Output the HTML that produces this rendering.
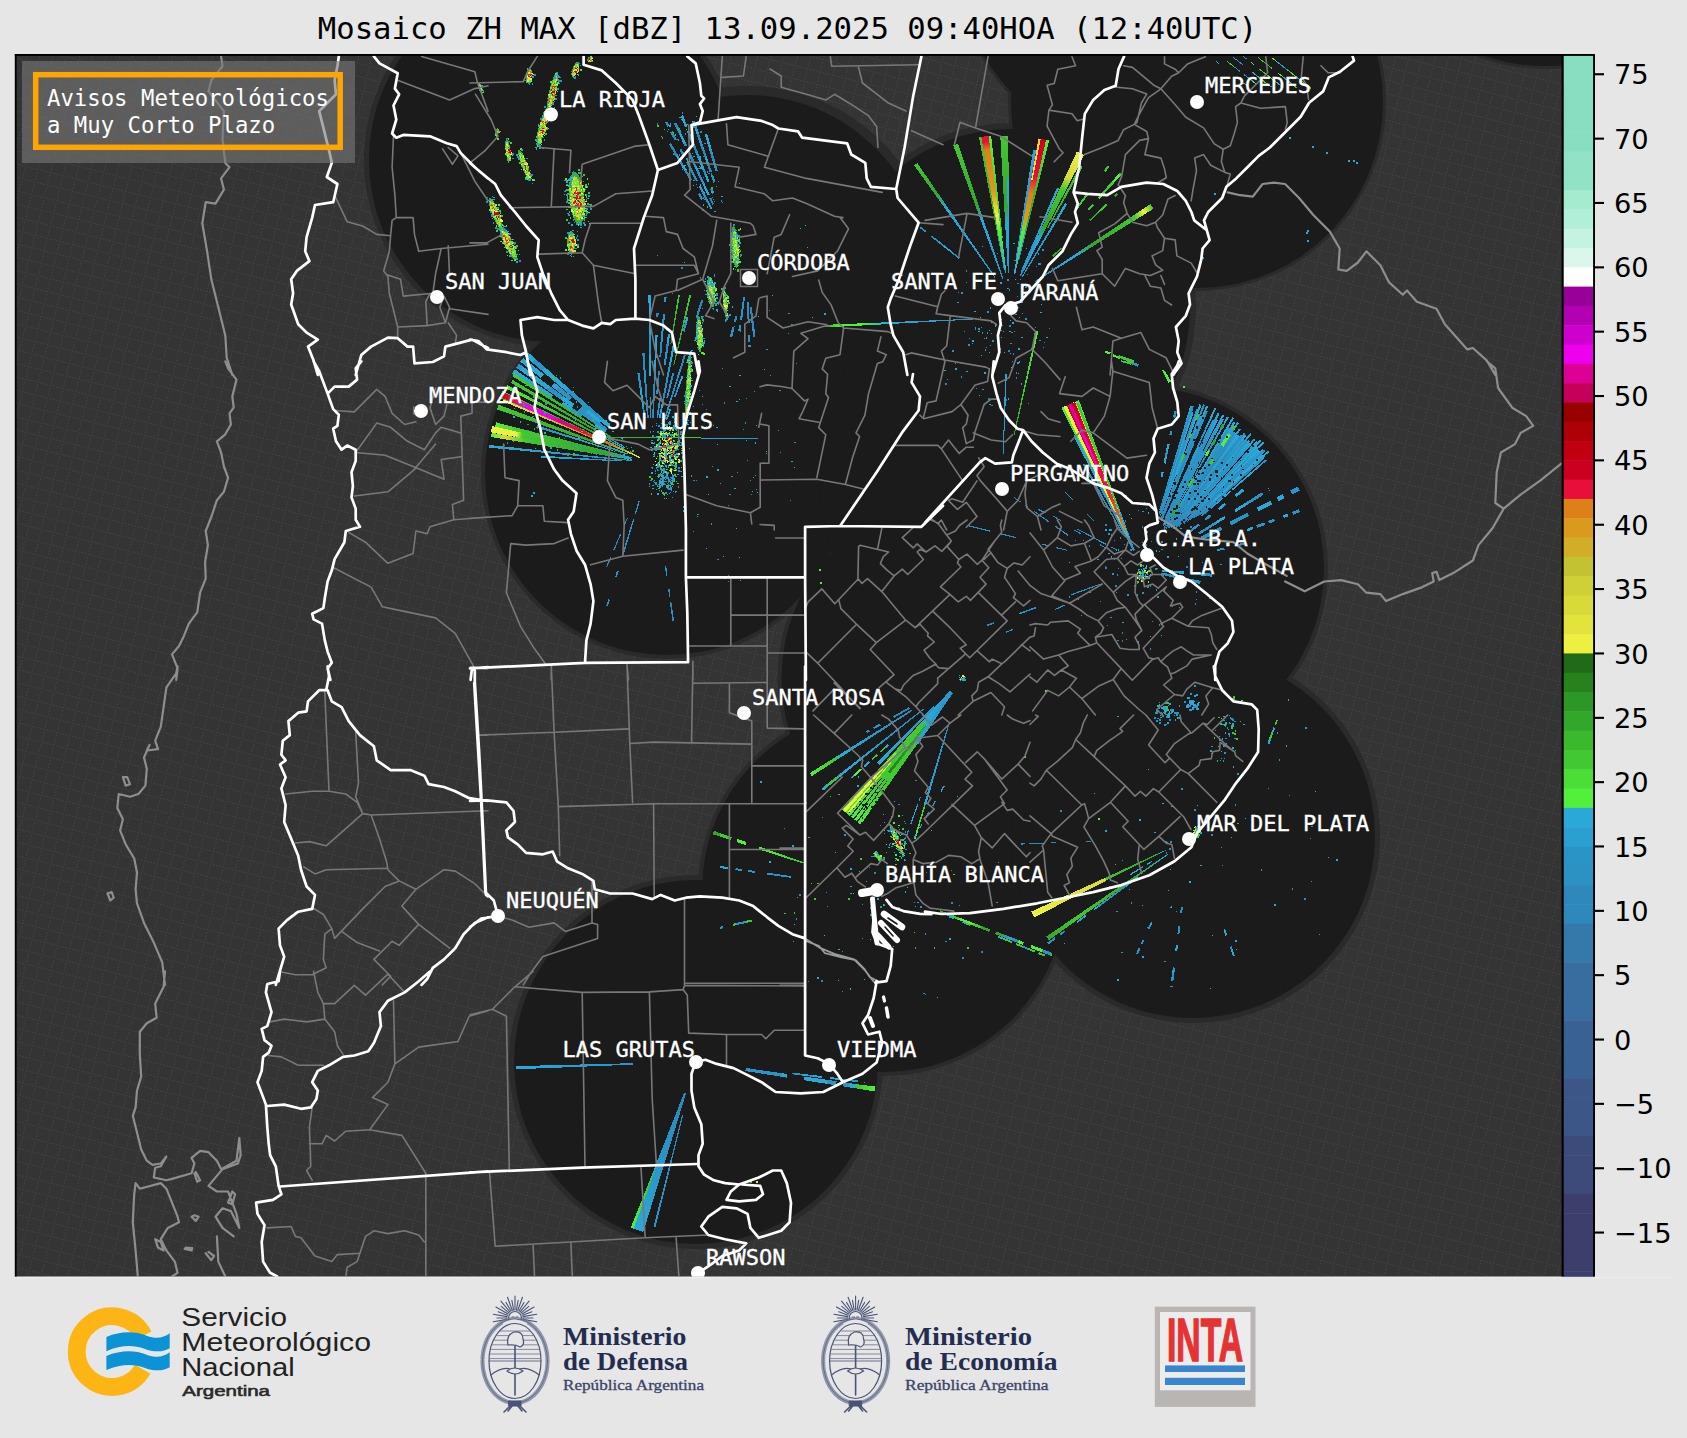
<!DOCTYPE html>
<html lang="es"><head><meta charset="utf-8"><title>Mosaico ZH MAX</title>
<style>html,body{margin:0;padding:0;background:#e6e6e6;}svg{display:block}</style></head>
<body>
<svg width="1687" height="1438" viewBox="0 0 1687 1438">
<defs>
<pattern id="tex" width="12.9" height="12.9" patternUnits="userSpaceOnUse" patternTransform="rotate(14)"><path d="M0 .5H12.9M.5 0V12.9" stroke="#666666" stroke-width="1" stroke-dasharray="1 2.225" fill="none"/></pattern>
<clipPath id="mapclip"><rect x="16" y="55" width="1546.5" height="1221.8"/></clipPath>
<linearGradient id="g1" gradientUnits="userSpaceOnUse" x1="1002.9" y1="279.1" x2="955.8" y2="144.7"><stop offset="0.00" stop-color="#2b94c6"/><stop offset="0.45" stop-color="#2aa8d8"/><stop offset="0.55" stop-color="#33a62c"/><stop offset="1.00" stop-color="#42c832"/></linearGradient>
<linearGradient id="g2" gradientUnits="userSpaceOnUse" x1="1004.4" y1="268.4" x2="981.9" y2="136.8"><stop offset="0.00" stop-color="#2b94c6"/><stop offset="0.40" stop-color="#33a62c"/><stop offset="1.00" stop-color="#42c832"/></linearGradient>
<linearGradient id="g3" gradientUnits="userSpaceOnUse" x1="1005.8" y1="273.3" x2="985.3" y2="136.3"><stop offset="0.00" stop-color="#2aa8d8"/><stop offset="0.30" stop-color="#52f03c"/><stop offset="0.42" stop-color="#eef040"/><stop offset="0.60" stop-color="#da9a1e"/><stop offset="0.90" stop-color="#de8018"/><stop offset="0.96" stop-color="#e8103a"/><stop offset="1.00" stop-color="#e8103a"/></linearGradient>
<linearGradient id="g4" gradientUnits="userSpaceOnUse" x1="1002.3" y1="238.4" x2="989.8" y2="135.7"><stop offset="0.00" stop-color="#42c832"/><stop offset="1.00" stop-color="#52f03c"/></linearGradient>
<linearGradient id="g5" gradientUnits="userSpaceOnUse" x1="1008.7" y1="273.0" x2="1004.3" y2="136.3"><stop offset="0.00" stop-color="#2b94c6"/><stop offset="0.35" stop-color="#2aa8d8"/><stop offset="0.50" stop-color="#33a62c"/><stop offset="1.00" stop-color="#42c832"/></linearGradient>
<linearGradient id="g6" gradientUnits="userSpaceOnUse" x1="1018.7" y1="259.1" x2="1046.6" y2="140.1"><stop offset="0.00" stop-color="#2b94c6"/><stop offset="0.40" stop-color="#33a62c"/><stop offset="1.00" stop-color="#52f03c"/></linearGradient>
<linearGradient id="g7" gradientUnits="userSpaceOnUse" x1="1016.2" y1="258.6" x2="1034.6" y2="150.1"><stop offset="0.00" stop-color="#2b94c6"/><stop offset="1.00" stop-color="#2aa8d8"/></linearGradient>
<linearGradient id="g8" gradientUnits="userSpaceOnUse" x1="1014.5" y1="273.5" x2="1042.2" y2="139.1"><stop offset="0.00" stop-color="#2aa8d8"/><stop offset="0.30" stop-color="#52f03c"/><stop offset="0.42" stop-color="#da9a1e"/><stop offset="0.60" stop-color="#de8018"/><stop offset="0.72" stop-color="#e8103a"/><stop offset="1.00" stop-color="#cb0020"/></linearGradient>
<linearGradient id="g9" gradientUnits="userSpaceOnUse" x1="1031.8" y1="180.1" x2="1039.7" y2="138.6"><stop offset="0.00" stop-color="#eef040"/><stop offset="1.00" stop-color="#d7da38"/></linearGradient>
<linearGradient id="g10" gradientUnits="userSpaceOnUse" x1="1020.5" y1="275.6" x2="1080.6" y2="153.1"><stop offset="0.00" stop-color="#2b94c6"/><stop offset="0.30" stop-color="#2aa8d8"/><stop offset="0.40" stop-color="#33a62c"/><stop offset="0.70" stop-color="#42c832"/><stop offset="0.80" stop-color="#d7da38"/><stop offset="1.00" stop-color="#eef040"/></linearGradient>
<linearGradient id="g11" gradientUnits="userSpaceOnUse" x1="1047.8" y1="227.8" x2="1081.4" y2="166.3"><stop offset="0.00" stop-color="#33a62c"/><stop offset="1.00" stop-color="#42c832"/></linearGradient>
<linearGradient id="g12" gradientUnits="userSpaceOnUse" x1="1021.6" y1="270.6" x2="1058.0" y2="188.2"><stop offset="0.00" stop-color="#2b94c6"/><stop offset="1.00" stop-color="#2aa8d8"/></linearGradient>
<linearGradient id="g13" gradientUnits="userSpaceOnUse" x1="995.2" y1="277.5" x2="915.8" y2="164.3"><stop offset="0.00" stop-color="#2b94c6"/><stop offset="0.60" stop-color="#2aa8d8"/><stop offset="0.75" stop-color="#33a62c"/><stop offset="1.00" stop-color="#42c832"/></linearGradient>
<linearGradient id="g14" gradientUnits="userSpaceOnUse" x1="1034.7" y1="281.8" x2="1152.1" y2="206.4"><stop offset="0.00" stop-color="#2b94c6"/><stop offset="0.35" stop-color="#2aa8d8"/><stop offset="0.50" stop-color="#33a62c"/><stop offset="0.85" stop-color="#42c832"/><stop offset="0.93" stop-color="#eef040"/><stop offset="1.00" stop-color="#42c832"/></linearGradient>
<linearGradient id="g15" gradientUnits="userSpaceOnUse" x1="1022.4" y1="276.6" x2="1066.2" y2="203.7"><stop offset="0.00" stop-color="#2b94c6"/><stop offset="1.00" stop-color="#2aa8d8"/></linearGradient>
<linearGradient id="g16" gradientUnits="userSpaceOnUse" x1="975.0" y1="319.0" x2="829.0" y2="326.0"><stop offset="0.00" stop-color="#2b94c6"/><stop offset="0.60" stop-color="#2aa8d8"/><stop offset="0.78" stop-color="#52f03c"/><stop offset="0.90" stop-color="#52f03c"/><stop offset="1.00" stop-color="#42c832"/></linearGradient>
<linearGradient id="g17" gradientUnits="userSpaceOnUse" x1="1014.0" y1="435.3" x2="1037.3" y2="330.9"><stop offset="0.00" stop-color="#33a62c"/><stop offset="1.00" stop-color="#52f03c"/></linearGradient>
<linearGradient id="g18" gradientUnits="userSpaceOnUse" x1="1003.2" y1="454.0" x2="1006.0" y2="374.1"><stop offset="0.00" stop-color="#2b94c6"/><stop offset="1.00" stop-color="#2aa8d8"/></linearGradient>
<linearGradient id="g19" gradientUnits="userSpaceOnUse" x1="1159.7" y1="510.5" x2="1191.1" y2="406.2"><stop offset="0.00" stop-color="#2e88ba"/><stop offset="0.30" stop-color="#2b94c6"/><stop offset="0.75" stop-color="#2b94c6"/><stop offset="1.00" stop-color="#2aa8d8"/></linearGradient>
<linearGradient id="g20" gradientUnits="userSpaceOnUse" x1="1159.5" y1="513.0" x2="1192.9" y2="406.2"><stop offset="0.00" stop-color="#2e88ba"/><stop offset="0.30" stop-color="#2e88ba"/><stop offset="0.75" stop-color="#2e88ba"/><stop offset="1.00" stop-color="#2b94c6"/></linearGradient>
<linearGradient id="g21" gradientUnits="userSpaceOnUse" x1="1159.7" y1="514.2" x2="1192.6" y2="412.4"><stop offset="0.00" stop-color="#2e88ba"/><stop offset="0.30" stop-color="#2aa8d8"/><stop offset="0.75" stop-color="#2aa8d8"/><stop offset="1.00" stop-color="#2aa8d8"/></linearGradient>
<linearGradient id="g22" gradientUnits="userSpaceOnUse" x1="1161.1" y1="511.8" x2="1185.2" y2="439.5"><stop offset="0.00" stop-color="#2e88ba"/><stop offset="0.30" stop-color="#2b94c6"/><stop offset="0.75" stop-color="#2b94c6"/><stop offset="1.00" stop-color="#2b94c6"/></linearGradient>
<linearGradient id="g23" gradientUnits="userSpaceOnUse" x1="1160.1" y1="516.4" x2="1197.0" y2="409.2"><stop offset="0.00" stop-color="#2e88ba"/><stop offset="0.30" stop-color="#2b94c6"/><stop offset="0.75" stop-color="#2b94c6"/><stop offset="1.00" stop-color="#2b94c6"/></linearGradient>
<linearGradient id="g24" gradientUnits="userSpaceOnUse" x1="1161.7" y1="513.5" x2="1200.3" y2="404.7"><stop offset="0.00" stop-color="#2e88ba"/><stop offset="0.30" stop-color="#2aa8d8"/><stop offset="0.75" stop-color="#2aa8d8"/><stop offset="1.00" stop-color="#2aa8d8"/></linearGradient>
<linearGradient id="g25" gradientUnits="userSpaceOnUse" x1="1161.0" y1="518.6" x2="1203.9" y2="404.6"><stop offset="0.00" stop-color="#2e88ba"/><stop offset="0.30" stop-color="#2b94c6"/><stop offset="0.75" stop-color="#2b94c6"/><stop offset="1.00" stop-color="#2b94c6"/></linearGradient>
<linearGradient id="g26" gradientUnits="userSpaceOnUse" x1="1162.6" y1="515.8" x2="1201.3" y2="416.1"><stop offset="0.00" stop-color="#2e88ba"/><stop offset="0.30" stop-color="#2b94c6"/><stop offset="0.75" stop-color="#2b94c6"/><stop offset="1.00" stop-color="#2aa8d8"/></linearGradient>
<linearGradient id="g27" gradientUnits="userSpaceOnUse" x1="1162.2" y1="518.4" x2="1207.1" y2="405.9"><stop offset="0.00" stop-color="#2e88ba"/><stop offset="0.30" stop-color="#2e88ba"/><stop offset="0.75" stop-color="#2e88ba"/><stop offset="1.00" stop-color="#2aa8d8"/></linearGradient>
<linearGradient id="g28" gradientUnits="userSpaceOnUse" x1="1161.8" y1="520.8" x2="1206.9" y2="410.8"><stop offset="0.00" stop-color="#2e88ba"/><stop offset="0.30" stop-color="#2b94c6"/><stop offset="0.75" stop-color="#2b94c6"/><stop offset="1.00" stop-color="#2b94c6"/></linearGradient>
<linearGradient id="g29" gradientUnits="userSpaceOnUse" x1="1164.7" y1="519.3" x2="1215.4" y2="408.0"><stop offset="0.00" stop-color="#2e88ba"/><stop offset="0.30" stop-color="#2b94c6"/><stop offset="0.75" stop-color="#2b94c6"/><stop offset="1.00" stop-color="#2aa8d8"/></linearGradient>
<linearGradient id="g30" gradientUnits="userSpaceOnUse" x1="1164.0" y1="521.9" x2="1198.8" y2="447.5"><stop offset="0.00" stop-color="#2e88ba"/><stop offset="0.30" stop-color="#2b94c6"/><stop offset="0.75" stop-color="#2b94c6"/><stop offset="1.00" stop-color="#2aa8d8"/></linearGradient>
<linearGradient id="g31" gradientUnits="userSpaceOnUse" x1="1163.3" y1="524.6" x2="1213.5" y2="419.8"><stop offset="0.00" stop-color="#2e88ba"/><stop offset="0.30" stop-color="#2b94c6"/><stop offset="0.75" stop-color="#2b94c6"/><stop offset="1.00" stop-color="#2b94c6"/></linearGradient>
<linearGradient id="g32" gradientUnits="userSpaceOnUse" x1="1162.9" y1="526.4" x2="1218.6" y2="413.1"><stop offset="0.00" stop-color="#2e88ba"/><stop offset="0.30" stop-color="#2b94c6"/><stop offset="0.75" stop-color="#2b94c6"/><stop offset="1.00" stop-color="#2aa8d8"/></linearGradient>
<linearGradient id="g33" gradientUnits="userSpaceOnUse" x1="1163.9" y1="525.4" x2="1217.0" y2="419.9"><stop offset="0.00" stop-color="#2e88ba"/><stop offset="0.30" stop-color="#2b94c6"/><stop offset="0.75" stop-color="#2b94c6"/><stop offset="1.00" stop-color="#2aa8d8"/></linearGradient>
<linearGradient id="g34" gradientUnits="userSpaceOnUse" x1="1164.5" y1="525.4" x2="1202.6" y2="451.3"><stop offset="0.00" stop-color="#2e88ba"/><stop offset="0.30" stop-color="#2b94c6"/><stop offset="0.75" stop-color="#2b94c6"/><stop offset="1.00" stop-color="#2b94c6"/></linearGradient>
<linearGradient id="g35" gradientUnits="userSpaceOnUse" x1="1165.3" y1="524.9" x2="1223.2" y2="415.0"><stop offset="0.00" stop-color="#2e88ba"/><stop offset="0.30" stop-color="#2b94c6"/><stop offset="0.75" stop-color="#2b94c6"/><stop offset="1.00" stop-color="#2aa8d8"/></linearGradient>
<linearGradient id="g36" gradientUnits="userSpaceOnUse" x1="1164.0" y1="528.2" x2="1223.0" y2="418.8"><stop offset="0.00" stop-color="#2e88ba"/><stop offset="0.30" stop-color="#2b94c6"/><stop offset="0.75" stop-color="#2b94c6"/><stop offset="1.00" stop-color="#2aa8d8"/></linearGradient>
<linearGradient id="g37" gradientUnits="userSpaceOnUse" x1="1164.2" y1="529.6" x2="1227.8" y2="417.0"><stop offset="0.00" stop-color="#2e88ba"/><stop offset="0.30" stop-color="#2b94c6"/><stop offset="0.75" stop-color="#2b94c6"/><stop offset="1.00" stop-color="#2aa8d8"/></linearGradient>
<linearGradient id="g38" gradientUnits="userSpaceOnUse" x1="1166.1" y1="528.2" x2="1200.4" y2="470.1"><stop offset="0.00" stop-color="#2e88ba"/><stop offset="0.30" stop-color="#2b94c6"/><stop offset="0.75" stop-color="#2b94c6"/><stop offset="1.00" stop-color="#2aa8d8"/></linearGradient>
<linearGradient id="g39" gradientUnits="userSpaceOnUse" x1="1165.6" y1="529.9" x2="1233.2" y2="417.9"><stop offset="0.00" stop-color="#2e88ba"/><stop offset="0.30" stop-color="#2aa8d8"/><stop offset="0.75" stop-color="#2aa8d8"/><stop offset="1.00" stop-color="#2aa8d8"/></linearGradient>
<linearGradient id="g40" gradientUnits="userSpaceOnUse" x1="1167.7" y1="527.3" x2="1229.0" y2="427.8"><stop offset="0.00" stop-color="#2e88ba"/><stop offset="0.30" stop-color="#2b94c6"/><stop offset="0.75" stop-color="#2b94c6"/><stop offset="1.00" stop-color="#2b94c6"/></linearGradient>
<linearGradient id="g41" gradientUnits="userSpaceOnUse" x1="1168.1" y1="527.6" x2="1234.3" y2="422.4"><stop offset="0.00" stop-color="#2e88ba"/><stop offset="0.30" stop-color="#2b94c6"/><stop offset="0.75" stop-color="#2b94c6"/><stop offset="1.00" stop-color="#2aa8d8"/></linearGradient>
<linearGradient id="g42" gradientUnits="userSpaceOnUse" x1="1169.8" y1="525.8" x2="1232.7" y2="428.0"><stop offset="0.00" stop-color="#2e88ba"/><stop offset="0.30" stop-color="#2b94c6"/><stop offset="0.75" stop-color="#2b94c6"/><stop offset="1.00" stop-color="#2aa8d8"/></linearGradient>
<linearGradient id="g43" gradientUnits="userSpaceOnUse" x1="1169.7" y1="526.8" x2="1238.2" y2="422.6"><stop offset="0.00" stop-color="#2e88ba"/><stop offset="0.30" stop-color="#2e88ba"/><stop offset="0.75" stop-color="#2e88ba"/><stop offset="1.00" stop-color="#2aa8d8"/></linearGradient>
<linearGradient id="g44" gradientUnits="userSpaceOnUse" x1="1169.3" y1="528.3" x2="1234.0" y2="431.9"><stop offset="0.00" stop-color="#2e88ba"/><stop offset="0.30" stop-color="#2b94c6"/><stop offset="0.75" stop-color="#2b94c6"/><stop offset="1.00" stop-color="#2b94c6"/></linearGradient>
<linearGradient id="g45" gradientUnits="userSpaceOnUse" x1="1170.9" y1="526.7" x2="1234.9" y2="433.4"><stop offset="0.00" stop-color="#2e88ba"/><stop offset="0.30" stop-color="#2e88ba"/><stop offset="0.75" stop-color="#2e88ba"/><stop offset="1.00" stop-color="#2b94c6"/></linearGradient>
<linearGradient id="g46" gradientUnits="userSpaceOnUse" x1="1172.0" y1="526.1" x2="1239.9" y2="428.9"><stop offset="0.00" stop-color="#2e88ba"/><stop offset="0.30" stop-color="#2e88ba"/><stop offset="0.75" stop-color="#2e88ba"/><stop offset="1.00" stop-color="#2aa8d8"/></linearGradient>
<linearGradient id="g47" gradientUnits="userSpaceOnUse" x1="1170.8" y1="528.7" x2="1237.7" y2="434.8"><stop offset="0.00" stop-color="#2e88ba"/><stop offset="0.30" stop-color="#2aa8d8"/><stop offset="0.75" stop-color="#2aa8d8"/><stop offset="1.00" stop-color="#2aa8d8"/></linearGradient>
<linearGradient id="g48" gradientUnits="userSpaceOnUse" x1="1173.5" y1="525.7" x2="1239.0" y2="435.8"><stop offset="0.00" stop-color="#2e88ba"/><stop offset="0.30" stop-color="#2b94c6"/><stop offset="0.75" stop-color="#2b94c6"/><stop offset="1.00" stop-color="#2aa8d8"/></linearGradient>
<linearGradient id="g49" gradientUnits="userSpaceOnUse" x1="1175.2" y1="524.3" x2="1241.7" y2="434.8"><stop offset="0.00" stop-color="#2e88ba"/><stop offset="0.30" stop-color="#2e88ba"/><stop offset="0.75" stop-color="#2e88ba"/><stop offset="1.00" stop-color="#2b94c6"/></linearGradient>
<linearGradient id="g50" gradientUnits="userSpaceOnUse" x1="1172.8" y1="528.4" x2="1244.9" y2="433.1"><stop offset="0.00" stop-color="#2e88ba"/><stop offset="0.30" stop-color="#2b94c6"/><stop offset="0.75" stop-color="#2b94c6"/><stop offset="1.00" stop-color="#2b94c6"/></linearGradient>
<linearGradient id="g51" gradientUnits="userSpaceOnUse" x1="1173.3" y1="528.5" x2="1245.5" y2="435.0"><stop offset="0.00" stop-color="#2e88ba"/><stop offset="0.30" stop-color="#2b94c6"/><stop offset="0.75" stop-color="#2b94c6"/><stop offset="1.00" stop-color="#2aa8d8"/></linearGradient>
<linearGradient id="g52" gradientUnits="userSpaceOnUse" x1="1175.8" y1="526.1" x2="1244.1" y2="439.5"><stop offset="0.00" stop-color="#2e88ba"/><stop offset="0.30" stop-color="#2b94c6"/><stop offset="0.75" stop-color="#2b94c6"/><stop offset="1.00" stop-color="#2b94c6"/></linearGradient>
<linearGradient id="g53" gradientUnits="userSpaceOnUse" x1="1174.6" y1="528.5" x2="1251.1" y2="433.3"><stop offset="0.00" stop-color="#2e88ba"/><stop offset="0.30" stop-color="#2aa8d8"/><stop offset="0.75" stop-color="#2aa8d8"/><stop offset="1.00" stop-color="#2b94c6"/></linearGradient>
<linearGradient id="g54" gradientUnits="userSpaceOnUse" x1="1175.8" y1="527.8" x2="1247.2" y2="440.7"><stop offset="0.00" stop-color="#2e88ba"/><stop offset="0.30" stop-color="#2b94c6"/><stop offset="0.75" stop-color="#2b94c6"/><stop offset="1.00" stop-color="#2b94c6"/></linearGradient>
<linearGradient id="g55" gradientUnits="userSpaceOnUse" x1="1176.8" y1="527.4" x2="1249.1" y2="440.9"><stop offset="0.00" stop-color="#2e88ba"/><stop offset="0.30" stop-color="#2b94c6"/><stop offset="0.75" stop-color="#2b94c6"/><stop offset="1.00" stop-color="#2aa8d8"/></linearGradient>
<linearGradient id="g56" gradientUnits="userSpaceOnUse" x1="1178.7" y1="525.9" x2="1249.4" y2="443.0"><stop offset="0.00" stop-color="#2e88ba"/><stop offset="0.30" stop-color="#2b94c6"/><stop offset="0.75" stop-color="#2b94c6"/><stop offset="1.00" stop-color="#2aa8d8"/></linearGradient>
<linearGradient id="g57" gradientUnits="userSpaceOnUse" x1="1179.1" y1="526.3" x2="1254.9" y2="439.1"><stop offset="0.00" stop-color="#2e88ba"/><stop offset="0.30" stop-color="#2b94c6"/><stop offset="0.75" stop-color="#2b94c6"/><stop offset="1.00" stop-color="#2aa8d8"/></linearGradient>
<linearGradient id="g58" gradientUnits="userSpaceOnUse" x1="1183.6" y1="523.0" x2="1257.3" y2="441.4"><stop offset="0.00" stop-color="#2e88ba"/><stop offset="0.30" stop-color="#2b94c6"/><stop offset="0.75" stop-color="#2b94c6"/><stop offset="1.00" stop-color="#2aa8d8"/></linearGradient>
<linearGradient id="g59" gradientUnits="userSpaceOnUse" x1="1183.7" y1="523.7" x2="1260.6" y2="440.2"><stop offset="0.00" stop-color="#2e88ba"/><stop offset="0.30" stop-color="#2b94c6"/><stop offset="0.75" stop-color="#2b94c6"/><stop offset="1.00" stop-color="#2aa8d8"/></linearGradient>
<linearGradient id="g60" gradientUnits="userSpaceOnUse" x1="1188.3" y1="519.7" x2="1256.9" y2="446.6"><stop offset="0.00" stop-color="#2e88ba"/><stop offset="0.30" stop-color="#2aa8d8"/><stop offset="0.75" stop-color="#2aa8d8"/><stop offset="1.00" stop-color="#2aa8d8"/></linearGradient>
<linearGradient id="g61" gradientUnits="userSpaceOnUse" x1="1187.1" y1="521.9" x2="1263.3" y2="442.3"><stop offset="0.00" stop-color="#2e88ba"/><stop offset="0.30" stop-color="#2b94c6"/><stop offset="0.75" stop-color="#2b94c6"/><stop offset="1.00" stop-color="#2aa8d8"/></linearGradient>
<linearGradient id="g62" gradientUnits="userSpaceOnUse" x1="1189.8" y1="520.0" x2="1258.8" y2="449.3"><stop offset="0.00" stop-color="#2e88ba"/><stop offset="0.30" stop-color="#2aa8d8"/><stop offset="0.75" stop-color="#2aa8d8"/><stop offset="1.00" stop-color="#2aa8d8"/></linearGradient>
<linearGradient id="g63" gradientUnits="userSpaceOnUse" x1="1192.6" y1="518.2" x2="1259.6" y2="450.8"><stop offset="0.00" stop-color="#2e88ba"/><stop offset="0.30" stop-color="#2e88ba"/><stop offset="0.75" stop-color="#2e88ba"/><stop offset="1.00" stop-color="#2aa8d8"/></linearGradient>
<linearGradient id="g64" gradientUnits="userSpaceOnUse" x1="1193.0" y1="518.7" x2="1262.8" y2="449.8"><stop offset="0.00" stop-color="#2e88ba"/><stop offset="0.30" stop-color="#2b94c6"/><stop offset="0.75" stop-color="#2b94c6"/><stop offset="1.00" stop-color="#2aa8d8"/></linearGradient>
<linearGradient id="g65" gradientUnits="userSpaceOnUse" x1="1196.2" y1="516.6" x2="1265.0" y2="450.1"><stop offset="0.00" stop-color="#2e88ba"/><stop offset="0.30" stop-color="#2b94c6"/><stop offset="0.75" stop-color="#2b94c6"/><stop offset="1.00" stop-color="#2b94c6"/></linearGradient>
<linearGradient id="g66" gradientUnits="userSpaceOnUse" x1="1197.7" y1="516.2" x2="1261.8" y2="455.3"><stop offset="0.00" stop-color="#2e88ba"/><stop offset="0.30" stop-color="#2aa8d8"/><stop offset="0.75" stop-color="#2aa8d8"/><stop offset="1.00" stop-color="#2aa8d8"/></linearGradient>
<linearGradient id="g67" gradientUnits="userSpaceOnUse" x1="1199.7" y1="515.3" x2="1268.7" y2="451.1"><stop offset="0.00" stop-color="#2e88ba"/><stop offset="0.30" stop-color="#2aa8d8"/><stop offset="0.75" stop-color="#2aa8d8"/><stop offset="1.00" stop-color="#2aa8d8"/></linearGradient>
<linearGradient id="g68" gradientUnits="userSpaceOnUse" x1="1202.1" y1="514.1" x2="1265.3" y2="456.4"><stop offset="0.00" stop-color="#2e88ba"/><stop offset="0.30" stop-color="#2e88ba"/><stop offset="0.75" stop-color="#2e88ba"/><stop offset="1.00" stop-color="#2aa8d8"/></linearGradient>
<linearGradient id="g69" gradientUnits="userSpaceOnUse" x1="1201.3" y1="515.9" x2="1226.1" y2="493.7"><stop offset="0.00" stop-color="#2e88ba"/><stop offset="0.30" stop-color="#2b94c6"/><stop offset="0.75" stop-color="#2b94c6"/><stop offset="1.00" stop-color="#2aa8d8"/></linearGradient>
<linearGradient id="g70" gradientUnits="userSpaceOnUse" x1="1204.4" y1="514.2" x2="1266.1" y2="460.0"><stop offset="0.00" stop-color="#2e88ba"/><stop offset="0.30" stop-color="#2aa8d8"/><stop offset="0.75" stop-color="#2aa8d8"/><stop offset="1.00" stop-color="#2b94c6"/></linearGradient>
<linearGradient id="g71" gradientUnits="userSpaceOnUse" x1="1134.0" y1="550.7" x2="1070.2" y2="403.9"><stop offset="0.00" stop-color="#2b94c6"/><stop offset="0.25" stop-color="#2aa8d8"/><stop offset="0.40" stop-color="#42c832"/><stop offset="1.00" stop-color="#52f03c"/></linearGradient>
<linearGradient id="g72" gradientUnits="userSpaceOnUse" x1="1129.9" y1="541.6" x2="1069.4" y2="404.3"><stop offset="0.00" stop-color="#2aa8d8"/><stop offset="0.30" stop-color="#eef040"/><stop offset="1.00" stop-color="#eef040"/></linearGradient>
<linearGradient id="g73" gradientUnits="userSpaceOnUse" x1="1126.2" y1="532.3" x2="1070.8" y2="403.7"><stop offset="0.00" stop-color="#de8018"/><stop offset="0.40" stop-color="#e8103a"/><stop offset="1.00" stop-color="#cb0020"/></linearGradient>
<linearGradient id="g74" gradientUnits="userSpaceOnUse" x1="1101.8" y1="477.4" x2="1069.6" y2="404.2"><stop offset="0.00" stop-color="#e8103a"/><stop offset="0.30" stop-color="#ee00ee"/><stop offset="1.00" stop-color="#dc0094"/></linearGradient>
<linearGradient id="g75" gradientUnits="userSpaceOnUse" x1="1124.0" y1="533.3" x2="1074.6" y2="435.0"><stop offset="0.00" stop-color="#2b94c6"/><stop offset="1.00" stop-color="#2aa8d8"/></linearGradient>
<linearGradient id="g76" gradientUnits="userSpaceOnUse" x1="1122.6" y1="534.0" x2="1083.8" y2="464.0"><stop offset="0.00" stop-color="#2e88ba"/><stop offset="1.00" stop-color="#2b94c6"/></linearGradient>
<linearGradient id="g77" gradientUnits="userSpaceOnUse" x1="617.3" y1="441.0" x2="513.5" y2="374.9"><stop offset="0.00" stop-color="#33a62c"/><stop offset="1.00" stop-color="#42c832"/></linearGradient>
<linearGradient id="g78" gradientUnits="userSpaceOnUse" x1="625.1" y1="447.4" x2="511.9" y2="381.5"><stop offset="0.00" stop-color="#2aa8d8"/><stop offset="0.30" stop-color="#33a62c"/><stop offset="1.00" stop-color="#42c832"/></linearGradient>
<linearGradient id="g79" gradientUnits="userSpaceOnUse" x1="624.4" y1="448.6" x2="506.7" y2="386.7"><stop offset="0.00" stop-color="#2aa8d8"/><stop offset="0.30" stop-color="#33a62c"/><stop offset="1.00" stop-color="#52f03c"/></linearGradient>
<linearGradient id="g80" gradientUnits="userSpaceOnUse" x1="632.8" y1="454.2" x2="500.7" y2="394.3"><stop offset="0.00" stop-color="#42c832"/><stop offset="0.30" stop-color="#33a62c"/><stop offset="1.00" stop-color="#42c832"/></linearGradient>
<linearGradient id="g81" gradientUnits="userSpaceOnUse" x1="640.1" y1="457.5" x2="501.6" y2="394.8"><stop offset="0.00" stop-color="#eef040"/><stop offset="0.20" stop-color="#de8018"/><stop offset="0.40" stop-color="#e8103a"/><stop offset="0.58" stop-color="#dc0094"/><stop offset="0.65" stop-color="#ee00ee"/><stop offset="0.85" stop-color="#ee00ee"/><stop offset="0.92" stop-color="#e8103a"/><stop offset="1.00" stop-color="#cb0020"/></linearGradient>
<linearGradient id="g82" gradientUnits="userSpaceOnUse" x1="595.7" y1="439.2" x2="503.5" y2="400.5"><stop offset="0.00" stop-color="#de8018"/><stop offset="1.00" stop-color="#eef040"/></linearGradient>
<linearGradient id="g83" gradientUnits="userSpaceOnUse" x1="627.5" y1="454.0" x2="497.7" y2="407.0"><stop offset="0.00" stop-color="#2aa8d8"/><stop offset="0.25" stop-color="#33a62c"/><stop offset="1.00" stop-color="#42c832"/></linearGradient>
<linearGradient id="g84" gradientUnits="userSpaceOnUse" x1="612.9" y1="450.5" x2="536.6" y2="426.4"><stop offset="0.00" stop-color="#2aa8d8"/><stop offset="1.00" stop-color="#2b94c6"/></linearGradient>
<linearGradient id="g85" gradientUnits="userSpaceOnUse" x1="631.6" y1="457.8" x2="495.6" y2="424.6"><stop offset="0.00" stop-color="#2aa8d8"/><stop offset="0.20" stop-color="#33a62c"/><stop offset="0.80" stop-color="#42c832"/><stop offset="1.00" stop-color="#52f03c"/></linearGradient>
<linearGradient id="g86" gradientUnits="userSpaceOnUse" x1="631.4" y1="458.4" x2="491.4" y2="429.2"><stop offset="0.00" stop-color="#2aa8d8"/><stop offset="0.20" stop-color="#33a62c"/><stop offset="0.78" stop-color="#42c832"/><stop offset="0.82" stop-color="#eef040"/><stop offset="1.00" stop-color="#eef040"/></linearGradient>
<linearGradient id="g87" gradientUnits="userSpaceOnUse" x1="631.3" y1="459.1" x2="491.4" y2="434.9"><stop offset="0.00" stop-color="#2aa8d8"/><stop offset="0.20" stop-color="#33a62c"/><stop offset="0.75" stop-color="#42c832"/><stop offset="0.90" stop-color="#d7da38"/><stop offset="1.00" stop-color="#52f03c"/></linearGradient>
<linearGradient id="g88" gradientUnits="userSpaceOnUse" x1="631.1" y1="460.5" x2="488.8" y2="446.3"><stop offset="0.00" stop-color="#2b94c6"/><stop offset="1.00" stop-color="#2aa8d8"/></linearGradient>
<linearGradient id="g89" gradientUnits="userSpaceOnUse" x1="621.0" y1="460.9" x2="541.2" y2="456.7"><stop offset="0.00" stop-color="#2b94c6"/><stop offset="1.00" stop-color="#2aa8d8"/></linearGradient>
<linearGradient id="g90" gradientUnits="userSpaceOnUse" x1="673.8" y1="365.1" x2="690.3" y2="295.0"><stop offset="0.00" stop-color="#33a62c"/><stop offset="1.00" stop-color="#42c832"/></linearGradient>
<linearGradient id="g91" gradientUnits="userSpaceOnUse" x1="670.8" y1="344.1" x2="679.1" y2="294.8"><stop offset="0.00" stop-color="#33a62c"/><stop offset="1.00" stop-color="#42c832"/></linearGradient>
<linearGradient id="g92" gradientUnits="userSpaceOnUse" x1="604.5" y1="437.4" x2="700.5" y2="437.4"><stop offset="0.00" stop-color="#33a62c"/><stop offset="1.00" stop-color="#42c832"/></linearGradient>
<linearGradient id="g93" gradientUnits="userSpaceOnUse" x1="700.5" y1="438.2" x2="757.5" y2="438.7"><stop offset="0.00" stop-color="#2aa8d8"/><stop offset="1.00" stop-color="#2b94c6"/></linearGradient>
<linearGradient id="g94" gradientUnits="userSpaceOnUse" x1="951.3" y1="692.1" x2="851.4" y2="817.1"><stop offset="0.00" stop-color="#2b94c6"/><stop offset="0.22" stop-color="#2aa8d8"/><stop offset="0.30" stop-color="#42c832"/><stop offset="0.70" stop-color="#42c832"/><stop offset="1.00" stop-color="#52f03c"/></linearGradient>
<linearGradient id="g95" gradientUnits="userSpaceOnUse" x1="945.1" y1="702.4" x2="916.0" y2="743.1"><stop offset="0.00" stop-color="#2b94c6"/><stop offset="1.00" stop-color="#2aa8d8"/></linearGradient>
<linearGradient id="g96" gradientUnits="userSpaceOnUse" x1="896.1" y1="752.8" x2="844.3" y2="811.1"><stop offset="0.00" stop-color="#52f03c"/><stop offset="0.15" stop-color="#eef040"/><stop offset="1.00" stop-color="#eef040"/></linearGradient>
<linearGradient id="g97" gradientUnits="userSpaceOnUse" x1="891.4" y1="761.9" x2="848.7" y2="812.2"><stop offset="0.00" stop-color="#d7da38"/><stop offset="1.00" stop-color="#eef040"/></linearGradient>
<linearGradient id="g98" gradientUnits="userSpaceOnUse" x1="925.7" y1="725.4" x2="889.0" y2="772.8"><stop offset="0.00" stop-color="#33a62c"/><stop offset="1.00" stop-color="#27821e"/></linearGradient>
<linearGradient id="g99" gradientUnits="userSpaceOnUse" x1="934.5" y1="706.5" x2="878.4" y2="763.6"><stop offset="0.00" stop-color="#2b94c6"/><stop offset="1.00" stop-color="#2aa8d8"/></linearGradient>
<linearGradient id="g100" gradientUnits="userSpaceOnUse" x1="911.9" y1="710.2" x2="810.7" y2="774.7"><stop offset="0.00" stop-color="#2e88ba"/><stop offset="0.30" stop-color="#2b94c6"/><stop offset="0.70" stop-color="#2aa8d8"/><stop offset="0.78" stop-color="#42c832"/><stop offset="1.00" stop-color="#52f03c"/></linearGradient>
<linearGradient id="g101" gradientUnits="userSpaceOnUse" x1="923.4" y1="709.1" x2="822.4" y2="789.4"><stop offset="0.00" stop-color="#2e88ba"/><stop offset="0.40" stop-color="#2b94c6"/><stop offset="0.80" stop-color="#2aa8d8"/><stop offset="0.90" stop-color="#42c832"/><stop offset="1.00" stop-color="#2aa8d8"/></linearGradient>
<linearGradient id="g102" gradientUnits="userSpaceOnUse" x1="948.3" y1="725.9" x2="925.0" y2="804.6"><stop offset="0.00" stop-color="#2e88ba"/><stop offset="1.00" stop-color="#2aa8d8"/></linearGradient>
<linearGradient id="g103" gradientUnits="userSpaceOnUse" x1="925.0" y1="804.6" x2="914.8" y2="839.1"><stop offset="0.00" stop-color="#42c832"/><stop offset="1.00" stop-color="#52f03c"/></linearGradient>
<linearGradient id="g104" gradientUnits="userSpaceOnUse" x1="803.4" y1="862.9" x2="758.9" y2="847.9"><stop offset="0.00" stop-color="#42c832"/><stop offset="1.00" stop-color="#52f03c"/></linearGradient>
<linearGradient id="g105" gradientUnits="userSpaceOnUse" x1="1164.0" y1="851.1" x2="1101.0" y2="881.5"><stop offset="0.00" stop-color="#2aa8d8"/><stop offset="0.20" stop-color="#33a62c"/><stop offset="1.00" stop-color="#42c832"/></linearGradient>
<linearGradient id="g106" gradientUnits="userSpaceOnUse" x1="1105.5" y1="879.3" x2="1032.5" y2="914.6"><stop offset="0.00" stop-color="#d7da38"/><stop offset="1.00" stop-color="#eef040"/></linearGradient>
<linearGradient id="g107" gradientUnits="userSpaceOnUse" x1="1168.1" y1="854.1" x2="1047.6" y2="938.4"><stop offset="0.00" stop-color="#2aa8d8"/><stop offset="0.30" stop-color="#33a62c"/><stop offset="0.75" stop-color="#42c832"/><stop offset="1.00" stop-color="#33a62c"/></linearGradient>
<linearGradient id="g108" gradientUnits="userSpaceOnUse" x1="633.0" y1="1064.0" x2="516.1" y2="1067.7"><stop offset="0.00" stop-color="#2b94c6"/><stop offset="1.00" stop-color="#2aa8d8"/></linearGradient>
<linearGradient id="g109" gradientUnits="userSpaceOnUse" x1="685.1" y1="1093.1" x2="637.2" y2="1230.0"><stop offset="0.00" stop-color="#2e88ba"/><stop offset="0.50" stop-color="#2b94c6"/><stop offset="1.00" stop-color="#2aa8d8"/></linearGradient>
<linearGradient id="g110" gradientUnits="userSpaceOnUse" x1="656.6" y1="1164.7" x2="632.2" y2="1228.2"><stop offset="0.00" stop-color="#2aa8d8"/><stop offset="0.30" stop-color="#42c832"/><stop offset="1.00" stop-color="#52f03c"/></linearGradient>
<linearGradient id="g111" gradientUnits="userSpaceOnUse" x1="682.6" y1="1115.3" x2="654.6" y2="1226.9"><stop offset="0.00" stop-color="#2e88ba"/><stop offset="1.00" stop-color="#2b94c6"/></linearGradient>
<linearGradient id="g112" gradientUnits="userSpaceOnUse" x1="852.2" y1="1085.6" x2="875.0" y2="1089.1"><stop offset="0.00" stop-color="#2aa8d8"/><stop offset="0.30" stop-color="#42c832"/><stop offset="1.00" stop-color="#52f03c"/></linearGradient>
</defs>
<rect width="1687" height="1438" fill="#e6e6e6"/>
<g clip-path="url(#mapclip)">
<rect x="16" y="55" width="1546.5" height="1221.8" fill="#343434"/>
<rect x="16" y="55" width="1546.5" height="1221.8" fill="url(#tex)" opacity="0.5"/>
<g fill="#2a2a2a">
<circle cx="551" cy="160" r="187"/>
<circle cx="747" cy="277" r="191"/>
<circle cx="1011" cy="308" r="185"/>
<circle cx="1197" cy="102" r="189"/>
<circle cx="1143" cy="-35" r="186"/>
<circle cx="667" cy="473" r="186"/>
<circle cx="1002" cy="489" r="186"/>
<circle cx="1142" cy="569" r="186"/>
<circle cx="962.5" cy="678" r="185"/>
<circle cx="884" cy="890" r="186"/>
<circle cx="1193" cy="836" r="187"/>
<circle cx="696" cy="1062" r="187"/>
<circle cx="1545" cy="-122" r="191"/>
</g>
<g fill="#1b1b1b">
<circle cx="551" cy="160" r="182"/>
<circle cx="747" cy="277" r="182"/>
<circle cx="1011" cy="308" r="179"/>
<circle cx="1197" cy="102" r="186"/>
<circle cx="1143" cy="-35" r="183"/>
<circle cx="667" cy="473" r="182"/>
<circle cx="1002" cy="489" r="182"/>
<circle cx="1142" cy="569" r="182"/>
<circle cx="962.5" cy="678" r="181"/>
<circle cx="884" cy="890" r="182"/>
<circle cx="1193" cy="836" r="182"/>
<circle cx="696" cy="1062" r="182"/>
<circle cx="1545" cy="-122" r="188"/>
</g>
<g shape-rendering="crispEdges">
<ellipse cx="529.0" cy="76.0" rx="7.2" ry="2.8" transform="rotate(102.1 529.0 76.0)" fill="#42c832" opacity="0.85"/>
<ellipse cx="529.0" cy="76.0" rx="6.1" ry="1.8" transform="rotate(102.1 529.0 76.0)" fill="#d7da38" opacity="0.8"/>
<ellipse cx="529.0" cy="76.5" rx="4.3" ry="0.8" transform="rotate(102.1 529.0 76.0)" fill="#e8103a" opacity="0.85"/>
<ellipse cx="552.5" cy="91.0" rx="19.5" ry="3.2" transform="rotate(103.3 552.5 91.0)" fill="#42c832" opacity="0.85"/>
<ellipse cx="552.5" cy="91.0" rx="16.6" ry="2.0" transform="rotate(103.3 552.5 91.0)" fill="#d7da38" opacity="0.8"/>
<ellipse cx="552.5" cy="91.5" rx="11.7" ry="1.0" transform="rotate(103.3 552.5 91.0)" fill="#e8103a" opacity="0.85"/>
<ellipse cx="542.2" cy="127.5" rx="20.1" ry="3.2" transform="rotate(103.7 542.2 127.5)" fill="#42c832" opacity="0.85"/>
<ellipse cx="542.2" cy="127.5" rx="17.1" ry="2.0" transform="rotate(103.7 542.2 127.5)" fill="#d7da38" opacity="0.8"/>
<ellipse cx="542.2" cy="128.0" rx="12.0" ry="1.0" transform="rotate(103.7 542.2 127.5)" fill="#e8103a" opacity="0.85"/>
<ellipse cx="575.2" cy="69.5" rx="8.0" ry="2.8" transform="rotate(110.1 575.2 69.5)" fill="#42c832" opacity="0.85"/>
<ellipse cx="575.2" cy="69.5" rx="6.8" ry="1.8" transform="rotate(110.1 575.2 69.5)" fill="#d7da38" opacity="0.8"/>
<ellipse cx="575.2" cy="70.0" rx="4.8" ry="0.8" transform="rotate(110.1 575.2 69.5)" fill="#e8103a" opacity="0.85"/>
<ellipse cx="590.0" cy="59.0" rx="3.6" ry="2.0" transform="rotate(123.7 590.0 59.0)" fill="#42c832" opacity="0.85"/>
<ellipse cx="590.0" cy="59.0" rx="3.1" ry="1.2" transform="rotate(123.7 590.0 59.0)" fill="#d7da38" opacity="0.8"/>
<ellipse cx="590.0" cy="59.5" rx="2.2" ry="0.6" transform="rotate(123.7 590.0 59.0)" fill="#e8103a" opacity="0.85"/>
<ellipse cx="507.9" cy="150.2" rx="11.3" ry="2.4" transform="rotate(82.9 507.9 150.2)" fill="#42c832" opacity="0.85"/>
<ellipse cx="507.9" cy="150.2" rx="9.6" ry="1.5" transform="rotate(82.9 507.9 150.2)" fill="#d7da38" opacity="0.8"/>
<ellipse cx="507.9" cy="150.8" rx="6.8" ry="0.7" transform="rotate(82.9 507.9 150.2)" fill="#e8103a" opacity="0.85"/>
<ellipse cx="524.6" cy="165.5" rx="16.5" ry="3.0" transform="rotate(70.0 524.6 165.5)" fill="#42c832" opacity="0.85"/>
<ellipse cx="524.6" cy="165.5" rx="14.0" ry="1.9" transform="rotate(70.0 524.6 165.5)" fill="#d7da38" opacity="0.8"/>
<ellipse cx="524.6" cy="166.0" rx="9.9" ry="0.9" transform="rotate(70.0 524.6 165.5)" fill="#e8103a" opacity="0.85"/>
<ellipse cx="497.0" cy="132.5" rx="4.5" ry="1.6" transform="rotate(96.3 497.0 132.5)" fill="#42c832" opacity="0.85"/>
<ellipse cx="497.0" cy="132.5" rx="3.8" ry="1.0" transform="rotate(96.3 497.0 132.5)" fill="#d7da38" opacity="0.8"/>
<ellipse cx="497.0" cy="133.0" rx="2.7" ry="0.5" transform="rotate(96.3 497.0 132.5)" fill="#e8103a" opacity="0.85"/>
<ellipse cx="576.8" cy="198.0" rx="26.1" ry="7.6" transform="rotate(85.1 576.8 198.0)" fill="#42c832" opacity="0.85"/>
<ellipse cx="576.8" cy="198.0" rx="22.2" ry="4.8" transform="rotate(85.1 576.8 198.0)" fill="#d7da38" opacity="0.8"/>
<ellipse cx="576.8" cy="198.5" rx="15.7" ry="2.3" transform="rotate(85.1 576.8 198.0)" fill="#e8103a" opacity="0.85"/>
<ellipse cx="571.2" cy="242.5" rx="11.5" ry="4.0" transform="rotate(88.8 571.2 242.5)" fill="#42c832" opacity="0.85"/>
<ellipse cx="571.2" cy="242.5" rx="9.8" ry="2.5" transform="rotate(88.8 571.2 242.5)" fill="#d7da38" opacity="0.8"/>
<ellipse cx="571.2" cy="243.0" rx="6.9" ry="1.2" transform="rotate(88.8 571.2 242.5)" fill="#e8103a" opacity="0.85"/>
<ellipse cx="495.3" cy="213.0" rx="16.0" ry="3.6" transform="rotate(69.2 495.3 213.0)" fill="#42c832" opacity="0.85"/>
<ellipse cx="495.3" cy="213.0" rx="13.6" ry="2.2" transform="rotate(69.2 495.3 213.0)" fill="#d7da38" opacity="0.8"/>
<ellipse cx="495.3" cy="213.5" rx="9.6" ry="1.1" transform="rotate(69.2 495.3 213.0)" fill="#e8103a" opacity="0.85"/>
<ellipse cx="508.1" cy="243.0" rx="18.9" ry="4.0" transform="rotate(64.4 508.1 243.0)" fill="#42c832" opacity="0.85"/>
<ellipse cx="508.1" cy="243.0" rx="16.0" ry="2.5" transform="rotate(64.4 508.1 243.0)" fill="#d7da38" opacity="0.8"/>
<ellipse cx="508.1" cy="243.5" rx="11.3" ry="1.2" transform="rotate(64.4 508.1 243.0)" fill="#e8103a" opacity="0.85"/>
<ellipse cx="480.5" cy="87.5" rx="4.7" ry="1.6" transform="rotate(71.6 480.5 87.5)" fill="#42c832" opacity="0.85"/>
<ellipse cx="480.5" cy="87.5" rx="4.0" ry="1.0" transform="rotate(71.6 480.5 87.5)" fill="#d7da38" opacity="0.8"/>
<ellipse cx="735.0" cy="247.0" rx="21.0" ry="3.6" transform="rotate(86.2 735.0 247.0)" fill="#42c832" opacity="0.85"/>
<ellipse cx="735.0" cy="247.0" rx="17.9" ry="2.2" transform="rotate(86.2 735.0 247.0)" fill="#d7da38" opacity="0.8"/>
<ellipse cx="711.1" cy="291.9" rx="15.5" ry="4.0" transform="rotate(84.8 711.1 291.9)" fill="#42c832" opacity="0.85"/>
<ellipse cx="711.1" cy="291.9" rx="13.1" ry="2.5" transform="rotate(84.8 711.1 291.9)" fill="#d7da38" opacity="0.8"/>
<ellipse cx="725.1" cy="303.1" rx="15.5" ry="2.0" transform="rotate(84.8 725.1 303.1)" fill="#42c832" opacity="0.85"/>
<ellipse cx="725.1" cy="303.1" rx="13.2" ry="1.2" transform="rotate(84.8 725.1 303.1)" fill="#d7da38" opacity="0.8"/>
<ellipse cx="699.2" cy="333.9" rx="18.2" ry="2.8" transform="rotate(87.6 699.2 333.9)" fill="#42c832" opacity="0.85"/>
<ellipse cx="699.2" cy="333.9" rx="15.4" ry="1.8" transform="rotate(87.6 699.2 333.9)" fill="#d7da38" opacity="0.8"/>
<ellipse cx="688.0" cy="387.5" rx="32.6" ry="2.0" transform="rotate(93.5 688.0 387.5)" fill="#42c832" opacity="0.85"/>
<ellipse cx="688.0" cy="387.5" rx="27.7" ry="1.2" transform="rotate(93.5 688.0 387.5)" fill="#d7da38" opacity="0.8"/>
<polygon points="701.3,199.9 697.8,194.0 699.7,192.9 703.1,198.8" fill="#2b94c6"/>
<polygon points="690.2,180.9 686.1,173.7 688.0,172.6 692.1,179.8" fill="#2e88ba"/>
<polygon points="686.1,173.7 684.4,170.9 686.4,169.7 688.0,172.6" fill="#2e88ba"/>
<polygon points="684.4,170.9 681.6,166.0 683.6,164.8 686.4,169.7" fill="#2aa8d8"/>
<polygon points="681.6,166.0 679.7,162.8 681.7,161.6 683.6,164.8" fill="#2b94c6"/>
<polygon points="679.7,162.8 677.6,159.2 679.7,158.0 681.7,161.6" fill="#2e88ba"/>
<polygon points="677.6,159.2 675.7,155.9 677.8,154.8 679.7,158.0" fill="#2aa8d8"/>
<polygon points="675.7,155.9 671.9,149.4 674.0,148.2 677.8,154.8" fill="#2e88ba"/>
<polygon points="671.9,149.4 668.9,144.2 671.1,143.0 674.0,148.2" fill="#2e88ba"/>
<polygon points="657.1,123.8 656.9,123.5 659.1,122.2 659.3,122.5" fill="#2e88ba"/>
<polygon points="710.6,209.2 707.5,203.4 709.3,202.4 712.3,208.3" fill="#2aa8d8"/>
<polygon points="707.5,203.4 705.7,200.0 707.6,199.0 709.3,202.4" fill="#2b94c6"/>
<polygon points="705.7,200.0 704.1,196.9 706.0,195.9 707.6,199.0" fill="#2e88ba"/>
<polygon points="704.1,196.9 700.1,189.2 702.0,188.2 706.0,195.9" fill="#2b94c6"/>
<polygon points="700.1,189.2 698.6,186.3 700.5,185.3 702.0,188.2" fill="#2aa8d8"/>
<polygon points="696.0,181.3 694.5,178.5 696.4,177.5 697.9,180.3" fill="#2b94c6"/>
<polygon points="694.5,178.5 690.8,171.5 692.8,170.5 696.4,177.5" fill="#2e88ba"/>
<polygon points="690.8,171.5 687.3,164.8 689.3,163.7 692.8,170.5" fill="#2b94c6"/>
<polygon points="687.3,164.8 685.9,162.1 687.9,161.0 689.3,163.7" fill="#2b94c6"/>
<polygon points="682.2,155.2 679.5,149.9 681.6,148.8 684.4,154.1" fill="#2e88ba"/>
<polygon points="674.6,140.6 672.0,135.6 674.2,134.5 676.8,139.4" fill="#2e88ba"/>
<polygon points="672.0,135.6 670.2,132.3 672.5,131.1 674.2,134.5" fill="#2b94c6"/>
<polygon points="667.5,127.0 665.0,122.4 667.3,121.2 669.7,125.8" fill="#2b94c6"/>
<polygon points="712.3,204.9 709.2,198.4 711.1,197.5 714.1,204.1" fill="#2e88ba"/>
<polygon points="707.9,195.6 704.9,189.4 706.9,188.5 709.8,194.7" fill="#2aa8d8"/>
<polygon points="704.9,189.4 702.7,184.7 704.7,183.8 706.9,188.5" fill="#2aa8d8"/>
<polygon points="702.7,184.7 699.6,178.1 701.7,177.1 704.7,183.8" fill="#2b94c6"/>
<polygon points="699.6,178.1 696.2,170.8 698.3,169.8 701.7,177.1" fill="#2e88ba"/>
<polygon points="696.2,170.8 694.1,166.2 696.2,165.3 698.3,169.8" fill="#2aa8d8"/>
<polygon points="694.1,166.2 690.3,158.3 692.5,157.3 696.2,165.3" fill="#2e88ba"/>
<polygon points="690.3,158.3 688.0,153.2 690.1,152.2 692.5,157.3" fill="#2b94c6"/>
<polygon points="684.8,146.5 683.5,143.8 685.7,142.7 687.0,145.5" fill="#2e88ba"/>
<polygon points="683.5,143.8 682.0,140.5 684.2,139.5 685.7,142.7" fill="#2aa8d8"/>
<polygon points="682.0,140.5 679.0,134.2 681.3,133.1 684.2,139.5" fill="#2aa8d8"/>
<polygon points="679.0,134.2 676.3,128.4 678.6,127.3 681.3,133.1" fill="#2b94c6"/>
<polygon points="676.3,128.4 674.0,123.5 676.3,122.4 678.6,127.3" fill="#2e88ba"/>
<polygon points="712.3,193.9 710.3,189.1 712.3,188.3 714.3,193.2" fill="#2e88ba"/>
<polygon points="707.5,182.2 704.9,175.7 706.9,174.9 709.5,181.4" fill="#2aa8d8"/>
<polygon points="704.9,175.7 702.7,170.2 704.7,169.4 706.9,174.9" fill="#2e88ba"/>
<polygon points="702.7,170.2 700.8,165.7 702.9,164.8 704.7,169.4" fill="#2aa8d8"/>
<polygon points="700.8,165.7 698.0,158.9 700.2,158.0 702.9,164.8" fill="#2aa8d8"/>
<polygon points="698.0,158.9 695.5,152.8 697.7,151.9 700.2,158.0" fill="#2b94c6"/>
<polygon points="695.5,152.8 692.8,146.1 695.0,145.2 697.7,151.9" fill="#2e88ba"/>
<polygon points="692.8,146.1 690.0,139.3 692.3,138.4 695.0,145.2" fill="#2e88ba"/>
<polygon points="690.0,139.3 686.7,131.1 689.0,130.1 692.3,138.4" fill="#2aa8d8"/>
<polygon points="685.1,127.1 683.2,122.4 685.5,121.5 687.4,126.2" fill="#2aa8d8"/>
<polygon points="683.2,122.4 681.8,119.1 684.2,118.1 685.5,121.5" fill="#2aa8d8"/>
<polygon points="681.8,119.1 680.6,116.1 683.0,115.1 684.2,118.1" fill="#2aa8d8"/>
<polygon points="713.4,182.8 710.9,175.5 713.0,174.7 715.5,182.1" fill="#2b94c6"/>
<polygon points="709.8,172.6 708.5,168.6 710.6,167.8 712.0,171.8" fill="#2e88ba"/>
<polygon points="708.5,168.6 707.3,165.1 709.4,164.4 710.6,167.8" fill="#2e88ba"/>
<polygon points="707.3,165.1 704.7,157.7 706.9,156.9 709.4,164.4" fill="#2aa8d8"/>
<polygon points="704.7,157.7 703.0,152.8 705.2,152.0 706.9,156.9" fill="#2e88ba"/>
<polygon points="703.0,152.8 700.4,145.3 702.7,144.5 705.2,152.0" fill="#2e88ba"/>
<polygon points="700.4,145.3 698.4,139.7 700.8,138.9 702.7,144.5" fill="#2b94c6"/>
<polygon points="698.4,139.7 696.4,133.9 698.8,133.1 700.8,138.9" fill="#2e88ba"/>
<polygon points="696.4,133.9 694.8,129.3 697.2,128.4 698.8,133.1" fill="#2aa8d8"/>
<polygon points="694.8,129.3 692.2,121.8 694.6,120.9 697.2,128.4" fill="#2b94c6"/>
<polygon points="692.2,121.8 692.0,121.4 694.5,120.6 694.6,120.9" fill="#2aa8d8"/>
<polygon points="715.6,171.6 714.1,166.6 716.4,165.9 717.8,170.9" fill="#2b94c6"/>
<polygon points="714.1,166.6 712.3,160.4 714.6,159.8 716.4,165.9" fill="#2b94c6"/>
<polygon points="712.3,160.4 710.8,155.3 713.2,154.6 714.6,159.8" fill="#2e88ba"/>
<polygon points="710.8,155.3 709.3,150.2 711.7,149.5 713.2,154.6" fill="#2b94c6"/>
<polygon points="709.3,150.2 708.2,146.2 710.6,145.5 711.7,149.5" fill="#2aa8d8"/>
<polygon points="708.2,146.2 706.5,140.4 708.9,139.7 710.6,145.5" fill="#2aa8d8"/>
<polygon points="706.5,140.4 704.8,134.6 707.3,133.9 708.9,139.7" fill="#2aa8d8"/>
<polygon points="748.8,302.0 749.1,309.8 747.2,309.8 747.0,302.0" fill="#2b94c6"/>
<polygon points="749.1,309.8 749.3,314.3 747.3,314.3 747.2,309.8" fill="#2e88ba"/>
<polygon points="749.3,314.3 749.5,319.0 747.5,319.1 747.3,314.3" fill="#2e88ba"/>
<polygon points="749.5,319.0 749.7,323.4 747.6,323.4 747.5,319.1" fill="#2b94c6"/>
<polygon points="750.1,335.1 750.4,342.0 748.1,342.1 747.9,335.2" fill="#2b94c6"/>
<polygon points="750.6,345.2 750.7,346.9 748.2,347.0 748.2,345.3" fill="#2b94c6"/>
<polygon points="751.6,306.7 752.1,310.2 750.1,310.5 749.7,306.9" fill="#2e88ba"/>
<polygon points="752.1,310.2 753.0,316.9 750.9,317.2 750.1,310.5" fill="#2e88ba"/>
<polygon points="753.0,316.9 753.5,321.4 751.4,321.7 750.9,317.2" fill="#2e88ba"/>
<polygon points="753.5,321.4 754.3,327.1 752.1,327.4 751.4,321.7" fill="#2e88ba"/>
<polygon points="754.3,327.1 755.0,332.7 752.7,333.0 752.1,327.4" fill="#2b94c6"/>
<polygon points="755.0,332.7 755.5,336.4 753.1,336.7 752.7,333.0" fill="#2e88ba"/>
<polygon points="745.1,296.9 744.1,304.3 742.2,304.0 743.3,296.7" fill="#2b94c6"/>
<polygon points="744.1,304.3 743.4,310.0 741.4,309.7 742.2,304.0" fill="#2b94c6"/>
<polygon points="743.4,310.0 742.5,316.8 740.4,316.5 741.4,309.7" fill="#2b94c6"/>
<polygon points="742.5,316.8 742.1,320.1 739.9,319.7 740.4,316.5" fill="#2b94c6"/>
<polygon points="741.3,325.6 740.5,331.6 738.1,331.3 739.1,325.3" fill="#2b94c6"/>
<polygon points="737.6,315.9 736.0,322.1 733.9,321.5 735.7,315.4" fill="#2e88ba"/>
<polygon points="734.6,327.8 732.6,335.2 730.4,334.5 732.4,327.2" fill="#2b94c6"/>
<polygon points="732.6,335.2 732.1,337.2 729.8,336.6 730.4,334.5" fill="#2b94c6"/>
<polygon points="1002.4,279.3 953.4,145.5 958.2,143.9 1003.4,279.0" fill="url(#g1)"/>
<polygon points="1003.7,268.6 979.0,137.3 984.9,136.3 1005.2,268.3" fill="url(#g2)"/>
<polygon points="1005.1,273.4 981.3,136.9 989.3,135.7 1006.5,273.2" fill="url(#g3)"/>
<polygon points="1001.8,238.5 988.6,135.8 991.1,135.5 1002.8,238.4" fill="url(#g4)"/>
<polygon points="1007.9,273.0 1000.3,136.4 1008.3,136.2 1009.4,273.0" fill="url(#g5)"/>
<polygon points="1008.2,238.0 1007.0,178.0 1008.5,178.0 1009.0,238.0" fill="#2aa8d8"/>
<polygon points="1017.9,258.9 1044.2,139.5 1049.1,140.6 1019.4,259.2" fill="url(#g6)"/>
<polygon points="1015.7,258.5 1033.1,149.9 1036.1,150.4 1016.7,258.6" fill="url(#g7)"/>
<polygon points="1013.8,273.4 1038.3,138.3 1046.1,139.9 1015.3,273.7" fill="url(#g8)"/>
<polygon points="1031.2,180.0 1038.6,138.4 1040.8,138.8 1032.4,180.2" fill="url(#g9)"/>
<polygon points="1019.8,275.2 1077.0,151.3 1084.2,154.9 1021.2,275.9" fill="url(#g10)"/>
<polygon points="1047.4,227.5 1080.1,165.6 1082.7,167.1 1048.3,228.0" fill="url(#g11)"/>
<polygon points="1021.2,270.4 1056.9,187.7 1059.1,188.7 1022.1,270.8" fill="url(#g12)"/>
<polygon points="994.7,277.9 914.2,165.4 917.4,163.2 995.6,277.2" fill="url(#g13)"/>
<polygon points="958.9,258.9 952.8,254.1 953.7,252.9 959.8,257.7" fill="#2b94c6"/>
<polygon points="952.8,254.1 949.0,251.1 950.0,249.9 953.7,252.9" fill="#2aa8d8"/>
<polygon points="949.0,251.1 943.7,246.9 944.7,245.6 950.0,249.9" fill="#2aa8d8"/>
<polygon points="943.7,246.9 936.8,241.5 937.9,240.2 944.7,245.6" fill="#2b94c6"/>
<polygon points="936.8,241.5 931.0,236.9 932.1,235.6 937.9,240.2" fill="#2b94c6"/>
<polygon points="925.0,232.2 919.6,228.0 920.8,226.6 926.1,230.8" fill="#2b94c6"/>
<polygon points="1034.5,281.4 1150.6,204.1 1153.6,208.7 1035.0,282.2" fill="url(#g14)"/>
<polygon points="1087.5,209.0 1092.3,203.7 1094.0,205.2 1089.2,210.5" fill="#42c832"/>
<polygon points="1097.7,197.5 1102.0,192.7 1103.8,194.3 1099.5,199.1" fill="#52f03c"/>
<polygon points="1102.0,192.7 1106.0,188.2 1107.8,189.9 1103.8,194.3" fill="#42c832"/>
<polygon points="1106.0,188.2 1112.1,181.3 1114.0,183.0 1107.8,189.9" fill="#42c832"/>
<polygon points="1112.1,181.3 1118.4,174.2 1120.4,175.9 1114.0,183.0" fill="#52f03c"/>
<polygon points="1118.4,174.2 1119.8,172.6 1121.8,174.4 1120.4,175.9" fill="#42c832"/>
<polygon points="1074.8,209.5 1078.1,205.1 1079.6,206.2 1076.3,210.6" fill="#52f03c"/>
<polygon points="1078.1,205.1 1083.9,197.2 1085.5,198.4 1079.6,206.2" fill="#42c832"/>
<polygon points="1083.9,197.2 1086.5,193.8 1088.1,195.0 1085.5,198.4" fill="#42c832"/>
<polygon points="1103.7,170.7 1106.9,166.5 1108.6,167.8 1105.4,172.0" fill="#42c832"/>
<polygon points="1106.9,166.5 1107.7,165.4 1109.5,166.7 1108.6,167.8" fill="#42c832"/>
<polygon points="1052.1,255.8 1060.7,247.5 1061.8,248.6 1053.2,256.9" fill="#33a62c"/>
<polygon points="1089.5,219.5 1097.3,212.0 1098.6,213.3 1090.7,220.8" fill="#33a62c"/>
<polygon points="1097.3,212.0 1102.2,207.1 1103.6,208.5 1098.6,213.3" fill="#42c832"/>
<polygon points="1102.2,207.1 1106.1,203.4 1107.4,204.8 1103.6,208.5" fill="#42c832"/>
<polygon points="1114.2,195.5 1116.7,193.1 1118.1,194.5 1115.6,196.9" fill="#33a62c"/>
<polygon points="1021.9,276.3 1065.1,203.1 1067.2,204.4 1022.8,276.8" fill="url(#g15)"/>
<polygon points="975.1,319.4 829.1,327.3 828.9,324.7 975.0,318.6" fill="url(#g16)"/>
<polygon points="1113.2,354.2 1120.3,357.0 1119.4,359.1 1112.4,356.1" fill="#52f03c"/>
<polygon points="1127.2,359.7 1131.1,361.2 1130.1,363.5 1126.4,361.9" fill="#42c832"/>
<polygon points="1131.1,361.2 1138.9,364.3 1138.0,366.8 1130.1,363.5" fill="#2b94c6"/>
<polygon points="1013.5,435.2 1036.3,330.7 1038.4,331.1 1014.5,435.4" fill="url(#g17)"/>
<polygon points="1002.8,454.0 1005.2,374.0 1006.8,374.1 1003.6,454.0" fill="url(#g18)"/>
<polygon points="1014.6,497.2 1021.3,501.9 1020.8,502.7 1014.0,498.0" fill="#2e88ba"/>
<polygon points="1025.4,504.7 1028.7,507.1 1028.2,507.9 1024.8,505.6" fill="#2e88ba"/>
<polygon points="1034.1,510.8 1041.1,515.7 1040.5,516.6 1033.5,511.7" fill="#2e88ba"/>
<polygon points="1041.1,515.7 1049.4,521.4 1048.7,522.4 1040.5,516.6" fill="#2b94c6"/>
<polygon points="1055.7,525.8 1064.1,531.7 1063.4,532.8 1055.0,526.9" fill="#2e88ba"/>
<polygon points="1064.1,531.7 1068.7,534.9 1068.0,536.0 1063.4,532.8" fill="#2b94c6"/>
<polygon points="1075.3,539.5 1076.1,540.0 1075.3,541.2 1074.5,540.6" fill="#2b94c6"/>
<polygon points="1053.6,515.9 1061.6,520.2 1061.2,521.0 1053.1,516.7" fill="#2e88ba"/>
<polygon points="1077.6,528.6 1085.1,532.6 1084.6,533.5 1077.1,529.5" fill="#2e88ba"/>
<polygon points="1085.1,532.6 1092.6,536.6 1092.1,537.5 1084.6,533.5" fill="#2b94c6"/>
<polygon points="1092.6,536.6 1096.3,538.5 1095.8,539.5 1092.1,537.5" fill="#2e88ba"/>
<polygon points="1096.3,538.5 1106.4,543.8 1105.8,544.9 1095.8,539.5" fill="#2b94c6"/>
<polygon points="1111.2,546.4 1117.1,549.5 1116.5,550.6 1110.7,547.4" fill="#2b94c6"/>
<polygon points="1159.2,510.4 1190.2,406.0 1192.1,406.5 1160.1,510.7" fill="url(#g19)"/>
<polygon points="1159.1,512.8 1191.9,405.9 1193.8,406.5 1159.9,513.1" fill="url(#g20)"/>
<polygon points="1159.3,514.0 1191.7,412.1 1193.5,412.7 1160.1,514.3" fill="url(#g21)"/>
<polygon points="1160.7,511.6 1184.4,439.2 1186.0,439.7 1161.5,511.9" fill="url(#g22)"/>
<polygon points="1159.7,516.2 1196.1,408.9 1197.9,409.5 1160.5,516.5" fill="url(#g23)"/>
<polygon points="1161.3,513.4 1199.4,404.4 1201.3,405.1 1162.1,513.7" fill="url(#g24)"/>
<polygon points="1160.6,518.5 1203.0,404.3 1204.9,405.0 1161.4,518.8" fill="url(#g25)"/>
<polygon points="1162.2,515.7 1200.4,415.7 1202.2,416.4 1163.0,516.0" fill="url(#g26)"/>
<polygon points="1161.8,518.3 1206.1,405.5 1208.0,406.3 1162.6,518.6" fill="url(#g27)"/>
<polygon points="1161.4,520.7 1206.0,410.4 1207.8,411.2 1162.2,521.0" fill="url(#g28)"/>
<polygon points="1164.3,519.1 1214.5,407.5 1216.3,408.4 1165.1,519.4" fill="url(#g29)"/>
<polygon points="1163.6,521.7 1198.1,447.1 1199.5,447.8 1164.4,522.1" fill="url(#g30)"/>
<polygon points="1162.9,524.4 1212.6,419.4 1214.4,420.2 1163.6,524.8" fill="url(#g31)"/>
<polygon points="1162.6,526.2 1217.6,412.6 1219.5,413.5 1163.3,526.6" fill="url(#g32)"/>
<polygon points="1163.6,525.2 1216.1,419.5 1217.9,420.4 1164.3,525.6" fill="url(#g33)"/>
<polygon points="1164.1,525.2 1201.9,450.9 1203.3,451.7 1164.8,525.6" fill="url(#g34)"/>
<polygon points="1164.9,524.7 1222.3,414.5 1224.1,415.5 1165.6,525.1" fill="url(#g35)"/>
<polygon points="1163.6,528.0 1222.1,418.4 1223.9,419.3 1164.3,528.4" fill="url(#g36)"/>
<polygon points="1163.9,529.4 1226.9,416.5 1228.7,417.5 1164.6,529.8" fill="url(#g37)"/>
<polygon points="1165.7,528.0 1199.8,469.7 1201.0,470.4 1166.4,528.4" fill="url(#g38)"/>
<polygon points="1165.3,529.7 1232.3,417.3 1234.0,418.4 1165.9,530.1" fill="url(#g39)"/>
<polygon points="1167.4,527.1 1228.2,427.3 1229.9,428.3 1168.1,527.5" fill="url(#g40)"/>
<polygon points="1167.7,527.4 1233.5,421.8 1235.2,422.9 1168.4,527.8" fill="url(#g41)"/>
<polygon points="1169.4,525.5 1231.8,427.5 1233.5,428.6 1170.2,526.0" fill="url(#g42)"/>
<polygon points="1169.4,526.5 1237.3,422.0 1239.0,423.2 1170.1,527.0" fill="url(#g43)"/>
<polygon points="1169.0,528.0 1233.2,431.4 1234.8,432.4 1169.7,528.5" fill="url(#g44)"/>
<polygon points="1170.6,526.5 1234.1,432.8 1235.7,433.9 1171.3,527.0" fill="url(#g45)"/>
<polygon points="1171.6,525.9 1239.1,428.3 1240.8,429.4 1172.3,526.4" fill="url(#g46)"/>
<polygon points="1170.4,528.4 1236.9,434.2 1238.5,435.4 1171.1,528.9" fill="url(#g47)"/>
<polygon points="1173.1,525.5 1238.2,435.2 1239.8,436.3 1173.8,526.0" fill="url(#g48)"/>
<polygon points="1174.9,524.0 1240.9,434.2 1242.5,435.4 1175.6,524.5" fill="url(#g49)"/>
<polygon points="1172.4,528.1 1244.1,432.5 1245.7,433.7 1173.1,528.6" fill="url(#g50)"/>
<polygon points="1172.9,528.3 1244.8,434.4 1246.3,435.6 1173.6,528.8" fill="url(#g51)"/>
<polygon points="1175.5,525.8 1243.3,438.9 1244.8,440.1 1176.2,526.4" fill="url(#g52)"/>
<polygon points="1174.2,528.2 1250.3,432.7 1251.9,434.0 1174.9,528.8" fill="url(#g53)"/>
<polygon points="1175.4,527.6 1246.5,440.1 1248.0,441.3 1176.1,528.1" fill="url(#g54)"/>
<polygon points="1176.5,527.1 1248.4,440.3 1249.9,441.5 1177.1,527.7" fill="url(#g55)"/>
<polygon points="1178.4,525.6 1248.7,442.4 1250.2,443.6 1179.1,526.2" fill="url(#g56)"/>
<polygon points="1178.8,526.0 1254.2,438.4 1255.7,439.7 1179.5,526.6" fill="url(#g57)"/>
<polygon points="1183.2,522.7 1256.5,440.8 1258.0,442.1 1183.9,523.3" fill="url(#g58)"/>
<polygon points="1183.4,523.4 1259.9,439.5 1261.4,440.9 1184.1,524.0" fill="url(#g59)"/>
<polygon points="1187.9,519.4 1256.2,445.9 1257.7,447.3 1188.7,520.0" fill="url(#g60)"/>
<polygon points="1186.7,521.6 1262.6,441.6 1264.0,443.0 1187.4,522.2" fill="url(#g61)"/>
<polygon points="1189.4,519.7 1258.1,448.6 1259.5,450.0 1190.1,520.4" fill="url(#g62)"/>
<polygon points="1192.2,517.8 1258.9,450.1 1260.3,451.5 1192.9,518.5" fill="url(#g63)"/>
<polygon points="1192.7,518.3 1262.1,449.1 1263.5,450.5 1193.4,519.0" fill="url(#g64)"/>
<polygon points="1195.8,516.2 1264.3,449.3 1265.6,450.8 1196.6,517.0" fill="url(#g65)"/>
<polygon points="1197.3,515.8 1261.1,454.6 1262.4,456.0 1198.0,516.6" fill="url(#g66)"/>
<polygon points="1199.4,514.9 1268.0,450.3 1269.4,451.8 1200.1,515.7" fill="url(#g67)"/>
<polygon points="1201.7,513.7 1264.6,455.7 1265.9,457.1 1202.5,514.6" fill="url(#g68)"/>
<polygon points="1200.9,515.5 1225.6,493.1 1226.6,494.2 1201.7,516.3" fill="url(#g69)"/>
<polygon points="1204.0,513.8 1265.5,459.2 1266.7,460.7 1204.8,514.6" fill="url(#g70)"/>
<polygon points="1170.6,516.2 1175.0,508.4 1177.0,509.5 1172.5,517.3" fill="#33a62c"/>
<polygon points="1175.0,508.4 1178.4,502.2 1180.5,503.4 1177.0,509.5" fill="#33a62c"/>
<polygon points="1187.6,485.9 1191.9,478.3 1194.1,479.5 1189.8,487.1" fill="#42c832"/>
<polygon points="1205.0,454.9 1207.8,450.0 1210.1,451.3 1207.4,456.2" fill="#52f03c"/>
<polygon points="1211.1,444.0 1213.6,439.6 1216.1,441.0 1213.5,445.4" fill="#33a62c"/>
<polygon points="1220.1,427.9 1222.2,424.3 1224.7,425.8 1222.7,429.4" fill="#33a62c"/>
<polygon points="1209.1,462.7 1211.7,458.8 1214.3,460.5 1211.8,464.4" fill="#42c832"/>
<polygon points="1220.6,444.9 1223.7,440.1 1226.5,441.9 1223.4,446.7" fill="#52f03c"/>
<polygon points="1223.7,440.1 1228.1,433.3 1230.9,435.2 1226.5,441.9" fill="#52f03c"/>
<polygon points="1231.4,428.1 1233.1,425.5 1236.1,427.4 1234.3,430.0" fill="#42c832"/>
<polygon points="1175.4,474.7 1178.4,466.5 1180.0,467.0 1177.0,475.3" fill="#2aa8d8"/>
<polygon points="1178.4,466.5 1180.2,461.5 1181.8,462.1 1180.0,467.0" fill="#2aa8d8"/>
<polygon points="1180.2,461.5 1183.2,453.1 1184.9,453.8 1181.8,462.1" fill="#42c832"/>
<polygon points="1188.7,438.1 1190.3,433.5 1192.1,434.1 1190.4,438.7" fill="#42c832"/>
<polygon points="1195.4,419.6 1197.4,413.9 1199.2,414.6 1197.2,420.2" fill="#42c832"/>
<polygon points="1199.5,408.0 1199.9,407.0 1201.8,407.7 1201.4,408.7" fill="#42c832"/>
<polygon points="1200.9,536.8 1206.9,533.7 1208.5,536.8 1202.4,539.8" fill="#2b94c6"/>
<polygon points="1206.9,533.7 1220.6,526.6 1222.2,529.8 1208.5,536.8" fill="#2b94c6"/>
<polygon points="1229.4,522.0 1239.9,516.5 1241.6,519.9 1231.1,525.3" fill="#2b94c6"/>
<polygon points="1239.9,516.5 1247.3,512.7 1249.1,516.1 1241.6,519.9" fill="#2b94c6"/>
<polygon points="1256.7,507.8 1262.2,504.9 1264.1,508.6 1258.5,511.4" fill="#2aa8d8"/>
<polygon points="1262.2,504.9 1270.4,500.6 1272.3,504.4 1264.1,508.6" fill="#2aa8d8"/>
<polygon points="1276.6,497.5 1282.7,494.3 1284.7,498.1 1278.5,501.2" fill="#2aa8d8"/>
<polygon points="1290.2,490.4 1297.5,486.5 1299.6,490.6 1292.2,494.3" fill="#2b94c6"/>
<polygon points="1198.4,532.4 1207.1,526.9 1208.4,529.0 1199.6,534.4" fill="#2b94c6"/>
<polygon points="1207.1,526.9 1215.0,521.9 1216.3,524.0 1208.4,529.0" fill="#2b94c6"/>
<polygon points="1215.0,521.9 1224.3,516.0 1225.7,518.2 1216.3,524.0" fill="#2aa8d8"/>
<polygon points="1234.2,509.8 1239.7,506.3 1241.1,508.7 1235.6,512.1" fill="#2aa8d8"/>
<polygon points="1239.7,506.3 1245.9,502.4 1247.4,504.8 1241.1,508.7" fill="#2aa8d8"/>
<polygon points="1245.9,502.4 1255.8,496.2 1257.3,498.7 1247.4,504.8" fill="#2b94c6"/>
<polygon points="1255.8,496.2 1262.0,492.3 1263.5,494.8 1257.3,498.7" fill="#2b94c6"/>
<polygon points="1268.0,488.5 1268.4,488.2 1270.0,490.8 1269.6,491.1" fill="#2aa8d8"/>
<polygon points="1184.4,534.5 1189.7,530.2 1191.2,532.0 1185.8,536.2" fill="#2b94c6"/>
<polygon points="1189.7,530.2 1198.3,523.5 1199.8,525.4 1191.2,532.0" fill="#2b94c6"/>
<polygon points="1204.6,518.6 1209.8,514.4 1211.4,516.4 1206.1,520.5" fill="#2b94c6"/>
<polygon points="1217.9,508.1 1224.3,503.0 1226.0,505.1 1219.5,510.1" fill="#2aa8d8"/>
<polygon points="1234.8,494.8 1242.6,488.6 1244.3,490.9 1236.4,497.0" fill="#2aa8d8"/>
<polygon points="1246.4,529.0 1252.4,526.8 1253.3,529.2 1247.3,531.4" fill="#2aa8d8"/>
<polygon points="1256.3,525.3 1264.3,522.3 1265.2,524.9 1257.2,527.8" fill="#2b94c6"/>
<polygon points="1268.1,520.9 1274.0,518.7 1275.0,521.3 1269.1,523.5" fill="#2b94c6"/>
<polygon points="1282.8,515.4 1287.4,513.7 1288.4,516.4 1283.8,518.1" fill="#2aa8d8"/>
<polygon points="1292.2,511.9 1299.0,509.3 1300.1,512.1 1293.3,514.6" fill="#2b94c6"/>
<polygon points="1216.8,549.3 1224.0,547.5 1224.5,549.5 1217.3,551.3" fill="#2b94c6"/>
<polygon points="1237.6,544.0 1245.7,542.0 1246.3,544.2 1238.2,546.2" fill="#2b94c6"/>
<polygon points="1160.5,476.9 1161.7,471.4 1163.7,471.8 1162.5,477.3" fill="#2aa8d8"/>
<polygon points="1163.4,463.2 1165.0,455.6 1167.1,456.1 1165.5,463.6" fill="#2aa8d8"/>
<polygon points="1165.0,455.6 1166.1,450.4 1168.2,450.8 1167.1,456.1" fill="#2b94c6"/>
<polygon points="1166.1,450.4 1167.5,443.6 1169.7,444.1 1168.2,450.8" fill="#2aa8d8"/>
<polygon points="1169.3,435.0 1170.1,431.0 1172.4,431.5 1171.6,435.5" fill="#2b94c6"/>
<polygon points="1173.0,417.4 1174.3,411.2 1176.7,411.7 1175.4,417.9" fill="#2b94c6"/>
<polygon points="1162.0,569.7 1168.9,570.2 1168.7,572.5 1161.8,571.8" fill="#2aa8d8"/>
<polygon points="1168.9,570.2 1176.3,570.8 1176.0,573.2 1168.7,572.5" fill="#2aa8d8"/>
<polygon points="1176.3,570.8 1184.5,571.4 1184.3,574.0 1176.0,573.2" fill="#2aa8d8"/>
<polygon points="1191.5,572.0 1199.8,572.7 1199.6,575.4 1191.2,574.6" fill="#2b94c6"/>
<polygon points="1199.8,572.7 1206.6,573.2 1206.4,576.1 1199.6,575.4" fill="#2aa8d8"/>
<polygon points="1206.6,573.2 1211.5,573.6 1211.3,576.6 1206.4,576.1" fill="#2b94c6"/>
<polygon points="1211.5,573.6 1211.9,573.5 1211.6,576.7 1211.3,576.6" fill="#2aa8d8"/>
<polygon points="1161.7,572.4 1165.8,573.3 1165.3,575.5 1161.2,574.6" fill="#2b94c6"/>
<polygon points="1165.8,573.3 1171.6,574.6 1171.0,576.9 1165.3,575.5" fill="#2b94c6"/>
<polygon points="1171.6,574.6 1177.1,575.8 1176.6,578.3 1171.0,576.9" fill="#2b94c6"/>
<polygon points="1177.1,575.8 1185.2,577.6 1184.6,580.2 1176.6,578.3" fill="#2aa8d8"/>
<polygon points="1185.2,577.6 1191.1,578.9 1190.4,581.6 1184.6,580.2" fill="#2b94c6"/>
<polygon points="1191.1,578.9 1196.7,580.1 1196.0,583.0 1190.4,581.6" fill="#2b94c6"/>
<polygon points="1196.7,580.1 1200.8,581.0 1200.1,584.0 1196.0,583.0" fill="#2b94c6"/>
<polygon points="1133.1,551.1 1061.5,407.7 1078.9,400.1 1134.9,550.3" fill="url(#g71)"/>
<polygon points="1129.2,541.9 1063.4,406.9 1075.3,401.7 1130.6,541.2" fill="url(#g72)"/>
<polygon points="1125.6,532.5 1066.7,405.5 1074.9,401.9 1126.7,532.0" fill="url(#g73)"/>
<polygon points="1101.1,477.7 1068.0,404.9 1071.3,403.5 1102.5,477.1" fill="url(#g74)"/>
<polygon points="1119.8,513.2 1076.6,403.4 1078.7,402.6 1120.8,512.9" fill="#42c832"/>
<polygon points="1123.5,533.5 1073.3,435.7 1075.9,434.3 1124.6,533.0" fill="url(#g75)"/>
<polygon points="1122.2,534.3 1082.7,464.7 1084.9,463.4 1123.0,533.8" fill="url(#g76)"/>
<polygon points="1101.8,584.2 1093.6,587.2 1093.2,586.1 1101.4,583.2" fill="#2e88ba"/>
<polygon points="1093.6,587.2 1085.6,590.2 1085.2,589.0 1093.2,586.1" fill="#2b94c6"/>
<polygon points="1085.6,590.2 1071.3,595.4 1070.9,594.2 1085.2,589.0" fill="#2b94c6"/>
<polygon points="1036.2,608.3 1025.4,612.2 1024.9,610.9 1035.7,606.9" fill="#2b94c6"/>
<polygon points="1025.4,612.2 1018.9,614.6 1018.4,613.2 1024.9,610.9" fill="#2b94c6"/>
<polygon points="994.8,623.4 987.2,626.2 986.7,624.7 994.3,621.9" fill="#2e88ba"/>
<polygon points="1065.2,605.4 1055.2,610.1 1054.7,609.1 1064.8,604.4" fill="#2b94c6"/>
<polygon points="1012.8,629.9 1006.3,633.0 1005.8,631.8 1012.3,628.8" fill="#2b94c6"/>
<polygon points="1066.5,550.7 1055.8,548.1 1056.1,547.0 1066.8,549.7" fill="#2e88ba"/>
<polygon points="1048.4,546.3 1041.6,544.6 1041.9,543.4 1048.7,545.1" fill="#2b94c6"/>
<polygon points="1016.3,538.3 1006.8,536.0 1007.1,534.7 1016.6,537.1" fill="#2e88ba"/>
<polygon points="1006.8,536.0 1000.7,534.4 1001.0,533.2 1007.1,534.7" fill="#2b94c6"/>
<polygon points="990.3,531.9 983.3,530.1 983.6,528.8 990.6,530.6" fill="#2b94c6"/>
<polygon points="983.3,530.1 969.1,526.6 969.5,525.3 983.6,528.8" fill="#2e88ba"/>
<polygon points="1105.2,548.3 1099.9,545.3 1100.4,544.4 1105.6,547.5" fill="#2e88ba"/>
<polygon points="1080.6,534.2 1074.2,530.5 1074.7,529.5 1081.2,533.3" fill="#2b94c6"/>
<polygon points="1044.8,513.6 1037.9,509.6 1038.5,508.5 1045.5,512.5" fill="#2b94c6"/>
<polygon points="1093.8,521.6 1086.7,514.5 1087.5,513.7 1094.6,520.8" fill="#2e88ba"/>
<polygon points="1072.4,500.3 1064.5,492.4 1065.4,491.5 1073.3,499.4" fill="#2b94c6"/>
<polygon points="608.3,427.8 601.0,421.5 603.5,418.7 610.7,425.0" fill="#2aa8d8"/>
<polygon points="601.0,421.5 589.3,411.5 591.9,408.5 603.5,418.7" fill="#2b94c6"/>
<polygon points="589.3,411.5 575.8,399.9 578.6,396.8 591.9,408.5" fill="#2b94c6"/>
<polygon points="575.8,399.9 565.7,391.2 568.5,387.9 578.6,396.8" fill="#2b94c6"/>
<polygon points="565.7,391.2 552.5,379.9 555.5,376.5 568.5,387.9" fill="#2aa8d8"/>
<polygon points="552.5,379.9 542.1,370.9 545.2,367.4 555.5,376.5" fill="#2aa8d8"/>
<polygon points="542.1,370.9 532.1,362.3 535.3,358.7 545.2,367.4" fill="#2b94c6"/>
<polygon points="532.1,362.3 524.8,356.2 528.1,352.3 535.3,358.7" fill="#2aa8d8"/>
<polygon points="599.1,423.7 592.1,418.1 594.5,415.1 601.5,420.7" fill="#2aa8d8"/>
<polygon points="592.1,418.1 585.7,413.1 588.2,410.0 594.5,415.1" fill="#2aa8d8"/>
<polygon points="585.7,413.1 580.0,408.6 582.6,405.4 588.2,410.0" fill="#2b94c6"/>
<polygon points="569.6,400.4 556.5,390.2 559.3,386.7 572.2,397.1" fill="#2b94c6"/>
<polygon points="556.5,390.2 551.6,386.3 554.4,382.8 559.3,386.7" fill="#2aa8d8"/>
<polygon points="541.0,378.0 528.9,368.5 531.9,364.7 543.9,374.3" fill="#2aa8d8"/>
<polygon points="528.9,368.5 520.3,361.7 523.4,357.8 531.9,364.7" fill="#2aa8d8"/>
<polygon points="605.4,431.7 596.1,425.0 598.4,421.9 607.6,428.7" fill="#2b94c6"/>
<polygon points="596.1,425.0 587.5,418.8 589.8,415.6 598.4,421.9" fill="#2b94c6"/>
<polygon points="587.5,418.8 577.4,411.5 579.8,408.2 589.8,415.6" fill="#2b94c6"/>
<polygon points="571.8,407.6 561.2,399.9 563.7,396.4 574.3,404.2" fill="#2aa8d8"/>
<polygon points="561.2,399.9 547.1,389.8 549.8,386.2 563.7,396.4" fill="#2b94c6"/>
<polygon points="547.1,389.8 541.0,385.4 543.7,381.7 549.8,386.2" fill="#2aa8d8"/>
<polygon points="541.0,385.4 530.5,377.9 533.3,374.0 543.7,381.7" fill="#2aa8d8"/>
<polygon points="530.5,377.9 520.0,370.4 522.9,366.4 533.3,374.0" fill="#2aa8d8"/>
<polygon points="520.0,370.4 516.0,367.6 519.0,363.5 522.9,366.4" fill="#2b94c6"/>
<polygon points="604.1,433.7 594.1,427.1 596.2,424.0 606.1,430.6" fill="#2aa8d8"/>
<polygon points="580.0,417.9 570.2,411.5 572.5,408.1 582.2,414.6" fill="#2b94c6"/>
<polygon points="570.2,411.5 561.1,405.6 563.4,402.0 572.5,408.1" fill="#2aa8d8"/>
<polygon points="550.9,398.9 537.6,390.2 540.1,386.3 553.3,395.2" fill="#2aa8d8"/>
<polygon points="537.6,390.2 525.1,382.0 527.7,378.0 540.1,386.3" fill="#2aa8d8"/>
<polygon points="525.1,382.0 517.2,376.9 519.9,372.8 527.7,378.0" fill="#2aa8d8"/>
<polygon points="517.2,376.9 512.0,373.6 514.8,369.3 519.9,372.8" fill="#2aa8d8"/>
<polygon points="617.0,441.4 512.6,376.4 514.5,373.4 617.5,440.6" fill="url(#g77)"/>
<polygon points="624.8,447.8 511.0,383.0 512.7,380.0 625.3,447.0" fill="url(#g78)"/>
<polygon points="624.2,449.0 505.9,388.3 507.5,385.2 624.7,448.1" fill="url(#g79)"/>
<polygon points="632.5,454.9 499.1,398.0 502.4,390.7 633.1,453.6" fill="url(#g80)"/>
<polygon points="639.8,458.1 500.5,397.3 502.8,392.2 640.3,457.0" fill="url(#g81)"/>
<polygon points="595.5,439.7 503.1,401.4 503.9,399.6 595.9,438.8" fill="url(#g82)"/>
<polygon points="627.3,454.6 496.9,409.4 498.6,404.7 627.7,453.4" fill="url(#g83)"/>
<polygon points="612.7,450.9 536.2,427.6 536.9,425.2 613.0,450.0" fill="url(#g84)"/>
<polygon points="631.4,458.3 495.0,426.8 496.1,422.4 631.7,457.2" fill="url(#g85)"/>
<polygon points="631.3,459.1 490.8,432.3 492.1,426.0 631.6,457.7" fill="url(#g86)"/>
<polygon points="631.2,459.7 491.0,437.1 491.7,432.7 631.4,458.5" fill="url(#g87)"/>
<polygon points="631.0,461.0 488.7,447.6 488.9,445.0 631.1,460.0" fill="url(#g88)"/>
<polygon points="621.0,461.4 541.1,457.7 541.2,455.7 621.1,460.4" fill="url(#g89)"/>
<polygon points="649.8,417.5 649.6,396.5 651.3,396.5 651.4,417.5" fill="#2b94c6"/>
<polygon points="649.4,376.0 649.2,362.8 651.1,362.7 651.1,376.0" fill="#2aa8d8"/>
<polygon points="649.2,362.8 649.1,354.6 651.0,354.6 651.1,362.7" fill="#2aa8d8"/>
<polygon points="649.1,354.6 648.9,333.9 650.9,333.9 651.0,354.6" fill="#2b94c6"/>
<polygon points="648.9,333.9 648.7,314.5 650.8,314.5 650.9,333.9" fill="#2aa8d8"/>
<polygon points="648.7,314.5 648.4,294.5 650.6,294.5 650.8,314.5" fill="#2aa8d8"/>
<polygon points="652.2,417.5 652.9,399.0 654.6,399.1 653.8,417.6" fill="#2e88ba"/>
<polygon points="652.9,399.0 653.3,389.2 655.1,389.3 654.6,399.1" fill="#2e88ba"/>
<polygon points="653.3,389.2 653.7,380.2 655.5,380.3 655.1,389.3" fill="#2e88ba"/>
<polygon points="653.7,380.2 654.2,366.8 656.1,366.8 655.5,380.3" fill="#2b94c6"/>
<polygon points="654.2,366.8 654.7,356.5 656.6,356.6 656.1,366.8" fill="#2aa8d8"/>
<polygon points="654.7,356.5 655.5,335.2 657.6,335.3 656.6,356.6" fill="#2aa8d8"/>
<polygon points="656.3,316.9 656.4,312.6 658.7,312.7 658.4,317.0" fill="#2e88ba"/>
<polygon points="656.2,393.7 656.9,384.6 658.7,384.8 657.9,393.8" fill="#2b94c6"/>
<polygon points="656.9,384.6 658.1,370.9 659.9,371.1 658.7,384.8" fill="#2e88ba"/>
<polygon points="659.3,357.4 660.4,343.3 662.4,343.5 661.1,357.5" fill="#2e88ba"/>
<polygon points="660.4,343.3 661.4,332.4 663.4,332.5 662.4,343.5" fill="#2b94c6"/>
<polygon points="661.4,332.4 662.9,314.3 665.0,314.5 663.4,332.5" fill="#2b94c6"/>
<polygon points="663.9,302.1 664.4,297.0 666.6,297.2 666.1,302.3" fill="#2b94c6"/>
<polygon points="656.5,417.8 659.2,398.1 660.9,398.4 658.1,418.1" fill="#2b94c6"/>
<polygon points="663.8,364.6 665.5,351.8 667.6,352.1 665.7,364.9" fill="#2b94c6"/>
<polygon points="665.5,351.8 666.7,343.1 668.8,343.4 667.6,352.1" fill="#2e88ba"/>
<polygon points="666.7,343.1 667.9,334.1 670.1,334.4 668.8,343.4" fill="#2aa8d8"/>
<polygon points="667.9,334.1 667.9,333.6 670.2,333.9 670.1,334.4" fill="#2e88ba"/>
<polygon points="658.8,418.2 662.0,401.5 663.7,401.8 660.4,418.5" fill="#2aa8d8"/>
<polygon points="662.0,401.5 665.5,382.7 667.4,383.1 663.7,401.8" fill="#2e88ba"/>
<polygon points="665.5,382.7 668.9,365.1 670.9,365.5 667.4,383.1" fill="#2b94c6"/>
<polygon points="668.9,365.1 670.5,356.9 672.5,357.3 670.9,365.5" fill="#2aa8d8"/>
<polygon points="670.5,356.9 672.8,344.5 675.0,344.9 672.5,357.3" fill="#2aa8d8"/>
<polygon points="666.3,397.7 670.2,381.7 672.0,382.1 667.9,398.1" fill="#2b94c6"/>
<polygon points="670.2,381.7 672.4,372.7 674.2,373.2 672.0,382.1" fill="#2e88ba"/>
<polygon points="682.7,331.1 684.8,322.7 686.9,323.2 684.7,331.6" fill="#2b94c6"/>
<polygon points="684.8,322.7 686.2,316.7 688.4,317.2 686.9,323.2" fill="#2aa8d8"/>
<polygon points="663.8,419.3 666.3,411.4 667.8,411.9 665.3,419.8" fill="#2e88ba"/>
<polygon points="666.3,411.4 671.2,395.7 672.8,396.2 667.8,411.9" fill="#2b94c6"/>
<polygon points="671.2,395.7 675.8,381.0 677.4,381.5 672.8,396.2" fill="#2e88ba"/>
<polygon points="675.8,381.0 679.5,369.0 681.3,369.6 677.4,381.5" fill="#2b94c6"/>
<polygon points="679.5,369.0 683.9,354.9 685.8,355.4 681.3,369.6" fill="#2e88ba"/>
<polygon points="695.6,317.6 701.1,300.0 703.2,300.7 697.6,318.2" fill="#2e88ba"/>
<polygon points="665.7,419.9 669.7,408.8 671.2,409.4 667.1,420.5" fill="#2aa8d8"/>
<polygon points="674.1,396.6 678.1,385.5 679.7,386.1 675.7,397.2" fill="#2b94c6"/>
<polygon points="678.1,385.5 681.6,375.6 683.4,376.2 679.7,386.1" fill="#2aa8d8"/>
<polygon points="686.3,362.6 691.1,349.4 693.0,350.1 688.1,363.3" fill="#2aa8d8"/>
<polygon points="694.3,340.6 697.9,330.5 699.9,331.2 696.2,341.3" fill="#2aa8d8"/>
<polygon points="647.0,417.7 646.3,407.5 648.0,407.4 648.7,417.6" fill="#2e88ba"/>
<polygon points="646.3,407.5 644.7,385.7 646.6,385.6 648.0,407.4" fill="#2e88ba"/>
<polygon points="644.7,385.7 643.4,368.4 645.4,368.2 646.6,385.6" fill="#2b94c6"/>
<polygon points="643.4,368.4 642.3,353.4 644.5,353.2 645.4,368.2" fill="#2e88ba"/>
<polygon points="642.3,353.4 642.2,352.8 644.5,352.7 644.5,353.2" fill="#2e88ba"/>
<polygon points="643.9,418.1 642.3,407.5 644.2,407.2 645.6,417.8" fill="#2e88ba"/>
<polygon points="642.3,407.5 639.6,389.1 641.7,388.8 644.2,407.2" fill="#2aa8d8"/>
<polygon points="639.6,389.1 637.4,373.5 639.6,373.2 641.7,388.8" fill="#2b94c6"/>
<polygon points="673.3,365.0 689.3,294.8 691.2,295.3 674.3,365.3" fill="url(#g90)"/>
<polygon points="670.3,344.1 678.2,294.7 679.9,295.0 671.3,344.2" fill="url(#g91)"/>
<polygon points="604.5,436.8 700.5,436.8 700.5,438.0 604.5,438.0" fill="url(#g92)"/>
<polygon points="700.5,437.5 757.5,438.0 757.5,439.4 700.5,438.9" fill="url(#g93)"/>
<polygon points="639.9,500.9 638.0,507.2 636.8,506.8 638.7,500.6" fill="#2e88ba"/>
<polygon points="638.0,507.2 635.9,514.0 634.7,513.6 636.8,506.8" fill="#2b94c6"/>
<polygon points="634.3,519.5 632.6,525.0 631.3,524.6 633.0,519.1" fill="#2b94c6"/>
<polygon points="632.6,525.0 630.9,530.7 629.5,530.2 631.3,524.6" fill="#2b94c6"/>
<polygon points="630.9,530.7 629.1,536.5 627.8,536.1 629.5,530.2" fill="#2b94c6"/>
<polygon points="629.1,536.5 626.8,544.3 625.4,543.8 627.8,536.1" fill="#2b94c6"/>
<polygon points="626.8,544.3 623.9,553.8 622.4,553.4 625.4,543.8" fill="#2e88ba"/>
<polygon points="618.7,571.0 616.7,577.5 615.1,577.0 617.1,570.5" fill="#2b94c6"/>
<polygon points="609.9,599.8 608.2,605.4 606.5,604.9 608.3,599.3" fill="#2b94c6"/>
<polygon points="608.2,605.4 608.0,606.2 606.3,605.7 606.5,604.9" fill="#2e88ba"/>
<polygon points="628.0,517.9 624.6,526.1 623.6,525.6 627.1,517.5" fill="#2e88ba"/>
<polygon points="621.3,534.0 617.2,543.5 616.2,543.1 620.2,533.6" fill="#2e88ba"/>
<polygon points="617.2,543.5 614.5,550.1 613.4,549.6 616.2,543.1" fill="#2e88ba"/>
<polygon points="611.4,557.3 607.1,567.4 606.0,566.9 610.3,556.8" fill="#2e88ba"/>
<polygon points="666.2,566.1 667.5,575.5 666.2,575.7 664.9,566.3" fill="#2b94c6"/>
<polygon points="669.4,588.6 670.5,596.4 669.1,596.6 668.0,588.8" fill="#2e88ba"/>
<polygon points="671.4,602.3 672.4,609.4 670.9,609.7 670.0,602.5" fill="#2e88ba"/>
<polygon points="672.4,609.4 673.4,616.7 672.0,616.9 670.9,609.7" fill="#2b94c6"/>
<polygon points="673.4,616.7 674.0,620.8 672.5,621.0 672.0,616.9" fill="#2e88ba"/>
<polygon points="952.8,693.3 860.8,824.6 842.1,809.6 949.7,690.8" fill="url(#g94)"/>
<polygon points="945.9,703.0 918.1,744.6 914.0,741.7 944.3,701.8" fill="url(#g95)"/>
<polygon points="896.7,753.3 845.5,812.2 843.1,810.0 895.5,752.3" fill="url(#g96)"/>
<polygon points="891.7,762.2 849.4,812.9 847.9,811.6 891.0,761.6" fill="url(#g97)"/>
<polygon points="926.3,725.9 890.1,773.7 887.8,771.9 925.1,724.9" fill="url(#g98)"/>
<polygon points="887.1,781.5 856.7,823.6 855.7,822.9 886.7,781.1" fill="#1b1b1b"/>
<polygon points="884.6,779.6 853.2,821.0 852.2,820.2 884.2,779.2" fill="#1b1b1b"/>
<polygon points="882.2,777.7 849.7,818.3 848.7,817.5 881.7,777.3" fill="#1b1b1b"/>
<polygon points="935.0,707.1 879.6,764.8 877.1,762.4 933.9,706.0" fill="url(#g99)"/>
<polygon points="912.3,710.9 811.7,776.2 809.7,773.2 911.5,709.6" fill="url(#g100)"/>
<polygon points="923.7,709.6 823.3,790.5 821.5,788.3 923.0,708.7" fill="url(#g101)"/>
<polygon points="909.9,708.8 902.5,713.0 901.6,711.4 909.0,707.2" fill="#2e88ba"/>
<polygon points="902.5,713.0 898.0,715.6 897.1,713.9 901.6,711.4" fill="#2e88ba"/>
<polygon points="898.0,715.6 894.0,717.9 893.0,716.2 897.1,713.9" fill="#2e88ba"/>
<polygon points="880.8,725.4 874.0,729.3 873.0,727.4 879.7,723.6" fill="#2b94c6"/>
<polygon points="869.7,731.8 867.3,733.1 866.2,731.2 868.6,729.9" fill="#2b94c6"/>
<polygon points="889.1,745.2 885.7,748.3 884.5,747.1 888.0,744.0" fill="#2aa8d8"/>
<polygon points="885.7,748.3 881.0,752.5 879.9,751.2 884.5,747.1" fill="#42c832"/>
<polygon points="878.1,755.2 872.5,760.2 871.3,758.9 876.9,753.9" fill="#42c832"/>
<polygon points="869.8,762.7 864.9,767.2 863.6,765.8 868.5,761.4" fill="#2aa8d8"/>
<polygon points="862.3,769.5 857.1,774.2 855.8,772.7 861.0,768.1" fill="#52f03c"/>
<polygon points="857.1,774.2 854.6,776.4 853.3,775.0 855.8,772.7" fill="#52f03c"/>
<polygon points="854.6,776.4 852.1,778.7 850.8,777.2 853.3,775.0" fill="#2aa8d8"/>
<polygon points="948.9,726.1 926.2,804.9 923.9,804.2 947.7,725.8" fill="url(#g102)"/>
<polygon points="925.7,804.8 915.6,839.3 914.0,838.9 924.3,804.4" fill="url(#g103)"/>
<polygon points="920.8,797.4 919.5,801.3 918.4,800.9 919.7,797.0" fill="#2b94c6"/>
<polygon points="918.3,804.5 917.3,807.6 916.1,807.2 917.2,804.1" fill="#2b94c6"/>
<polygon points="917.3,807.6 914.6,815.0 913.5,814.6 916.1,807.2" fill="#2aa8d8"/>
<polygon points="914.6,815.0 912.4,821.3 911.3,820.9 913.5,814.6" fill="#2aa8d8"/>
<polygon points="912.4,821.3 911.3,824.5 910.1,824.1 911.3,820.9" fill="#2b94c6"/>
<polygon points="909.1,830.7 907.4,835.5 906.2,835.1 907.9,830.2" fill="#2b94c6"/>
<ellipse cx="896.4" cy="839.4" rx="16.6" ry="2.4" transform="rotate(67.5 896.4 839.4)" fill="#42c832" opacity="0.85"/>
<ellipse cx="896.4" cy="839.4" rx="14.1" ry="1.5" transform="rotate(67.5 896.4 839.4)" fill="#d7da38" opacity="0.8"/>
<ellipse cx="896.4" cy="839.9" rx="10.0" ry="0.7" transform="rotate(67.5 896.4 839.4)" fill="#e8103a" opacity="0.85"/>
<ellipse cx="877.5" cy="856.0" rx="5.3" ry="2.4" transform="rotate(48.8 877.5 856.0)" fill="#42c832" opacity="0.85"/>
<ellipse cx="877.5" cy="856.0" rx="4.5" ry="1.5" transform="rotate(48.8 877.5 856.0)" fill="#d7da38" opacity="0.8"/>
<polygon points="940.4,910.4 946.4,912.7 945.5,914.9 939.6,912.6" fill="#33a62c"/>
<polygon points="946.4,912.7 951.1,914.5 950.3,916.7 945.5,914.9" fill="#2aa8d8"/>
<polygon points="951.1,914.5 959.1,917.5 958.2,919.8 950.3,916.7" fill="#42c832"/>
<polygon points="959.1,917.5 968.0,920.9 967.1,923.3 958.2,919.8" fill="#52f03c"/>
<polygon points="968.0,920.9 973.7,923.0 972.8,925.5 967.1,923.3" fill="#52f03c"/>
<polygon points="973.7,923.0 981.6,926.0 980.6,928.5 972.8,925.5" fill="#42c832"/>
<polygon points="981.6,926.0 990.1,929.3 989.2,931.8 980.6,928.5" fill="#33a62c"/>
<polygon points="996.1,931.6 1004.1,934.6 1003.0,937.2 995.1,934.1" fill="#33a62c"/>
<polygon points="1004.1,934.6 1008.1,936.1 1007.1,938.8 1003.0,937.2" fill="#2b94c6"/>
<polygon points="1008.1,936.1 1012.7,937.8 1011.6,940.5 1007.1,938.8" fill="#2aa8d8"/>
<polygon points="1012.7,937.8 1018.7,940.1 1017.7,942.9 1011.6,940.5" fill="#2b94c6"/>
<polygon points="1018.7,940.1 1023.8,942.1 1022.7,944.9 1017.7,942.9" fill="#52f03c"/>
<polygon points="1031.6,945.0 1042.8,949.3 1041.7,952.2 1030.5,947.9" fill="#52f03c"/>
<polygon points="1042.8,949.3 1046.7,950.8 1045.6,953.7 1041.7,952.2" fill="#2b94c6"/>
<polygon points="1046.7,950.8 1051.3,952.5 1050.2,955.5 1045.6,953.7" fill="#2b94c6"/>
<polygon points="1051.3,952.5 1052.6,953.0 1051.5,956.0 1050.2,955.5" fill="#42c832"/>
<polygon points="949.1,915.7 953.8,917.7 953.3,919.1 948.5,917.2" fill="#2aa8d8"/>
<polygon points="962.8,921.3 966.5,922.8 965.9,924.3 962.2,922.8" fill="#2aa8d8"/>
<polygon points="966.5,922.8 970.6,924.5 970.0,926.0 965.9,924.3" fill="#42c832"/>
<polygon points="998.5,935.8 1003.5,937.8 1002.8,939.5 997.8,937.4" fill="#2aa8d8"/>
<polygon points="1003.5,937.8 1012.1,941.3 1011.4,943.0 1002.8,939.5" fill="#42c832"/>
<polygon points="1016.4,943.1 1023.2,945.8 1022.5,947.5 1015.7,944.8" fill="#42c832"/>
<polygon points="1023.2,945.8 1028.8,948.1 1028.1,949.8 1022.5,947.5" fill="#2b94c6"/>
<polygon points="1028.8,948.1 1035.2,950.6 1034.4,952.4 1028.1,949.8" fill="#42c832"/>
<polygon points="1039.0,952.2 1045.0,954.6 1044.2,956.5 1038.3,954.0" fill="#42c832"/>
<polygon points="803.2,863.6 758.4,849.2 759.3,846.6 803.7,862.2" fill="url(#g104)"/>
<polygon points="745.5,845.1 742.1,844.0 743.1,840.9 746.5,842.0" fill="#52f03c"/>
<polygon points="742.1,844.0 736.4,842.1 737.5,838.9 743.1,840.9" fill="#52f03c"/>
<polygon points="730.9,840.2 727.2,839.0 728.3,835.8 731.9,837.1" fill="#42c832"/>
<polygon points="727.2,839.0 723.9,837.9 725.0,834.7 728.3,835.8" fill="#42c832"/>
<polygon points="723.9,837.9 719.4,836.4 720.5,833.2 725.0,834.7" fill="#42c832"/>
<polygon points="719.4,836.4 715.3,835.1 716.4,831.8 720.5,833.2" fill="#33a62c"/>
<polygon points="715.3,835.1 712.8,834.3 714.0,830.9 716.4,831.8" fill="#33a62c"/>
<polygon points="791.0,877.8 786.9,877.3 787.1,875.5 791.3,876.1" fill="#2aa8d8"/>
<polygon points="786.9,877.3 781.5,876.5 781.7,874.7 787.1,875.5" fill="#2b94c6"/>
<polygon points="781.5,876.5 773.5,875.4 773.7,873.6 781.7,874.7" fill="#2b94c6"/>
<polygon points="773.5,875.4 767.1,874.5 767.3,872.6 773.7,873.6" fill="#2b94c6"/>
<polygon points="754.9,872.9 747.8,871.9 748.1,869.9 755.2,870.9" fill="#2b94c6"/>
<polygon points="742.1,871.1 735.4,870.2 735.7,868.1 742.4,869.1" fill="#2b94c6"/>
<polygon points="727.8,869.1 719.8,868.0 720.1,865.9 728.1,867.0" fill="#2aa8d8"/>
<polygon points="752.7,921.4 746.1,922.9 745.6,920.9 752.2,919.4" fill="#42c832"/>
<polygon points="746.1,922.9 742.8,923.7 742.3,921.6 745.6,920.9" fill="#2b94c6"/>
<polygon points="742.8,923.7 736.3,925.2 735.8,923.1 742.3,921.6" fill="#2b94c6"/>
<polygon points="736.3,925.2 733.2,925.9 732.7,923.8 735.8,923.1" fill="#42c832"/>
<polygon points="723.1,928.3 720.6,928.9 720.1,926.7 722.6,926.1" fill="#2b94c6"/>
<polygon points="913.5,837.8 915.7,833.9 916.7,834.5 914.5,838.3" fill="#2aa8d8"/>
<polygon points="919.3,827.7 921.3,824.1 922.4,824.7 920.3,828.3" fill="#2aa8d8"/>
<polygon points="924.9,818.0 928.7,811.3 929.8,811.9 925.9,818.6" fill="#2b94c6"/>
<polygon points="932.1,805.3 935.0,800.3 936.2,801.0 933.3,806.0" fill="#2b94c6"/>
<polygon points="940.4,790.9 941.9,788.3 943.1,789.0 941.6,791.6" fill="#2aa8d8"/>
<polygon points="941.9,788.3 943.4,785.7 944.6,786.4 943.1,789.0" fill="#2aa8d8"/>
<polygon points="1164.2,851.5 1101.6,882.9 1100.3,880.2 1163.8,850.6" fill="url(#g105)"/>
<polygon points="1106.1,880.7 1034.0,917.5 1031.1,911.7 1104.8,878.0" fill="url(#g106)"/>
<polygon points="1168.4,854.5 1048.9,940.2 1046.4,936.5 1167.8,853.7" fill="url(#g107)"/>
<polygon points="1138.1,877.9 1131.5,882.8 1130.6,881.6 1137.2,876.7" fill="#2aa8d8"/>
<polygon points="1131.5,882.8 1126.4,886.6 1125.5,885.3 1130.6,881.6" fill="#2aa8d8"/>
<polygon points="1126.4,886.6 1122.7,889.3 1121.8,888.0 1125.5,885.3" fill="#2b94c6"/>
<polygon points="1122.7,889.3 1116.6,893.8 1115.7,892.5 1121.8,888.0" fill="#2b94c6"/>
<polygon points="1116.6,893.8 1109.7,898.9 1108.8,897.6 1115.7,892.5" fill="#2b94c6"/>
<polygon points="1109.7,898.9 1104.1,903.1 1103.1,901.7 1108.8,897.6" fill="#2b94c6"/>
<polygon points="1104.1,903.1 1098.6,907.2 1097.6,905.8 1103.1,901.7" fill="#2b94c6"/>
<polygon points="1098.6,907.2 1094.6,910.1 1093.6,908.7 1097.6,905.8" fill="#2aa8d8"/>
<polygon points="1086.6,916.1 1082.0,919.5 1081.0,918.0 1085.6,914.6" fill="#2aa8d8"/>
<polygon points="1082.0,919.5 1077.6,922.7 1076.6,921.2 1081.0,918.0" fill="#2aa8d8"/>
<polygon points="1065.4,931.8 1060.7,935.3 1059.6,933.7 1064.2,930.3" fill="#2b94c6"/>
<polygon points="1055.7,938.9 1050.5,942.8 1049.3,941.2 1054.6,937.4" fill="#2b94c6"/>
<polygon points="1050.5,942.8 1048.3,944.4 1047.1,942.8 1049.3,941.2" fill="#2b94c6"/>
<polygon points="1152.0,862.1 1147.2,865.0 1146.6,864.0 1151.4,861.1" fill="#2aa8d8"/>
<polygon points="1143.7,867.2 1138.2,870.5 1137.5,869.4 1143.0,866.1" fill="#2b94c6"/>
<polygon points="1138.2,870.5 1130.3,875.3 1129.6,874.1 1137.5,869.4" fill="#2aa8d8"/>
<polygon points="1110.9,887.0 1107.2,889.2 1106.4,887.9 1110.2,885.7" fill="#2b94c6"/>
<polygon points="1182.8,907.5 1182.1,913.0 1180.2,912.7 1180.9,907.3" fill="#2b94c6"/>
<polygon points="1180.4,926.4 1179.4,933.7 1177.4,933.5 1178.4,926.2" fill="#2b94c6"/>
<polygon points="1178.0,945.0 1177.2,951.0 1175.1,950.7 1175.9,944.7" fill="#2aa8d8"/>
<polygon points="1175.1,967.6 1174.7,970.9 1172.4,970.6 1172.8,967.3" fill="#2b94c6"/>
<polygon points="1174.7,970.9 1174.3,974.1 1172.0,973.8 1172.4,970.6" fill="#2aa8d8"/>
<polygon points="1174.3,974.1 1173.4,981.0 1171.0,980.7 1172.0,973.8" fill="#2b94c6"/>
<polygon points="1172.7,985.8 1172.6,986.9 1170.2,986.6 1170.4,985.5" fill="#2b94c6"/>
<polygon points="1152.5,922.7 1151.0,925.8 1149.5,925.0 1150.9,921.9" fill="#2aa8d8"/>
<polygon points="1151.0,925.8 1149.3,929.5 1147.7,928.8 1149.5,925.0" fill="#2b94c6"/>
<polygon points="1144.3,940.3 1142.5,944.2 1140.8,943.4 1142.7,939.5" fill="#2b94c6"/>
<polygon points="1140.4,948.8 1137.8,954.2 1136.1,953.4 1138.7,948.0" fill="#2b94c6"/>
<polygon points="1128.6,974.2 1128.5,974.4 1126.7,973.5 1126.8,973.4" fill="#2b94c6"/>
<polygon points="1225.1,929.0 1227.3,934.9 1225.5,935.5 1223.4,929.7" fill="#2aa8d8"/>
<polygon points="1231.5,946.4 1232.5,949.3 1230.7,950.0 1229.7,947.1" fill="#2b94c6"/>
<polygon points="1232.5,949.3 1234.8,955.6 1233.0,956.3 1230.7,950.0" fill="#2aa8d8"/>
<polygon points="1091.1,842.0 1085.8,842.2 1085.8,841.1 1091.0,840.9" fill="#2e88ba"/>
<polygon points="1055.9,843.3 1051.2,843.5 1051.1,842.3 1055.8,842.1" fill="#2e88ba"/>
<polygon points="1045.2,843.7 1038.9,843.9 1038.9,842.7 1045.2,842.5" fill="#2b94c6"/>
<polygon points="1038.9,843.9 1035.5,844.1 1035.5,842.8 1038.9,842.7" fill="#2e88ba"/>
<polygon points="1035.5,844.1 1029.2,844.3 1029.2,843.0 1035.5,842.8" fill="#2e88ba"/>
<polygon points="1025.1,844.4 1021.1,844.6 1021.1,843.3 1025.0,843.2" fill="#2b94c6"/>
<polygon points="1232.0,700.0 1233.3,695.6 1235.5,696.3 1234.2,700.7" fill="#42c832"/>
<polygon points="1242.7,700.3 1241.4,703.9 1239.9,703.3 1241.3,699.7" fill="#52f03c"/>
<polygon points="1234.6,723.7 1233.5,726.9 1231.2,726.1 1232.4,722.9" fill="#2aa8d8"/>
<polygon points="1233.5,726.9 1233.0,728.6 1230.5,727.7 1231.2,726.1" fill="#42c832"/>
<polygon points="1277.7,720.3 1276.1,724.9 1274.5,724.3 1276.3,719.7" fill="#42c832"/>
<polygon points="1275.1,727.9 1273.3,733.1 1271.4,732.4 1273.4,727.3" fill="#2aa8d8"/>
<polygon points="1273.3,733.1 1271.2,739.2 1269.1,738.4 1271.4,732.4" fill="#42c832"/>
<polygon points="1271.2,739.2 1269.6,743.9 1267.3,743.1 1269.1,738.4" fill="#2aa8d8"/>
<polygon points="633.1,1064.7 516.1,1069.3 516.0,1066.1 633.0,1063.2" fill="url(#g108)"/>
<polygon points="686.0,1093.5 643.3,1232.1 631.0,1227.8 684.1,1092.8" fill="url(#g109)"/>
<polygon points="657.1,1164.9 633.6,1228.7 630.8,1227.6 656.0,1164.5" fill="url(#g110)"/>
<polygon points="683.1,1115.5 655.6,1227.1 653.6,1226.6 682.1,1115.2" fill="url(#g111)"/>
<polygon points="745.8,1067.9 757.0,1069.6 756.5,1072.8 745.3,1071.1" fill="#2b94c6"/>
<polygon points="757.0,1069.6 768.0,1071.2 767.5,1074.5 756.5,1072.8" fill="#2b94c6"/>
<polygon points="768.0,1071.2 772.2,1071.8 771.7,1075.2 767.5,1074.5" fill="#2b94c6"/>
<polygon points="772.2,1071.8 777.3,1072.5 776.8,1076.0 771.7,1075.2" fill="#2b94c6"/>
<polygon points="777.3,1072.5 782.3,1073.3 781.8,1076.8 776.8,1076.0" fill="#2b94c6"/>
<polygon points="782.3,1073.3 787.5,1074.0 787.0,1077.6 781.8,1076.8" fill="#2aa8d8"/>
<polygon points="804.4,1076.5 815.9,1078.2 815.3,1082.0 803.8,1080.2" fill="#2aa8d8"/>
<polygon points="815.9,1078.2 827.1,1079.8 826.5,1083.8 815.3,1082.0" fill="#2aa8d8"/>
<polygon points="827.1,1079.8 836.6,1081.2 835.9,1085.2 826.5,1083.8" fill="#2b94c6"/>
<polygon points="843.8,1082.2 849.6,1083.1 848.9,1087.3 843.2,1086.4" fill="#2b94c6"/>
<polygon points="849.6,1083.1 861.1,1084.8 860.5,1089.1 848.9,1087.3" fill="#2aa8d8"/>
<polygon points="852.5,1083.6 875.3,1086.6 874.6,1091.5 851.9,1087.6" fill="url(#g112)"/>
<polygon points="792.6,1072.7 801.3,1073.7 801.1,1075.4 792.4,1074.3" fill="#2b94c6"/>
<polygon points="801.3,1073.7 807.8,1074.5 807.6,1076.2 801.1,1075.4" fill="#2aa8d8"/>
<polygon points="807.8,1074.5 813.3,1075.1 813.0,1076.8 807.6,1076.2" fill="#2b94c6"/>
<polygon points="813.3,1075.1 821.7,1076.1 821.5,1077.9 813.0,1076.8" fill="#2aa8d8"/>
<polygon points="829.7,1077.0 839.4,1078.2 839.2,1080.0 829.5,1078.8" fill="#2aa8d8"/>
<polygon points="839.4,1078.2 846.7,1079.0 846.5,1080.9 839.2,1080.0" fill="#2b94c6"/>
<polygon points="846.7,1079.0 851.1,1079.5 850.9,1081.4 846.5,1080.9" fill="#2b94c6"/>
<polygon points="851.1,1079.5 857.9,1080.3 857.7,1082.3 850.9,1081.4" fill="#2b94c6"/>
<polygon points="864.6,1081.1 864.9,1081.1 864.7,1083.1 864.4,1083.1" fill="#2b94c6"/>
<polygon points="1204.2,51.7 1209.3,55.6 1208.8,56.2 1203.8,52.3" fill="#52f03c"/>
<polygon points="1215.5,60.5 1219.7,63.7 1219.1,64.4 1215.0,61.1" fill="#2aa8d8"/>
<polygon points="1236.5,76.7 1239.1,78.7 1238.4,79.6 1235.8,77.5" fill="#42c832"/>
<polygon points="1243.9,82.4 1247.7,85.4 1247.0,86.3 1243.2,83.3" fill="#42c832"/>
<polygon points="1212.2,49.2 1214.9,51.3 1214.4,51.9 1211.8,49.8" fill="#52f03c"/>
<polygon points="1227.1,60.8 1231.2,63.9 1230.6,64.6 1226.6,61.5" fill="#42c832"/>
<polygon points="1231.2,63.9 1234.2,66.3 1233.6,67.0 1230.6,64.6" fill="#52f03c"/>
<polygon points="1234.2,66.3 1240.1,70.8 1239.5,71.6 1233.6,67.0" fill="#2b94c6"/>
<polygon points="1244.1,73.9 1247.3,76.4 1246.6,77.2 1243.4,74.7" fill="#2b94c6"/>
<polygon points="1247.3,76.4 1253.5,81.2 1252.8,82.1 1246.6,77.2" fill="#2aa8d8"/>
<polygon points="1253.5,81.2 1256.6,83.6 1255.9,84.6 1252.8,82.1" fill="#52f03c"/>
<polygon points="1220.2,46.7 1222.8,48.7 1222.3,49.3 1219.8,47.3" fill="#2b94c6"/>
<polygon points="1232.9,56.6 1237.8,60.3 1237.2,61.0 1232.4,57.2" fill="#2aa8d8"/>
<polygon points="1237.8,60.3 1243.1,64.5 1242.5,65.2 1237.2,61.0" fill="#2b94c6"/>
<polygon points="1252.0,71.3 1255.7,74.2 1255.0,75.0 1251.4,72.1" fill="#2aa8d8"/>
<polygon points="1255.7,74.2 1258.8,76.6 1258.1,77.4 1255.0,75.0" fill="#2aa8d8"/>
<polygon points="1258.8,76.6 1263.4,80.2 1262.7,81.1 1258.1,77.4" fill="#42c832"/>
<polygon points="1263.4,80.2 1268.4,84.1 1267.7,85.0 1262.7,81.1" fill="#42c832"/>
<polygon points="1268.4,84.1 1271.6,86.5 1270.8,87.5 1267.7,85.0" fill="#2b94c6"/>
<polygon points="1231.8,47.0 1236.1,50.3 1235.6,51.0 1231.3,47.6" fill="#2b94c6"/>
<polygon points="1242.3,55.2 1247.3,59.0 1246.8,59.7 1241.8,55.8" fill="#2b94c6"/>
<polygon points="1251.2,62.1 1254.7,64.8 1254.2,65.5 1250.7,62.8" fill="#52f03c"/>
<polygon points="1259.8,68.7 1264.6,72.4 1263.9,73.2 1259.2,69.5" fill="#42c832"/>
<polygon points="1264.6,72.4 1270.6,77.1 1270.0,78.0 1263.9,73.2" fill="#42c832"/>
<polygon points="1270.6,77.1 1274.7,80.3 1274.0,81.1 1270.0,78.0" fill="#52f03c"/>
<polygon points="1274.7,80.3 1280.0,84.4 1279.3,85.3 1274.0,81.1" fill="#2aa8d8"/>
<polygon points="1280.0,84.4 1283.5,87.1 1282.8,88.1 1279.3,85.3" fill="#2b94c6"/>
<polygon points="1237.8,41.2 1241.0,43.7 1240.6,44.3 1237.4,41.8" fill="#2aa8d8"/>
<polygon points="1241.0,43.7 1245.0,46.8 1244.5,47.4 1240.6,44.3" fill="#2b94c6"/>
<polygon points="1250.0,50.7 1255.5,54.9 1254.9,55.6 1249.5,51.3" fill="#2b94c6"/>
<polygon points="1258.5,57.3 1263.0,60.8 1262.5,61.5 1258.0,58.0" fill="#42c832"/>
<polygon points="1263.0,60.8 1268.6,65.1 1268.0,65.9 1262.5,61.5" fill="#42c832"/>
<polygon points="1268.6,65.1 1272.2,67.9 1271.6,68.7 1268.0,65.9" fill="#42c832"/>
<polygon points="1278.7,72.9 1283.4,76.6 1282.7,77.4 1278.1,73.8" fill="#52f03c"/>
<polygon points="1283.4,76.6 1286.5,79.0 1285.8,79.9 1282.7,77.4" fill="#2b94c6"/>
<polygon points="1286.5,79.0 1291.4,82.8 1290.7,83.7 1285.8,79.9" fill="#2aa8d8"/>
<polygon points="1291.4,82.8 1297.4,87.4 1296.6,88.4 1290.7,83.7" fill="#42c832"/>
<polygon points="1247.4,38.2 1251.1,41.1 1250.6,41.7 1247.0,38.8" fill="#42c832"/>
<polygon points="1256.0,44.9 1259.3,47.4 1258.8,48.1 1255.5,45.5" fill="#2b94c6"/>
<polygon points="1263.8,51.0 1269.4,55.3 1268.9,56.0 1263.3,51.6" fill="#52f03c"/>
<polygon points="1272.5,57.7 1277.0,61.2 1276.4,61.9 1271.9,58.4" fill="#52f03c"/>
<polygon points="1277.0,61.2 1282.8,65.7 1282.2,66.5 1276.4,61.9" fill="#2aa8d8"/>
<polygon points="1282.8,65.7 1288.1,69.8 1287.4,70.6 1282.2,66.5" fill="#2b94c6"/>
<polygon points="1288.1,69.8 1292.1,72.9 1291.5,73.8 1287.4,70.6" fill="#42c832"/>
<polygon points="1292.1,72.9 1296.4,76.2 1295.7,77.1 1291.5,73.8" fill="#52f03c"/>
<polygon points="1296.4,76.2 1299.8,78.9 1299.1,79.8 1295.7,77.1" fill="#2aa8d8"/>
<polygon points="1299.8,78.9 1304.1,82.2 1303.4,83.1 1299.1,79.8" fill="#52f03c"/>
<polygon points="1304.1,82.2 1307.4,84.8 1306.7,85.7 1303.4,83.1" fill="#42c832"/>
<polygon points="1307.4,84.8 1311.7,88.1 1310.9,89.0 1306.7,85.7" fill="#42c832"/>
<polygon points="1105.7,350.7 1110.7,352.4 1109.9,354.5 1105.0,352.7" fill="#52f03c"/>
<polygon points="1119.1,355.3 1127.0,358.0 1126.1,360.5 1118.3,357.6" fill="#42c832"/>
<polygon points="1127.0,358.0 1134.3,360.4 1133.3,363.2 1126.1,360.5" fill="#42c832"/>
<polygon points="1121.2,360.2 1126.5,361.5 1126.0,363.3 1120.8,361.8" fill="#42c832"/>
<polygon points="1126.5,361.5 1131.4,362.6 1130.8,364.8 1126.0,363.3" fill="#42c832"/>
<polygon points="1163.8,369.6 1166.1,373.3 1164.3,374.3 1162.2,370.4" fill="#52f03c"/>
<polygon points="1166.1,373.3 1169.3,378.3 1167.0,379.6 1164.3,374.3" fill="#52f03c"/>
<polygon points="1169.3,378.3 1171.3,381.4 1168.7,382.9 1167.0,379.6" fill="#52f03c"/>
<path d="M529.2 71.4h1.5v1.5h-1.5zM530.1 70.7h1.7v1.7h-1.7zM527.9 74.7h1.0v1.0h-1.0zM526.3 77.5h1.5v1.5h-1.5zM529.4 75.6h1.4v1.4h-1.4zM529.7 71.2h1.2v1.2h-1.2zM555.8 87.8h1.8v1.8h-1.8zM555.1 94.5h1.3v1.3h-1.3zM554.5 91.7h1.5v1.5h-1.5zM553.3 96.2h1.7v1.7h-1.7zM556.8 78.4h1.5v1.5h-1.5zM552.1 98.9h1.5v1.5h-1.5zM549.4 99.0h1.8v1.8h-1.8zM549.0 103.0h1.1v1.1h-1.1zM554.7 79.3h1.2v1.2h-1.2zM553.0 90.2h1.3v1.3h-1.3zM551.7 101.7h2.0v2.0h-2.0zM556.3 78.4h1.9v1.9h-1.9zM555.8 84.6h1.1v1.1h-1.1zM551.8 100.0h1.3v1.3h-1.3zM547.9 100.8h1.1v1.1h-1.1zM554.5 77.1h1.6v1.6h-1.6zM550.1 98.1h1.0v1.0h-1.0zM550.5 97.7h1.1v1.1h-1.1zM552.5 87.8h1.1v1.1h-1.1zM548.4 101.6h1.8v1.8h-1.8zM549.9 105.1h1.1v1.1h-1.1zM551.6 90.1h1.1v1.1h-1.1zM544.7 115.5h1.2v1.2h-1.2zM541.2 126.0h1.6v1.6h-1.6zM540.4 130.5h1.1v1.1h-1.1zM540.6 136.2h1.1v1.1h-1.1zM539.7 137.2h1.2v1.2h-1.2zM540.9 126.7h1.7v1.7h-1.7zM541.9 125.1h1.3v1.3h-1.3zM543.9 130.4h1.6v1.6h-1.6zM544.3 117.2h1.8v1.8h-1.8zM544.3 120.2h1.7v1.7h-1.7zM538.8 132.1h1.8v1.8h-1.8zM542.9 132.9h1.0v1.0h-1.0zM537.1 137.2h1.4v1.4h-1.4zM543.9 128.2h1.7v1.7h-1.7zM539.0 138.4h1.0v1.0h-1.0zM545.4 122.1h1.8v1.8h-1.8zM546.2 120.9h1.3v1.3h-1.3zM537.3 135.1h1.1v1.1h-1.1zM539.9 133.5h1.3v1.3h-1.3zM538.7 142.7h1.2v1.2h-1.2zM542.2 123.5h1.1v1.1h-1.1zM540.4 122.3h1.0v1.0h-1.0zM544.9 119.3h1.7v1.7h-1.7zM540.0 131.3h1.5v1.5h-1.5zM542.1 124.2h1.2v1.2h-1.2zM541.5 134.6h1.5v1.5h-1.5zM574.7 70.4h1.9v1.9h-1.9zM577.7 67.1h1.1v1.1h-1.1zM572.9 73.1h1.4v1.4h-1.4zM573.3 68.0h2.0v2.0h-2.0zM572.6 69.5h1.0v1.0h-1.0zM571.9 71.6h1.8v1.8h-1.8zM577.7 67.1h1.1v1.1h-1.1zM573.0 68.5h1.3v1.3h-1.3zM575.0 69.7h1.7v1.7h-1.7zM576.9 70.2h1.0v1.0h-1.0zM590.7 60.3h1.4v1.4h-1.4zM589.1 59.4h1.2v1.2h-1.2zM589.5 57.3h1.5v1.5h-1.5zM590.9 56.5h1.8v1.8h-1.8zM508.4 158.3h1.3v1.3h-1.3zM508.0 152.1h1.2v1.2h-1.2zM509.4 149.7h2.0v2.0h-2.0zM506.6 151.3h1.2v1.2h-1.2zM507.8 156.3h1.8v1.8h-1.8zM505.6 150.7h1.1v1.1h-1.1zM509.2 157.2h1.6v1.6h-1.6zM509.2 154.7h1.2v1.2h-1.2zM523.0 163.8h1.8v1.8h-1.8zM524.0 166.5h1.0v1.0h-1.0zM525.6 170.9h1.8v1.8h-1.8zM528.8 173.5h1.5v1.5h-1.5zM527.5 172.5h1.2v1.2h-1.2zM521.6 164.7h1.2v1.2h-1.2zM526.8 170.5h1.3v1.3h-1.3zM524.9 163.3h1.2v1.2h-1.2zM525.5 173.2h1.8v1.8h-1.8zM525.0 162.8h1.6v1.6h-1.6zM525.9 173.3h1.4v1.4h-1.4zM524.5 166.2h2.0v2.0h-2.0zM524.9 172.8h1.4v1.4h-1.4zM520.8 162.4h1.2v1.2h-1.2zM528.9 173.6h1.7v1.7h-1.7zM498.1 131.4h1.6v1.6h-1.6zM496.2 135.4h1.8v1.8h-1.8zM498.7 130.5h1.8v1.8h-1.8zM498.6 130.5h1.9v1.9h-1.9zM496.1 132.3h1.3v1.3h-1.3zM573.4 185.5h1.8v1.8h-1.8zM582.9 209.8h1.6v1.6h-1.6zM578.2 187.8h1.8v1.8h-1.8zM572.4 192.9h1.1v1.1h-1.1zM571.5 188.9h1.1v1.1h-1.1zM576.1 210.1h1.2v1.2h-1.2zM578.0 213.1h1.9v1.9h-1.9zM582.5 185.4h1.0v1.0h-1.0zM572.7 187.4h1.7v1.7h-1.7zM582.6 208.2h1.7v1.7h-1.7zM582.0 190.5h1.9v1.9h-1.9zM580.9 216.5h1.4v1.4h-1.4zM578.4 210.2h1.0v1.0h-1.0zM578.2 182.7h1.3v1.3h-1.3zM579.0 198.1h1.5v1.5h-1.5zM579.5 194.1h1.6v1.6h-1.6zM576.4 210.2h1.6v1.6h-1.6zM575.8 197.4h1.3v1.3h-1.3zM571.5 186.1h1.4v1.4h-1.4zM576.8 186.0h1.5v1.5h-1.5zM573.3 202.2h1.9v1.9h-1.9zM575.7 212.8h1.1v1.1h-1.1zM574.0 198.1h2.0v2.0h-2.0zM571.1 200.7h1.7v1.7h-1.7zM574.0 183.3h1.3v1.3h-1.3zM575.5 216.4h1.2v1.2h-1.2zM579.1 204.5h1.1v1.1h-1.1zM581.4 200.6h1.6v1.6h-1.6zM573.8 188.6h1.9v1.9h-1.9zM579.7 211.8h1.1v1.1h-1.1zM576.5 217.2h1.4v1.4h-1.4zM580.4 189.9h1.8v1.8h-1.8zM580.7 186.2h1.2v1.2h-1.2zM581.1 206.7h1.9v1.9h-1.9zM578.2 182.5h1.0v1.0h-1.0zM573.8 178.6h1.2v1.2h-1.2zM575.8 192.3h1.0v1.0h-1.0zM573.2 190.2h1.8v1.8h-1.8zM570.7 199.1h1.6v1.6h-1.6zM574.3 187.9h1.1v1.1h-1.1zM579.8 195.5h1.6v1.6h-1.6zM578.4 212.9h1.7v1.7h-1.7zM571.6 208.1h1.6v1.6h-1.6zM579.5 206.9h1.1v1.1h-1.1zM571.8 203.8h1.0v1.0h-1.0zM576.8 193.7h1.9v1.9h-1.9zM577.2 200.2h1.1v1.1h-1.1zM571.4 202.9h1.5v1.5h-1.5zM578.1 209.1h1.8v1.8h-1.8zM569.7 206.0h1.3v1.3h-1.3zM578.7 189.0h1.9v1.9h-1.9zM569.4 193.9h1.5v1.5h-1.5zM568.6 193.6h1.0v1.0h-1.0zM573.3 211.0h1.8v1.8h-1.8zM578.1 215.4h1.3v1.3h-1.3zM580.3 182.9h1.9v1.9h-1.9zM577.0 202.4h2.0v2.0h-2.0zM573.0 201.9h1.3v1.3h-1.3zM573.1 182.5h1.8v1.8h-1.8zM571.9 200.9h1.3v1.3h-1.3zM577.2 209.8h1.7v1.7h-1.7zM583.4 201.2h1.6v1.6h-1.6zM578.3 179.9h1.5v1.5h-1.5zM577.4 193.5h1.2v1.2h-1.2zM572.0 193.5h1.1v1.1h-1.1zM580.2 181.8h1.5v1.5h-1.5zM573.6 238.3h1.8v1.8h-1.8zM568.9 245.8h1.2v1.2h-1.2zM572.0 241.7h1.6v1.6h-1.6zM572.2 240.6h1.4v1.4h-1.4zM571.4 235.4h1.4v1.4h-1.4zM574.5 242.6h1.2v1.2h-1.2zM572.2 246.9h1.9v1.9h-1.9zM567.5 244.9h1.8v1.8h-1.8zM574.9 242.9h1.3v1.3h-1.3zM567.7 239.1h2.0v2.0h-2.0zM569.2 239.3h1.5v1.5h-1.5zM570.6 239.0h2.0v2.0h-2.0zM570.5 250.8h1.2v1.2h-1.2zM494.7 207.2h1.9v1.9h-1.9zM493.7 202.8h1.5v1.5h-1.5zM494.3 207.8h1.6v1.6h-1.6zM499.4 218.0h1.8v1.8h-1.8zM497.1 220.5h1.8v1.8h-1.8zM492.0 212.3h1.7v1.7h-1.7zM494.0 216.8h1.6v1.6h-1.6zM494.0 214.6h1.8v1.8h-1.8zM493.5 210.2h1.9v1.9h-1.9zM497.6 215.4h1.7v1.7h-1.7zM490.4 206.7h1.4v1.4h-1.4zM495.1 210.1h1.2v1.2h-1.2zM493.7 211.5h1.1v1.1h-1.1zM500.1 218.5h2.0v2.0h-2.0zM502.5 239.4h1.9v1.9h-1.9zM511.9 251.7h1.6v1.6h-1.6zM509.1 238.6h1.8v1.8h-1.8zM512.9 254.4h1.3v1.3h-1.3zM506.0 238.4h1.5v1.5h-1.5zM506.2 241.5h1.2v1.2h-1.2zM508.9 237.1h1.8v1.8h-1.8zM509.4 238.0h1.9v1.9h-1.9zM513.8 249.9h1.1v1.1h-1.1zM512.1 249.8h2.0v2.0h-2.0zM505.3 237.0h1.3v1.3h-1.3zM506.8 241.6h1.2v1.2h-1.2zM511.1 250.0h1.5v1.5h-1.5zM507.8 244.0h1.8v1.8h-1.8zM505.4 232.3h1.5v1.5h-1.5zM511.6 247.7h1.5v1.5h-1.5zM501.7 234.4h1.6v1.6h-1.6zM503.7 243.8h1.1v1.1h-1.1zM507.7 235.3h1.5v1.5h-1.5zM508.1 238.4h1.7v1.7h-1.7zM505.8 237.3h1.5v1.5h-1.5zM507.2 246.6h1.2v1.2h-1.2zM507.9 249.5h1.2v1.2h-1.2zM502.5 240.6h1.9v1.9h-1.9zM505.0 235.8h1.7v1.7h-1.7zM511.3 246.0h1.9v1.9h-1.9zM501.5 234.0h1.1v1.1h-1.1zM509.8 236.7h1.2v1.2h-1.2zM504.7 243.8h1.1v1.1h-1.1zM508.0 246.8h1.6v1.6h-1.6zM506.3 238.3h1.7v1.7h-1.7zM509.9 252.5h1.4v1.4h-1.4zM504.5 240.3h1.1v1.1h-1.1zM503.5 237.9h1.3v1.3h-1.3zM666.8 437.6h1.1v1.1h-1.1zM672.8 452.8h1.1v1.1h-1.1zM667.2 437.0h1.2v1.2h-1.2zM660.1 448.5h1.5v1.5h-1.5zM671.9 450.7h1.7v1.7h-1.7zM663.4 448.1h1.6v1.6h-1.6zM673.4 449.5h1.9v1.9h-1.9zM673.1 443.1h1.2v1.2h-1.2zM671.8 450.8h2.0v2.0h-2.0zM670.3 441.6h1.0v1.0h-1.0zM673.6 444.7h1.1v1.1h-1.1zM663.5 455.6h1.9v1.9h-1.9zM667.1 458.1h1.1v1.1h-1.1zM672.8 455.3h1.5v1.5h-1.5zM672.7 451.4h1.8v1.8h-1.8zM669.2 441.5h1.1v1.1h-1.1zM662.5 442.9h1.1v1.1h-1.1zM670.1 461.0h1.2v1.2h-1.2zM666.4 450.1h1.6v1.6h-1.6zM900.4 849.4h1.2v1.2h-1.2zM899.3 844.0h1.8v1.8h-1.8zM896.4 839.2h1.4v1.4h-1.4zM892.8 828.8h1.5v1.5h-1.5zM899.2 848.1h1.9v1.9h-1.9zM896.2 833.6h1.2v1.2h-1.2zM901.6 850.0h1.7v1.7h-1.7zM891.2 830.6h1.9v1.9h-1.9zM897.5 837.6h1.6v1.6h-1.6zM897.2 844.6h1.9v1.9h-1.9zM895.4 837.7h1.0v1.0h-1.0z" fill="#de8018"/>
<path d="M529.7 77.7h1.5v1.5h-1.5zM530.2 74.4h1.3v1.3h-1.3zM528.5 75.9h1.3v1.3h-1.3zM528.4 71.9h1.7v1.7h-1.7zM529.1 77.1h2.0v2.0h-2.0zM529.3 75.9h1.8v1.8h-1.8zM529.5 78.1h2.0v2.0h-2.0zM531.4 72.5h2.0v2.0h-2.0zM527.4 76.3h1.3v1.3h-1.3zM528.4 77.6h2.0v2.0h-2.0zM528.7 77.9h1.6v1.6h-1.6zM528.0 77.5h2.0v2.0h-2.0zM527.0 79.8h1.9v1.9h-1.9zM527.7 80.1h1.6v1.6h-1.6zM528.0 72.1h1.1v1.1h-1.1zM549.5 96.7h1.7v1.7h-1.7zM551.7 93.2h1.0v1.0h-1.0zM550.9 94.4h1.7v1.7h-1.7zM554.5 88.7h1.3v1.3h-1.3zM553.0 90.7h1.1v1.1h-1.1zM550.3 96.8h1.6v1.6h-1.6zM554.9 80.9h1.5v1.5h-1.5zM550.6 95.8h1.5v1.5h-1.5zM553.5 85.9h1.9v1.9h-1.9zM555.2 79.4h1.9v1.9h-1.9zM552.5 80.7h1.8v1.8h-1.8zM550.7 92.7h1.8v1.8h-1.8zM551.8 84.5h1.9v1.9h-1.9zM549.2 105.1h1.8v1.8h-1.8zM552.1 93.1h1.1v1.1h-1.1zM549.8 91.3h1.8v1.8h-1.8zM548.4 93.5h1.7v1.7h-1.7zM552.7 86.4h1.6v1.6h-1.6zM556.4 83.9h1.8v1.8h-1.8zM539.6 135.4h1.3v1.3h-1.3zM539.2 138.9h1.3v1.3h-1.3zM541.9 127.5h1.9v1.9h-1.9zM543.5 120.1h1.6v1.6h-1.6zM540.4 135.5h1.2v1.2h-1.2zM539.7 134.2h1.9v1.9h-1.9zM541.8 131.4h1.2v1.2h-1.2zM540.8 123.0h1.4v1.4h-1.4zM543.7 125.9h1.7v1.7h-1.7zM545.7 117.5h1.9v1.9h-1.9zM545.0 128.6h1.3v1.3h-1.3zM542.4 123.9h1.1v1.1h-1.1zM539.0 138.3h1.1v1.1h-1.1zM539.8 133.8h1.4v1.4h-1.4zM546.3 116.3h1.6v1.6h-1.6zM538.4 131.9h1.5v1.5h-1.5zM543.3 121.9h1.1v1.1h-1.1zM545.1 119.5h1.7v1.7h-1.7zM540.6 131.0h1.3v1.3h-1.3zM545.1 117.1h1.3v1.3h-1.3zM542.1 133.2h1.2v1.2h-1.2zM543.0 129.1h1.6v1.6h-1.6zM541.1 124.8h1.6v1.6h-1.6zM539.6 124.3h1.5v1.5h-1.5zM543.2 128.4h1.2v1.2h-1.2zM538.3 140.6h1.6v1.6h-1.6zM541.3 132.7h2.0v2.0h-2.0zM538.6 133.9h1.0v1.0h-1.0zM543.3 116.7h1.4v1.4h-1.4zM540.7 123.8h2.0v2.0h-2.0zM539.3 141.4h1.2v1.2h-1.2zM541.3 122.7h1.9v1.9h-1.9zM542.5 121.5h1.7v1.7h-1.7zM537.8 134.8h1.2v1.2h-1.2zM543.1 122.2h1.9v1.9h-1.9zM543.7 124.7h1.1v1.1h-1.1zM544.3 125.8h1.2v1.2h-1.2zM575.7 71.5h1.8v1.8h-1.8zM573.1 70.1h1.4v1.4h-1.4zM575.0 69.0h1.6v1.6h-1.6zM574.4 65.8h1.2v1.2h-1.2zM577.3 69.8h1.9v1.9h-1.9zM575.2 70.3h1.1v1.1h-1.1zM588.8 60.4h1.4v1.4h-1.4zM589.4 59.0h1.1v1.1h-1.1zM591.0 57.5h1.5v1.5h-1.5zM510.0 152.3h1.9v1.9h-1.9zM507.8 156.5h1.8v1.8h-1.8zM509.0 148.9h1.1v1.1h-1.1zM507.0 149.9h1.1v1.1h-1.1zM510.2 153.4h1.7v1.7h-1.7zM507.2 155.2h1.4v1.4h-1.4zM505.9 144.0h1.8v1.8h-1.8zM506.2 151.8h1.5v1.5h-1.5zM508.8 151.8h1.2v1.2h-1.2zM508.8 149.3h1.6v1.6h-1.6zM506.1 144.8h1.4v1.4h-1.4zM506.6 149.2h1.1v1.1h-1.1zM524.2 164.4h1.6v1.6h-1.6zM520.6 163.9h1.4v1.4h-1.4zM525.4 165.5h1.1v1.1h-1.1zM524.9 170.7h1.6v1.6h-1.6zM525.1 162.8h1.0v1.0h-1.0zM526.5 164.0h1.2v1.2h-1.2zM521.0 157.6h1.4v1.4h-1.4zM519.2 156.4h1.9v1.9h-1.9zM526.1 162.9h1.6v1.6h-1.6zM525.1 169.6h1.1v1.1h-1.1zM522.6 163.0h1.3v1.3h-1.3zM526.8 175.0h1.3v1.3h-1.3zM519.4 154.8h1.5v1.5h-1.5zM520.7 155.4h1.1v1.1h-1.1zM526.4 174.3h1.1v1.1h-1.1zM522.3 164.1h1.4v1.4h-1.4zM524.7 168.9h1.5v1.5h-1.5zM523.0 156.3h1.2v1.2h-1.2zM528.1 174.8h1.2v1.2h-1.2zM523.9 165.2h1.7v1.7h-1.7zM529.2 176.0h1.5v1.5h-1.5zM523.6 159.9h1.2v1.2h-1.2zM527.5 171.5h1.6v1.6h-1.6zM527.9 174.7h1.5v1.5h-1.5zM498.1 130.9h1.3v1.3h-1.3zM495.8 131.9h1.3v1.3h-1.3zM574.0 184.3h2.0v2.0h-2.0zM579.9 189.8h1.2v1.2h-1.2zM573.4 188.5h1.5v1.5h-1.5zM581.8 199.9h1.3v1.3h-1.3zM576.0 201.5h1.5v1.5h-1.5zM571.4 196.6h1.5v1.5h-1.5zM570.2 197.1h1.7v1.7h-1.7zM577.9 196.9h1.3v1.3h-1.3zM570.9 210.2h1.5v1.5h-1.5zM578.4 188.9h1.2v1.2h-1.2zM573.1 196.4h1.7v1.7h-1.7zM575.9 188.4h2.0v2.0h-2.0zM580.0 213.8h1.0v1.0h-1.0zM573.0 206.4h1.4v1.4h-1.4zM580.8 197.3h1.2v1.2h-1.2zM581.8 214.1h1.2v1.2h-1.2zM573.3 195.1h1.5v1.5h-1.5zM580.6 189.3h1.2v1.2h-1.2zM573.5 183.5h1.1v1.1h-1.1zM575.8 208.0h1.9v1.9h-1.9zM576.6 192.9h1.8v1.8h-1.8zM572.9 187.2h1.4v1.4h-1.4zM576.2 194.2h1.0v1.0h-1.0zM579.0 205.5h1.9v1.9h-1.9zM572.7 192.7h2.0v2.0h-2.0zM573.2 190.1h1.3v1.3h-1.3zM574.1 182.4h1.1v1.1h-1.1zM580.5 195.6h1.2v1.2h-1.2zM575.6 200.0h1.8v1.8h-1.8zM572.3 210.9h2.0v2.0h-2.0zM576.3 211.2h2.0v2.0h-2.0zM569.5 203.6h1.4v1.4h-1.4zM580.5 204.5h1.5v1.5h-1.5zM573.7 192.5h1.6v1.6h-1.6zM574.4 205.6h1.4v1.4h-1.4zM575.5 188.9h1.8v1.8h-1.8zM575.8 203.0h1.6v1.6h-1.6zM574.6 203.4h1.3v1.3h-1.3zM578.2 215.0h1.9v1.9h-1.9zM576.5 189.0h1.0v1.0h-1.0zM576.4 180.8h1.6v1.6h-1.6zM578.4 202.3h1.7v1.7h-1.7zM575.9 194.1h1.5v1.5h-1.5zM573.0 190.6h1.0v1.0h-1.0zM573.1 182.8h1.4v1.4h-1.4zM573.7 182.0h1.8v1.8h-1.8zM583.5 205.2h1.6v1.6h-1.6zM576.3 199.1h1.2v1.2h-1.2zM577.3 191.0h1.1v1.1h-1.1zM572.3 185.7h1.6v1.6h-1.6zM578.7 196.2h1.5v1.5h-1.5zM574.3 194.9h1.9v1.9h-1.9zM576.0 189.5h1.4v1.4h-1.4zM581.1 216.3h1.2v1.2h-1.2zM581.3 193.1h1.8v1.8h-1.8zM571.3 202.6h1.2v1.2h-1.2zM579.7 201.5h1.8v1.8h-1.8zM572.1 190.9h1.3v1.3h-1.3zM582.5 188.4h2.0v2.0h-2.0zM576.3 195.8h1.6v1.6h-1.6zM573.3 189.7h1.6v1.6h-1.6zM575.7 211.7h1.7v1.7h-1.7zM574.5 188.0h1.9v1.9h-1.9zM574.4 196.7h1.4v1.4h-1.4zM579.1 215.8h1.5v1.5h-1.5zM581.1 206.9h1.9v1.9h-1.9zM576.8 193.5h1.1v1.1h-1.1zM582.6 196.5h1.2v1.2h-1.2zM573.2 191.2h1.9v1.9h-1.9zM574.8 198.6h1.9v1.9h-1.9zM573.9 185.2h1.6v1.6h-1.6zM579.6 207.3h2.0v2.0h-2.0zM576.8 185.4h1.8v1.8h-1.8zM574.0 184.1h1.9v1.9h-1.9zM579.6 196.4h1.1v1.1h-1.1zM582.0 213.8h1.0v1.0h-1.0zM582.2 204.0h1.4v1.4h-1.4zM575.2 203.6h1.3v1.3h-1.3zM578.0 187.5h1.9v1.9h-1.9zM579.9 195.8h1.2v1.2h-1.2zM575.6 189.1h1.8v1.8h-1.8zM573.2 198.8h1.4v1.4h-1.4zM576.4 199.6h1.3v1.3h-1.3zM575.5 206.5h1.6v1.6h-1.6zM572.1 181.9h1.7v1.7h-1.7zM571.2 209.1h1.4v1.4h-1.4zM579.0 210.5h1.8v1.8h-1.8zM575.9 189.8h1.8v1.8h-1.8zM575.9 207.1h1.8v1.8h-1.8zM572.1 199.2h1.9v1.9h-1.9zM572.7 197.2h1.4v1.4h-1.4zM575.0 194.4h1.9v1.9h-1.9zM573.0 203.1h1.6v1.6h-1.6zM580.7 217.3h2.0v2.0h-2.0zM572.9 192.9h1.6v1.6h-1.6zM570.4 242.6h1.6v1.6h-1.6zM569.9 237.0h1.7v1.7h-1.7zM569.1 235.7h1.0v1.0h-1.0zM572.4 242.5h1.0v1.0h-1.0zM573.1 240.3h1.2v1.2h-1.2zM569.4 240.0h1.7v1.7h-1.7zM570.6 237.0h1.4v1.4h-1.4zM573.7 243.5h1.5v1.5h-1.5zM572.5 241.3h1.8v1.8h-1.8zM571.2 233.4h1.9v1.9h-1.9zM574.7 244.4h1.8v1.8h-1.8zM569.6 236.7h1.6v1.6h-1.6zM575.0 241.4h1.4v1.4h-1.4zM573.6 242.8h1.5v1.5h-1.5zM574.7 242.8h1.5v1.5h-1.5zM570.7 241.7h1.5v1.5h-1.5zM571.5 243.8h1.8v1.8h-1.8zM570.8 242.8h1.4v1.4h-1.4zM567.2 244.5h1.5v1.5h-1.5zM572.8 246.6h1.6v1.6h-1.6zM573.9 236.2h1.5v1.5h-1.5zM569.3 237.8h1.4v1.4h-1.4zM570.5 244.2h1.9v1.9h-1.9zM571.1 249.3h1.1v1.1h-1.1zM571.9 241.0h1.6v1.6h-1.6zM568.2 244.7h1.7v1.7h-1.7zM571.6 238.5h1.8v1.8h-1.8zM570.6 240.6h1.2v1.2h-1.2zM569.7 245.1h1.2v1.2h-1.2zM493.0 210.6h1.4v1.4h-1.4zM494.5 212.7h1.5v1.5h-1.5zM499.8 215.6h1.7v1.7h-1.7zM497.3 218.3h1.8v1.8h-1.8zM499.8 220.2h1.8v1.8h-1.8zM492.2 202.5h1.6v1.6h-1.6zM496.2 210.9h1.9v1.9h-1.9zM493.8 210.1h2.0v2.0h-2.0zM493.8 210.7h1.1v1.1h-1.1zM501.1 220.1h1.8v1.8h-1.8zM491.4 209.7h1.1v1.1h-1.1zM497.8 216.4h1.1v1.1h-1.1zM494.3 213.5h1.2v1.2h-1.2zM494.9 215.8h1.7v1.7h-1.7zM499.4 225.1h2.0v2.0h-2.0zM492.2 209.1h1.5v1.5h-1.5zM493.4 216.6h1.8v1.8h-1.8zM493.7 206.2h2.0v2.0h-2.0zM499.9 214.9h1.8v1.8h-1.8zM500.0 218.8h1.9v1.9h-1.9zM497.1 208.9h1.4v1.4h-1.4zM507.1 240.9h1.4v1.4h-1.4zM509.5 241.5h1.4v1.4h-1.4zM508.3 243.2h1.5v1.5h-1.5zM509.1 244.8h1.5v1.5h-1.5zM506.4 238.4h1.5v1.5h-1.5zM508.7 242.8h1.7v1.7h-1.7zM509.6 243.0h1.5v1.5h-1.5zM510.3 243.8h1.6v1.6h-1.6zM504.1 236.6h1.6v1.6h-1.6zM501.5 231.0h1.5v1.5h-1.5zM510.8 254.9h1.1v1.1h-1.1zM506.3 244.1h1.6v1.6h-1.6zM512.2 247.0h1.6v1.6h-1.6zM505.7 233.7h1.9v1.9h-1.9zM509.9 244.9h1.9v1.9h-1.9zM503.0 238.0h1.9v1.9h-1.9zM513.4 250.3h1.4v1.4h-1.4zM508.8 249.2h1.1v1.1h-1.1zM508.3 239.5h1.7v1.7h-1.7zM510.6 242.5h1.3v1.3h-1.3zM506.1 238.5h1.5v1.5h-1.5zM512.1 251.9h1.7v1.7h-1.7zM512.0 249.0h1.8v1.8h-1.8zM504.6 233.5h1.2v1.2h-1.2zM510.0 252.5h1.3v1.3h-1.3zM511.5 249.7h1.3v1.3h-1.3zM504.6 238.1h1.2v1.2h-1.2zM504.1 241.0h1.8v1.8h-1.8zM511.8 242.8h1.0v1.0h-1.0zM502.0 232.0h1.0v1.0h-1.0zM480.6 88.1h1.1v1.1h-1.1zM479.7 85.8h1.8v1.8h-1.8zM480.7 87.3h1.1v1.1h-1.1zM734.1 249.3h1.4v1.4h-1.4zM734.6 251.0h1.6v1.6h-1.6zM734.9 245.0h1.8v1.8h-1.8zM734.6 245.9h1.1v1.1h-1.1zM734.2 250.3h1.5v1.5h-1.5zM735.6 247.8h1.9v1.9h-1.9zM734.2 241.5h1.4v1.4h-1.4zM734.4 251.5h1.5v1.5h-1.5zM736.9 250.0h1.8v1.8h-1.8zM735.8 248.5h1.3v1.3h-1.3zM734.6 249.3h1.2v1.2h-1.2zM735.6 252.2h1.7v1.7h-1.7zM736.8 244.8h1.0v1.0h-1.0zM734.7 240.7h1.2v1.2h-1.2zM736.6 244.3h1.3v1.3h-1.3zM734.8 244.3h1.1v1.1h-1.1zM735.1 242.9h1.1v1.1h-1.1zM732.9 245.5h1.7v1.7h-1.7zM709.9 294.1h1.7v1.7h-1.7zM711.6 295.7h2.0v2.0h-2.0zM713.0 293.9h1.2v1.2h-1.2zM710.0 289.5h1.2v1.2h-1.2zM711.6 289.8h1.7v1.7h-1.7zM710.6 291.7h1.4v1.4h-1.4zM710.7 288.5h1.5v1.5h-1.5zM710.0 293.0h1.5v1.5h-1.5zM710.5 289.3h1.1v1.1h-1.1zM711.1 286.7h1.8v1.8h-1.8zM709.8 293.5h2.0v2.0h-2.0zM725.5 300.2h1.3v1.3h-1.3zM724.4 305.7h1.8v1.8h-1.8zM724.4 304.8h1.5v1.5h-1.5zM725.4 300.0h1.7v1.7h-1.7zM726.2 304.5h2.0v2.0h-2.0zM724.2 298.3h1.4v1.4h-1.4zM700.4 337.0h1.7v1.7h-1.7zM698.7 337.7h1.4v1.4h-1.4zM699.1 329.1h1.1v1.1h-1.1zM699.2 330.2h1.6v1.6h-1.6zM697.7 334.6h1.6v1.6h-1.6zM687.3 397.2h1.2v1.2h-1.2zM688.3 392.5h1.8v1.8h-1.8zM688.2 381.6h1.0v1.0h-1.0zM687.6 397.9h1.4v1.4h-1.4zM688.2 395.1h2.0v2.0h-2.0zM687.5 390.9h2.0v2.0h-2.0zM688.5 393.7h1.3v1.3h-1.3zM688.7 389.2h1.1v1.1h-1.1zM688.8 376.4h1.8v1.8h-1.8zM688.1 378.9h1.0v1.0h-1.0zM1146.0 572.0h1.6v1.6h-1.6zM1137.9 577.2h1.6v1.6h-1.6zM1136.5 577.1h1.5v1.5h-1.5zM1146.4 575.5h1.2v1.2h-1.2zM1142.3 576.2h1.6v1.6h-1.6zM1140.7 579.7h1.9v1.9h-1.9zM1143.6 571.4h1.8v1.8h-1.8zM1146.6 571.3h1.5v1.5h-1.5zM1143.0 578.2h1.7v1.7h-1.7zM1136.8 571.9h1.6v1.6h-1.6zM1138.7 578.2h1.7v1.7h-1.7zM1138.8 575.4h1.3v1.3h-1.3zM1144.4 570.0h1.5v1.5h-1.5zM673.8 443.1h1.5v1.5h-1.5zM660.4 433.3h1.7v1.7h-1.7zM664.0 435.1h1.8v1.8h-1.8zM676.6 445.0h1.7v1.7h-1.7zM662.3 447.7h1.2v1.2h-1.2zM678.4 453.2h1.8v1.8h-1.8zM668.9 450.7h1.1v1.1h-1.1zM673.6 433.1h2.0v2.0h-2.0zM661.8 465.7h1.3v1.3h-1.3zM661.5 438.3h1.4v1.4h-1.4zM666.4 425.0h1.6v1.6h-1.6zM657.3 465.1h1.8v1.8h-1.8zM658.8 456.2h1.6v1.6h-1.6zM662.2 447.7h1.5v1.5h-1.5zM669.9 445.8h1.7v1.7h-1.7zM664.9 457.3h1.4v1.4h-1.4zM655.7 446.2h1.3v1.3h-1.3zM666.6 461.2h1.5v1.5h-1.5zM677.8 458.8h1.8v1.8h-1.8zM669.7 434.0h1.2v1.2h-1.2zM659.4 446.3h1.2v1.2h-1.2zM670.5 472.3h1.7v1.7h-1.7zM670.9 446.8h1.6v1.6h-1.6zM663.0 460.9h1.1v1.1h-1.1zM664.5 455.2h1.1v1.1h-1.1zM660.9 465.0h1.5v1.5h-1.5zM670.1 449.6h1.7v1.7h-1.7zM669.9 470.0h1.8v1.8h-1.8zM672.2 461.4h1.4v1.4h-1.4zM663.5 460.5h1.3v1.3h-1.3zM661.4 433.1h1.7v1.7h-1.7zM672.8 439.8h1.0v1.0h-1.0zM661.6 433.0h2.0v2.0h-2.0zM668.2 438.4h1.5v1.5h-1.5zM671.1 445.4h1.9v1.9h-1.9zM670.1 441.1h1.1v1.1h-1.1zM665.4 432.3h1.3v1.3h-1.3zM666.4 459.8h1.6v1.6h-1.6zM667.3 448.7h1.0v1.0h-1.0zM678.1 461.0h1.7v1.7h-1.7zM674.2 456.2h1.1v1.1h-1.1zM670.0 451.9h1.5v1.5h-1.5zM655.1 460.7h1.0v1.0h-1.0zM667.0 446.2h1.2v1.2h-1.2zM659.8 466.0h1.2v1.2h-1.2zM664.9 442.8h1.7v1.7h-1.7zM669.8 464.0h1.5v1.5h-1.5zM677.1 452.5h1.9v1.9h-1.9zM674.3 443.3h1.7v1.7h-1.7zM667.0 440.8h1.0v1.0h-1.0zM670.0 464.7h1.0v1.0h-1.0zM663.6 457.0h1.9v1.9h-1.9zM666.1 442.3h1.5v1.5h-1.5zM674.4 467.6h1.7v1.7h-1.7zM669.2 438.3h1.6v1.6h-1.6zM668.5 425.9h1.8v1.8h-1.8zM675.1 457.7h1.9v1.9h-1.9zM666.7 440.9h1.7v1.7h-1.7zM655.6 457.5h1.6v1.6h-1.6zM670.7 441.8h1.5v1.5h-1.5zM674.8 447.3h2.0v2.0h-2.0zM665.0 439.7h1.9v1.9h-1.9zM672.0 443.2h1.4v1.4h-1.4zM667.6 460.6h1.8v1.8h-1.8zM669.2 438.7h1.3v1.3h-1.3zM661.8 461.9h1.8v1.8h-1.8zM658.1 445.2h1.3v1.3h-1.3zM666.3 442.8h2.0v2.0h-2.0zM675.2 445.5h1.9v1.9h-1.9zM667.8 449.5h1.4v1.4h-1.4zM671.5 445.3h1.4v1.4h-1.4zM670.3 462.2h1.8v1.8h-1.8zM658.5 455.1h1.8v1.8h-1.8zM660.9 452.4h1.2v1.2h-1.2zM670.4 468.6h1.8v1.8h-1.8zM665.4 456.8h1.4v1.4h-1.4zM670.4 442.4h1.2v1.2h-1.2zM664.0 449.2h1.8v1.8h-1.8zM659.4 453.3h1.6v1.6h-1.6zM658.5 463.6h1.2v1.2h-1.2zM661.0 455.2h1.6v1.6h-1.6zM666.3 433.6h1.6v1.6h-1.6zM666.8 446.7h1.7v1.7h-1.7zM673.4 455.0h1.3v1.3h-1.3zM667.1 434.3h1.4v1.4h-1.4zM669.3 464.7h1.3v1.3h-1.3zM665.0 442.8h1.6v1.6h-1.6zM671.3 459.2h1.6v1.6h-1.6zM667.3 434.4h1.6v1.6h-1.6zM671.7 431.7h1.3v1.3h-1.3zM663.9 454.3h1.3v1.3h-1.3zM664.1 459.8h1.4v1.4h-1.4zM656.1 464.0h1.7v1.7h-1.7zM665.9 442.9h1.7v1.7h-1.7zM663.3 432.7h1.2v1.2h-1.2zM674.2 469.6h1.6v1.6h-1.6zM963.8 675.9h1.4v1.4h-1.4zM962.3 675.1h1.5v1.5h-1.5zM959.8 679.4h1.5v1.5h-1.5zM963.7 680.4h1.0v1.0h-1.0zM961.0 677.0h1.1v1.1h-1.1zM959.6 678.8h1.2v1.2h-1.2zM963.1 677.4h0.9v0.9h-0.9zM963.1 677.2h0.9v0.9h-0.9zM898.2 840.8h2.0v2.0h-2.0zM894.0 835.6h2.0v2.0h-2.0zM900.3 847.4h1.5v1.5h-1.5zM898.4 843.9h1.3v1.3h-1.3zM893.0 838.3h1.6v1.6h-1.6zM898.4 840.9h1.7v1.7h-1.7zM891.0 830.9h1.1v1.1h-1.1zM897.7 845.2h1.9v1.9h-1.9zM896.0 844.9h1.5v1.5h-1.5zM893.6 831.7h2.0v2.0h-2.0zM897.2 840.6h1.7v1.7h-1.7zM896.4 845.5h1.9v1.9h-1.9zM897.3 838.4h1.0v1.0h-1.0zM897.5 837.9h1.0v1.0h-1.0zM895.9 833.2h1.4v1.4h-1.4zM894.9 840.2h1.5v1.5h-1.5zM894.8 837.0h1.9v1.9h-1.9zM896.7 835.2h1.4v1.4h-1.4zM900.5 846.8h2.0v2.0h-2.0zM899.6 845.7h1.4v1.4h-1.4zM891.3 832.1h1.0v1.0h-1.0zM900.5 845.6h1.1v1.1h-1.1zM898.5 849.0h2.0v2.0h-2.0zM877.9 857.2h1.1v1.1h-1.1zM1196.6 833.8h1.4v1.4h-1.4zM1198.1 831.2h1.4v1.4h-1.4zM1193.8 831.0h1.6v1.6h-1.6zM1194.8 836.2h1.6v1.6h-1.6zM1192.7 833.4h1.4v1.4h-1.4zM1191.9 832.6h1.7v1.7h-1.7zM1194.1 833.7h1.5v1.5h-1.5zM1196.3 835.4h1.0v1.0h-1.0zM1196.2 833.0h1.1v1.1h-1.1zM1195.1 836.1h1.2v1.2h-1.2zM1195.3 827.9h1.6v1.6h-1.6zM1196.1 830.7h1.5v1.5h-1.5zM1194.0 826.5h1.5v1.5h-1.5zM1192.5 832.1h1.5v1.5h-1.5zM1195.0 825.7h1.0v1.0h-1.0zM1194.8 833.4h1.5v1.5h-1.5zM1194.4 836.2h1.7v1.7h-1.7zM1194.1 831.8h1.5v1.5h-1.5zM756.0 1181.0h2.0v2.0h-2.0z" fill="#eef040"/>
<path d="M525.8 81.1h1.6v1.6h-1.6zM527.2 68.4h1.2v1.2h-1.2zM528.5 82.1h1.1v1.1h-1.1zM529.6 81.5h1.3v1.3h-1.3zM547.2 104.7h1.3v1.3h-1.3zM556.0 97.7h1.4v1.4h-1.4zM555.9 98.8h1.2v1.2h-1.2zM547.6 108.4h1.4v1.4h-1.4zM558.3 79.5h1.2v1.2h-1.2zM547.8 112.3h1.2v1.2h-1.2zM558.4 80.2h1.5v1.5h-1.5zM555.8 72.9h1.1v1.1h-1.1zM557.6 74.7h1.3v1.3h-1.3zM534.9 139.1h1.8v1.8h-1.8zM544.8 133.2h1.7v1.7h-1.7zM546.3 128.1h1.7v1.7h-1.7zM536.5 132.3h1.2v1.2h-1.2zM535.9 136.3h1.7v1.7h-1.7zM535.0 146.9h1.5v1.5h-1.5zM538.6 125.0h1.1v1.1h-1.1zM537.6 127.5h1.0v1.0h-1.0zM572.2 75.0h1.9v1.9h-1.9zM510.2 141.7h1.8v1.8h-1.8zM506.5 159.1h1.7v1.7h-1.7zM504.5 143.2h1.1v1.1h-1.1zM509.6 159.1h1.4v1.4h-1.4zM522.5 170.1h1.3v1.3h-1.3zM530.4 175.1h2.0v2.0h-2.0zM518.2 157.3h1.7v1.7h-1.7zM518.9 161.5h2.0v2.0h-2.0zM531.7 179.0h1.6v1.6h-1.6zM522.0 153.1h1.0v1.0h-1.0zM497.1 128.8h1.9v1.9h-1.9zM567.1 196.4h1.3v1.3h-1.3zM573.3 215.7h1.5v1.5h-1.5zM583.3 218.4h1.1v1.1h-1.1zM567.3 189.1h1.7v1.7h-1.7zM566.0 208.8h1.5v1.5h-1.5zM585.1 184.4h1.8v1.8h-1.8zM587.5 183.4h1.1v1.1h-1.1zM583.9 219.7h1.1v1.1h-1.1zM585.6 193.5h1.3v1.3h-1.3zM583.3 173.7h1.9v1.9h-1.9zM564.1 193.6h1.1v1.1h-1.1zM585.7 198.7h1.4v1.4h-1.4zM567.3 192.8h1.7v1.7h-1.7zM585.7 186.2h2.0v2.0h-2.0zM569.6 217.3h1.6v1.6h-1.6zM583.0 217.7h1.9v1.9h-1.9zM588.2 192.2h1.8v1.8h-1.8zM581.2 219.6h1.5v1.5h-1.5zM587.3 203.2h1.8v1.8h-1.8zM567.9 206.3h1.5v1.5h-1.5zM587.5 220.5h1.0v1.0h-1.0zM578.4 169.3h2.0v2.0h-2.0zM585.8 196.4h1.6v1.6h-1.6zM578.7 221.9h1.8v1.8h-1.8zM582.1 176.2h1.2v1.2h-1.2zM566.4 218.6h1.9v1.9h-1.9zM569.0 179.8h1.5v1.5h-1.5zM584.9 216.7h1.7v1.7h-1.7zM589.7 204.4h1.8v1.8h-1.8zM567.1 199.1h1.9v1.9h-1.9zM579.9 171.8h1.8v1.8h-1.8zM576.6 244.5h1.6v1.6h-1.6zM565.4 237.4h1.7v1.7h-1.7zM566.6 245.3h1.8v1.8h-1.8zM575.8 247.8h1.6v1.6h-1.6zM504.0 225.5h1.1v1.1h-1.1zM491.0 198.8h1.7v1.7h-1.7zM500.5 228.1h1.4v1.4h-1.4zM498.6 226.1h2.0v2.0h-2.0zM491.3 215.5h1.2v1.2h-1.2zM497.9 228.5h1.4v1.4h-1.4zM499.0 209.8h1.7v1.7h-1.7zM500.7 225.2h1.7v1.7h-1.7zM501.1 215.2h1.4v1.4h-1.4zM489.9 210.8h1.3v1.3h-1.3zM488.9 204.6h1.4v1.4h-1.4zM500.0 212.4h1.4v1.4h-1.4zM488.1 200.0h1.1v1.1h-1.1zM492.0 217.9h1.1v1.1h-1.1zM500.1 235.3h1.1v1.1h-1.1zM500.3 231.7h1.9v1.9h-1.9zM504.3 246.6h1.3v1.3h-1.3zM496.2 230.4h1.4v1.4h-1.4zM516.7 253.7h1.7v1.7h-1.7zM509.1 255.3h1.8v1.8h-1.8zM516.3 253.5h1.8v1.8h-1.8zM516.0 244.9h1.7v1.7h-1.7zM514.6 259.5h1.4v1.4h-1.4zM480.4 89.3h1.2v1.2h-1.2zM481.7 88.7h1.3v1.3h-1.3zM481.7 89.5h1.9v1.9h-1.9zM737.2 255.3h1.9v1.9h-1.9zM734.6 232.9h1.6v1.6h-1.6zM736.7 269.9h1.8v1.8h-1.8zM738.3 264.8h1.1v1.1h-1.1zM734.1 240.6h1.1v1.1h-1.1zM736.6 235.3h1.9v1.9h-1.9zM734.1 241.7h1.2v1.2h-1.2zM733.6 234.1h1.1v1.1h-1.1zM736.7 268.6h2.0v2.0h-2.0zM736.9 263.1h1.3v1.3h-1.3zM735.7 253.4h1.2v1.2h-1.2zM730.9 249.4h1.4v1.4h-1.4zM739.5 256.2h1.2v1.2h-1.2zM734.7 237.5h1.2v1.2h-1.2zM736.5 264.0h1.3v1.3h-1.3zM735.0 261.1h1.4v1.4h-1.4zM732.8 233.6h1.2v1.2h-1.2zM732.9 249.3h1.2v1.2h-1.2zM732.8 238.9h1.1v1.1h-1.1zM732.7 252.3h1.0v1.0h-1.0zM736.1 236.7h1.1v1.1h-1.1zM732.0 256.7h1.4v1.4h-1.4zM739.1 258.6h1.1v1.1h-1.1zM738.2 251.8h1.4v1.4h-1.4zM734.4 265.5h1.9v1.9h-1.9zM734.5 246.4h1.1v1.1h-1.1zM737.0 243.0h1.4v1.4h-1.4zM731.4 241.4h1.5v1.5h-1.5zM738.1 251.1h1.7v1.7h-1.7zM730.4 249.4h1.5v1.5h-1.5zM735.5 258.9h1.7v1.7h-1.7zM737.1 251.4h1.0v1.0h-1.0zM738.2 245.1h1.0v1.0h-1.0zM735.8 251.0h1.6v1.6h-1.6zM735.3 254.1h1.5v1.5h-1.5zM736.2 242.2h1.4v1.4h-1.4zM737.0 254.4h1.1v1.1h-1.1zM735.6 232.2h1.8v1.8h-1.8zM733.3 251.7h1.5v1.5h-1.5zM734.2 225.0h1.2v1.2h-1.2zM738.2 229.3h1.5v1.5h-1.5zM732.8 245.9h1.1v1.1h-1.1zM729.5 241.1h1.1v1.1h-1.1zM731.1 244.0h1.2v1.2h-1.2zM737.0 246.1h1.7v1.7h-1.7zM735.3 266.0h1.2v1.2h-1.2zM730.6 261.1h1.9v1.9h-1.9zM734.6 243.0h1.4v1.4h-1.4zM740.0 250.3h1.3v1.3h-1.3zM711.1 280.4h1.3v1.3h-1.3zM715.1 300.9h1.5v1.5h-1.5zM714.6 304.5h1.9v1.9h-1.9zM711.4 305.5h1.4v1.4h-1.4zM709.6 295.6h1.5v1.5h-1.5zM713.1 285.7h1.1v1.1h-1.1zM714.4 293.7h1.7v1.7h-1.7zM709.2 291.9h1.3v1.3h-1.3zM708.7 296.0h1.0v1.0h-1.0zM713.3 288.8h1.1v1.1h-1.1zM711.8 292.8h1.5v1.5h-1.5zM715.8 292.7h1.9v1.9h-1.9zM708.7 287.5h1.1v1.1h-1.1zM709.5 295.0h1.9v1.9h-1.9zM712.4 291.1h1.6v1.6h-1.6zM713.3 287.2h1.8v1.8h-1.8zM713.3 295.6h1.9v1.9h-1.9zM711.2 284.0h1.8v1.8h-1.8zM709.9 296.5h1.9v1.9h-1.9zM710.0 294.2h2.0v2.0h-2.0zM714.0 293.8h1.9v1.9h-1.9zM708.8 292.3h1.9v1.9h-1.9zM711.6 292.5h1.3v1.3h-1.3zM709.8 296.4h1.8v1.8h-1.8zM708.0 300.5h1.5v1.5h-1.5zM708.2 284.1h1.8v1.8h-1.8zM709.5 295.6h1.0v1.0h-1.0zM708.1 283.9h1.3v1.3h-1.3zM726.0 308.0h1.2v1.2h-1.2zM724.3 292.7h2.0v2.0h-2.0zM725.3 309.7h1.3v1.3h-1.3zM724.7 310.8h1.4v1.4h-1.4zM726.5 317.9h1.6v1.6h-1.6zM721.3 288.3h1.3v1.3h-1.3zM723.8 293.0h1.7v1.7h-1.7zM725.1 301.8h1.6v1.6h-1.6zM725.2 294.1h2.0v2.0h-2.0zM726.1 297.6h1.3v1.3h-1.3zM725.0 301.3h1.7v1.7h-1.7zM724.0 307.7h1.6v1.6h-1.6zM724.8 294.8h1.3v1.3h-1.3zM723.8 306.8h1.5v1.5h-1.5zM727.1 301.3h1.1v1.1h-1.1zM725.8 303.1h1.8v1.8h-1.8zM724.0 293.3h1.3v1.3h-1.3zM726.6 302.5h1.8v1.8h-1.8zM724.1 295.8h1.7v1.7h-1.7zM725.7 294.6h1.8v1.8h-1.8zM701.9 352.4h1.8v1.8h-1.8zM698.7 316.8h1.1v1.1h-1.1zM702.7 344.7h1.2v1.2h-1.2zM699.6 328.0h1.8v1.8h-1.8zM698.6 328.2h1.7v1.7h-1.7zM701.3 316.3h1.7v1.7h-1.7zM699.0 329.0h1.0v1.0h-1.0zM701.6 336.9h1.1v1.1h-1.1zM698.3 337.5h1.3v1.3h-1.3zM699.2 333.8h1.6v1.6h-1.6zM696.5 324.4h1.2v1.2h-1.2zM702.2 319.0h1.6v1.6h-1.6zM701.2 326.3h1.1v1.1h-1.1zM699.6 329.9h1.5v1.5h-1.5zM700.2 333.2h1.2v1.2h-1.2zM699.7 326.3h1.0v1.0h-1.0zM698.4 338.9h1.3v1.3h-1.3zM696.3 331.5h1.3v1.3h-1.3zM700.5 339.1h1.8v1.8h-1.8zM699.1 338.9h1.2v1.2h-1.2zM698.0 325.3h1.5v1.5h-1.5zM700.4 341.9h1.4v1.4h-1.4zM701.6 338.0h1.1v1.1h-1.1zM698.6 321.8h2.0v2.0h-2.0zM699.7 332.7h1.9v1.9h-1.9zM700.6 337.9h1.3v1.3h-1.3zM698.1 329.7h1.2v1.2h-1.2zM699.5 335.8h1.3v1.3h-1.3zM699.0 320.7h1.9v1.9h-1.9zM697.0 329.2h1.2v1.2h-1.2zM698.8 345.6h1.6v1.6h-1.6zM702.5 345.1h1.5v1.5h-1.5zM687.0 389.7h1.2v1.2h-1.2zM689.9 385.1h1.0v1.0h-1.0zM687.6 391.4h1.7v1.7h-1.7zM689.5 396.5h1.3v1.3h-1.3zM689.3 413.2h1.1v1.1h-1.1zM686.2 389.0h1.8v1.8h-1.8zM686.4 390.0h1.3v1.3h-1.3zM690.1 367.2h1.1v1.1h-1.1zM687.7 395.5h1.5v1.5h-1.5zM690.0 389.7h1.3v1.3h-1.3zM687.1 390.2h1.5v1.5h-1.5zM688.9 402.7h1.1v1.1h-1.1zM690.2 382.3h1.1v1.1h-1.1zM685.9 410.9h1.0v1.0h-1.0zM688.2 399.7h1.3v1.3h-1.3zM686.2 405.6h1.7v1.7h-1.7zM689.6 383.4h1.1v1.1h-1.1zM688.1 366.5h1.2v1.2h-1.2zM687.1 401.4h1.3v1.3h-1.3zM688.8 386.5h1.8v1.8h-1.8zM687.7 369.8h1.9v1.9h-1.9zM687.3 361.4h1.6v1.6h-1.6zM690.5 377.5h1.6v1.6h-1.6zM688.2 398.6h1.3v1.3h-1.3zM688.1 387.9h1.9v1.9h-1.9zM687.9 390.4h1.6v1.6h-1.6zM689.9 368.1h1.7v1.7h-1.7zM688.6 368.9h1.9v1.9h-1.9zM689.5 396.3h1.1v1.1h-1.1zM687.3 406.9h1.2v1.2h-1.2zM689.9 399.3h1.1v1.1h-1.1zM689.0 411.6h1.8v1.8h-1.8zM688.8 374.9h2.0v2.0h-2.0zM691.1 370.5h1.8v1.8h-1.8zM688.2 381.6h1.4v1.4h-1.4zM688.6 408.1h1.3v1.3h-1.3zM688.5 374.9h1.8v1.8h-1.8zM688.8 386.0h1.7v1.7h-1.7zM688.0 394.7h1.5v1.5h-1.5zM686.5 414.8h1.4v1.4h-1.4zM686.7 406.9h1.2v1.2h-1.2zM688.0 384.2h1.6v1.6h-1.6zM686.4 402.4h1.5v1.5h-1.5zM691.0 357.1h1.3v1.3h-1.3zM678.7 127.6h1.2v1.2h-1.2zM711.0 187.0h1.8v1.8h-1.8zM692.9 184.8h1.2v1.2h-1.2zM677.5 129.2h1.2v1.2h-1.2zM657.3 125.3h1.8v1.8h-1.8zM672.9 132.0h1.5v1.5h-1.5zM703.8 191.5h1.3v1.3h-1.3zM685.3 168.7h1.3v1.3h-1.3zM710.6 175.5h1.4v1.4h-1.4zM687.2 124.0h0.9v0.9h-0.9zM686.7 159.5h1.3v1.3h-1.3zM674.6 134.0h1.7v1.7h-1.7zM702.9 147.9h1.0v1.0h-1.0zM686.2 129.1h1.0v1.0h-1.0zM704.7 196.1h1.2v1.2h-1.2zM706.9 206.0h1.5v1.5h-1.5zM663.8 129.0h1.3v1.3h-1.3zM688.5 166.0h1.7v1.7h-1.7zM699.3 166.0h1.0v1.0h-1.0zM660.6 135.5h1.4v1.4h-1.4zM1148.3 570.4h1.7v1.7h-1.7zM1139.6 570.9h1.1v1.1h-1.1zM1143.8 571.2h2.0v2.0h-2.0zM1148.9 574.6h1.6v1.6h-1.6zM1141.9 577.1h1.1v1.1h-1.1zM1140.4 564.7h1.9v1.9h-1.9zM1137.4 581.2h1.8v1.8h-1.8zM1141.4 572.1h1.9v1.9h-1.9zM1137.3 571.8h1.2v1.2h-1.2zM1149.6 574.3h1.7v1.7h-1.7zM1141.5 574.4h1.9v1.9h-1.9zM631.8 450.0h1.7v1.7h-1.7zM571.5 447.9h1.5v1.5h-1.5zM512.8 440.2h1.6v1.6h-1.6zM522.6 402.8h1.5v1.5h-1.5zM558.5 437.0h1.8v1.8h-1.8zM535.2 447.5h1.1v1.1h-1.1zM552.3 376.4h1.3v1.3h-1.3zM572.6 390.6h1.2v1.2h-1.2zM525.1 384.8h1.4v1.4h-1.4zM613.5 450.8h1.4v1.4h-1.4zM513.9 407.6h1.1v1.1h-1.1zM512.7 446.6h1.0v1.0h-1.0zM553.6 442.7h1.3v1.3h-1.3zM581.3 430.9h1.4v1.4h-1.4zM579.5 416.0h1.4v1.4h-1.4zM629.6 451.0h0.9v0.9h-0.9zM605.7 420.3h1.4v1.4h-1.4zM630.7 456.5h1.5v1.5h-1.5zM534.5 389.6h1.7v1.7h-1.7zM560.7 397.2h0.9v0.9h-0.9zM611.6 455.4h1.7v1.7h-1.7zM573.4 453.3h1.4v1.4h-1.4zM623.4 436.8h1.6v1.6h-1.6zM518.0 412.9h1.1v1.1h-1.1zM548.2 446.2h1.2v1.2h-1.2zM623.2 449.0h1.7v1.7h-1.7zM593.1 419.4h1.2v1.2h-1.2zM556.5 449.4h1.7v1.7h-1.7zM588.1 424.7h1.1v1.1h-1.1zM554.1 441.3h1.3v1.3h-1.3zM587.8 432.8h1.4v1.4h-1.4zM612.4 430.9h1.5v1.5h-1.5zM675.0 442.9h1.2v1.2h-1.2zM679.5 460.3h1.4v1.4h-1.4zM678.1 444.3h1.8v1.8h-1.8zM661.2 469.1h1.8v1.8h-1.8zM669.6 463.1h1.9v1.9h-1.9zM660.3 434.5h1.6v1.6h-1.6zM658.7 444.0h1.1v1.1h-1.1zM664.1 428.2h1.1v1.1h-1.1zM658.2 476.3h1.2v1.2h-1.2zM679.5 459.8h1.1v1.1h-1.1zM662.2 482.6h1.7v1.7h-1.7zM656.7 455.8h1.3v1.3h-1.3zM658.6 444.5h1.8v1.8h-1.8zM658.5 461.7h1.8v1.8h-1.8zM660.1 466.5h1.3v1.3h-1.3zM671.0 436.1h1.1v1.1h-1.1zM677.6 445.9h1.1v1.1h-1.1zM674.1 468.0h1.3v1.3h-1.3zM680.2 433.7h1.6v1.6h-1.6zM652.6 463.8h1.2v1.2h-1.2zM669.4 463.9h1.2v1.2h-1.2zM673.8 420.6h1.9v1.9h-1.9zM660.7 478.2h1.7v1.7h-1.7zM660.0 440.2h1.4v1.4h-1.4zM673.0 461.6h1.5v1.5h-1.5zM667.6 467.1h1.2v1.2h-1.2zM683.0 453.7h1.7v1.7h-1.7zM668.2 433.7h1.0v1.0h-1.0zM658.3 438.3h1.7v1.7h-1.7zM658.3 440.1h1.1v1.1h-1.1zM674.9 465.9h1.7v1.7h-1.7zM673.8 457.6h1.5v1.5h-1.5zM662.5 432.1h1.2v1.2h-1.2zM656.5 446.2h2.0v2.0h-2.0zM650.7 477.7h2.0v2.0h-2.0zM677.1 482.7h1.4v1.4h-1.4zM679.9 460.0h1.8v1.8h-1.8zM657.8 448.4h1.9v1.9h-1.9zM650.1 446.5h1.7v1.7h-1.7zM654.8 464.7h1.3v1.3h-1.3zM660.4 467.7h1.4v1.4h-1.4zM654.9 446.7h1.9v1.9h-1.9zM676.3 433.9h1.8v1.8h-1.8zM658.7 482.8h1.6v1.6h-1.6zM653.0 442.8h1.3v1.3h-1.3zM683.7 429.2h1.3v1.3h-1.3zM674.6 442.9h1.9v1.9h-1.9zM672.0 434.1h1.6v1.6h-1.6zM656.8 466.7h1.5v1.5h-1.5zM663.9 436.7h1.8v1.8h-1.8zM679.6 428.3h1.4v1.4h-1.4zM659.8 482.2h1.6v1.6h-1.6zM661.2 471.3h1.2v1.2h-1.2zM659.2 454.1h1.5v1.5h-1.5zM671.2 437.5h1.0v1.0h-1.0zM677.3 441.1h1.4v1.4h-1.4zM657.3 438.9h1.6v1.6h-1.6zM681.1 447.6h1.1v1.1h-1.1zM680.6 466.5h1.4v1.4h-1.4zM658.7 432.8h1.2v1.2h-1.2zM674.6 468.0h1.8v1.8h-1.8zM658.8 464.5h1.9v1.9h-1.9zM675.7 468.8h1.1v1.1h-1.1zM659.1 456.4h1.5v1.5h-1.5zM661.8 465.8h1.5v1.5h-1.5zM661.4 475.7h1.3v1.3h-1.3zM658.8 458.0h1.6v1.6h-1.6zM664.6 432.2h1.2v1.2h-1.2zM669.1 430.1h1.2v1.2h-1.2zM673.6 457.1h1.4v1.4h-1.4zM673.4 480.4h1.7v1.7h-1.7zM666.3 486.3h1.5v1.5h-1.5zM662.1 479.2h1.7v1.7h-1.7zM648.5 485.8h1.4v1.4h-1.4zM670.1 478.6h1.1v1.1h-1.1zM671.6 469.3h1.1v1.1h-1.1zM669.7 482.5h1.8v1.8h-1.8zM661.5 474.4h1.7v1.7h-1.7zM674.4 474.3h1.3v1.3h-1.3zM649.2 477.1h1.0v1.0h-1.0zM658.7 483.8h1.0v1.0h-1.0zM662.4 476.3h1.3v1.3h-1.3zM672.9 484.0h1.1v1.1h-1.1zM658.8 482.5h1.3v1.3h-1.3zM671.4 482.9h1.6v1.6h-1.6zM654.3 481.7h1.3v1.3h-1.3zM649.0 476.1h1.5v1.5h-1.5zM676.2 490.6h1.1v1.1h-1.1zM661.9 492.1h1.6v1.6h-1.6zM663.9 493.2h1.4v1.4h-1.4zM658.4 487.7h1.4v1.4h-1.4zM672.7 477.0h1.6v1.6h-1.6zM650.7 493.4h1.3v1.3h-1.3zM658.8 480.4h1.5v1.5h-1.5zM668.5 480.4h1.8v1.8h-1.8zM659.3 486.4h1.5v1.5h-1.5zM673.4 483.8h1.0v1.0h-1.0zM660.2 477.9h1.3v1.3h-1.3zM663.7 493.8h1.7v1.7h-1.7zM661.9 478.2h1.3v1.3h-1.3zM675.8 480.6h1.4v1.4h-1.4zM672.1 475.9h1.2v1.2h-1.2zM650.7 479.6h1.3v1.3h-1.3zM662.4 473.0h1.3v1.3h-1.3zM666.1 497.7h1.1v1.1h-1.1zM662.4 478.9h1.6v1.6h-1.6zM963.2 679.6h1.3v1.3h-1.3zM964.7 679.8h1.2v1.2h-1.2zM962.4 678.3h1.0v1.0h-1.0zM964.2 677.1h0.9v0.9h-0.9zM960.6 676.8h0.8v0.8h-0.8zM961.6 677.9h0.9v0.9h-0.9zM963.1 677.1h1.0v1.0h-1.0zM963.5 678.8h1.0v1.0h-1.0zM963.2 677.2h0.9v0.9h-0.9zM961.5 677.8h1.4v1.4h-1.4zM875.2 851.1h1.7v1.7h-1.7zM875.8 855.7h1.7v1.7h-1.7zM877.9 854.3h1.5v1.5h-1.5zM878.9 859.5h2.0v2.0h-2.0zM883.2 857.3h1.5v1.5h-1.5zM880.3 857.9h1.8v1.8h-1.8zM876.3 856.8h1.2v1.2h-1.2zM876.1 856.9h1.2v1.2h-1.2zM879.5 857.1h1.7v1.7h-1.7zM880.5 856.8h1.1v1.1h-1.1zM881.4 858.6h1.3v1.3h-1.3zM876.5 857.0h1.3v1.3h-1.3zM897.7 832.2h1.4v1.4h-1.4zM891.4 836.9h1.4v1.4h-1.4zM895.3 833.2h1.5v1.5h-1.5zM883.5 829.6h1.3v1.3h-1.3zM894.7 842.7h1.1v1.1h-1.1zM889.9 835.7h1.6v1.6h-1.6zM889.9 842.6h1.3v1.3h-1.3zM890.1 828.1h1.8v1.8h-1.8zM902.8 847.6h1.5v1.5h-1.5zM900.6 857.3h1.7v1.7h-1.7zM895.2 863.9h1.3v1.3h-1.3zM896.6 831.3h1.7v1.7h-1.7zM905.6 842.6h1.2v1.2h-1.2zM894.2 845.0h1.4v1.4h-1.4zM896.4 838.5h1.2v1.2h-1.2zM902.0 839.4h1.6v1.6h-1.6zM899.3 829.1h1.1v1.1h-1.1zM909.2 853.1h1.3v1.3h-1.3zM902.3 828.1h1.6v1.6h-1.6zM904.1 858.9h1.1v1.1h-1.1zM980.1 877.5h1.7v1.7h-1.7zM850.0 988.2h1.3v1.3h-1.3zM895.8 858.8h0.9v0.9h-0.9zM852.9 892.7h1.0v1.0h-1.0zM914.1 931.5h1.3v1.3h-1.3zM860.3 857.8h1.8v1.8h-1.8zM848.4 898.2h1.8v1.8h-1.8zM967.2 947.2h1.6v1.6h-1.6zM838.3 793.8h1.5v1.5h-1.5zM937.0 996.5h1.2v1.2h-1.2zM811.0 883.2h1.2v1.2h-1.2zM821.0 979.6h1.4v1.4h-1.4zM793.8 912.4h1.5v1.5h-1.5zM838.3 949.0h1.2v1.2h-1.2zM873.9 885.0h0.9v0.9h-0.9zM890.8 880.1h1.3v1.3h-1.3zM885.7 852.2h1.2v1.2h-1.2zM906.9 886.8h1.5v1.5h-1.5zM824.4 935.0h0.9v0.9h-0.9zM930.8 829.8h1.0v1.0h-1.0zM814.2 898.2h1.8v1.8h-1.8zM817.2 882.7h1.7v1.7h-1.7zM784.0 912.5h1.8v1.8h-1.8zM910.1 911.6h1.2v1.2h-1.2zM883.0 904.3h1.5v1.5h-1.5zM873.6 897.4h1.3v1.3h-1.3zM794.0 923.6h1.2v1.2h-1.2zM792.8 941.1h1.3v1.3h-1.3zM933.7 947.3h1.2v1.2h-1.2zM829.9 796.0h1.2v1.2h-1.2zM953.2 873.7h1.5v1.5h-1.5zM1194.8 833.2h1.4v1.4h-1.4zM1197.5 832.3h1.2v1.2h-1.2zM1196.1 829.9h1.3v1.3h-1.3zM1197.3 828.6h1.9v1.9h-1.9zM1195.3 827.4h1.7v1.7h-1.7zM1193.7 830.0h1.0v1.0h-1.0zM1194.9 832.7h1.2v1.2h-1.2zM1197.9 834.3h1.7v1.7h-1.7zM1194.4 832.6h1.2v1.2h-1.2zM1199.6 826.4h1.2v1.2h-1.2zM1195.3 827.7h1.3v1.3h-1.3zM1197.9 828.5h1.4v1.4h-1.4zM1197.1 825.9h1.2v1.2h-1.2zM1198.1 827.4h1.5v1.5h-1.5zM1187.3 834.3h1.1v1.1h-1.1zM1197.2 835.6h2.0v2.0h-2.0zM1163.7 712.2h2.2v2.2h-2.2zM1158.7 703.7h1.7v1.7h-1.7zM1177.3 717.2h1.5v1.5h-1.5zM1166.7 714.2h1.4v1.4h-1.4zM1160.8 717.0h1.3v1.3h-1.3zM1158.8 707.8h1.3v1.3h-1.3zM1166.7 708.5h2.3v2.3h-2.3zM1167.3 702.4h1.9v1.9h-1.9zM1170.9 711.2h1.7v1.7h-1.7zM1167.2 702.0h1.9v1.9h-1.9zM1168.5 711.2h1.8v1.8h-1.8zM1166.1 706.2h1.4v1.4h-1.4zM1232.1 732.0h1.7v1.7h-1.7zM1216.6 760.1h1.6v1.6h-1.6zM1218.7 735.7h1.0v1.0h-1.0zM1222.4 724.0h1.2v1.2h-1.2zM1220.9 717.7h1.0v1.0h-1.0zM1234.2 733.3h1.3v1.3h-1.3zM1231.2 726.9h1.6v1.6h-1.6zM1223.8 723.8h1.8v1.8h-1.8zM1213.5 737.1h1.6v1.6h-1.6zM1218.3 716.6h1.5v1.5h-1.5zM1234.8 730.4h1.6v1.6h-1.6zM1218.0 746.3h1.0v1.0h-1.0zM1235.5 738.1h2.0v2.0h-2.0zM1234.5 749.8h1.6v1.6h-1.6zM724.0 1182.0h2.0v2.0h-2.0zM750.0 1181.0h2.0v2.0h-2.0z" fill="#42c832"/>
<path d="M528.3 72.6h1.6v1.6h-1.6zM527.0 78.5h1.0v1.0h-1.0zM529.6 79.8h1.9v1.9h-1.9zM532.2 73.5h1.6v1.6h-1.6zM527.7 78.7h2.0v2.0h-2.0zM550.4 99.3h1.5v1.5h-1.5zM551.3 98.7h1.1v1.1h-1.1zM550.8 102.2h1.4v1.4h-1.4zM549.1 102.7h1.5v1.5h-1.5zM553.6 97.8h1.5v1.5h-1.5zM548.8 104.7h1.5v1.5h-1.5zM552.7 99.5h1.5v1.5h-1.5zM553.1 99.6h1.2v1.2h-1.2zM554.6 92.5h1.1v1.1h-1.1zM548.9 96.4h1.9v1.9h-1.9zM555.5 89.7h1.6v1.6h-1.6zM552.7 97.3h1.1v1.1h-1.1zM547.7 103.2h1.6v1.6h-1.6zM552.5 82.7h1.3v1.3h-1.3zM554.8 91.4h1.4v1.4h-1.4zM551.3 84.7h1.4v1.4h-1.4zM553.7 94.6h1.5v1.5h-1.5zM553.5 81.7h1.2v1.2h-1.2zM548.0 97.7h1.3v1.3h-1.3zM539.5 130.1h1.6v1.6h-1.6zM542.5 133.2h1.4v1.4h-1.4zM545.9 115.8h1.9v1.9h-1.9zM543.7 116.4h1.8v1.8h-1.8zM543.5 134.5h1.3v1.3h-1.3zM544.7 119.4h1.4v1.4h-1.4zM541.9 136.1h1.2v1.2h-1.2zM542.9 119.6h1.3v1.3h-1.3zM542.8 119.6h1.0v1.0h-1.0zM547.4 117.8h1.5v1.5h-1.5zM540.1 128.2h1.7v1.7h-1.7zM543.7 115.6h1.3v1.3h-1.3zM545.4 115.7h1.6v1.6h-1.6zM537.8 133.1h1.6v1.6h-1.6zM543.1 119.1h1.7v1.7h-1.7zM539.4 126.5h1.4v1.4h-1.4zM545.4 127.2h1.5v1.5h-1.5zM539.1 137.3h1.2v1.2h-1.2zM540.0 141.1h1.7v1.7h-1.7zM545.6 114.5h1.3v1.3h-1.3zM543.2 117.4h1.5v1.5h-1.5zM540.1 122.2h1.6v1.6h-1.6zM544.1 129.1h1.5v1.5h-1.5zM576.9 66.9h1.6v1.6h-1.6zM577.4 66.1h1.6v1.6h-1.6zM577.2 67.6h2.0v2.0h-2.0zM576.9 63.4h1.3v1.3h-1.3zM577.4 69.5h2.0v2.0h-2.0zM573.9 73.0h2.0v2.0h-2.0zM573.3 74.2h1.8v1.8h-1.8zM591.6 59.9h1.2v1.2h-1.2zM589.2 57.3h1.0v1.0h-1.0zM589.0 60.7h1.5v1.5h-1.5zM589.9 56.6h1.6v1.6h-1.6zM506.8 152.0h1.1v1.1h-1.1zM505.0 148.2h1.0v1.0h-1.0zM509.1 146.5h1.1v1.1h-1.1zM508.7 156.1h1.6v1.6h-1.6zM509.6 156.5h1.5v1.5h-1.5zM508.9 157.7h1.6v1.6h-1.6zM505.5 149.7h1.4v1.4h-1.4zM526.9 176.6h1.4v1.4h-1.4zM523.3 168.3h1.8v1.8h-1.8zM520.7 155.5h1.8v1.8h-1.8zM523.1 157.5h1.5v1.5h-1.5zM525.5 171.8h1.5v1.5h-1.5zM528.0 172.2h1.5v1.5h-1.5zM525.3 162.0h1.9v1.9h-1.9zM524.9 171.4h2.0v2.0h-2.0zM520.6 160.5h1.9v1.9h-1.9zM523.2 168.4h1.8v1.8h-1.8zM527.5 175.6h1.4v1.4h-1.4zM519.3 155.6h1.3v1.3h-1.3zM582.1 209.4h1.2v1.2h-1.2zM572.3 194.0h1.0v1.0h-1.0zM578.3 213.8h1.4v1.4h-1.4zM571.4 202.5h1.6v1.6h-1.6zM572.7 204.7h1.4v1.4h-1.4zM584.1 206.8h1.2v1.2h-1.2zM575.8 185.3h1.6v1.6h-1.6zM571.7 200.3h1.5v1.5h-1.5zM573.5 215.1h1.3v1.3h-1.3zM579.5 182.8h1.1v1.1h-1.1zM572.4 190.0h1.9v1.9h-1.9zM581.7 186.1h1.5v1.5h-1.5zM568.9 199.7h1.1v1.1h-1.1zM584.3 203.3h1.3v1.3h-1.3zM584.5 207.9h1.3v1.3h-1.3zM569.2 184.8h1.5v1.5h-1.5zM573.1 178.3h1.9v1.9h-1.9zM571.7 188.6h1.9v1.9h-1.9zM573.2 205.2h1.6v1.6h-1.6zM572.3 206.6h1.3v1.3h-1.3zM571.2 191.1h1.5v1.5h-1.5zM569.3 188.2h1.6v1.6h-1.6zM585.2 200.8h1.5v1.5h-1.5zM572.0 201.4h1.4v1.4h-1.4zM575.7 212.2h1.6v1.6h-1.6zM583.2 213.4h1.8v1.8h-1.8zM580.5 180.9h1.1v1.1h-1.1zM579.5 180.0h1.7v1.7h-1.7zM572.5 191.9h1.9v1.9h-1.9zM579.0 188.5h1.9v1.9h-1.9zM579.0 208.7h1.1v1.1h-1.1zM574.0 206.7h1.2v1.2h-1.2zM579.8 181.6h1.6v1.6h-1.6zM571.3 204.5h1.3v1.3h-1.3zM578.7 208.9h1.9v1.9h-1.9zM582.6 210.9h1.6v1.6h-1.6zM572.6 212.0h1.7v1.7h-1.7zM583.0 209.0h1.8v1.8h-1.8zM576.4 216.1h1.1v1.1h-1.1zM577.9 181.8h1.3v1.3h-1.3zM580.3 215.6h1.7v1.7h-1.7zM570.5 194.3h1.3v1.3h-1.3zM583.3 198.7h1.4v1.4h-1.4zM575.9 180.1h1.5v1.5h-1.5zM581.7 185.1h1.2v1.2h-1.2zM573.5 185.6h1.5v1.5h-1.5zM577.4 181.3h1.7v1.7h-1.7zM571.8 186.5h1.6v1.6h-1.6zM582.6 214.6h1.5v1.5h-1.5zM573.6 182.7h1.3v1.3h-1.3zM570.3 200.2h1.5v1.5h-1.5zM581.9 203.8h2.0v2.0h-2.0zM581.3 202.2h1.5v1.5h-1.5zM573.0 246.9h1.2v1.2h-1.2zM573.2 238.4h1.2v1.2h-1.2zM572.4 250.9h1.7v1.7h-1.7zM574.1 249.9h1.9v1.9h-1.9zM574.0 241.0h1.5v1.5h-1.5zM569.3 244.9h1.9v1.9h-1.9zM568.3 249.1h1.3v1.3h-1.3zM573.3 250.4h1.2v1.2h-1.2zM573.9 239.2h1.9v1.9h-1.9zM569.4 239.6h1.1v1.1h-1.1zM574.7 243.6h1.6v1.6h-1.6zM567.4 244.1h1.4v1.4h-1.4zM573.2 236.4h1.9v1.9h-1.9zM491.9 212.1h2.0v2.0h-2.0zM491.3 206.2h1.3v1.3h-1.3zM498.4 218.8h1.1v1.1h-1.1zM496.9 222.7h1.5v1.5h-1.5zM490.2 206.4h1.6v1.6h-1.6zM492.6 212.0h1.8v1.8h-1.8zM497.5 223.6h1.5v1.5h-1.5zM491.7 209.5h1.2v1.2h-1.2zM493.7 205.7h1.8v1.8h-1.8zM499.8 222.7h1.5v1.5h-1.5zM490.3 207.6h1.1v1.1h-1.1zM495.4 204.4h1.9v1.9h-1.9zM495.9 220.6h1.7v1.7h-1.7zM491.1 208.9h1.5v1.5h-1.5zM507.0 232.8h1.9v1.9h-1.9zM506.4 247.4h1.8v1.8h-1.8zM511.5 240.6h1.1v1.1h-1.1zM505.7 236.1h1.3v1.3h-1.3zM505.7 235.2h1.8v1.8h-1.8zM503.3 242.5h1.6v1.6h-1.6zM515.0 249.9h1.4v1.4h-1.4zM501.0 232.3h1.0v1.0h-1.0zM503.8 232.0h1.6v1.6h-1.6zM503.0 233.5h1.3v1.3h-1.3zM509.2 250.4h2.0v2.0h-2.0zM508.0 236.1h1.5v1.5h-1.5zM507.7 233.9h1.5v1.5h-1.5zM512.2 245.1h1.6v1.6h-1.6zM509.2 250.3h1.5v1.5h-1.5zM504.0 240.0h1.1v1.1h-1.1zM503.4 237.4h1.2v1.2h-1.2zM479.3 86.7h1.7v1.7h-1.7zM738.7 245.8h1.6v1.6h-1.6zM737.6 246.7h1.7v1.7h-1.7zM736.0 241.7h1.0v1.0h-1.0zM737.4 260.5h1.2v1.2h-1.2zM735.0 256.2h1.7v1.7h-1.7zM736.3 262.6h1.5v1.5h-1.5zM734.6 231.7h1.8v1.8h-1.8zM732.5 240.6h1.7v1.7h-1.7zM733.5 249.0h1.1v1.1h-1.1zM734.1 246.9h1.1v1.1h-1.1zM734.6 244.8h1.9v1.9h-1.9zM732.6 244.2h1.4v1.4h-1.4zM733.9 246.6h1.1v1.1h-1.1zM733.2 259.3h1.0v1.0h-1.0zM736.8 254.6h1.6v1.6h-1.6zM734.5 247.6h1.1v1.1h-1.1zM733.9 246.9h1.7v1.7h-1.7zM735.9 247.7h1.6v1.6h-1.6zM734.2 236.6h1.0v1.0h-1.0zM736.7 239.6h1.2v1.2h-1.2zM736.3 237.1h1.5v1.5h-1.5zM733.6 249.4h1.3v1.3h-1.3zM733.6 248.2h1.4v1.4h-1.4zM738.4 249.2h1.2v1.2h-1.2zM737.3 252.0h1.5v1.5h-1.5zM737.6 255.0h1.4v1.4h-1.4zM731.4 250.0h1.1v1.1h-1.1zM735.3 239.3h1.4v1.4h-1.4zM734.0 254.0h1.2v1.2h-1.2zM736.4 242.5h1.9v1.9h-1.9zM737.5 254.1h1.7v1.7h-1.7zM735.6 248.5h1.6v1.6h-1.6zM733.9 239.3h1.2v1.2h-1.2zM737.1 251.4h1.3v1.3h-1.3zM734.5 252.6h1.7v1.7h-1.7zM733.3 247.5h1.7v1.7h-1.7zM713.5 293.0h1.1v1.1h-1.1zM708.1 293.6h1.8v1.8h-1.8zM711.5 293.3h2.0v2.0h-2.0zM711.8 291.7h1.2v1.2h-1.2zM710.1 290.0h1.1v1.1h-1.1zM710.3 285.4h1.1v1.1h-1.1zM713.5 295.3h1.8v1.8h-1.8zM708.1 296.0h1.7v1.7h-1.7zM712.0 284.0h1.8v1.8h-1.8zM709.1 297.9h1.2v1.2h-1.2zM712.5 287.4h1.7v1.7h-1.7zM709.3 288.9h1.9v1.9h-1.9zM711.8 302.6h1.3v1.3h-1.3zM709.1 292.1h1.7v1.7h-1.7zM711.2 282.3h1.3v1.3h-1.3zM714.7 288.6h1.9v1.9h-1.9zM708.0 286.6h1.9v1.9h-1.9zM710.5 284.4h1.5v1.5h-1.5zM707.0 289.4h1.9v1.9h-1.9zM713.7 286.1h1.0v1.0h-1.0zM713.1 286.4h1.8v1.8h-1.8zM710.3 291.4h1.3v1.3h-1.3zM712.7 287.0h1.7v1.7h-1.7zM714.6 294.5h1.2v1.2h-1.2zM725.5 297.4h1.1v1.1h-1.1zM726.3 314.2h2.0v2.0h-2.0zM722.7 299.6h1.9v1.9h-1.9zM724.3 298.1h1.5v1.5h-1.5zM726.9 299.9h1.7v1.7h-1.7zM725.6 307.3h1.2v1.2h-1.2zM723.2 303.6h1.6v1.6h-1.6zM724.4 307.7h1.2v1.2h-1.2zM725.7 305.7h1.7v1.7h-1.7zM725.3 298.8h2.0v2.0h-2.0zM724.9 296.8h1.3v1.3h-1.3zM726.5 300.2h1.2v1.2h-1.2zM697.3 330.0h1.6v1.6h-1.6zM700.8 330.1h1.7v1.7h-1.7zM698.8 333.4h1.9v1.9h-1.9zM701.6 328.3h1.4v1.4h-1.4zM698.5 331.0h1.2v1.2h-1.2zM700.5 330.4h1.3v1.3h-1.3zM700.5 325.0h1.2v1.2h-1.2zM700.7 337.5h1.1v1.1h-1.1zM697.7 338.0h1.3v1.3h-1.3zM699.9 332.9h1.9v1.9h-1.9zM699.9 328.9h1.4v1.4h-1.4zM697.3 343.2h1.8v1.8h-1.8zM701.3 333.8h1.2v1.2h-1.2zM698.7 340.2h2.0v2.0h-2.0zM697.9 327.6h1.2v1.2h-1.2zM698.2 340.4h1.8v1.8h-1.8zM701.4 334.6h2.0v2.0h-2.0zM700.7 341.4h1.8v1.8h-1.8zM701.6 344.1h1.6v1.6h-1.6zM697.1 341.6h1.7v1.7h-1.7zM700.6 339.6h1.1v1.1h-1.1zM700.6 336.3h1.6v1.6h-1.6zM697.9 342.8h2.0v2.0h-2.0zM698.3 335.8h1.2v1.2h-1.2zM698.5 327.1h1.9v1.9h-1.9zM700.6 339.3h1.6v1.6h-1.6zM699.1 322.1h1.7v1.7h-1.7zM697.6 326.6h1.9v1.9h-1.9zM686.7 387.4h2.0v2.0h-2.0zM688.4 376.8h1.9v1.9h-1.9zM687.8 394.7h1.6v1.6h-1.6zM686.6 388.0h1.3v1.3h-1.3zM689.3 374.6h1.7v1.7h-1.7zM689.7 392.8h1.5v1.5h-1.5zM688.5 372.3h1.7v1.7h-1.7zM689.6 365.3h1.9v1.9h-1.9zM686.6 378.5h1.5v1.5h-1.5zM688.6 386.5h1.8v1.8h-1.8zM688.5 379.1h1.9v1.9h-1.9zM688.1 384.2h1.3v1.3h-1.3zM688.9 369.9h2.0v2.0h-2.0zM686.7 381.3h1.7v1.7h-1.7zM689.8 380.1h1.4v1.4h-1.4zM685.5 409.2h2.0v2.0h-2.0zM687.8 385.4h1.5v1.5h-1.5zM688.8 364.9h1.0v1.0h-1.0zM689.1 383.4h1.6v1.6h-1.6zM687.1 411.8h1.9v1.9h-1.9zM669.8 448.0h1.9v1.9h-1.9zM662.9 456.5h1.5v1.5h-1.5zM666.6 453.3h1.4v1.4h-1.4zM664.0 461.0h1.2v1.2h-1.2zM667.1 444.2h1.1v1.1h-1.1zM667.0 447.0h1.9v1.9h-1.9zM666.3 449.3h1.4v1.4h-1.4zM664.0 438.5h1.4v1.4h-1.4zM664.4 447.7h1.5v1.5h-1.5zM662.9 447.1h1.2v1.2h-1.2zM663.5 444.0h1.0v1.0h-1.0zM672.2 445.1h1.7v1.7h-1.7zM663.3 453.4h1.2v1.2h-1.2zM660.8 455.9h1.5v1.5h-1.5zM661.1 449.4h1.1v1.1h-1.1zM664.3 459.0h1.2v1.2h-1.2zM671.5 446.2h1.1v1.1h-1.1zM667.9 451.8h2.0v2.0h-2.0zM669.6 456.8h1.1v1.1h-1.1zM670.9 455.3h1.4v1.4h-1.4zM666.2 442.2h1.3v1.3h-1.3zM670.3 437.8h1.7v1.7h-1.7zM661.9 443.2h1.3v1.3h-1.3zM668.6 455.8h2.0v2.0h-2.0zM662.7 439.5h1.9v1.9h-1.9zM660.7 452.3h1.5v1.5h-1.5zM662.2 456.2h1.6v1.6h-1.6zM669.9 441.1h1.6v1.6h-1.6zM663.4 449.4h1.3v1.3h-1.3zM662.9 446.6h1.1v1.1h-1.1zM660.4 446.0h1.4v1.4h-1.4zM664.4 448.0h1.9v1.9h-1.9zM664.4 460.5h1.9v1.9h-1.9zM664.8 455.4h1.4v1.4h-1.4zM893.2 835.4h1.5v1.5h-1.5zM899.4 847.3h1.7v1.7h-1.7zM893.1 837.6h1.8v1.8h-1.8zM894.7 831.8h1.6v1.6h-1.6zM897.2 844.0h1.0v1.0h-1.0zM892.4 828.0h1.5v1.5h-1.5zM897.5 836.7h1.6v1.6h-1.6zM899.8 846.0h1.7v1.7h-1.7zM899.8 842.6h1.2v1.2h-1.2zM899.6 841.4h1.5v1.5h-1.5zM895.8 841.5h1.9v1.9h-1.9zM897.6 838.3h1.3v1.3h-1.3zM879.8 855.4h1.7v1.7h-1.7zM875.4 855.7h1.6v1.6h-1.6zM1192.2 834.8h1.7v1.7h-1.7zM1194.1 836.8h2.0v2.0h-2.0zM1198.0 826.5h1.8v1.8h-1.8zM1193.3 829.7h1.6v1.6h-1.6zM1194.9 829.8h1.2v1.2h-1.2zM1199.3 831.2h1.4v1.4h-1.4zM1196.2 834.2h1.3v1.3h-1.3z" fill="#d7da38"/>
<path d="M529.5 76.8h1.2v1.2h-1.2zM529.7 74.5h1.8v1.8h-1.8zM528.3 75.4h1.2v1.2h-1.2zM553.3 89.2h1.5v1.5h-1.5zM552.0 95.1h1.1v1.1h-1.1zM553.7 89.5h1.3v1.3h-1.3zM553.5 94.0h1.7v1.7h-1.7zM552.9 85.6h1.4v1.4h-1.4zM553.2 91.3h1.9v1.9h-1.9zM553.7 85.7h1.8v1.8h-1.8zM542.8 122.8h1.1v1.1h-1.1zM542.1 130.4h1.6v1.6h-1.6zM576.8 69.3h1.6v1.6h-1.6zM573.8 70.6h1.6v1.6h-1.6zM575.1 70.7h1.9v1.9h-1.9zM507.3 147.3h1.3v1.3h-1.3zM509.1 150.6h1.6v1.6h-1.6zM507.5 152.3h1.3v1.3h-1.3zM508.3 153.6h1.7v1.7h-1.7zM523.4 167.0h1.3v1.3h-1.3zM523.7 165.5h1.3v1.3h-1.3zM527.3 170.0h1.6v1.6h-1.6zM525.9 168.2h1.1v1.1h-1.1zM522.6 161.5h1.2v1.2h-1.2zM525.7 170.7h1.9v1.9h-1.9zM496.7 132.0h1.5v1.5h-1.5zM576.2 196.2h1.2v1.2h-1.2zM573.1 201.9h1.6v1.6h-1.6zM579.4 196.0h1.6v1.6h-1.6zM579.9 203.8h1.8v1.8h-1.8zM579.5 192.2h1.5v1.5h-1.5zM574.4 191.6h1.1v1.1h-1.1zM575.5 202.3h1.7v1.7h-1.7zM578.5 201.0h1.4v1.4h-1.4zM575.3 197.0h1.6v1.6h-1.6zM579.5 192.6h1.2v1.2h-1.2zM577.5 202.5h1.9v1.9h-1.9zM576.8 205.9h1.2v1.2h-1.2zM573.8 194.4h1.1v1.1h-1.1zM573.2 194.2h1.4v1.4h-1.4zM573.9 192.0h1.3v1.3h-1.3zM576.1 192.2h1.8v1.8h-1.8zM576.4 195.4h1.4v1.4h-1.4zM575.6 197.1h1.9v1.9h-1.9zM577.8 191.8h1.7v1.7h-1.7zM575.6 189.1h1.8v1.8h-1.8zM577.4 193.3h1.5v1.5h-1.5zM576.5 198.3h1.8v1.8h-1.8zM580.4 203.4h1.5v1.5h-1.5zM575.5 188.9h1.9v1.9h-1.9zM574.8 191.6h1.6v1.6h-1.6zM578.3 189.0h1.2v1.2h-1.2zM575.9 198.8h1.1v1.1h-1.1zM580.5 195.9h1.2v1.2h-1.2zM574.8 193.8h1.3v1.3h-1.3zM577.0 206.1h1.7v1.7h-1.7zM575.6 188.3h1.1v1.1h-1.1zM579.2 201.8h1.5v1.5h-1.5zM579.0 199.0h1.8v1.8h-1.8zM569.5 245.2h1.4v1.4h-1.4zM572.2 242.2h1.1v1.1h-1.1zM569.8 241.9h1.7v1.7h-1.7zM572.9 240.9h2.0v2.0h-2.0zM570.3 246.6h1.6v1.6h-1.6zM570.4 241.7h1.4v1.4h-1.4zM493.7 214.3h1.3v1.3h-1.3zM496.6 218.6h1.0v1.0h-1.0zM496.3 217.0h1.8v1.8h-1.8zM496.2 212.1h1.1v1.1h-1.1zM496.0 213.8h1.9v1.9h-1.9zM497.4 214.8h1.9v1.9h-1.9zM504.5 238.0h1.3v1.3h-1.3zM509.5 244.8h1.0v1.0h-1.0zM509.0 245.7h1.2v1.2h-1.2zM504.8 237.4h1.4v1.4h-1.4zM509.9 245.0h1.7v1.7h-1.7zM509.6 245.1h1.8v1.8h-1.8zM509.8 248.9h1.5v1.5h-1.5zM507.2 239.9h1.0v1.0h-1.0zM510.5 249.1h1.8v1.8h-1.8zM510.1 246.9h1.4v1.4h-1.4zM671.9 450.4h1.1v1.1h-1.1zM665.7 459.0h1.3v1.3h-1.3zM663.5 442.5h1.9v1.9h-1.9zM666.0 456.9h2.0v2.0h-2.0zM669.1 448.0h1.8v1.8h-1.8zM666.7 436.7h1.9v1.9h-1.9zM670.8 442.9h1.1v1.1h-1.1zM669.9 439.0h1.6v1.6h-1.6zM671.6 454.5h1.3v1.3h-1.3zM662.9 444.5h1.6v1.6h-1.6zM671.0 455.0h1.5v1.5h-1.5zM673.1 451.6h1.1v1.1h-1.1zM672.2 454.9h1.6v1.6h-1.6zM662.8 446.5h1.0v1.0h-1.0zM664.0 451.9h1.2v1.2h-1.2zM667.2 440.4h1.4v1.4h-1.4zM667.5 443.0h1.4v1.4h-1.4zM665.7 442.4h1.2v1.2h-1.2zM662.7 458.5h1.1v1.1h-1.1zM661.9 454.5h1.1v1.1h-1.1zM895.7 836.7h1.8v1.8h-1.8zM897.6 839.3h1.4v1.4h-1.4zM894.9 837.7h1.6v1.6h-1.6zM897.3 841.1h1.6v1.6h-1.6zM898.4 844.2h1.9v1.9h-1.9z" fill="#e8103a"/>
<path d="M530.1 74.1h1.6v1.6h-1.6zM529.0 74.7h1.3v1.3h-1.3zM552.9 91.5h1.2v1.2h-1.2zM551.2 92.3h1.1v1.1h-1.1zM550.5 93.3h2.0v2.0h-2.0zM553.0 91.1h1.6v1.6h-1.6zM551.2 89.3h1.5v1.5h-1.5zM551.6 91.4h1.6v1.6h-1.6zM542.4 127.6h1.8v1.8h-1.8zM540.4 129.3h1.5v1.5h-1.5zM542.2 132.2h1.6v1.6h-1.6zM544.1 121.9h1.4v1.4h-1.4zM575.2 70.5h1.7v1.7h-1.7zM573.7 70.6h1.3v1.3h-1.3zM575.2 67.5h1.8v1.8h-1.8zM576.6 66.8h1.4v1.4h-1.4zM589.2 58.3h1.2v1.2h-1.2zM508.7 152.4h1.8v1.8h-1.8zM508.3 149.0h2.0v2.0h-2.0zM507.9 148.2h1.1v1.1h-1.1zM524.1 165.0h1.7v1.7h-1.7zM525.3 169.3h1.1v1.1h-1.1zM524.3 166.3h1.5v1.5h-1.5zM524.4 166.0h1.4v1.4h-1.4zM497.4 132.0h2.0v2.0h-2.0zM578.2 192.9h1.5v1.5h-1.5zM580.9 197.3h1.9v1.9h-1.9zM578.7 198.3h1.2v1.2h-1.2zM578.7 191.0h1.9v1.9h-1.9zM575.7 206.8h1.7v1.7h-1.7zM579.5 204.1h1.9v1.9h-1.9zM578.0 206.4h1.8v1.8h-1.8zM578.0 200.2h1.4v1.4h-1.4zM574.4 200.6h1.1v1.1h-1.1zM577.4 206.2h1.1v1.1h-1.1zM575.5 202.6h1.2v1.2h-1.2zM575.0 204.1h1.9v1.9h-1.9zM576.5 199.2h1.9v1.9h-1.9zM579.1 199.2h1.4v1.4h-1.4zM580.0 198.1h1.0v1.0h-1.0zM578.2 207.1h1.7v1.7h-1.7zM578.6 197.6h1.2v1.2h-1.2zM576.9 204.0h1.3v1.3h-1.3zM580.2 194.4h1.1v1.1h-1.1zM576.3 198.4h1.5v1.5h-1.5zM573.4 193.5h1.9v1.9h-1.9zM573.7 193.1h1.2v1.2h-1.2zM573.4 196.4h1.2v1.2h-1.2zM577.9 200.4h2.0v2.0h-2.0zM575.0 200.2h1.3v1.3h-1.3zM575.6 197.6h1.1v1.1h-1.1zM569.2 241.1h1.4v1.4h-1.4zM571.4 240.5h1.7v1.7h-1.7zM570.7 240.2h1.2v1.2h-1.2zM571.9 239.2h1.6v1.6h-1.6zM493.5 211.3h1.7v1.7h-1.7zM496.4 216.0h1.0v1.0h-1.0zM497.6 216.4h1.6v1.6h-1.6zM494.6 209.4h1.5v1.5h-1.5zM493.6 213.2h1.7v1.7h-1.7zM497.4 215.8h1.0v1.0h-1.0zM492.7 208.2h1.1v1.1h-1.1zM496.5 216.4h1.7v1.7h-1.7zM493.8 211.4h1.4v1.4h-1.4zM497.3 214.0h1.4v1.4h-1.4zM496.6 215.0h1.5v1.5h-1.5zM495.4 213.2h1.5v1.5h-1.5zM495.6 213.9h2.0v2.0h-2.0zM497.4 216.3h1.0v1.0h-1.0zM497.1 212.2h1.9v1.9h-1.9zM496.8 212.6h2.0v2.0h-2.0zM508.1 247.1h1.0v1.0h-1.0zM508.6 239.8h1.0v1.0h-1.0zM511.7 247.9h1.7v1.7h-1.7zM511.1 246.4h1.9v1.9h-1.9zM506.7 238.7h1.7v1.7h-1.7zM896.9 839.5h1.8v1.8h-1.8zM897.2 841.5h2.0v2.0h-2.0zM898.7 844.6h1.1v1.1h-1.1zM894.3 836.6h1.6v1.6h-1.6zM896.4 838.3h1.7v1.7h-1.7zM896.5 838.5h1.5v1.5h-1.5zM896.0 840.8h1.6v1.6h-1.6zM894.8 838.4h1.2v1.2h-1.2zM895.4 839.0h1.8v1.8h-1.8zM896.0 840.0h1.3v1.3h-1.3z" fill="#cb0020"/>
<path d="M528.8 74.8h1.2v1.2h-1.2zM530.9 74.9h1.3v1.3h-1.3zM530.6 79.5h1.2v1.2h-1.2zM529.3 79.9h1.7v1.7h-1.7zM528.9 76.8h1.1v1.1h-1.1zM551.8 92.7h1.1v1.1h-1.1zM550.1 91.0h1.2v1.2h-1.2zM554.6 74.4h1.9v1.9h-1.9zM552.8 80.8h1.2v1.2h-1.2zM556.1 88.4h1.6v1.6h-1.6zM547.5 109.1h1.8v1.8h-1.8zM550.1 94.0h1.5v1.5h-1.5zM556.3 84.9h1.5v1.5h-1.5zM554.7 87.4h1.9v1.9h-1.9zM550.0 103.2h1.3v1.3h-1.3zM554.2 79.2h1.5v1.5h-1.5zM553.3 98.6h1.7v1.7h-1.7zM548.4 95.2h1.1v1.1h-1.1zM550.5 99.0h1.2v1.2h-1.2zM556.9 90.9h1.3v1.3h-1.3zM549.9 81.0h1.8v1.8h-1.8zM554.2 75.2h1.2v1.2h-1.2zM549.2 95.0h1.4v1.4h-1.4zM552.1 88.9h1.9v1.9h-1.9zM551.4 84.5h1.8v1.8h-1.8zM550.4 105.0h1.2v1.2h-1.2zM553.7 80.1h1.4v1.4h-1.4zM550.0 87.0h1.7v1.7h-1.7zM551.3 86.6h1.1v1.1h-1.1zM557.4 82.1h1.8v1.8h-1.8zM550.0 106.6h1.5v1.5h-1.5zM554.5 82.6h1.3v1.3h-1.3zM554.6 87.6h1.0v1.0h-1.0zM555.2 73.4h1.4v1.4h-1.4zM549.5 96.4h1.4v1.4h-1.4zM551.6 103.7h1.4v1.4h-1.4zM553.7 94.2h1.2v1.2h-1.2zM552.3 84.6h1.7v1.7h-1.7zM554.3 87.6h1.8v1.8h-1.8zM552.9 81.3h2.0v2.0h-2.0zM540.4 139.7h1.5v1.5h-1.5zM540.8 143.5h1.6v1.6h-1.6zM543.5 126.3h1.6v1.6h-1.6zM540.1 125.2h1.4v1.4h-1.4zM547.2 121.3h1.2v1.2h-1.2zM543.2 132.3h1.9v1.9h-1.9zM539.0 134.9h1.8v1.8h-1.8zM543.6 121.9h1.2v1.2h-1.2zM543.0 125.4h1.2v1.2h-1.2zM543.5 112.5h1.3v1.3h-1.3zM547.9 117.3h1.2v1.2h-1.2zM544.2 111.0h1.6v1.6h-1.6zM543.7 119.3h1.0v1.0h-1.0zM539.2 142.1h1.7v1.7h-1.7zM538.2 140.4h1.5v1.5h-1.5zM537.3 144.9h2.0v2.0h-2.0zM544.8 111.0h1.3v1.3h-1.3zM539.0 137.3h1.8v1.8h-1.8zM542.4 124.4h1.3v1.3h-1.3zM540.1 128.3h1.6v1.6h-1.6zM545.0 115.8h1.3v1.3h-1.3zM547.4 127.7h1.5v1.5h-1.5zM539.5 137.4h1.9v1.9h-1.9zM545.9 118.1h1.9v1.9h-1.9zM575.1 66.4h1.0v1.0h-1.0zM574.8 70.0h1.2v1.2h-1.2zM573.7 67.7h1.7v1.7h-1.7zM580.2 68.7h1.9v1.9h-1.9zM577.5 67.5h1.2v1.2h-1.2zM577.0 74.0h1.2v1.2h-1.2zM573.9 68.6h1.4v1.4h-1.4zM573.0 73.0h1.2v1.2h-1.2zM575.0 64.2h1.8v1.8h-1.8zM573.5 68.2h1.2v1.2h-1.2zM576.4 65.7h1.6v1.6h-1.6zM578.0 64.1h1.4v1.4h-1.4zM590.1 55.1h1.8v1.8h-1.8zM590.2 58.8h1.6v1.6h-1.6zM590.7 58.5h1.7v1.7h-1.7zM504.7 140.9h1.8v1.8h-1.8zM507.6 138.1h1.8v1.8h-1.8zM506.8 152.7h2.0v2.0h-2.0zM507.5 147.8h1.2v1.2h-1.2zM509.5 141.7h1.6v1.6h-1.6zM508.7 155.9h1.7v1.7h-1.7zM505.3 153.1h1.7v1.7h-1.7zM505.3 146.0h1.2v1.2h-1.2zM509.1 159.2h1.9v1.9h-1.9zM508.7 146.5h1.3v1.3h-1.3zM505.6 144.9h1.4v1.4h-1.4zM506.2 146.7h2.0v2.0h-2.0zM511.7 154.6h1.5v1.5h-1.5zM505.9 146.2h1.5v1.5h-1.5zM507.8 153.4h1.7v1.7h-1.7zM507.5 156.3h1.4v1.4h-1.4zM520.6 157.6h1.6v1.6h-1.6zM527.0 174.9h1.4v1.4h-1.4zM526.2 175.9h2.0v2.0h-2.0zM519.9 159.1h1.8v1.8h-1.8zM521.1 155.8h1.1v1.1h-1.1zM529.6 176.0h1.4v1.4h-1.4zM532.9 179.2h1.7v1.7h-1.7zM526.8 177.7h2.0v2.0h-2.0zM527.7 165.5h1.7v1.7h-1.7zM522.9 166.0h1.6v1.6h-1.6zM526.4 166.6h1.7v1.7h-1.7zM522.7 155.2h1.1v1.1h-1.1zM521.0 155.1h1.9v1.9h-1.9zM525.9 167.3h1.7v1.7h-1.7zM522.1 163.9h1.9v1.9h-1.9zM521.4 159.8h1.4v1.4h-1.4zM522.3 158.2h1.5v1.5h-1.5zM521.0 168.7h1.2v1.2h-1.2zM522.3 163.0h1.6v1.6h-1.6zM523.2 166.9h1.7v1.7h-1.7zM527.4 178.1h1.4v1.4h-1.4zM527.3 166.8h1.6v1.6h-1.6zM526.6 169.3h1.3v1.3h-1.3zM526.3 171.3h1.7v1.7h-1.7zM524.9 176.5h1.7v1.7h-1.7zM520.1 154.6h1.2v1.2h-1.2zM531.5 179.4h1.5v1.5h-1.5zM520.3 148.2h1.9v1.9h-1.9zM497.1 130.6h1.9v1.9h-1.9zM496.8 137.7h1.8v1.8h-1.8zM499.2 131.7h1.1v1.1h-1.1zM496.5 135.2h1.5v1.5h-1.5zM497.4 132.0h1.2v1.2h-1.2zM495.2 133.7h2.0v2.0h-2.0zM497.5 131.7h1.7v1.7h-1.7zM575.3 184.8h1.0v1.0h-1.0zM571.7 179.6h1.6v1.6h-1.6zM574.6 180.2h1.9v1.9h-1.9zM582.3 193.7h1.7v1.7h-1.7zM576.3 207.0h1.4v1.4h-1.4zM578.0 188.8h1.7v1.7h-1.7zM578.7 215.4h1.4v1.4h-1.4zM572.4 187.3h1.6v1.6h-1.6zM571.7 195.3h1.7v1.7h-1.7zM565.8 184.5h1.8v1.8h-1.8zM568.8 190.4h1.8v1.8h-1.8zM582.2 213.3h1.0v1.0h-1.0zM569.5 194.4h1.2v1.2h-1.2zM572.0 178.2h1.4v1.4h-1.4zM573.1 182.3h2.0v2.0h-2.0zM585.2 194.1h1.6v1.6h-1.6zM578.9 194.3h1.7v1.7h-1.7zM579.9 188.5h1.5v1.5h-1.5zM578.7 186.3h1.9v1.9h-1.9zM573.5 207.3h1.9v1.9h-1.9zM573.0 213.7h1.3v1.3h-1.3zM582.6 189.6h2.0v2.0h-2.0zM576.2 192.2h1.1v1.1h-1.1zM579.3 190.2h2.0v2.0h-2.0zM571.3 197.4h1.7v1.7h-1.7zM572.5 213.9h1.6v1.6h-1.6zM577.5 188.6h1.7v1.7h-1.7zM586.7 178.0h1.6v1.6h-1.6zM577.0 189.4h1.7v1.7h-1.7zM571.5 211.5h1.7v1.7h-1.7zM574.5 194.7h1.8v1.8h-1.8zM574.1 194.4h1.6v1.6h-1.6zM577.6 213.3h1.5v1.5h-1.5zM573.7 199.2h1.3v1.3h-1.3zM566.5 179.7h1.7v1.7h-1.7zM571.5 205.3h1.9v1.9h-1.9zM583.1 210.3h1.8v1.8h-1.8zM586.1 211.1h1.8v1.8h-1.8zM570.3 183.9h1.4v1.4h-1.4zM575.2 203.7h1.5v1.5h-1.5zM573.1 180.8h1.3v1.3h-1.3zM576.1 183.6h2.0v2.0h-2.0zM571.8 194.8h1.9v1.9h-1.9zM581.8 199.7h1.8v1.8h-1.8zM575.1 207.5h1.4v1.4h-1.4zM573.8 183.6h1.8v1.8h-1.8zM589.4 222.7h1.2v1.2h-1.2zM576.8 209.6h1.1v1.1h-1.1zM578.7 198.9h1.8v1.8h-1.8zM571.6 176.7h1.7v1.7h-1.7zM577.2 184.8h1.4v1.4h-1.4zM588.1 211.7h1.7v1.7h-1.7zM573.4 208.8h1.6v1.6h-1.6zM574.5 183.9h1.9v1.9h-1.9zM576.0 200.9h1.8v1.8h-1.8zM582.8 190.3h1.2v1.2h-1.2zM577.3 209.4h1.3v1.3h-1.3zM583.8 208.8h1.1v1.1h-1.1zM580.1 194.1h1.5v1.5h-1.5zM579.0 194.9h1.2v1.2h-1.2zM577.8 224.0h1.5v1.5h-1.5zM573.2 186.9h1.3v1.3h-1.3zM573.6 200.0h1.0v1.0h-1.0zM566.1 200.8h1.1v1.1h-1.1zM574.4 194.7h1.9v1.9h-1.9zM581.2 197.4h1.3v1.3h-1.3zM568.7 206.0h1.9v1.9h-1.9zM578.3 198.9h1.1v1.1h-1.1zM565.3 178.4h1.6v1.6h-1.6zM581.3 215.0h1.1v1.1h-1.1zM577.4 198.7h1.1v1.1h-1.1zM576.5 189.8h1.7v1.7h-1.7zM572.4 208.1h1.6v1.6h-1.6zM587.6 197.5h1.8v1.8h-1.8zM580.9 191.6h1.1v1.1h-1.1zM581.6 205.6h1.9v1.9h-1.9zM580.4 215.3h1.3v1.3h-1.3zM571.8 199.9h1.5v1.5h-1.5zM579.2 214.7h1.4v1.4h-1.4zM571.0 197.3h1.7v1.7h-1.7zM570.0 191.8h1.8v1.8h-1.8zM582.8 204.6h1.9v1.9h-1.9zM577.1 182.1h1.6v1.6h-1.6zM573.9 210.7h1.8v1.8h-1.8zM585.4 210.0h1.9v1.9h-1.9zM580.2 184.7h1.4v1.4h-1.4zM572.5 179.8h1.2v1.2h-1.2zM584.9 185.6h1.9v1.9h-1.9zM583.7 216.1h1.5v1.5h-1.5zM583.2 207.9h1.6v1.6h-1.6zM569.1 246.2h1.3v1.3h-1.3zM565.4 248.6h1.9v1.9h-1.9zM572.3 237.0h1.0v1.0h-1.0zM573.3 233.7h1.3v1.3h-1.3zM568.7 247.0h1.4v1.4h-1.4zM571.5 233.4h1.4v1.4h-1.4zM574.1 244.1h1.3v1.3h-1.3zM574.8 243.8h1.3v1.3h-1.3zM567.8 251.8h1.5v1.5h-1.5zM570.0 242.0h1.6v1.6h-1.6zM568.2 249.9h1.0v1.0h-1.0zM569.7 234.5h1.6v1.6h-1.6zM570.3 241.7h1.8v1.8h-1.8zM568.5 246.4h1.5v1.5h-1.5zM568.4 244.8h1.7v1.7h-1.7zM570.1 243.7h2.0v2.0h-2.0zM567.7 246.6h1.1v1.1h-1.1zM569.9 240.6h1.9v1.9h-1.9zM573.3 237.2h1.6v1.6h-1.6zM576.7 246.4h1.8v1.8h-1.8zM496.6 207.7h1.6v1.6h-1.6zM496.8 216.3h1.3v1.3h-1.3zM491.8 212.6h1.3v1.3h-1.3zM498.2 218.9h1.4v1.4h-1.4zM495.8 220.4h1.4v1.4h-1.4zM492.1 202.4h1.1v1.1h-1.1zM497.4 215.0h1.1v1.1h-1.1zM498.7 218.9h1.5v1.5h-1.5zM492.6 207.6h1.5v1.5h-1.5zM493.2 213.7h1.0v1.0h-1.0zM494.4 216.6h1.4v1.4h-1.4zM495.9 225.3h1.4v1.4h-1.4zM497.8 223.4h1.1v1.1h-1.1zM495.6 218.4h1.1v1.1h-1.1zM500.8 227.3h1.0v1.0h-1.0zM500.2 224.5h1.7v1.7h-1.7zM488.6 201.2h1.1v1.1h-1.1zM489.0 209.1h1.9v1.9h-1.9zM497.5 222.7h1.2v1.2h-1.2zM491.7 206.4h1.6v1.6h-1.6zM498.3 225.6h1.4v1.4h-1.4zM495.2 214.6h1.3v1.3h-1.3zM499.7 229.9h1.4v1.4h-1.4zM502.4 229.5h1.6v1.6h-1.6zM496.6 220.1h1.6v1.6h-1.6zM497.7 204.0h1.8v1.8h-1.8zM494.9 206.8h1.8v1.8h-1.8zM492.5 216.2h1.5v1.5h-1.5zM501.5 224.3h1.8v1.8h-1.8zM495.3 209.1h1.7v1.7h-1.7zM504.7 233.1h1.0v1.0h-1.0zM509.1 248.2h1.7v1.7h-1.7zM506.5 232.4h1.6v1.6h-1.6zM515.4 255.9h1.2v1.2h-1.2zM500.4 240.5h1.9v1.9h-1.9zM514.0 251.7h1.6v1.6h-1.6zM511.9 253.3h1.8v1.8h-1.8zM513.8 246.3h1.9v1.9h-1.9zM510.4 250.5h1.6v1.6h-1.6zM513.7 248.6h1.4v1.4h-1.4zM507.7 240.8h1.1v1.1h-1.1zM507.4 236.6h1.5v1.5h-1.5zM514.5 247.0h1.6v1.6h-1.6zM512.4 238.9h1.3v1.3h-1.3zM511.1 259.6h1.7v1.7h-1.7zM517.6 249.6h1.2v1.2h-1.2zM512.4 241.9h1.3v1.3h-1.3zM509.8 252.1h1.3v1.3h-1.3zM510.0 241.2h1.6v1.6h-1.6zM511.0 241.3h1.8v1.8h-1.8zM504.7 235.5h1.8v1.8h-1.8zM501.5 233.1h1.1v1.1h-1.1zM499.3 235.7h1.3v1.3h-1.3zM514.3 250.4h1.4v1.4h-1.4zM514.4 253.0h1.5v1.5h-1.5zM512.5 248.7h1.6v1.6h-1.6zM507.6 246.4h1.8v1.8h-1.8zM510.8 248.6h1.7v1.7h-1.7zM508.5 251.8h1.5v1.5h-1.5zM509.7 255.1h1.3v1.3h-1.3zM512.5 245.5h1.1v1.1h-1.1zM509.7 245.9h1.0v1.0h-1.0zM504.7 245.1h1.7v1.7h-1.7zM510.2 241.2h1.8v1.8h-1.8zM504.8 231.9h1.7v1.7h-1.7zM506.0 238.5h1.6v1.6h-1.6zM506.9 254.7h1.4v1.4h-1.4zM511.1 247.7h1.8v1.8h-1.8zM509.8 243.2h1.7v1.7h-1.7zM506.4 243.7h1.6v1.6h-1.6zM504.0 242.3h1.5v1.5h-1.5zM512.4 250.0h1.8v1.8h-1.8zM511.1 245.6h1.2v1.2h-1.2zM508.3 244.8h1.6v1.6h-1.6zM505.8 245.4h1.3v1.3h-1.3zM513.8 258.7h1.9v1.9h-1.9zM505.6 225.3h1.5v1.5h-1.5zM502.3 229.4h1.6v1.6h-1.6zM479.7 89.1h1.7v1.7h-1.7zM482.4 91.5h1.2v1.2h-1.2zM481.3 88.7h1.6v1.6h-1.6zM481.1 86.9h1.2v1.2h-1.2zM478.6 88.3h1.7v1.7h-1.7zM480.9 89.3h1.5v1.5h-1.5zM733.6 241.0h1.4v1.4h-1.4zM735.1 250.9h1.3v1.3h-1.3zM732.2 250.4h1.4v1.4h-1.4zM733.9 242.4h1.2v1.2h-1.2zM733.2 249.6h1.3v1.3h-1.3zM737.3 258.1h1.4v1.4h-1.4zM734.3 247.4h1.5v1.5h-1.5zM732.6 232.7h2.0v2.0h-2.0zM737.9 238.6h2.0v2.0h-2.0zM739.5 228.4h1.7v1.7h-1.7zM730.3 239.7h1.5v1.5h-1.5zM732.7 261.4h1.4v1.4h-1.4zM734.2 248.2h1.3v1.3h-1.3zM736.6 247.3h1.4v1.4h-1.4zM735.0 238.9h1.5v1.5h-1.5zM731.4 256.3h1.4v1.4h-1.4zM734.8 248.1h1.5v1.5h-1.5zM732.5 267.6h1.9v1.9h-1.9zM738.3 241.0h1.4v1.4h-1.4zM734.6 258.9h2.0v2.0h-2.0zM732.2 243.8h1.9v1.9h-1.9zM735.7 254.1h1.7v1.7h-1.7zM736.3 240.9h1.0v1.0h-1.0zM732.8 238.9h1.7v1.7h-1.7zM736.0 258.1h1.9v1.9h-1.9zM734.7 238.1h1.6v1.6h-1.6zM732.9 235.1h1.8v1.8h-1.8zM736.5 251.0h1.1v1.1h-1.1zM733.1 256.9h1.9v1.9h-1.9zM736.6 261.0h2.0v2.0h-2.0zM733.4 259.9h1.3v1.3h-1.3zM735.3 237.5h1.2v1.2h-1.2zM739.4 261.1h1.8v1.8h-1.8zM713.2 283.7h1.1v1.1h-1.1zM706.9 295.8h1.6v1.6h-1.6zM714.0 296.5h1.1v1.1h-1.1zM716.0 290.0h1.2v1.2h-1.2zM711.1 285.0h1.7v1.7h-1.7zM714.5 298.0h1.2v1.2h-1.2zM706.3 290.1h1.2v1.2h-1.2zM705.6 291.1h1.3v1.3h-1.3zM709.4 281.7h1.8v1.8h-1.8zM712.2 287.0h1.6v1.6h-1.6zM706.8 296.3h1.8v1.8h-1.8zM711.5 290.3h1.7v1.7h-1.7zM709.1 290.8h1.8v1.8h-1.8zM712.3 294.4h1.9v1.9h-1.9zM716.1 294.5h1.0v1.0h-1.0zM713.6 284.4h1.1v1.1h-1.1zM709.5 305.0h1.1v1.1h-1.1zM709.3 286.5h1.5v1.5h-1.5zM714.0 299.1h2.0v2.0h-2.0zM710.6 293.0h1.6v1.6h-1.6zM708.7 282.3h1.0v1.0h-1.0zM705.6 290.2h1.3v1.3h-1.3zM710.2 284.5h1.4v1.4h-1.4zM710.3 291.4h1.0v1.0h-1.0zM711.9 294.3h1.9v1.9h-1.9zM712.8 291.3h1.6v1.6h-1.6zM708.9 292.6h1.2v1.2h-1.2zM704.1 280.5h1.6v1.6h-1.6zM707.1 292.1h1.9v1.9h-1.9zM711.2 287.5h1.1v1.1h-1.1zM709.9 278.2h1.8v1.8h-1.8zM708.3 283.1h1.1v1.1h-1.1zM709.2 290.7h1.8v1.8h-1.8zM711.9 285.5h1.8v1.8h-1.8zM715.3 287.6h1.3v1.3h-1.3zM724.5 304.2h1.2v1.2h-1.2zM726.5 303.4h1.6v1.6h-1.6zM727.8 297.6h1.1v1.1h-1.1zM727.3 300.3h1.1v1.1h-1.1zM725.4 299.4h1.6v1.6h-1.6zM724.6 300.7h1.6v1.6h-1.6zM727.2 296.0h1.4v1.4h-1.4zM726.7 296.7h2.0v2.0h-2.0zM723.8 308.0h1.9v1.9h-1.9zM726.7 309.6h1.1v1.1h-1.1zM726.5 312.7h1.2v1.2h-1.2zM724.2 308.5h1.6v1.6h-1.6zM695.6 321.5h1.2v1.2h-1.2zM701.4 352.0h1.5v1.5h-1.5zM696.5 337.9h1.3v1.3h-1.3zM696.3 331.2h1.7v1.7h-1.7zM700.6 335.9h1.6v1.6h-1.6zM697.1 340.8h1.7v1.7h-1.7zM697.5 328.8h1.0v1.0h-1.0zM699.8 335.6h1.1v1.1h-1.1zM700.0 337.1h1.7v1.7h-1.7zM697.3 323.2h1.1v1.1h-1.1zM700.7 341.4h1.6v1.6h-1.6zM700.7 332.0h1.7v1.7h-1.7zM698.0 322.5h1.8v1.8h-1.8zM697.7 354.0h1.4v1.4h-1.4zM698.6 344.7h1.4v1.4h-1.4zM700.0 344.2h1.8v1.8h-1.8zM699.7 324.7h1.1v1.1h-1.1zM697.8 324.3h1.6v1.6h-1.6zM698.9 346.0h1.7v1.7h-1.7zM696.7 336.1h1.9v1.9h-1.9zM703.1 352.9h1.6v1.6h-1.6zM698.9 342.9h1.3v1.3h-1.3zM695.5 324.2h1.5v1.5h-1.5zM700.3 345.2h1.8v1.8h-1.8zM697.7 342.0h1.5v1.5h-1.5zM700.2 336.3h1.2v1.2h-1.2zM702.2 342.7h1.4v1.4h-1.4zM700.5 338.5h2.0v2.0h-2.0zM687.4 359.5h1.9v1.9h-1.9zM685.6 387.8h1.8v1.8h-1.8zM687.4 378.9h1.0v1.0h-1.0zM690.2 367.1h1.0v1.0h-1.0zM689.5 399.5h1.2v1.2h-1.2zM688.1 381.9h1.4v1.4h-1.4zM687.5 399.0h1.0v1.0h-1.0zM688.4 390.6h1.1v1.1h-1.1zM688.8 393.0h2.0v2.0h-2.0zM687.9 372.6h1.7v1.7h-1.7zM688.4 386.4h1.8v1.8h-1.8zM689.5 377.9h1.6v1.6h-1.6zM688.0 383.5h2.0v2.0h-2.0zM690.3 365.8h1.4v1.4h-1.4zM688.5 400.8h1.6v1.6h-1.6zM686.1 395.0h1.6v1.6h-1.6zM687.6 389.9h1.2v1.2h-1.2zM689.4 386.0h1.3v1.3h-1.3zM687.3 400.1h1.9v1.9h-1.9zM684.9 422.1h1.7v1.7h-1.7zM686.1 398.4h1.6v1.6h-1.6zM689.7 364.3h1.6v1.6h-1.6zM686.3 405.8h1.4v1.4h-1.4zM686.6 423.4h1.3v1.3h-1.3zM689.2 402.7h1.9v1.9h-1.9zM688.2 395.1h1.2v1.2h-1.2zM687.1 406.8h1.1v1.1h-1.1zM688.5 363.2h1.3v1.3h-1.3zM687.8 400.9h1.4v1.4h-1.4zM688.1 396.5h1.8v1.8h-1.8zM687.7 365.7h1.2v1.2h-1.2zM687.5 403.9h1.5v1.5h-1.5zM687.6 386.3h1.6v1.6h-1.6zM687.7 377.0h1.9v1.9h-1.9zM691.5 368.9h1.6v1.6h-1.6zM688.5 383.8h1.9v1.9h-1.9zM687.9 395.8h1.8v1.8h-1.8zM689.1 393.1h1.3v1.3h-1.3zM688.2 377.2h1.8v1.8h-1.8zM687.1 375.3h1.4v1.4h-1.4zM690.7 361.4h1.1v1.1h-1.1zM687.6 384.7h1.3v1.3h-1.3zM687.4 374.5h1.9v1.9h-1.9zM688.7 368.2h1.6v1.6h-1.6zM689.6 396.8h1.4v1.4h-1.4zM1143.4 570.9h1.8v1.8h-1.8zM1135.9 574.1h1.1v1.1h-1.1zM1139.6 565.7h1.6v1.6h-1.6zM1142.2 571.3h1.2v1.2h-1.2zM1140.3 564.1h1.9v1.9h-1.9zM1147.5 580.9h1.8v1.8h-1.8zM1138.3 570.8h1.2v1.2h-1.2zM1142.4 571.5h1.3v1.3h-1.3zM1148.7 570.0h2.0v2.0h-2.0zM1141.6 569.9h1.7v1.7h-1.7zM1138.9 572.2h1.9v1.9h-1.9zM1141.3 576.8h1.7v1.7h-1.7zM1141.1 576.3h1.8v1.8h-1.8zM1145.6 565.4h1.2v1.2h-1.2zM675.0 432.5h2.0v2.0h-2.0zM659.4 442.4h1.1v1.1h-1.1zM676.2 447.1h1.7v1.7h-1.7zM665.5 441.6h1.9v1.9h-1.9zM661.4 464.6h1.7v1.7h-1.7zM658.0 462.4h1.0v1.0h-1.0zM661.8 452.1h1.6v1.6h-1.6zM664.9 453.9h1.5v1.5h-1.5zM659.8 430.9h1.7v1.7h-1.7zM674.0 447.1h1.4v1.4h-1.4zM659.4 455.2h1.1v1.1h-1.1zM658.5 460.2h1.9v1.9h-1.9zM656.3 444.4h1.6v1.6h-1.6zM666.5 443.1h1.8v1.8h-1.8zM659.5 466.6h1.7v1.7h-1.7zM670.2 447.5h1.7v1.7h-1.7zM664.0 451.4h1.2v1.2h-1.2zM665.9 424.9h1.7v1.7h-1.7zM669.3 469.7h1.1v1.1h-1.1zM658.0 436.1h1.5v1.5h-1.5zM666.8 444.4h1.9v1.9h-1.9zM666.0 439.5h1.5v1.5h-1.5zM661.0 452.8h1.4v1.4h-1.4zM667.8 439.6h1.2v1.2h-1.2zM661.8 460.4h1.4v1.4h-1.4zM668.7 460.0h1.0v1.0h-1.0zM673.4 435.1h1.7v1.7h-1.7zM672.0 429.0h1.6v1.6h-1.6zM675.3 443.4h1.3v1.3h-1.3zM669.5 467.6h1.2v1.2h-1.2zM659.3 454.7h1.3v1.3h-1.3zM670.5 434.5h1.8v1.8h-1.8zM672.1 453.8h1.3v1.3h-1.3zM669.1 431.9h1.1v1.1h-1.1zM678.8 440.2h1.5v1.5h-1.5zM673.5 443.5h1.8v1.8h-1.8zM669.9 452.9h1.3v1.3h-1.3zM662.7 429.5h1.0v1.0h-1.0zM670.7 453.8h1.7v1.7h-1.7zM659.5 457.7h1.6v1.6h-1.6zM666.4 444.8h1.9v1.9h-1.9zM665.3 470.8h2.0v2.0h-2.0zM676.6 456.5h1.0v1.0h-1.0zM668.5 446.1h1.4v1.4h-1.4zM670.9 445.6h1.5v1.5h-1.5zM673.2 462.7h1.1v1.1h-1.1zM675.3 463.2h1.9v1.9h-1.9zM670.7 460.8h1.6v1.6h-1.6zM661.8 436.8h1.6v1.6h-1.6zM670.5 460.7h1.5v1.5h-1.5zM664.2 453.5h1.4v1.4h-1.4zM665.8 433.3h1.8v1.8h-1.8zM662.8 432.1h1.4v1.4h-1.4zM663.2 430.8h1.6v1.6h-1.6zM666.3 468.9h1.4v1.4h-1.4zM661.1 465.1h1.1v1.1h-1.1zM670.7 458.6h1.4v1.4h-1.4zM658.8 435.8h1.9v1.9h-1.9zM675.1 443.9h1.8v1.8h-1.8zM670.3 444.5h1.6v1.6h-1.6zM664.9 449.8h1.0v1.0h-1.0zM674.6 457.2h1.1v1.1h-1.1zM668.0 447.4h1.7v1.7h-1.7zM666.4 473.8h1.2v1.2h-1.2zM653.8 452.4h1.3v1.3h-1.3zM656.6 440.2h1.2v1.2h-1.2zM670.5 467.5h1.0v1.0h-1.0zM675.7 456.0h1.8v1.8h-1.8zM669.6 429.2h1.7v1.7h-1.7zM663.4 459.8h1.3v1.3h-1.3zM664.1 434.2h1.6v1.6h-1.6zM675.2 462.4h1.7v1.7h-1.7zM668.2 433.0h1.7v1.7h-1.7zM655.4 448.2h1.9v1.9h-1.9zM667.9 433.2h1.1v1.1h-1.1zM895.6 837.8h1.9v1.9h-1.9zM892.9 830.4h1.1v1.1h-1.1zM900.1 839.4h1.4v1.4h-1.4zM896.8 846.4h1.6v1.6h-1.6zM891.8 833.4h1.7v1.7h-1.7zM899.1 845.9h1.6v1.6h-1.6zM892.4 829.2h1.7v1.7h-1.7zM902.8 854.7h1.7v1.7h-1.7zM890.1 828.9h1.8v1.8h-1.8zM898.7 849.5h1.8v1.8h-1.8zM889.6 826.7h1.9v1.9h-1.9zM894.1 837.8h1.4v1.4h-1.4zM897.3 837.4h1.2v1.2h-1.2zM892.9 836.6h1.4v1.4h-1.4zM902.4 854.4h1.3v1.3h-1.3zM894.9 836.2h1.7v1.7h-1.7zM894.1 830.2h1.3v1.3h-1.3zM901.2 851.9h1.4v1.4h-1.4zM894.5 836.2h1.2v1.2h-1.2zM879.9 857.7h1.2v1.2h-1.2zM877.8 855.8h1.9v1.9h-1.9zM874.9 854.9h1.6v1.6h-1.6zM876.5 854.4h1.3v1.3h-1.3zM876.8 855.3h1.9v1.9h-1.9zM877.7 857.9h1.8v1.8h-1.8zM895.9 848.1h1.1v1.1h-1.1zM892.4 842.9h1.7v1.7h-1.7zM895.5 830.6h1.2v1.2h-1.2zM898.5 848.3h1.6v1.6h-1.6zM891.5 828.1h1.2v1.2h-1.2zM900.3 843.4h1.7v1.7h-1.7zM893.2 821.8h1.8v1.8h-1.8zM885.7 844.0h1.1v1.1h-1.1zM899.5 834.7h1.2v1.2h-1.2zM895.6 837.2h1.6v1.6h-1.6zM898.1 815.3h1.6v1.6h-1.6zM891.1 831.7h1.6v1.6h-1.6zM895.2 858.0h1.3v1.3h-1.3zM897.2 859.4h1.8v1.8h-1.8zM898.9 833.2h1.1v1.1h-1.1zM897.2 832.2h1.0v1.0h-1.0zM898.8 852.2h1.2v1.2h-1.2zM902.9 844.8h1.6v1.6h-1.6zM895.3 854.1h1.6v1.6h-1.6zM897.7 831.5h1.1v1.1h-1.1zM898.1 824.9h1.4v1.4h-1.4zM904.1 846.2h1.3v1.3h-1.3zM1197.4 831.0h1.1v1.1h-1.1zM1193.6 831.2h1.1v1.1h-1.1zM1196.0 830.6h1.8v1.8h-1.8zM1197.6 828.6h1.1v1.1h-1.1zM1198.4 825.1h1.6v1.6h-1.6zM1197.3 828.1h1.6v1.6h-1.6zM1646.0 377.0h2.2v2.2h-2.2zM819.0 569.0h2.2v2.2h-2.2zM820.0 582.0h2.2v2.2h-2.2zM1045.0 690.0h2.2v2.2h-2.2zM1024.0 756.0h2.2v2.2h-2.2zM1098.0 818.0h2.2v2.2h-2.2zM1183.0 386.0h2.2v2.2h-2.2z" fill="#52f03c"/>
<path d="M528.0 82.2h1.6v1.6h-1.6zM531.7 83.3h1.3v1.3h-1.3zM524.4 79.7h1.2v1.2h-1.2zM525.5 77.5h1.2v1.2h-1.2zM528.7 83.4h1.1v1.1h-1.1zM533.6 73.8h1.9v1.9h-1.9zM552.3 103.2h1.9v1.9h-1.9zM557.7 88.0h1.5v1.5h-1.5zM557.1 88.2h1.7v1.7h-1.7zM559.6 76.6h1.6v1.6h-1.6zM547.5 112.1h1.8v1.8h-1.8zM549.3 110.4h1.2v1.2h-1.2zM553.7 107.4h1.3v1.3h-1.3zM553.5 76.1h1.1v1.1h-1.1zM550.8 107.0h1.3v1.3h-1.3zM549.7 111.8h1.3v1.3h-1.3zM557.7 80.4h1.9v1.9h-1.9zM556.6 74.5h2.0v2.0h-2.0zM554.0 100.7h1.1v1.1h-1.1zM550.8 111.3h1.6v1.6h-1.6zM555.9 95.1h1.1v1.1h-1.1zM560.3 80.1h1.9v1.9h-1.9zM557.7 79.4h1.2v1.2h-1.2zM547.4 101.9h1.6v1.6h-1.6zM549.6 106.8h1.2v1.2h-1.2zM558.1 76.4h1.4v1.4h-1.4zM554.1 76.9h1.8v1.8h-1.8zM556.9 74.6h1.4v1.4h-1.4zM557.0 75.9h1.9v1.9h-1.9zM555.0 98.4h2.0v2.0h-2.0zM544.0 106.1h1.8v1.8h-1.8zM535.7 143.7h1.0v1.0h-1.0zM539.4 145.0h2.0v2.0h-2.0zM543.1 137.2h1.2v1.2h-1.2zM547.6 116.5h1.7v1.7h-1.7zM538.4 145.3h1.5v1.5h-1.5zM547.4 120.5h1.6v1.6h-1.6zM543.5 138.9h1.8v1.8h-1.8zM537.3 142.5h1.7v1.7h-1.7zM542.0 147.5h1.7v1.7h-1.7zM536.5 137.6h1.9v1.9h-1.9zM539.8 118.0h1.7v1.7h-1.7zM548.1 108.8h1.5v1.5h-1.5zM548.3 113.9h1.4v1.4h-1.4zM546.5 127.2h1.5v1.5h-1.5zM547.2 121.5h1.2v1.2h-1.2zM543.2 111.6h1.4v1.4h-1.4zM547.8 113.9h1.4v1.4h-1.4zM535.8 139.1h1.6v1.6h-1.6zM579.0 62.7h1.1v1.1h-1.1zM576.6 62.8h1.0v1.0h-1.0zM575.1 76.3h1.2v1.2h-1.2zM575.3 76.8h1.1v1.1h-1.1zM570.7 70.5h1.0v1.0h-1.0zM574.1 77.2h1.6v1.6h-1.6zM577.5 62.0h1.3v1.3h-1.3zM589.0 56.7h1.7v1.7h-1.7zM507.7 140.5h1.9v1.9h-1.9zM504.6 141.9h1.5v1.5h-1.5zM512.4 157.7h1.2v1.2h-1.2zM505.2 140.8h1.3v1.3h-1.3zM505.1 143.2h1.2v1.2h-1.2zM511.9 152.7h1.8v1.8h-1.8zM506.4 137.6h1.6v1.6h-1.6zM516.2 154.4h1.7v1.7h-1.7zM526.0 178.2h1.4v1.4h-1.4zM518.3 156.1h1.5v1.5h-1.5zM521.0 165.8h1.0v1.0h-1.0zM531.7 182.6h1.4v1.4h-1.4zM531.4 174.4h1.1v1.1h-1.1zM526.1 157.9h1.5v1.5h-1.5zM527.9 179.0h1.8v1.8h-1.8zM517.1 155.9h2.0v2.0h-2.0zM530.4 174.2h1.4v1.4h-1.4zM529.0 179.1h1.5v1.5h-1.5zM518.3 158.7h1.4v1.4h-1.4zM494.5 132.1h1.1v1.1h-1.1zM580.6 221.1h1.7v1.7h-1.7zM572.5 170.9h1.7v1.7h-1.7zM583.2 218.7h1.7v1.7h-1.7zM566.5 192.9h1.7v1.7h-1.7zM584.3 214.6h1.8v1.8h-1.8zM584.6 189.3h1.1v1.1h-1.1zM565.6 189.1h1.4v1.4h-1.4zM580.0 226.5h1.8v1.8h-1.8zM574.7 175.1h1.6v1.6h-1.6zM575.8 223.2h2.0v2.0h-2.0zM589.8 207.9h1.9v1.9h-1.9zM567.0 193.5h1.5v1.5h-1.5zM566.3 200.8h2.0v2.0h-2.0zM569.7 175.5h1.4v1.4h-1.4zM571.8 213.0h1.5v1.5h-1.5zM580.3 223.0h1.4v1.4h-1.4zM567.1 212.6h1.4v1.4h-1.4zM573.9 217.8h1.0v1.0h-1.0zM565.4 179.5h1.1v1.1h-1.1zM585.5 214.2h1.6v1.6h-1.6zM579.8 223.4h1.6v1.6h-1.6zM587.0 198.1h1.2v1.2h-1.2zM566.1 207.2h1.0v1.0h-1.0zM564.3 190.6h1.4v1.4h-1.4zM573.7 221.9h1.1v1.1h-1.1zM568.9 177.7h1.1v1.1h-1.1zM582.9 180.7h1.0v1.0h-1.0zM584.1 224.2h1.2v1.2h-1.2zM586.4 211.8h1.7v1.7h-1.7zM575.1 218.5h1.0v1.0h-1.0zM569.4 183.1h1.5v1.5h-1.5zM579.7 224.1h1.9v1.9h-1.9zM578.6 223.4h1.5v1.5h-1.5zM572.6 219.3h1.8v1.8h-1.8zM567.9 222.4h2.0v2.0h-2.0zM585.9 199.9h1.5v1.5h-1.5zM570.6 180.0h1.1v1.1h-1.1zM566.3 183.9h1.1v1.1h-1.1zM583.1 221.7h2.0v2.0h-2.0zM566.6 183.9h1.4v1.4h-1.4zM568.3 214.0h1.9v1.9h-1.9zM566.6 184.2h1.2v1.2h-1.2zM563.8 180.1h1.0v1.0h-1.0zM586.6 203.8h1.6v1.6h-1.6zM571.4 177.9h1.8v1.8h-1.8zM583.6 187.8h1.5v1.5h-1.5zM585.5 194.0h1.5v1.5h-1.5zM581.0 227.0h1.1v1.1h-1.1zM568.8 184.7h1.9v1.9h-1.9zM571.9 172.1h1.6v1.6h-1.6zM570.7 175.8h1.3v1.3h-1.3zM586.1 208.1h1.5v1.5h-1.5zM585.7 205.1h1.4v1.4h-1.4zM566.4 194.1h1.5v1.5h-1.5zM576.6 239.2h1.9v1.9h-1.9zM577.0 236.1h1.1v1.1h-1.1zM570.5 253.4h1.2v1.2h-1.2zM572.4 233.2h1.1v1.1h-1.1zM567.3 253.7h1.4v1.4h-1.4zM576.0 237.4h1.4v1.4h-1.4zM576.6 230.8h1.3v1.3h-1.3zM570.0 252.9h1.3v1.3h-1.3zM577.1 243.8h1.7v1.7h-1.7zM575.4 247.7h1.7v1.7h-1.7zM569.0 251.0h1.8v1.8h-1.8zM567.6 235.1h1.8v1.8h-1.8zM567.0 232.4h1.8v1.8h-1.8zM494.9 227.2h1.6v1.6h-1.6zM497.4 207.1h1.9v1.9h-1.9zM502.5 226.4h1.2v1.2h-1.2zM489.2 200.1h1.3v1.3h-1.3zM493.0 222.3h1.2v1.2h-1.2zM489.8 210.6h1.5v1.5h-1.5zM485.6 197.8h1.1v1.1h-1.1zM486.9 196.6h1.4v1.4h-1.4zM497.3 227.9h1.8v1.8h-1.8zM490.2 211.1h2.0v2.0h-2.0zM501.5 216.3h1.1v1.1h-1.1zM491.4 215.0h1.6v1.6h-1.6zM491.7 196.0h1.0v1.0h-1.0zM502.7 228.0h1.9v1.9h-1.9zM485.8 201.0h1.9v1.9h-1.9zM505.7 250.9h1.9v1.9h-1.9zM500.1 233.2h1.5v1.5h-1.5zM509.9 254.5h2.0v2.0h-2.0zM516.2 258.4h1.3v1.3h-1.3zM513.5 243.4h1.8v1.8h-1.8zM513.9 241.9h2.0v2.0h-2.0zM500.3 232.2h1.7v1.7h-1.7zM500.6 229.7h1.3v1.3h-1.3zM499.9 233.0h1.0v1.0h-1.0zM519.0 254.0h1.1v1.1h-1.1zM511.3 238.5h1.0v1.0h-1.0zM508.7 254.8h1.4v1.4h-1.4zM504.0 229.1h1.5v1.5h-1.5zM509.1 232.8h1.7v1.7h-1.7zM499.3 228.3h1.5v1.5h-1.5zM519.2 259.7h2.0v2.0h-2.0zM498.8 227.7h1.2v1.2h-1.2zM513.1 239.4h1.0v1.0h-1.0zM508.3 233.6h1.7v1.7h-1.7zM500.8 224.5h1.1v1.1h-1.1zM483.1 90.2h1.3v1.3h-1.3zM479.0 89.6h1.5v1.5h-1.5zM739.7 253.7h2.0v2.0h-2.0zM738.2 262.8h1.0v1.0h-1.0zM739.2 237.8h1.1v1.1h-1.1zM730.2 250.4h1.9v1.9h-1.9zM731.2 250.5h2.0v2.0h-2.0zM730.7 256.8h2.0v2.0h-2.0zM732.8 230.8h1.3v1.3h-1.3zM731.8 229.5h1.0v1.0h-1.0zM733.3 229.6h1.2v1.2h-1.2zM730.9 255.4h1.1v1.1h-1.1zM730.9 249.7h1.2v1.2h-1.2zM735.2 229.7h1.5v1.5h-1.5zM734.8 268.9h1.2v1.2h-1.2zM730.9 232.0h1.9v1.9h-1.9zM738.9 235.1h1.5v1.5h-1.5zM733.1 229.1h1.1v1.1h-1.1zM731.0 232.0h1.3v1.3h-1.3zM732.5 224.3h2.0v2.0h-2.0zM731.9 261.7h1.2v1.2h-1.2zM706.6 294.6h2.0v2.0h-2.0zM712.2 308.0h1.3v1.3h-1.3zM706.2 285.1h1.4v1.4h-1.4zM716.8 296.6h1.4v1.4h-1.4zM714.9 286.6h1.5v1.5h-1.5zM717.5 303.2h1.9v1.9h-1.9zM711.6 304.5h1.4v1.4h-1.4zM715.2 302.7h1.8v1.8h-1.8zM716.4 294.2h1.6v1.6h-1.6zM705.9 285.0h1.7v1.7h-1.7zM708.7 301.6h1.1v1.1h-1.1zM706.0 287.7h1.5v1.5h-1.5zM708.1 278.0h1.2v1.2h-1.2zM713.6 274.0h1.4v1.4h-1.4zM713.6 275.0h1.8v1.8h-1.8zM723.5 312.0h1.3v1.3h-1.3zM724.1 287.0h1.7v1.7h-1.7zM722.9 291.4h1.5v1.5h-1.5zM728.9 313.8h2.0v2.0h-2.0zM727.8 302.2h1.9v1.9h-1.9zM725.4 319.3h1.6v1.6h-1.6zM727.5 315.0h1.6v1.6h-1.6zM722.7 289.5h1.9v1.9h-1.9zM726.0 317.5h1.7v1.7h-1.7zM723.5 311.1h1.1v1.1h-1.1zM727.1 315.7h1.9v1.9h-1.9zM696.2 315.2h1.7v1.7h-1.7zM698.2 318.3h1.6v1.6h-1.6zM696.2 338.9h1.3v1.3h-1.3zM697.6 346.1h1.5v1.5h-1.5zM702.1 322.4h1.3v1.3h-1.3zM702.2 315.9h1.5v1.5h-1.5zM696.8 346.8h1.5v1.5h-1.5zM696.3 323.8h2.0v2.0h-2.0zM701.4 317.3h1.7v1.7h-1.7zM703.4 337.5h1.6v1.6h-1.6zM702.6 320.7h1.5v1.5h-1.5zM703.0 342.9h1.5v1.5h-1.5zM688.4 360.7h1.3v1.3h-1.3zM689.5 360.6h1.8v1.8h-1.8zM689.0 404.5h1.7v1.7h-1.7zM689.5 399.3h1.2v1.2h-1.2zM690.7 362.0h1.8v1.8h-1.8zM684.4 394.9h1.9v1.9h-1.9zM687.9 414.6h1.4v1.4h-1.4zM685.2 391.9h1.1v1.1h-1.1zM686.2 376.6h1.8v1.8h-1.8zM686.8 416.9h1.5v1.5h-1.5zM685.1 401.4h1.9v1.9h-1.9zM685.4 392.9h1.7v1.7h-1.7zM690.5 397.9h1.6v1.6h-1.6zM685.8 416.1h1.1v1.1h-1.1zM684.0 402.6h1.3v1.3h-1.3zM687.0 419.7h1.6v1.6h-1.6zM691.7 152.5h1.2v1.2h-1.2zM718.3 181.1h1.0v1.0h-1.0zM679.7 130.3h1.1v1.1h-1.1zM691.9 126.2h1.6v1.6h-1.6zM715.5 185.5h1.4v1.4h-1.4zM704.2 142.6h1.3v1.3h-1.3zM706.6 171.1h1.6v1.6h-1.6zM666.8 130.7h1.1v1.1h-1.1zM722.3 201.5h1.1v1.1h-1.1zM684.6 133.4h1.7v1.7h-1.7zM702.9 204.3h1.2v1.2h-1.2zM703.5 198.6h1.4v1.4h-1.4zM678.7 154.0h1.7v1.7h-1.7zM681.5 112.3h1.4v1.4h-1.4zM685.9 158.1h1.7v1.7h-1.7zM712.5 198.9h1.2v1.2h-1.2zM679.0 133.9h1.0v1.0h-1.0zM708.5 205.7h1.3v1.3h-1.3zM696.7 186.8h1.2v1.2h-1.2zM707.0 202.1h1.1v1.1h-1.1zM656.8 255.0h1.2v1.2h-1.2zM739.4 183.2h0.9v0.9h-0.9zM788.1 332.6h1.1v1.1h-1.1zM706.2 291.0h0.9v0.9h-0.9zM788.1 312.5h1.5v1.5h-1.5zM779.2 269.8h0.9v0.9h-0.9zM764.5 340.3h0.9v0.9h-0.9zM768.9 309.9h1.0v1.0h-1.0zM766.4 349.0h1.1v1.1h-1.1zM773.1 254.1h1.0v1.0h-1.0zM672.0 293.2h1.2v1.2h-1.2zM958.0 291.6h0.9v0.9h-0.9zM1002.0 293.3h1.4v1.4h-1.4zM1037.9 262.9h1.8v1.8h-1.8zM1020.0 278.8h1.2v1.2h-1.2zM1042.2 249.4h1.5v1.5h-1.5zM961.3 292.2h1.6v1.6h-1.6zM985.9 281.5h1.0v1.0h-1.0zM1022.6 285.6h1.6v1.6h-1.6zM999.7 294.3h1.3v1.3h-1.3zM1002.7 331.3h1.0v1.0h-1.0zM971.5 342.9h1.1v1.1h-1.1zM995.1 324.0h1.5v1.5h-1.5zM1043.1 347.4h1.0v1.0h-1.0zM1001.6 300.2h1.3v1.3h-1.3zM989.6 306.9h1.6v1.6h-1.6zM965.7 281.8h1.6v1.6h-1.6zM1014.1 260.0h1.4v1.4h-1.4zM957.0 301.5h1.5v1.5h-1.5zM1025.9 247.6h1.1v1.1h-1.1zM1010.4 342.5h1.7v1.7h-1.7zM996.6 252.7h1.0v1.0h-1.0zM1030.7 347.5h1.1v1.1h-1.1zM1004.2 304.1h1.5v1.5h-1.5zM958.0 301.9h1.0v1.0h-1.0zM983.1 258.9h1.2v1.2h-1.2zM1015.4 313.8h1.2v1.2h-1.2zM1006.9 279.2h1.7v1.7h-1.7zM993.7 301.8h1.6v1.6h-1.6zM1017.0 282.6h1.6v1.6h-1.6zM1025.1 318.4h1.6v1.6h-1.6zM1039.7 263.1h1.4v1.4h-1.4zM987.4 310.8h1.7v1.7h-1.7zM1008.7 289.2h1.4v1.4h-1.4zM1023.9 292.5h1.2v1.2h-1.2zM1021.2 336.6h1.8v1.8h-1.8zM951.9 350.4h1.8v1.8h-1.8zM1000.9 324.7h1.6v1.6h-1.6zM1004.1 407.2h1.2v1.2h-1.2zM989.5 344.7h1.7v1.7h-1.7zM986.8 332.4h1.4v1.4h-1.4zM974.7 328.4h1.1v1.1h-1.1zM946.7 379.0h1.1v1.1h-1.1zM984.5 349.4h1.4v1.4h-1.4zM991.9 340.1h1.8v1.8h-1.8zM999.9 348.1h1.5v1.5h-1.5zM991.3 333.1h0.9v0.9h-0.9zM996.7 357.5h1.6v1.6h-1.6zM984.1 337.6h1.2v1.2h-1.2zM1011.5 360.6h1.5v1.5h-1.5zM978.4 328.4h1.5v1.5h-1.5zM982.0 388.6h1.5v1.5h-1.5zM977.2 396.5h0.9v0.9h-0.9zM975.0 327.4h1.4v1.4h-1.4zM989.3 368.2h1.1v1.1h-1.1zM960.5 376.3h1.6v1.6h-1.6zM968.2 344.2h1.4v1.4h-1.4zM997.6 354.8h1.5v1.5h-1.5zM1142.1 574.6h1.8v1.8h-1.8zM1139.6 575.0h1.9v1.9h-1.9zM1143.0 568.0h1.8v1.8h-1.8zM1142.7 565.4h1.1v1.1h-1.1zM1140.7 575.3h1.1v1.1h-1.1zM1137.5 570.7h1.7v1.7h-1.7zM1138.0 569.6h1.2v1.2h-1.2zM1147.0 574.1h1.3v1.3h-1.3zM1144.6 574.4h1.1v1.1h-1.1zM1140.8 571.7h1.7v1.7h-1.7zM1141.8 564.9h1.4v1.4h-1.4zM1139.1 568.8h1.3v1.3h-1.3zM1143.6 575.5h1.0v1.0h-1.0zM1142.7 573.3h1.4v1.4h-1.4zM1142.4 575.5h1.1v1.1h-1.1zM1209.3 597.6h1.6v1.6h-1.6zM1137.7 510.2h1.2v1.2h-1.2zM1075.3 543.6h1.5v1.5h-1.5zM1162.7 574.9h1.3v1.3h-1.3zM1112.2 572.9h1.7v1.7h-1.7zM1155.8 589.3h1.3v1.3h-1.3zM1201.5 562.1h1.0v1.0h-1.0zM1157.4 596.1h1.5v1.5h-1.5zM1136.5 594.0h1.8v1.8h-1.8zM1108.2 533.0h1.5v1.5h-1.5zM1196.0 598.8h1.0v1.0h-1.0zM1089.3 591.6h1.2v1.2h-1.2zM1161.2 549.0h1.4v1.4h-1.4zM1117.4 639.6h1.2v1.2h-1.2zM1146.0 508.2h1.1v1.1h-1.1zM1142.3 592.4h1.4v1.4h-1.4zM1115.8 591.9h1.2v1.2h-1.2zM1155.4 567.8h1.8v1.8h-1.8zM1177.4 603.1h1.2v1.2h-1.2zM1119.9 537.3h1.3v1.3h-1.3zM1142.3 511.0h1.2v1.2h-1.2zM1077.7 598.7h1.2v1.2h-1.2zM1158.8 521.0h1.0v1.0h-1.0zM1113.5 558.9h1.2v1.2h-1.2zM1110.4 616.7h1.1v1.1h-1.1zM1205.4 560.4h1.7v1.7h-1.7zM1117.6 568.4h1.0v1.0h-1.0zM1081.0 615.3h1.0v1.0h-1.0zM1127.5 506.5h0.9v0.9h-0.9zM1147.1 586.3h1.6v1.6h-1.6zM1121.0 557.7h1.4v1.4h-1.4zM1127.2 594.1h1.8v1.8h-1.8zM1220.3 563.8h1.3v1.3h-1.3zM1178.6 607.1h1.0v1.0h-1.0zM1149.9 585.4h1.1v1.1h-1.1zM1160.7 512.1h1.7v1.7h-1.7zM1190.1 526.4h1.5v1.5h-1.5zM1118.9 530.5h0.9v0.9h-0.9zM1115.3 585.3h1.5v1.5h-1.5zM1068.7 596.3h1.7v1.7h-1.7zM1161.2 541.1h1.5v1.5h-1.5zM1110.2 528.9h1.8v1.8h-1.8zM1082.7 539.6h1.0v1.0h-1.0zM1130.3 549.2h1.3v1.3h-1.3zM1149.9 648.3h1.2v1.2h-1.2zM532.3 420.7h1.5v1.5h-1.5zM527.0 405.5h1.3v1.3h-1.3zM616.6 448.4h1.6v1.6h-1.6zM582.3 447.4h1.6v1.6h-1.6zM585.2 408.0h1.6v1.6h-1.6zM596.7 445.4h1.6v1.6h-1.6zM607.1 435.1h1.6v1.6h-1.6zM545.0 402.9h1.7v1.7h-1.7zM570.1 443.1h1.7v1.7h-1.7zM530.6 438.1h1.1v1.1h-1.1zM518.5 402.9h1.1v1.1h-1.1zM594.0 436.8h1.3v1.3h-1.3zM576.6 406.4h1.7v1.7h-1.7zM517.4 398.7h1.0v1.0h-1.0zM547.9 430.2h1.1v1.1h-1.1zM506.5 442.3h1.3v1.3h-1.3zM522.7 393.5h1.4v1.4h-1.4zM527.4 429.7h1.1v1.1h-1.1zM574.8 419.2h1.5v1.5h-1.5zM528.5 449.9h1.5v1.5h-1.5zM513.9 427.9h1.4v1.4h-1.4zM532.1 415.9h1.5v1.5h-1.5zM611.7 442.6h1.4v1.4h-1.4zM619.3 458.6h1.5v1.5h-1.5zM617.4 455.8h1.7v1.7h-1.7zM568.0 388.3h1.1v1.1h-1.1zM601.4 450.5h1.5v1.5h-1.5zM588.3 414.2h1.8v1.8h-1.8zM614.1 458.6h1.1v1.1h-1.1zM544.1 411.9h1.6v1.6h-1.6zM587.6 401.8h1.3v1.3h-1.3zM558.3 445.1h1.6v1.6h-1.6zM602.3 450.1h1.7v1.7h-1.7zM550.9 429.9h1.6v1.6h-1.6zM677.7 460.1h1.1v1.1h-1.1zM664.7 475.9h1.8v1.8h-1.8zM671.3 463.9h1.7v1.7h-1.7zM660.5 481.9h1.4v1.4h-1.4zM672.6 474.9h1.3v1.3h-1.3zM671.0 478.0h1.3v1.3h-1.3zM682.7 424.3h1.5v1.5h-1.5zM677.9 467.4h1.8v1.8h-1.8zM658.0 453.1h1.1v1.1h-1.1zM651.3 439.7h1.2v1.2h-1.2zM657.9 425.3h2.0v2.0h-2.0zM658.8 448.3h1.7v1.7h-1.7zM653.6 448.3h1.9v1.9h-1.9zM651.7 448.2h1.3v1.3h-1.3zM676.8 448.7h1.2v1.2h-1.2zM656.6 463.3h1.9v1.9h-1.9zM664.8 417.1h1.9v1.9h-1.9zM680.0 460.4h1.0v1.0h-1.0zM682.7 442.6h1.6v1.6h-1.6zM655.3 448.8h1.8v1.8h-1.8zM675.6 429.1h1.4v1.4h-1.4zM682.5 432.0h1.7v1.7h-1.7zM662.2 430.6h1.0v1.0h-1.0zM680.1 470.7h1.5v1.5h-1.5zM673.7 439.5h1.7v1.7h-1.7zM660.1 426.7h1.9v1.9h-1.9zM664.3 463.4h1.1v1.1h-1.1zM662.8 430.4h2.0v2.0h-2.0zM664.7 424.4h1.3v1.3h-1.3zM657.2 464.6h1.5v1.5h-1.5zM659.1 474.0h1.7v1.7h-1.7zM673.1 427.3h1.5v1.5h-1.5zM656.9 465.8h1.8v1.8h-1.8zM681.3 441.6h1.1v1.1h-1.1zM649.6 430.9h1.8v1.8h-1.8zM663.0 469.7h1.9v1.9h-1.9zM670.4 481.5h1.2v1.2h-1.2zM657.2 466.9h1.4v1.4h-1.4zM653.6 445.8h1.1v1.1h-1.1zM654.5 470.4h1.1v1.1h-1.1zM668.2 429.0h1.2v1.2h-1.2zM681.1 438.0h1.3v1.3h-1.3zM670.8 460.9h1.1v1.1h-1.1zM659.0 453.9h1.3v1.3h-1.3zM666.3 423.6h2.0v2.0h-2.0zM682.0 457.4h1.5v1.5h-1.5zM661.5 435.6h1.7v1.7h-1.7zM667.7 435.1h1.1v1.1h-1.1zM651.7 435.3h1.9v1.9h-1.9zM660.8 460.3h1.7v1.7h-1.7zM680.1 432.3h1.3v1.3h-1.3zM655.6 422.6h1.7v1.7h-1.7zM670.5 435.6h1.5v1.5h-1.5zM662.3 478.1h1.8v1.8h-1.8zM651.4 466.6h1.3v1.3h-1.3zM655.5 466.8h1.9v1.9h-1.9zM653.3 453.6h1.4v1.4h-1.4zM657.6 444.3h1.9v1.9h-1.9zM662.2 419.9h1.7v1.7h-1.7zM679.3 441.7h1.2v1.2h-1.2zM682.3 455.5h1.2v1.2h-1.2zM672.0 475.0h1.9v1.9h-1.9zM668.3 433.8h1.3v1.3h-1.3zM682.6 439.4h1.8v1.8h-1.8zM680.1 431.0h1.9v1.9h-1.9zM675.8 422.4h1.5v1.5h-1.5zM670.0 434.0h1.8v1.8h-1.8zM664.4 434.6h2.0v2.0h-2.0zM675.5 457.8h1.5v1.5h-1.5zM672.9 440.6h1.6v1.6h-1.6zM653.5 441.9h1.7v1.7h-1.7zM662.3 434.3h1.2v1.2h-1.2zM655.8 448.7h1.7v1.7h-1.7zM657.5 442.8h1.5v1.5h-1.5zM668.3 422.3h1.7v1.7h-1.7zM674.1 425.0h1.7v1.7h-1.7zM653.5 455.3h1.9v1.9h-1.9zM658.8 425.6h1.2v1.2h-1.2zM675.3 448.8h1.8v1.8h-1.8zM675.9 464.2h1.4v1.4h-1.4zM667.9 433.9h1.4v1.4h-1.4zM672.5 458.8h1.2v1.2h-1.2zM662.5 461.4h1.8v1.8h-1.8zM680.8 442.6h1.9v1.9h-1.9zM670.7 460.7h1.0v1.0h-1.0zM663.0 435.5h1.4v1.4h-1.4zM650.9 442.4h1.9v1.9h-1.9zM671.0 434.9h1.1v1.1h-1.1zM681.3 452.2h1.6v1.6h-1.6zM661.2 422.6h1.8v1.8h-1.8zM669.1 420.7h1.9v1.9h-1.9zM662.1 420.2h1.7v1.7h-1.7zM682.4 449.5h1.2v1.2h-1.2zM681.2 437.8h1.5v1.5h-1.5zM656.4 448.5h1.8v1.8h-1.8zM656.9 430.8h2.0v2.0h-2.0zM657.2 446.0h1.3v1.3h-1.3zM656.4 425.0h1.0v1.0h-1.0zM653.7 446.2h2.0v2.0h-2.0zM677.2 423.2h1.7v1.7h-1.7zM683.4 456.0h1.9v1.9h-1.9zM666.7 487.9h1.3v1.3h-1.3zM669.9 484.6h1.5v1.5h-1.5zM665.3 484.4h1.0v1.0h-1.0zM661.1 481.7h1.8v1.8h-1.8zM657.4 485.7h1.7v1.7h-1.7zM659.1 490.1h1.2v1.2h-1.2zM661.7 473.4h1.3v1.3h-1.3zM648.6 483.4h1.7v1.7h-1.7zM667.1 472.3h1.6v1.6h-1.6zM655.0 482.4h1.8v1.8h-1.8zM656.7 475.8h1.3v1.3h-1.3zM657.7 484.1h1.1v1.1h-1.1zM667.6 481.8h1.2v1.2h-1.2zM662.7 468.1h1.6v1.6h-1.6zM659.9 473.3h1.3v1.3h-1.3zM665.0 492.3h1.7v1.7h-1.7zM666.3 477.6h1.3v1.3h-1.3zM660.8 478.4h1.2v1.2h-1.2zM669.6 486.1h1.7v1.7h-1.7zM673.1 491.1h1.3v1.3h-1.3zM654.6 472.7h1.6v1.6h-1.6zM667.7 487.4h1.6v1.6h-1.6zM662.3 475.3h1.4v1.4h-1.4zM666.0 481.0h1.2v1.2h-1.2zM661.6 485.4h1.5v1.5h-1.5zM651.7 468.2h1.1v1.1h-1.1zM669.2 478.5h1.2v1.2h-1.2zM667.2 475.6h1.0v1.0h-1.0zM674.8 491.1h1.5v1.5h-1.5zM662.0 481.0h1.5v1.5h-1.5zM656.3 489.0h1.1v1.1h-1.1zM659.2 485.4h1.7v1.7h-1.7zM668.1 489.0h1.2v1.2h-1.2zM670.2 487.2h1.8v1.8h-1.8zM664.6 476.3h1.2v1.2h-1.2zM677.5 485.8h1.7v1.7h-1.7zM672.9 469.5h1.1v1.1h-1.1zM669.9 491.5h1.2v1.2h-1.2zM668.0 486.5h1.3v1.3h-1.3zM656.7 468.9h1.7v1.7h-1.7zM666.0 467.0h1.1v1.1h-1.1zM668.1 487.8h1.7v1.7h-1.7zM671.1 477.4h1.7v1.7h-1.7zM666.9 485.8h1.5v1.5h-1.5zM672.1 479.3h1.2v1.2h-1.2zM658.1 469.5h1.2v1.2h-1.2zM662.6 479.0h1.8v1.8h-1.8zM659.3 482.7h1.1v1.1h-1.1zM669.5 488.6h1.4v1.4h-1.4zM650.4 479.6h1.7v1.7h-1.7zM656.8 485.0h1.0v1.0h-1.0zM670.6 489.8h1.4v1.4h-1.4zM672.4 480.0h1.4v1.4h-1.4zM664.3 480.5h1.2v1.2h-1.2zM663.6 476.8h1.4v1.4h-1.4zM660.2 478.6h1.2v1.2h-1.2zM661.0 469.3h1.3v1.3h-1.3zM658.5 485.1h1.3v1.3h-1.3zM668.1 480.1h1.1v1.1h-1.1zM659.7 477.6h1.0v1.0h-1.0zM671.7 485.5h1.6v1.6h-1.6zM667.1 483.1h1.1v1.1h-1.1zM655.3 483.5h1.3v1.3h-1.3zM665.8 474.1h1.6v1.6h-1.6zM652.5 480.7h1.4v1.4h-1.4zM659.9 480.2h1.0v1.0h-1.0zM670.3 479.0h1.1v1.1h-1.1zM667.6 476.6h1.7v1.7h-1.7zM677.2 473.9h1.0v1.0h-1.0zM668.1 481.4h1.1v1.1h-1.1zM780.3 451.7h0.9v0.9h-0.9zM755.8 488.7h1.3v1.3h-1.3zM677.1 449.0h1.4v1.4h-1.4zM688.8 448.3h1.1v1.1h-1.1zM678.2 470.1h1.4v1.4h-1.4zM710.8 523.4h1.4v1.4h-1.4zM752.9 476.5h0.9v0.9h-0.9zM666.7 477.2h1.1v1.1h-1.1zM731.7 486.5h0.8v0.8h-0.8zM690.6 475.2h1.4v1.4h-1.4zM701.8 404.2h1.0v1.0h-1.0zM672.4 436.7h1.4v1.4h-1.4zM747.0 459.9h0.9v0.9h-0.9zM749.9 479.8h0.9v0.9h-0.9zM671.8 497.2h0.9v0.9h-0.9zM770.1 374.7h1.3v1.3h-1.3zM754.6 474.8h1.0v1.0h-1.0zM676.1 431.8h1.2v1.2h-1.2zM790.0 500.0h1.1v1.1h-1.1zM736.8 471.6h0.9v0.9h-0.9zM778.1 429.7h1.3v1.3h-1.3zM684.8 488.3h1.0v1.0h-1.0zM686.5 422.6h1.0v1.0h-1.0zM697.4 514.0h1.1v1.1h-1.1zM721.9 368.2h1.0v1.0h-1.0zM683.8 452.8h1.2v1.2h-1.2zM719.5 483.1h1.1v1.1h-1.1zM779.2 389.6h1.4v1.4h-1.4zM962.7 678.4h0.9v0.9h-0.9zM960.4 678.2h0.8v0.8h-0.8zM964.1 678.9h1.4v1.4h-1.4zM964.7 679.8h1.3v1.3h-1.3zM961.8 678.0h1.3v1.3h-1.3zM961.0 678.4h1.1v1.1h-1.1zM964.4 676.6h0.9v0.9h-0.9zM963.6 678.3h0.9v0.9h-0.9zM965.4 676.6h0.9v0.9h-0.9zM962.8 677.9h1.2v1.2h-1.2zM963.0 678.7h1.0v1.0h-1.0zM963.7 678.5h1.2v1.2h-1.2zM896.6 831.6h1.3v1.3h-1.3zM890.3 829.2h1.6v1.6h-1.6zM899.5 839.0h2.0v2.0h-2.0zM890.7 831.9h1.8v1.8h-1.8zM900.9 843.2h1.6v1.6h-1.6zM901.5 855.0h2.0v2.0h-2.0zM897.6 848.9h2.0v2.0h-2.0zM890.6 827.6h1.2v1.2h-1.2zM901.3 851.9h1.1v1.1h-1.1zM889.4 829.9h1.6v1.6h-1.6zM899.8 852.6h1.7v1.7h-1.7zM874.0 855.6h1.3v1.3h-1.3zM872.6 856.2h1.2v1.2h-1.2zM883.3 858.3h1.6v1.6h-1.6zM896.6 840.7h1.2v1.2h-1.2zM895.6 839.1h1.4v1.4h-1.4zM905.0 837.4h1.1v1.1h-1.1zM898.9 832.5h1.0v1.0h-1.0zM904.6 830.9h1.6v1.6h-1.6zM888.1 846.5h1.5v1.5h-1.5zM888.4 830.1h1.7v1.7h-1.7zM886.9 829.9h1.1v1.1h-1.1zM891.3 846.0h1.1v1.1h-1.1zM903.9 838.0h1.5v1.5h-1.5zM905.4 848.5h1.3v1.3h-1.3zM901.1 833.8h1.6v1.6h-1.6zM898.2 836.4h1.1v1.1h-1.1zM899.5 848.9h1.4v1.4h-1.4zM904.4 840.8h1.7v1.7h-1.7zM904.0 847.9h1.1v1.1h-1.1zM896.6 834.8h1.5v1.5h-1.5zM890.5 815.9h1.7v1.7h-1.7zM894.6 859.8h1.1v1.1h-1.1zM893.7 832.9h1.4v1.4h-1.4zM795.7 918.1h1.5v1.5h-1.5zM880.4 906.1h1.5v1.5h-1.5zM924.7 933.0h1.6v1.6h-1.6zM873.9 889.6h1.4v1.4h-1.4zM945.2 940.6h1.3v1.3h-1.3zM887.9 903.6h1.7v1.7h-1.7zM958.7 904.9h0.9v0.9h-0.9zM865.5 832.0h1.2v1.2h-1.2zM914.0 901.8h1.2v1.2h-1.2zM861.9 938.3h0.9v0.9h-0.9zM920.4 906.2h1.3v1.3h-1.3zM996.3 901.7h1.2v1.2h-1.2zM844.4 834.2h1.6v1.6h-1.6zM914.5 947.4h1.4v1.4h-1.4zM876.3 852.8h1.1v1.1h-1.1zM1158.6 701.8h1.6v1.6h-1.6zM1165.8 716.0h2.1v2.1h-2.1zM1157.2 717.6h1.8v1.8h-1.8zM1164.9 707.0h1.4v1.4h-1.4zM1178.8 705.3h1.3v1.3h-1.3zM1161.9 715.4h1.6v1.6h-1.6zM1166.2 713.5h1.9v1.9h-1.9zM1173.8 711.9h2.0v2.0h-2.0zM1171.2 711.2h1.5v1.5h-1.5zM1164.2 708.3h2.0v2.0h-2.0zM1155.7 719.6h2.0v2.0h-2.0zM1155.1 712.1h2.3v2.3h-2.3zM1172.2 708.5h1.7v1.7h-1.7zM1176.2 711.8h2.4v2.4h-2.4zM1165.1 709.6h1.2v1.2h-1.2zM1165.3 723.8h1.6v1.6h-1.6zM1176.0 713.6h2.1v2.1h-2.1zM1156.1 710.0h2.1v2.1h-2.1zM1169.1 719.1h2.3v2.3h-2.3zM1160.5 712.5h2.4v2.4h-2.4zM1159.7 714.7h1.6v1.6h-1.6zM1153.5 716.5h2.0v2.0h-2.0zM1164.6 713.4h1.4v1.4h-1.4zM1169.9 708.5h2.4v2.4h-2.4zM1158.7 722.3h1.8v1.8h-1.8zM1159.2 718.5h2.0v2.0h-2.0zM1156.2 711.9h1.6v1.6h-1.6zM1170.1 712.5h1.9v1.9h-1.9zM1164.1 724.2h1.4v1.4h-1.4zM1167.9 705.0h1.4v1.4h-1.4zM1163.4 711.5h1.9v1.9h-1.9zM1177.8 716.6h2.0v2.0h-2.0zM1160.5 711.8h1.3v1.3h-1.3zM1185.7 706.0h1.9v1.9h-1.9zM1194.9 705.5h1.5v1.5h-1.5zM1185.9 704.7h2.0v2.0h-2.0zM1191.9 702.7h1.6v1.6h-1.6zM1193.1 705.5h2.0v2.0h-2.0zM1188.2 704.7h2.5v2.5h-2.5zM1192.4 707.2h1.4v1.4h-1.4zM1184.3 701.0h1.7v1.7h-1.7zM1195.9 704.6h1.7v1.7h-1.7zM1188.1 697.2h2.1v2.1h-2.1zM1192.8 704.1h1.8v1.8h-1.8zM1189.2 699.7h2.5v2.5h-2.5zM1191.5 699.7h2.4v2.4h-2.4zM1191.6 703.2h2.1v2.1h-2.1zM1196.5 703.9h2.2v2.2h-2.2zM1193.2 705.1h2.4v2.4h-2.4zM1189.3 708.9h2.5v2.5h-2.5zM1191.9 707.9h2.4v2.4h-2.4zM1189.6 692.5h2.1v2.1h-2.1zM1196.0 705.4h2.1v2.1h-2.1zM1225.5 723.8h1.1v1.1h-1.1zM1224.0 752.2h1.9v1.9h-1.9zM1228.8 715.1h1.3v1.3h-1.3zM1232.1 719.3h1.8v1.8h-1.8zM1225.2 737.8h1.5v1.5h-1.5zM1222.6 760.2h1.3v1.3h-1.3zM1228.0 733.1h1.6v1.6h-1.6zM1231.3 718.3h1.6v1.6h-1.6zM1219.1 738.1h1.0v1.0h-1.0zM1226.5 727.4h1.1v1.1h-1.1zM1211.2 745.5h1.9v1.9h-1.9zM1228.5 735.1h1.5v1.5h-1.5zM1223.8 758.3h1.1v1.1h-1.1zM1234.0 720.5h1.7v1.7h-1.7zM1224.9 725.9h1.3v1.3h-1.3zM1229.0 722.1h1.4v1.4h-1.4zM1214.5 730.0h1.3v1.3h-1.3zM1278.5 759.2h1.7v1.7h-1.7zM1169.1 848.3h1.7v1.7h-1.7zM1234.6 804.2h1.4v1.4h-1.4zM1234.4 737.5h1.7v1.7h-1.7zM1221.7 865.0h1.0v1.0h-1.0zM1175.5 910.9h1.5v1.5h-1.5zM1229.2 791.0h1.7v1.7h-1.7zM1117.3 715.7h1.4v1.4h-1.4zM1121.1 951.5h1.7v1.7h-1.7zM1060.1 809.9h1.6v1.6h-1.6zM1170.0 841.2h1.6v1.6h-1.6zM1181.0 788.1h1.7v1.7h-1.7zM1237.4 773.2h1.6v1.6h-1.6zM1082.7 803.7h1.0v1.0h-1.0zM1220.9 846.7h1.3v1.3h-1.3zM1194.2 809.3h1.4v1.4h-1.4zM1164.9 850.2h0.9v0.9h-0.9zM1116.3 910.5h1.2v1.2h-1.2zM1121.7 859.5h1.7v1.7h-1.7zM1150.8 843.3h1.1v1.1h-1.1zM1210.5 752.8h1.1v1.1h-1.1zM1165.5 852.1h1.7v1.7h-1.7zM1130.5 901.9h1.6v1.6h-1.6zM1310.5 881.1h1.2v1.2h-1.2zM1291.8 888.1h1.4v1.4h-1.4zM1304.3 898.2h1.4v1.4h-1.4zM1318.8 933.9h1.3v1.3h-1.3zM1211.2 834.4h1.6v1.6h-1.6zM1147.1 927.1h1.0v1.0h-1.0zM1268.1 787.9h1.3v1.3h-1.3zM1208.6 818.1h0.9v0.9h-0.9zM1311.4 825.9h1.2v1.2h-1.2zM1163.9 960.6h1.7v1.7h-1.7zM1260.8 869.1h1.4v1.4h-1.4zM1277.2 732.4h1.1v1.1h-1.1zM1309.8 837.8h1.0v1.0h-1.0zM1305.0 727.4h1.7v1.7h-1.7zM1194.3 684.8h1.8v1.8h-1.8zM1288.9 794.8h1.3v1.3h-1.3zM1165.1 841.4h1.7v1.7h-1.7z" fill="#2b94c6"/>
<path d="M525.8 75.7h1.4v1.4h-1.4zM532.2 76.2h1.4v1.4h-1.4zM559.2 83.2h1.1v1.1h-1.1zM556.3 74.3h1.3v1.3h-1.3zM547.3 97.6h1.8v1.8h-1.8zM553.9 74.9h1.9v1.9h-1.9zM550.1 111.9h2.0v2.0h-2.0zM537.5 131.7h1.3v1.3h-1.3zM544.5 111.3h1.9v1.9h-1.9zM537.8 124.3h1.6v1.6h-1.6zM536.0 140.3h1.7v1.7h-1.7zM542.1 115.7h1.8v1.8h-1.8zM547.8 114.2h1.9v1.9h-1.9zM539.3 147.2h1.9v1.9h-1.9zM536.1 148.4h1.3v1.3h-1.3zM538.0 125.5h1.7v1.7h-1.7zM577.5 74.4h1.3v1.3h-1.3zM572.9 76.7h1.1v1.1h-1.1zM579.6 65.0h1.3v1.3h-1.3zM587.8 56.7h1.6v1.6h-1.6zM592.1 61.3h1.1v1.1h-1.1zM507.9 161.2h1.3v1.3h-1.3zM530.1 170.3h1.1v1.1h-1.1zM531.0 177.6h1.4v1.4h-1.4zM524.7 178.4h1.8v1.8h-1.8zM530.3 173.0h1.1v1.1h-1.1zM516.1 154.0h1.6v1.6h-1.6zM520.9 149.3h1.9v1.9h-1.9zM533.6 178.9h1.3v1.3h-1.3zM584.4 224.1h1.5v1.5h-1.5zM570.3 178.6h1.1v1.1h-1.1zM567.5 179.1h2.0v2.0h-2.0zM579.9 179.7h1.7v1.7h-1.7zM567.9 185.3h1.9v1.9h-1.9zM587.6 205.7h1.0v1.0h-1.0zM588.1 195.3h1.8v1.8h-1.8zM583.6 215.6h1.6v1.6h-1.6zM565.2 189.7h1.4v1.4h-1.4zM587.7 195.4h1.6v1.6h-1.6zM577.8 172.4h1.9v1.9h-1.9zM589.8 206.7h1.3v1.3h-1.3zM587.7 196.3h1.1v1.1h-1.1zM566.5 197.1h1.6v1.6h-1.6zM567.8 199.4h1.4v1.4h-1.4zM574.7 174.8h1.4v1.4h-1.4zM568.2 202.2h2.0v2.0h-2.0zM588.8 203.5h1.5v1.5h-1.5zM565.5 181.4h2.0v2.0h-2.0zM568.6 211.2h1.4v1.4h-1.4zM570.3 177.0h1.6v1.6h-1.6zM575.6 172.5h1.7v1.7h-1.7zM583.1 215.1h1.6v1.6h-1.6zM571.4 223.9h1.6v1.6h-1.6zM577.7 175.8h1.3v1.3h-1.3zM568.6 251.4h1.3v1.3h-1.3zM576.5 235.2h1.6v1.6h-1.6zM569.4 231.5h2.0v2.0h-2.0zM569.6 254.6h1.2v1.2h-1.2zM570.0 232.9h2.0v2.0h-2.0zM572.7 255.5h1.6v1.6h-1.6zM572.2 229.6h1.8v1.8h-1.8zM570.5 255.7h1.1v1.1h-1.1zM490.0 199.0h1.9v1.9h-1.9zM490.5 200.6h1.1v1.1h-1.1zM490.7 213.5h1.9v1.9h-1.9zM505.0 225.9h1.5v1.5h-1.5zM500.8 229.5h1.7v1.7h-1.7zM492.9 198.6h1.6v1.6h-1.6zM493.1 196.8h1.6v1.6h-1.6zM502.7 225.2h1.1v1.1h-1.1zM503.1 229.8h1.1v1.1h-1.1zM501.6 242.2h1.3v1.3h-1.3zM516.1 261.2h1.8v1.8h-1.8zM507.4 230.9h1.5v1.5h-1.5zM513.3 243.0h1.1v1.1h-1.1zM515.5 247.1h1.4v1.4h-1.4zM505.9 229.9h1.1v1.1h-1.1zM505.9 231.3h1.5v1.5h-1.5zM480.9 85.3h1.9v1.9h-1.9zM479.4 89.1h2.0v2.0h-2.0zM479.3 89.1h1.5v1.5h-1.5zM735.4 263.2h1.6v1.6h-1.6zM733.2 236.2h1.4v1.4h-1.4zM736.7 234.3h1.7v1.7h-1.7zM737.0 244.2h1.6v1.6h-1.6zM733.4 252.9h1.1v1.1h-1.1zM732.3 250.9h1.3v1.3h-1.3zM732.3 235.9h1.7v1.7h-1.7zM736.4 258.8h1.9v1.9h-1.9zM738.2 245.0h1.3v1.3h-1.3zM732.8 243.9h1.5v1.5h-1.5zM733.7 233.8h1.3v1.3h-1.3zM736.8 256.2h1.2v1.2h-1.2zM731.0 240.7h1.7v1.7h-1.7zM735.7 259.4h1.7v1.7h-1.7zM729.1 244.2h1.9v1.9h-1.9zM738.9 241.7h1.9v1.9h-1.9zM736.3 235.4h1.3v1.3h-1.3zM735.3 258.3h1.3v1.3h-1.3zM736.6 243.4h1.6v1.6h-1.6zM736.0 236.8h1.1v1.1h-1.1zM738.7 235.3h1.1v1.1h-1.1zM737.7 238.7h1.1v1.1h-1.1zM736.3 260.0h1.3v1.3h-1.3zM735.9 232.7h1.5v1.5h-1.5zM735.1 259.5h1.4v1.4h-1.4zM735.6 238.2h1.8v1.8h-1.8zM712.6 298.2h1.0v1.0h-1.0zM712.0 283.4h1.9v1.9h-1.9zM706.7 281.3h1.9v1.9h-1.9zM710.1 280.8h1.7v1.7h-1.7zM712.2 285.4h1.7v1.7h-1.7zM710.2 283.2h1.5v1.5h-1.5zM713.4 294.3h1.6v1.6h-1.6zM713.4 289.0h1.4v1.4h-1.4zM715.1 291.1h1.3v1.3h-1.3zM710.6 300.3h1.9v1.9h-1.9zM707.1 276.3h1.5v1.5h-1.5zM718.5 301.4h1.9v1.9h-1.9zM714.3 282.4h1.5v1.5h-1.5zM705.3 293.8h1.4v1.4h-1.4zM709.6 304.9h1.7v1.7h-1.7zM710.7 284.6h2.0v2.0h-2.0zM707.9 294.5h1.2v1.2h-1.2zM716.2 297.3h2.0v2.0h-2.0zM711.1 278.6h1.0v1.0h-1.0zM709.2 301.5h1.5v1.5h-1.5zM713.0 308.5h1.2v1.2h-1.2zM706.8 282.8h1.6v1.6h-1.6zM708.8 278.4h1.2v1.2h-1.2zM717.1 301.6h1.9v1.9h-1.9zM708.7 294.8h1.6v1.6h-1.6zM712.0 300.6h1.3v1.3h-1.3zM709.8 283.6h1.4v1.4h-1.4zM716.2 309.1h1.6v1.6h-1.6zM708.3 279.9h1.7v1.7h-1.7zM707.3 286.6h2.0v2.0h-2.0zM725.0 296.2h1.4v1.4h-1.4zM727.1 307.4h1.2v1.2h-1.2zM723.9 297.6h1.1v1.1h-1.1zM724.2 292.8h1.2v1.2h-1.2zM724.2 306.7h1.2v1.2h-1.2zM724.2 311.2h1.1v1.1h-1.1zM723.8 296.7h1.7v1.7h-1.7zM725.4 310.9h1.6v1.6h-1.6zM723.9 295.9h1.8v1.8h-1.8zM723.7 285.7h1.3v1.3h-1.3zM724.7 320.3h1.2v1.2h-1.2zM699.7 325.8h1.6v1.6h-1.6zM697.0 324.1h1.6v1.6h-1.6zM699.4 322.5h1.0v1.0h-1.0zM702.3 343.5h1.7v1.7h-1.7zM696.4 330.2h1.3v1.3h-1.3zM703.9 340.0h1.5v1.5h-1.5zM696.2 340.7h1.4v1.4h-1.4zM702.0 330.2h1.4v1.4h-1.4zM702.9 341.5h1.9v1.9h-1.9zM701.5 333.4h1.4v1.4h-1.4zM696.0 325.8h1.6v1.6h-1.6zM700.4 328.9h1.5v1.5h-1.5zM701.5 337.8h1.3v1.3h-1.3zM696.7 326.3h1.6v1.6h-1.6zM701.3 341.9h1.5v1.5h-1.5zM698.2 325.8h1.4v1.4h-1.4zM689.8 391.0h1.0v1.0h-1.0zM690.3 370.2h1.2v1.2h-1.2zM688.3 356.2h1.0v1.0h-1.0zM687.1 404.0h1.6v1.6h-1.6zM689.3 375.6h1.4v1.4h-1.4zM686.3 421.9h1.3v1.3h-1.3zM687.9 406.4h2.0v2.0h-2.0zM685.0 390.6h1.4v1.4h-1.4zM691.3 379.5h1.6v1.6h-1.6zM689.8 385.3h1.9v1.9h-1.9zM684.4 400.9h1.1v1.1h-1.1zM689.9 388.1h1.3v1.3h-1.3zM688.0 374.6h1.5v1.5h-1.5zM685.9 398.1h1.8v1.8h-1.8zM686.3 405.7h1.5v1.5h-1.5zM689.1 364.2h1.9v1.9h-1.9zM686.7 383.5h1.3v1.3h-1.3zM686.6 413.8h1.2v1.2h-1.2zM689.6 367.3h1.2v1.2h-1.2zM704.0 169.4h1.0v1.0h-1.0zM684.0 164.6h1.6v1.6h-1.6zM667.8 128.9h1.3v1.3h-1.3zM687.5 162.2h1.0v1.0h-1.0zM695.5 115.6h1.2v1.2h-1.2zM699.9 184.4h1.5v1.5h-1.5zM712.2 190.9h1.7v1.7h-1.7zM693.4 155.6h1.7v1.7h-1.7zM692.6 124.8h1.2v1.2h-1.2zM667.9 123.9h0.9v0.9h-0.9zM681.7 168.6h1.7v1.7h-1.7zM705.1 198.9h0.9v0.9h-0.9zM679.3 116.7h1.3v1.3h-1.3zM699.3 157.2h1.3v1.3h-1.3zM678.2 140.2h1.2v1.2h-1.2zM681.2 118.6h1.2v1.2h-1.2zM669.3 125.1h1.6v1.6h-1.6zM710.8 191.2h1.6v1.6h-1.6zM700.2 155.9h1.1v1.1h-1.1zM702.7 204.7h1.5v1.5h-1.5zM692.5 174.3h1.0v1.0h-1.0zM700.7 141.1h1.1v1.1h-1.1zM714.2 210.6h1.3v1.3h-1.3zM669.9 123.2h1.5v1.5h-1.5zM687.5 148.3h1.6v1.6h-1.6zM700.3 167.3h1.6v1.6h-1.6zM661.7 137.3h1.2v1.2h-1.2zM721.2 195.5h1.6v1.6h-1.6zM693.3 179.5h1.3v1.3h-1.3zM812.2 317.1h1.0v1.0h-1.0zM731.7 306.4h1.2v1.2h-1.2zM824.2 313.0h1.5v1.5h-1.5zM757.8 316.4h1.0v1.0h-1.0zM716.8 310.8h1.1v1.1h-1.1zM779.5 263.7h1.5v1.5h-1.5zM739.4 374.8h1.1v1.1h-1.1zM804.5 225.0h1.0v1.0h-1.0zM683.9 261.7h1.0v1.0h-1.0zM771.7 294.7h1.0v1.0h-1.0zM807.1 247.3h1.0v1.0h-1.0zM800.4 227.7h0.9v0.9h-0.9zM707.8 288.8h1.0v1.0h-1.0zM974.2 310.9h1.3v1.3h-1.3zM1007.4 287.9h1.5v1.5h-1.5zM1010.9 314.4h1.3v1.3h-1.3zM1041.1 304.0h1.2v1.2h-1.2zM985.8 337.0h1.6v1.6h-1.6zM1005.5 286.4h0.9v0.9h-0.9zM1015.2 279.2h1.0v1.0h-1.0zM1046.3 336.7h1.7v1.7h-1.7zM1000.4 282.3h1.7v1.7h-1.7zM1018.6 254.3h1.8v1.8h-1.8zM1037.7 253.3h1.3v1.3h-1.3zM1021.2 301.0h1.8v1.8h-1.8zM1003.8 259.0h1.0v1.0h-1.0zM979.9 317.4h1.0v1.0h-1.0zM1001.3 304.5h0.9v0.9h-0.9zM981.9 246.2h1.0v1.0h-1.0zM954.2 281.3h1.1v1.1h-1.1zM965.2 319.0h1.4v1.4h-1.4zM1018.0 348.4h1.8v1.8h-1.8zM989.3 329.5h1.0v1.0h-1.0zM1040.4 311.8h1.1v1.1h-1.1zM1004.8 308.1h1.3v1.3h-1.3zM1013.3 242.9h1.3v1.3h-1.3zM972.2 339.9h1.7v1.7h-1.7zM1016.8 307.3h1.6v1.6h-1.6zM1018.7 316.5h1.0v1.0h-1.0zM1009.9 330.7h1.2v1.2h-1.2zM1019.0 361.1h1.4v1.4h-1.4zM978.0 330.7h1.7v1.7h-1.7zM989.1 403.9h1.5v1.5h-1.5zM981.8 331.8h0.9v0.9h-0.9zM1020.8 383.4h1.1v1.1h-1.1zM1017.4 362.3h1.7v1.7h-1.7zM1010.0 319.9h1.0v1.0h-1.0zM984.3 372.4h1.7v1.7h-1.7zM1009.3 330.7h0.9v0.9h-0.9zM1008.1 398.4h1.3v1.3h-1.3zM966.4 370.8h1.6v1.6h-1.6zM989.1 351.7h0.9v0.9h-0.9zM1006.4 399.2h1.0v1.0h-1.0zM954.8 362.5h1.5v1.5h-1.5zM980.8 355.1h1.0v1.0h-1.0zM944.2 369.9h1.3v1.3h-1.3zM955.4 368.3h1.2v1.2h-1.2zM991.3 321.2h1.7v1.7h-1.7zM960.8 362.2h1.4v1.4h-1.4zM1018.2 372.6h0.9v0.9h-0.9zM1011.3 366.5h1.5v1.5h-1.5zM1012.3 322.3h1.4v1.4h-1.4zM1009.6 352.7h1.3v1.3h-1.3zM1004.0 352.0h1.0v1.0h-1.0zM1000.9 336.6h1.4v1.4h-1.4zM995.0 325.5h1.0v1.0h-1.0zM1013.4 366.1h0.9v0.9h-0.9zM978.9 394.5h1.0v1.0h-1.0zM1147.1 577.8h1.1v1.1h-1.1zM1148.0 576.7h2.0v2.0h-2.0zM1144.3 575.9h1.2v1.2h-1.2zM1146.2 572.8h1.4v1.4h-1.4zM1141.9 571.0h1.7v1.7h-1.7zM1141.5 572.5h1.3v1.3h-1.3zM1142.2 574.8h1.1v1.1h-1.1zM1145.4 567.4h1.1v1.1h-1.1zM1140.7 576.0h1.7v1.7h-1.7zM1142.3 572.8h1.7v1.7h-1.7zM1139.6 574.1h1.7v1.7h-1.7zM1144.9 577.4h1.3v1.3h-1.3zM1141.0 568.5h1.3v1.3h-1.3zM1138.4 568.9h1.4v1.4h-1.4zM1138.3 576.9h1.6v1.6h-1.6zM1150.1 636.0h1.3v1.3h-1.3zM1130.8 518.0h1.2v1.2h-1.2zM1170.2 494.2h1.6v1.6h-1.6zM1137.3 641.1h1.6v1.6h-1.6zM1155.5 550.1h1.4v1.4h-1.4zM1109.1 529.1h1.4v1.4h-1.4zM1180.1 527.7h1.5v1.5h-1.5zM1177.8 555.9h1.3v1.3h-1.3zM1167.3 556.3h1.5v1.5h-1.5zM1161.0 634.9h1.3v1.3h-1.3zM1175.6 538.2h1.4v1.4h-1.4zM1096.0 538.6h1.6v1.6h-1.6zM1148.1 558.0h1.8v1.8h-1.8zM1128.5 514.4h1.0v1.0h-1.0zM1147.9 554.2h1.6v1.6h-1.6zM1142.1 542.2h0.9v0.9h-0.9zM1110.5 556.1h1.6v1.6h-1.6zM1121.9 621.8h1.6v1.6h-1.6zM1147.9 512.2h1.5v1.5h-1.5zM1105.2 529.4h1.7v1.7h-1.7zM1118.1 549.3h1.2v1.2h-1.2zM1146.3 531.3h1.8v1.8h-1.8zM1163.5 522.4h1.1v1.1h-1.1zM1108.1 552.6h1.6v1.6h-1.6zM1097.0 558.6h1.7v1.7h-1.7zM1069.2 562.4h0.9v0.9h-0.9zM1116.0 506.2h1.7v1.7h-1.7zM1159.0 550.8h1.3v1.3h-1.3zM1166.5 498.4h1.0v1.0h-1.0zM1143.6 502.1h1.2v1.2h-1.2zM1126.1 638.5h1.3v1.3h-1.3zM1207.8 536.1h0.9v0.9h-0.9zM582.9 402.5h1.7v1.7h-1.7zM575.4 445.5h1.5v1.5h-1.5zM630.5 451.8h1.2v1.2h-1.2zM619.7 448.4h1.0v1.0h-1.0zM621.2 437.1h1.8v1.8h-1.8zM595.4 453.1h1.0v1.0h-1.0zM625.5 445.6h1.0v1.0h-1.0zM627.1 459.2h1.8v1.8h-1.8zM602.2 431.4h1.1v1.1h-1.1zM574.9 412.1h1.6v1.6h-1.6zM609.5 451.7h1.0v1.0h-1.0zM609.4 453.7h1.7v1.7h-1.7zM512.9 416.2h1.8v1.8h-1.8zM552.7 442.7h1.3v1.3h-1.3zM630.8 458.9h1.6v1.6h-1.6zM595.7 453.7h1.2v1.2h-1.2zM622.7 454.1h1.8v1.8h-1.8zM621.0 444.4h1.0v1.0h-1.0zM578.3 437.1h1.7v1.7h-1.7zM596.8 433.2h1.5v1.5h-1.5zM575.5 400.9h1.6v1.6h-1.6zM577.5 447.6h1.4v1.4h-1.4zM574.5 417.9h1.6v1.6h-1.6zM591.6 456.6h1.2v1.2h-1.2zM630.4 452.0h1.3v1.3h-1.3zM544.1 384.7h1.1v1.1h-1.1zM597.9 433.8h1.3v1.3h-1.3zM572.6 402.9h1.7v1.7h-1.7zM590.8 453.0h1.1v1.1h-1.1zM592.1 420.2h1.2v1.2h-1.2zM550.0 447.2h1.6v1.6h-1.6zM613.1 426.9h1.7v1.7h-1.7zM514.5 436.4h1.5v1.5h-1.5zM630.9 446.6h1.3v1.3h-1.3zM599.0 415.7h1.5v1.5h-1.5zM519.7 420.8h1.7v1.7h-1.7zM609.6 445.6h1.3v1.3h-1.3zM626.6 447.6h1.7v1.7h-1.7zM582.5 429.0h1.1v1.1h-1.1zM594.2 428.1h1.7v1.7h-1.7zM533.5 428.3h1.8v1.8h-1.8zM544.1 432.3h1.5v1.5h-1.5zM664.5 450.5h1.1v1.1h-1.1zM663.9 424.5h1.3v1.3h-1.3zM663.1 427.6h1.9v1.9h-1.9zM663.0 467.9h1.6v1.6h-1.6zM673.0 425.2h1.4v1.4h-1.4zM662.9 471.3h1.9v1.9h-1.9zM664.7 462.2h1.1v1.1h-1.1zM680.8 435.9h1.5v1.5h-1.5zM674.4 454.2h1.9v1.9h-1.9zM671.5 480.9h1.9v1.9h-1.9zM673.4 478.2h2.0v2.0h-2.0zM664.6 456.1h1.9v1.9h-1.9zM673.2 465.2h1.2v1.2h-1.2zM665.2 479.0h1.0v1.0h-1.0zM676.5 443.3h1.9v1.9h-1.9zM659.4 458.9h1.7v1.7h-1.7zM663.3 423.7h1.8v1.8h-1.8zM667.0 443.5h1.3v1.3h-1.3zM673.7 418.0h2.0v2.0h-2.0zM668.0 445.2h1.9v1.9h-1.9zM652.0 425.9h1.0v1.0h-1.0zM668.7 451.2h1.9v1.9h-1.9zM668.9 458.0h1.6v1.6h-1.6zM661.2 434.9h1.5v1.5h-1.5zM681.1 449.5h1.6v1.6h-1.6zM680.2 444.8h1.3v1.3h-1.3zM651.3 449.8h1.2v1.2h-1.2zM657.9 464.5h1.6v1.6h-1.6zM653.2 455.5h1.3v1.3h-1.3zM662.4 466.3h1.1v1.1h-1.1zM666.1 458.1h1.0v1.0h-1.0zM674.5 455.0h1.8v1.8h-1.8zM652.9 430.6h1.2v1.2h-1.2zM666.6 468.6h1.1v1.1h-1.1zM659.8 451.1h1.1v1.1h-1.1zM661.3 474.9h1.5v1.5h-1.5zM659.5 439.9h1.8v1.8h-1.8zM658.7 442.2h1.5v1.5h-1.5zM665.7 470.8h1.1v1.1h-1.1zM659.9 440.0h1.2v1.2h-1.2zM674.3 464.6h1.9v1.9h-1.9zM671.6 459.0h1.9v1.9h-1.9zM676.1 453.2h1.6v1.6h-1.6zM671.8 460.1h1.3v1.3h-1.3zM670.1 455.2h1.8v1.8h-1.8zM680.0 437.1h1.5v1.5h-1.5zM664.6 428.8h1.8v1.8h-1.8zM676.2 475.6h1.2v1.2h-1.2zM668.5 455.1h1.1v1.1h-1.1zM667.6 464.8h1.8v1.8h-1.8zM650.9 441.6h2.0v2.0h-2.0zM677.8 455.0h1.6v1.6h-1.6zM666.7 435.9h1.0v1.0h-1.0zM659.1 438.4h1.2v1.2h-1.2zM671.4 441.8h1.7v1.7h-1.7zM659.3 458.8h1.8v1.8h-1.8zM668.6 446.4h1.0v1.0h-1.0zM667.9 478.4h1.4v1.4h-1.4zM658.8 465.3h1.8v1.8h-1.8zM661.6 459.9h1.0v1.0h-1.0zM668.8 460.3h1.8v1.8h-1.8zM676.7 417.6h1.7v1.7h-1.7zM673.6 440.2h1.6v1.6h-1.6zM678.2 473.6h1.1v1.1h-1.1zM667.1 427.8h1.9v1.9h-1.9zM669.0 422.9h1.8v1.8h-1.8zM681.0 475.8h1.6v1.6h-1.6zM665.6 450.3h1.6v1.6h-1.6zM672.1 415.8h1.9v1.9h-1.9zM663.9 459.2h1.5v1.5h-1.5zM651.4 472.1h1.8v1.8h-1.8zM669.6 455.8h1.5v1.5h-1.5zM673.4 452.1h1.1v1.1h-1.1zM676.0 469.6h1.4v1.4h-1.4zM655.6 435.6h1.9v1.9h-1.9zM659.4 482.5h1.5v1.5h-1.5zM665.2 465.0h1.6v1.6h-1.6zM665.0 453.7h1.8v1.8h-1.8zM663.9 415.2h1.8v1.8h-1.8zM665.3 452.1h1.4v1.4h-1.4zM675.0 428.0h1.7v1.7h-1.7zM663.0 477.0h1.7v1.7h-1.7zM670.8 488.4h1.6v1.6h-1.6zM659.5 484.9h1.4v1.4h-1.4zM672.3 480.6h1.2v1.2h-1.2zM666.6 474.3h1.7v1.7h-1.7zM659.1 481.3h1.6v1.6h-1.6zM661.4 481.3h1.2v1.2h-1.2zM671.5 473.8h1.7v1.7h-1.7zM669.0 484.6h1.7v1.7h-1.7zM662.7 472.8h1.3v1.3h-1.3zM667.3 484.6h1.1v1.1h-1.1zM660.9 490.4h1.4v1.4h-1.4zM658.8 475.3h1.3v1.3h-1.3zM669.6 477.2h1.1v1.1h-1.1zM662.8 493.5h1.1v1.1h-1.1zM667.7 484.3h1.7v1.7h-1.7zM660.3 480.6h1.6v1.6h-1.6zM667.6 485.4h1.5v1.5h-1.5zM654.3 479.9h1.1v1.1h-1.1zM665.8 472.8h1.7v1.7h-1.7zM667.9 484.5h1.1v1.1h-1.1zM658.3 474.3h1.7v1.7h-1.7zM658.9 482.3h1.7v1.7h-1.7zM668.8 492.7h1.1v1.1h-1.1zM669.8 480.5h1.5v1.5h-1.5zM663.9 497.8h1.2v1.2h-1.2zM659.6 468.6h1.1v1.1h-1.1zM671.2 479.5h1.3v1.3h-1.3zM662.4 483.1h1.8v1.8h-1.8zM657.0 493.4h1.6v1.6h-1.6zM665.6 485.4h1.3v1.3h-1.3zM666.5 473.5h1.5v1.5h-1.5zM652.4 487.8h1.5v1.5h-1.5zM652.2 485.1h1.3v1.3h-1.3zM675.0 475.5h1.6v1.6h-1.6zM666.8 493.5h1.2v1.2h-1.2zM661.2 484.1h1.7v1.7h-1.7zM660.6 474.4h1.2v1.2h-1.2zM738.5 556.5h1.1v1.1h-1.1zM666.0 448.7h1.1v1.1h-1.1zM722.8 556.2h0.9v0.9h-0.9zM756.1 425.1h1.2v1.2h-1.2zM754.7 442.4h1.4v1.4h-1.4zM752.0 490.7h1.4v1.4h-1.4zM705.8 547.8h1.2v1.2h-1.2zM701.5 396.2h1.2v1.2h-1.2zM697.1 515.6h1.0v1.0h-1.0zM791.3 460.8h1.3v1.3h-1.3zM706.1 476.3h1.4v1.4h-1.4zM739.9 579.8h1.2v1.2h-1.2zM734.4 487.9h1.4v1.4h-1.4zM738.9 399.1h1.2v1.2h-1.2zM712.7 425.0h0.8v0.8h-0.8zM672.7 477.3h1.0v1.0h-1.0zM693.1 406.1h0.9v0.9h-0.9zM735.6 528.3h1.1v1.1h-1.1zM753.1 476.7h1.0v1.0h-1.0zM765.9 452.7h1.5v1.5h-1.5zM688.2 424.2h0.9v0.9h-0.9zM729.4 386.2h1.2v1.2h-1.2zM705.5 425.6h1.3v1.3h-1.3zM683.2 448.4h1.5v1.5h-1.5zM764.1 368.7h0.9v0.9h-0.9zM716.9 443.8h0.9v0.9h-0.9zM748.7 575.8h1.0v1.0h-1.0zM736.4 400.6h1.1v1.1h-1.1zM794.3 467.2h1.1v1.1h-1.1zM745.6 440.3h1.1v1.1h-1.1zM756.7 491.7h0.9v0.9h-0.9zM708.4 494.4h1.0v1.0h-1.0zM716.2 426.8h1.3v1.3h-1.3zM740.5 519.0h0.8v0.8h-0.8zM717.2 469.2h1.5v1.5h-1.5zM959.8 680.1h1.1v1.1h-1.1zM962.4 679.6h1.3v1.3h-1.3zM962.7 678.5h1.4v1.4h-1.4zM961.9 678.2h1.1v1.1h-1.1zM959.1 675.4h1.0v1.0h-1.0zM958.7 678.7h1.1v1.1h-1.1zM962.3 678.1h1.4v1.4h-1.4zM958.8 677.2h1.0v1.0h-1.0zM965.0 678.6h1.3v1.3h-1.3zM903.0 852.7h1.5v1.5h-1.5zM897.2 848.9h1.5v1.5h-1.5zM887.4 823.5h1.9v1.9h-1.9zM891.5 836.8h1.2v1.2h-1.2zM889.5 828.1h1.0v1.0h-1.0zM877.5 859.5h1.4v1.4h-1.4zM873.1 853.3h1.0v1.0h-1.0zM875.8 852.1h1.7v1.7h-1.7zM877.2 853.6h1.9v1.9h-1.9zM876.8 853.6h1.0v1.0h-1.0zM888.4 846.6h1.7v1.7h-1.7zM905.3 822.7h1.1v1.1h-1.1zM897.1 830.7h1.2v1.2h-1.2zM901.2 833.7h1.4v1.4h-1.4zM898.9 834.3h1.1v1.1h-1.1zM891.7 846.2h1.0v1.0h-1.0zM899.4 856.2h1.2v1.2h-1.2zM896.7 838.5h1.5v1.5h-1.5zM887.4 830.2h1.1v1.1h-1.1zM891.9 829.8h1.2v1.2h-1.2zM901.8 814.8h1.2v1.2h-1.2zM904.1 842.7h1.8v1.8h-1.8zM894.2 842.5h1.4v1.4h-1.4zM903.7 820.8h1.1v1.1h-1.1zM893.8 851.7h1.2v1.2h-1.2zM897.7 836.0h1.7v1.7h-1.7zM895.4 832.3h1.1v1.1h-1.1zM894.0 845.0h1.4v1.4h-1.4zM888.9 844.1h1.5v1.5h-1.5zM904.3 859.6h1.5v1.5h-1.5zM902.8 851.6h1.6v1.6h-1.6zM891.5 829.4h1.1v1.1h-1.1zM914.9 905.7h1.3v1.3h-1.3zM863.6 979.1h1.1v1.1h-1.1zM904.5 891.0h1.6v1.6h-1.6zM796.7 896.7h1.0v1.0h-1.0zM957.4 796.1h1.0v1.0h-1.0zM857.8 776.4h1.5v1.5h-1.5zM917.2 901.5h1.8v1.8h-1.8zM834.8 851.9h1.5v1.5h-1.5zM877.1 898.1h1.4v1.4h-1.4zM892.8 945.5h1.3v1.3h-1.3zM949.0 938.3h1.6v1.6h-1.6zM882.9 813.7h0.9v0.9h-0.9zM768.8 860.8h1.7v1.7h-1.7zM850.4 885.5h1.2v1.2h-1.2zM808.2 836.5h1.5v1.5h-1.5zM838.2 980.4h0.9v0.9h-0.9zM997.9 861.8h0.9v0.9h-0.9zM817.1 976.9h1.7v1.7h-1.7zM894.0 800.7h1.4v1.4h-1.4zM865.6 880.5h1.5v1.5h-1.5zM884.1 822.4h0.9v0.9h-0.9zM869.9 938.7h1.0v1.0h-1.0zM792.2 845.4h1.5v1.5h-1.5zM850.4 893.0h1.2v1.2h-1.2zM850.4 867.9h1.7v1.7h-1.7zM892.6 934.0h1.2v1.2h-1.2zM919.1 798.8h1.2v1.2h-1.2zM859.0 870.6h1.2v1.2h-1.2zM913.9 881.6h1.0v1.0h-1.0zM1201.1 826.8h1.0v1.0h-1.0zM1200.6 828.2h1.4v1.4h-1.4zM1195.8 832.1h1.6v1.6h-1.6zM1194.7 835.5h1.5v1.5h-1.5zM1195.8 831.8h1.7v1.7h-1.7zM1194.9 831.1h1.4v1.4h-1.4zM1200.0 832.2h1.7v1.7h-1.7zM1195.7 826.9h1.0v1.0h-1.0zM1196.6 828.1h1.3v1.3h-1.3zM1191.9 835.1h1.0v1.0h-1.0zM1196.4 827.6h2.0v2.0h-2.0zM1157.0 709.8h1.7v1.7h-1.7zM1167.6 713.2h1.9v1.9h-1.9zM1164.4 709.3h2.2v2.2h-2.2zM1161.3 707.0h2.3v2.3h-2.3zM1157.4 704.7h2.4v2.4h-2.4zM1164.6 702.0h2.1v2.1h-2.1zM1167.3 721.7h2.1v2.1h-2.1zM1166.2 707.7h1.7v1.7h-1.7zM1169.1 703.2h2.2v2.2h-2.2zM1173.6 714.7h1.3v1.3h-1.3zM1161.3 706.6h1.6v1.6h-1.6zM1174.7 719.3h1.3v1.3h-1.3zM1163.6 705.8h1.9v1.9h-1.9zM1159.8 716.9h1.3v1.3h-1.3zM1162.9 706.2h1.4v1.4h-1.4zM1167.9 715.3h2.4v2.4h-2.4zM1172.4 710.0h1.9v1.9h-1.9zM1163.0 707.6h1.9v1.9h-1.9zM1198.0 701.6h1.5v1.5h-1.5zM1196.5 702.8h2.3v2.3h-2.3zM1194.1 694.7h2.3v2.3h-2.3zM1192.9 700.5h1.6v1.6h-1.6zM1195.7 693.7h1.9v1.9h-1.9zM1186.2 705.7h2.5v2.5h-2.5zM1190.0 702.7h2.2v2.2h-2.2zM1194.0 703.7h2.2v2.2h-2.2zM1188.7 701.2h2.4v2.4h-2.4zM1196.7 707.8h1.9v1.9h-1.9zM1191.1 700.8h2.3v2.3h-2.3zM1191.9 702.7h2.4v2.4h-2.4zM1187.4 703.9h1.7v1.7h-1.7zM1191.7 708.3h2.0v2.0h-2.0zM1192.4 707.1h1.7v1.7h-1.7zM1186.7 697.3h1.9v1.9h-1.9zM1195.9 707.6h2.4v2.4h-2.4zM1192.1 701.7h2.1v2.1h-2.1zM1239.9 720.8h1.3v1.3h-1.3zM1219.6 722.7h1.9v1.9h-1.9zM1221.2 751.0h1.2v1.2h-1.2zM1221.7 738.2h1.4v1.4h-1.4zM1220.8 757.6h1.2v1.2h-1.2zM1220.2 759.6h1.1v1.1h-1.1zM1229.6 717.2h1.6v1.6h-1.6zM1232.2 747.4h1.3v1.3h-1.3zM1229.7 722.8h1.5v1.5h-1.5zM1210.0 750.0h1.9v1.9h-1.9zM1223.4 715.9h1.1v1.1h-1.1zM1224.6 732.2h1.3v1.3h-1.3zM1222.9 745.2h2.0v2.0h-2.0zM1223.4 719.5h1.2v1.2h-1.2zM1225.6 742.7h1.8v1.8h-1.8zM1227.9 728.6h1.4v1.4h-1.4zM1224.9 722.0h1.6v1.6h-1.6zM1218.6 738.6h1.9v1.9h-1.9zM1170.3 906.8h1.2v1.2h-1.2zM1210.3 988.0h1.0v1.0h-1.0zM1117.4 979.4h1.1v1.1h-1.1zM1063.9 942.6h1.1v1.1h-1.1zM1196.8 804.7h1.6v1.6h-1.6zM1141.6 904.7h1.2v1.2h-1.2zM1170.2 869.3h1.1v1.1h-1.1zM1142.2 956.1h1.5v1.5h-1.5zM1189.4 881.3h1.6v1.6h-1.6zM1124.3 784.8h1.6v1.6h-1.6zM1232.6 766.3h1.3v1.3h-1.3zM1230.9 836.9h1.3v1.3h-1.3zM1148.2 769.0h1.2v1.2h-1.2zM1093.9 792.8h1.1v1.1h-1.1zM1244.7 817.9h1.1v1.1h-1.1zM1171.3 805.8h1.2v1.2h-1.2zM1129.2 889.1h1.1v1.1h-1.1zM1175.6 949.7h1.2v1.2h-1.2zM1336.0 859.3h1.5v1.5h-1.5zM1170.5 905.8h1.6v1.6h-1.6zM1274.4 904.3h1.6v1.6h-1.6zM1280.1 815.9h1.1v1.1h-1.1zM1315.0 790.5h1.2v1.2h-1.2zM1168.3 890.4h1.0v1.0h-1.0zM1288.0 699.4h1.4v1.4h-1.4zM1105.0 830.0h1.5v1.5h-1.5zM1162.3 802.6h1.5v1.5h-1.5zM1167.1 841.8h1.1v1.1h-1.1zM1154.1 831.5h1.6v1.6h-1.6zM1242.9 723.7h1.6v1.6h-1.6zM1115.3 863.8h1.1v1.1h-1.1zM1327.8 856.5h1.4v1.4h-1.4zM1285.5 745.3h1.8v1.8h-1.8zM1235.3 940.1h1.8v1.8h-1.8zM1235.9 949.1h1.2v1.2h-1.2zM1139.3 819.3h1.4v1.4h-1.4zM1208.9 815.9h1.4v1.4h-1.4zM1237.4 822.7h1.1v1.1h-1.1zM1200.2 864.7h1.6v1.6h-1.6zM1211.7 934.5h1.5v1.5h-1.5zM728.0 1183.0h2.0v2.0h-2.0zM1289.0 137.0h2.4v2.4h-2.4zM1312.0 146.0h2.4v2.4h-2.4zM1326.0 152.0h2.4v2.4h-2.4zM1348.0 160.0h2.4v2.4h-2.4zM1356.0 162.0h2.4v2.4h-2.4zM1307.0 230.0h2.4v2.4h-2.4zM1307.0 240.0h2.4v2.4h-2.4zM1214.0 193.0h2.4v2.4h-2.4zM1202.0 257.0h2.4v2.4h-2.4zM1306.0 232.0h2.2v2.2h-2.2zM1353.0 160.0h2.2v2.2h-2.2zM857.0 785.0h2.2v2.2h-2.2zM760.0 781.0h2.2v2.2h-2.2zM683.0 506.0h2.2v2.2h-2.2zM683.0 510.0h2.2v2.2h-2.2zM533.0 492.0h2.2v2.2h-2.2zM531.0 495.0h2.2v2.2h-2.2z" fill="#2aa8d8"/>
<path d="M703.4 155.6h1.2v1.2h-1.2zM702.5 197.3h1.6v1.6h-1.6zM711.5 196.6h1.1v1.1h-1.1zM687.1 150.5h1.2v1.2h-1.2zM657.2 123.4h1.2v1.2h-1.2zM701.6 191.7h1.3v1.3h-1.3zM704.5 195.4h1.2v1.2h-1.2zM695.6 183.7h1.1v1.1h-1.1zM703.2 177.0h1.0v1.0h-1.0zM698.4 167.7h1.2v1.2h-1.2zM715.3 168.0h1.0v1.0h-1.0zM692.0 171.9h1.7v1.7h-1.7zM673.1 152.9h1.7v1.7h-1.7zM720.7 200.1h1.7v1.7h-1.7zM710.6 173.1h1.4v1.4h-1.4zM708.2 173.1h1.3v1.3h-1.3zM684.6 123.2h1.1v1.1h-1.1zM688.6 182.5h1.2v1.2h-1.2zM714.1 201.1h1.0v1.0h-1.0zM677.4 138.6h1.7v1.7h-1.7zM699.8 131.3h1.8v1.8h-1.8zM700.1 277.4h1.3v1.3h-1.3zM701.8 307.5h1.3v1.3h-1.3zM795.7 363.1h1.0v1.0h-1.0zM733.9 326.0h0.9v0.9h-0.9zM681.3 267.0h1.5v1.5h-1.5zM703.7 289.7h1.2v1.2h-1.2zM791.2 323.5h1.5v1.5h-1.5zM723.8 296.2h1.3v1.3h-1.3zM702.2 209.1h1.4v1.4h-1.4zM710.3 319.5h0.9v0.9h-0.9zM705.1 278.3h1.3v1.3h-1.3zM1008.2 288.3h0.9v0.9h-0.9zM1026.7 273.8h0.9v0.9h-0.9zM1001.0 308.9h1.5v1.5h-1.5zM1035.3 326.7h1.0v1.0h-1.0zM998.8 293.7h1.0v1.0h-1.0zM1043.7 341.7h1.0v1.0h-1.0zM963.5 330.8h1.2v1.2h-1.2zM1025.3 286.1h1.6v1.6h-1.6zM965.8 270.3h1.2v1.2h-1.2zM1021.8 312.9h1.1v1.1h-1.1zM1001.8 294.8h1.5v1.5h-1.5zM1017.2 295.6h0.9v0.9h-0.9zM1007.8 288.0h1.3v1.3h-1.3zM1034.0 333.4h1.4v1.4h-1.4zM1048.9 327.7h1.4v1.4h-1.4zM1039.2 339.5h1.8v1.8h-1.8zM1017.0 306.7h1.6v1.6h-1.6zM1035.5 265.6h1.5v1.5h-1.5zM1000.4 330.3h1.1v1.1h-1.1zM982.1 332.7h1.0v1.0h-1.0zM975.5 387.9h1.3v1.3h-1.3zM1009.3 324.8h1.8v1.8h-1.8zM985.8 347.1h1.1v1.1h-1.1zM945.0 383.1h1.6v1.6h-1.6zM991.3 405.0h1.3v1.3h-1.3zM1015.6 372.2h1.6v1.6h-1.6zM1007.7 350.0h1.8v1.8h-1.8zM1013.6 330.6h1.4v1.4h-1.4zM1011.4 331.5h1.3v1.3h-1.3zM987.9 398.0h1.6v1.6h-1.6zM1027.6 402.5h1.2v1.2h-1.2zM988.5 355.3h0.9v0.9h-0.9zM1015.7 377.4h1.5v1.5h-1.5zM1012.5 353.4h1.6v1.6h-1.6zM968.7 337.5h1.4v1.4h-1.4zM981.2 326.6h1.1v1.1h-1.1zM1000.9 318.9h1.2v1.2h-1.2zM1005.8 398.9h1.6v1.6h-1.6zM1151.9 620.7h1.5v1.5h-1.5zM1158.5 624.4h1.3v1.3h-1.3zM1099.8 601.2h1.2v1.2h-1.2zM1153.0 499.9h1.6v1.6h-1.6zM1113.8 539.8h1.2v1.2h-1.2zM1125.1 495.4h1.6v1.6h-1.6zM1165.5 509.5h1.2v1.2h-1.2zM1141.8 526.4h1.2v1.2h-1.2zM1176.7 504.2h1.1v1.1h-1.1zM1186.0 566.0h1.6v1.6h-1.6zM1105.8 503.2h1.2v1.2h-1.2zM1136.6 583.3h1.1v1.1h-1.1zM1194.5 603.2h1.5v1.5h-1.5zM1143.4 546.6h1.6v1.6h-1.6zM1105.4 524.4h1.8v1.8h-1.8zM1182.1 578.9h0.9v0.9h-0.9zM1145.2 544.4h1.5v1.5h-1.5zM1142.1 552.9h1.1v1.1h-1.1zM1112.1 557.6h1.7v1.7h-1.7zM1104.5 566.4h1.7v1.7h-1.7zM1123.5 543.6h1.5v1.5h-1.5zM1088.8 545.1h1.6v1.6h-1.6zM1110.5 533.9h1.8v1.8h-1.8zM1120.5 552.3h0.9v0.9h-0.9zM1188.0 577.5h1.2v1.2h-1.2zM1156.6 567.7h1.6v1.6h-1.6zM1116.5 574.2h1.3v1.3h-1.3zM1106.6 624.5h1.3v1.3h-1.3zM1171.9 605.5h1.0v1.0h-1.0zM1150.6 540.7h1.4v1.4h-1.4zM1190.9 545.8h1.5v1.5h-1.5zM1104.9 566.9h1.6v1.6h-1.6zM1138.5 648.3h1.5v1.5h-1.5zM1164.7 517.2h1.0v1.0h-1.0zM1177.8 518.6h1.5v1.5h-1.5zM1195.6 591.4h1.7v1.7h-1.7zM1108.3 496.6h1.1v1.1h-1.1zM1124.6 520.4h1.1v1.1h-1.1zM1121.5 640.3h1.6v1.6h-1.6zM1121.4 563.2h1.2v1.2h-1.2zM1114.9 585.4h1.5v1.5h-1.5zM1121.5 632.3h1.4v1.4h-1.4zM1133.6 584.8h1.7v1.7h-1.7zM728.3 580.5h1.0v1.0h-1.0zM794.3 441.9h1.3v1.3h-1.3zM754.2 391.0h1.0v1.0h-1.0zM723.8 402.2h1.3v1.3h-1.3zM679.1 427.1h0.9v0.9h-0.9zM663.9 483.3h1.2v1.2h-1.2zM731.2 475.8h1.4v1.4h-1.4zM745.0 422.3h1.4v1.4h-1.4zM745.5 398.0h1.3v1.3h-1.3zM742.9 429.0h1.3v1.3h-1.3zM727.5 504.9h1.0v1.0h-1.0zM689.7 422.3h0.9v0.9h-0.9zM763.1 461.7h1.3v1.3h-1.3zM698.8 389.8h1.0v1.0h-1.0zM677.6 441.9h1.4v1.4h-1.4zM717.4 559.2h1.2v1.2h-1.2zM729.4 493.7h1.5v1.5h-1.5zM727.5 575.1h1.2v1.2h-1.2zM758.6 493.5h1.3v1.3h-1.3zM765.9 450.6h1.3v1.3h-1.3zM711.9 465.6h1.4v1.4h-1.4zM705.6 408.5h1.1v1.1h-1.1zM724.2 577.1h1.4v1.4h-1.4zM695.8 479.9h1.3v1.3h-1.3zM693.1 479.6h1.5v1.5h-1.5zM693.1 530.8h1.0v1.0h-1.0zM750.9 493.6h1.1v1.1h-1.1zM896.8 940.3h1.3v1.3h-1.3zM888.8 970.8h1.0v1.0h-1.0zM898.1 803.5h1.7v1.7h-1.7zM842.1 990.8h1.0v1.0h-1.0zM926.2 871.6h1.0v1.0h-1.0zM883.7 903.8h0.9v0.9h-0.9zM871.1 856.0h1.4v1.4h-1.4zM897.9 907.3h1.8v1.8h-1.8zM951.1 870.1h1.0v1.0h-1.0zM808.2 981.1h1.0v1.0h-1.0zM874.0 872.0h1.5v1.5h-1.5zM981.0 951.1h1.7v1.7h-1.7zM868.6 866.5h1.1v1.1h-1.1zM924.6 993.5h1.1v1.1h-1.1zM880.3 824.6h1.0v1.0h-1.0zM916.1 912.2h1.0v1.0h-1.0zM893.0 877.6h1.5v1.5h-1.5zM951.2 902.4h1.8v1.8h-1.8zM897.9 826.9h1.1v1.1h-1.1zM826.7 905.9h1.0v1.0h-1.0zM884.0 833.2h1.0v1.0h-1.0zM820.9 980.4h1.7v1.7h-1.7zM784.3 827.5h1.1v1.1h-1.1zM962.4 957.3h1.6v1.6h-1.6zM799.2 894.2h1.5v1.5h-1.5zM821.8 817.3h1.1v1.1h-1.1zM870.2 907.4h1.8v1.8h-1.8zM870.3 914.2h1.3v1.3h-1.3zM825.8 891.6h1.4v1.4h-1.4zM841.6 950.8h1.1v1.1h-1.1zM862.2 903.7h1.1v1.1h-1.1zM915.2 779.7h1.5v1.5h-1.5zM851.2 814.3h1.3v1.3h-1.3zM923.3 992.8h1.4v1.4h-1.4zM805.1 802.1h1.5v1.5h-1.5z" fill="#2e88ba"/>
<path d="M1230.4 489.3h2.0v2.0h-2.0zM1221.9 492.0h1.4v1.4h-1.4zM1175.6 517.3h1.5v1.5h-1.5zM1174.1 482.3h2.3v2.3h-2.3zM1203.8 489.5h1.9v1.9h-1.9zM1190.9 508.7h2.1v2.1h-2.1zM1172.2 491.6h1.5v1.5h-1.5zM1225.9 436.2h1.9v1.9h-1.9zM1193.8 441.5h2.1v2.1h-2.1zM1202.4 416.9h1.8v1.8h-1.8zM1219.0 436.7h2.3v2.3h-2.3zM1197.6 487.9h1.2v1.2h-1.2zM1222.4 422.5h1.5v1.5h-1.5zM1221.5 495.9h2.1v2.1h-2.1zM1192.2 518.2h1.7v1.7h-1.7zM1192.8 482.7h1.8v1.8h-1.8zM1194.1 438.7h2.2v2.2h-2.2zM1211.1 457.8h1.6v1.6h-1.6zM1173.4 508.0h2.4v2.4h-2.4zM1263.7 457.2h1.9v1.9h-1.9zM1197.6 502.5h1.9v1.9h-1.9zM1174.4 517.8h1.7v1.7h-1.7zM1208.1 507.7h2.4v2.4h-2.4zM1180.8 513.0h1.4v1.4h-1.4zM1242.2 468.5h1.6v1.6h-1.6zM1201.2 499.5h2.4v2.4h-2.4zM1222.5 485.9h1.9v1.9h-1.9zM1213.4 460.6h1.3v1.3h-1.3zM1240.5 465.4h1.3v1.3h-1.3zM1208.9 478.4h2.4v2.4h-2.4zM1201.5 472.1h2.3v2.3h-2.3zM1185.0 453.2h1.7v1.7h-1.7zM1228.4 479.8h2.1v2.1h-2.1zM1169.2 495.1h1.8v1.8h-1.8zM1203.5 479.5h1.6v1.6h-1.6zM1192.4 507.8h2.0v2.0h-2.0zM1194.3 489.6h2.3v2.3h-2.3zM1177.1 484.8h1.6v1.6h-1.6zM1176.3 511.9h1.3v1.3h-1.3zM1198.9 480.2h1.7v1.7h-1.7zM1170.2 510.8h1.9v1.9h-1.9zM1187.7 517.6h1.2v1.2h-1.2zM1247.1 451.3h2.1v2.1h-2.1zM1171.6 497.4h1.3v1.3h-1.3zM1205.8 428.6h1.5v1.5h-1.5zM1194.1 505.7h1.8v1.8h-1.8zM1204.1 467.4h1.8v1.8h-1.8zM1181.9 472.6h2.4v2.4h-2.4zM1201.5 442.3h1.9v1.9h-1.9zM1197.2 483.2h1.9v1.9h-1.9zM1218.4 441.2h1.4v1.4h-1.4zM1207.7 497.7h1.9v1.9h-1.9zM1192.4 450.4h1.6v1.6h-1.6zM1198.0 473.1h2.0v2.0h-2.0zM1216.3 474.9h2.0v2.0h-2.0zM1194.2 497.9h1.6v1.6h-1.6zM1182.1 485.9h1.7v1.7h-1.7zM1196.0 426.3h2.2v2.2h-2.2zM1181.3 521.1h2.0v2.0h-2.0zM1196.8 480.3h1.9v1.9h-1.9zM1201.1 473.1h1.3v1.3h-1.3zM1189.0 463.3h1.2v1.2h-1.2zM1204.9 418.9h2.0v2.0h-2.0zM1182.2 524.2h1.8v1.8h-1.8zM1252.9 463.5h1.4v1.4h-1.4zM1225.9 464.0h2.2v2.2h-2.2zM1195.5 508.1h2.1v2.1h-2.1zM1185.3 524.3h2.1v2.1h-2.1zM1214.4 435.0h1.9v1.9h-1.9zM1221.5 496.0h2.0v2.0h-2.0zM1186.7 461.5h1.5v1.5h-1.5zM1185.9 522.3h2.1v2.1h-2.1zM1221.2 462.3h2.1v2.1h-2.1zM1197.6 462.2h1.4v1.4h-1.4zM1183.0 519.2h2.1v2.1h-2.1zM1240.4 474.1h1.4v1.4h-1.4zM1207.5 464.0h2.0v2.0h-2.0zM1197.2 519.0h1.8v1.8h-1.8zM1203.6 496.7h1.9v1.9h-1.9zM1188.3 498.1h1.7v1.7h-1.7zM1190.7 468.3h1.4v1.4h-1.4zM1178.7 506.6h1.6v1.6h-1.6zM1222.5 468.8h1.3v1.3h-1.3zM1215.5 500.6h1.3v1.3h-1.3zM1189.3 492.0h1.5v1.5h-1.5zM1231.4 473.9h1.6v1.6h-1.6zM1199.5 510.7h1.6v1.6h-1.6zM1255.5 458.9h2.4v2.4h-2.4zM1195.0 477.7h2.1v2.1h-2.1zM1193.9 508.0h1.5v1.5h-1.5zM1252.4 445.3h1.5v1.5h-1.5zM1205.9 506.3h1.3v1.3h-1.3zM1194.1 475.3h1.3v1.3h-1.3zM1232.7 481.0h1.6v1.6h-1.6zM1176.1 517.1h1.7v1.7h-1.7zM1174.9 512.4h1.6v1.6h-1.6zM1220.7 477.1h1.6v1.6h-1.6zM1199.6 414.5h1.5v1.5h-1.5zM1265.0 457.8h1.9v1.9h-1.9zM1177.3 512.1h2.3v2.3h-2.3zM1193.5 482.6h2.3v2.3h-2.3zM1176.2 505.0h1.9v1.9h-1.9zM1197.2 492.9h1.7v1.7h-1.7zM1198.2 467.9h1.9v1.9h-1.9zM1171.5 494.7h2.2v2.2h-2.2zM1184.0 481.3h2.1v2.1h-2.1zM1176.1 491.9h2.0v2.0h-2.0zM1215.4 470.2h2.3v2.3h-2.3zM1173.2 497.0h2.3v2.3h-2.3zM1187.2 526.2h1.8v1.8h-1.8zM1231.5 456.7h1.5v1.5h-1.5zM1188.5 521.1h1.3v1.3h-1.3zM1239.9 459.7h1.5v1.5h-1.5zM1188.7 480.6h1.2v1.2h-1.2zM1200.0 495.6h2.4v2.4h-2.4zM1176.1 506.7h2.1v2.1h-2.1zM1252.8 440.7h1.7v1.7h-1.7zM1257.9 448.3h1.5v1.5h-1.5zM1210.1 474.4h1.9v1.9h-1.9zM1192.8 439.4h1.9v1.9h-1.9zM854.7 820.1h1.3v1.3h-1.3zM859.6 801.1h1.3v1.3h-1.3zM875.2 791.6h1.4v1.4h-1.4zM864.0 810.6h1.2v1.2h-1.2zM865.4 793.3h1.6v1.6h-1.6zM853.5 811.0h1.2v1.2h-1.2zM860.5 822.1h1.5v1.5h-1.5zM861.5 817.4h1.5v1.5h-1.5zM864.6 804.8h1.0v1.0h-1.0zM881.9 790.1h1.8v1.8h-1.8zM883.5 790.7h1.2v1.2h-1.2zM875.2 800.9h1.9v1.9h-1.9zM866.4 803.3h1.2v1.2h-1.2zM870.3 798.5h1.1v1.1h-1.1zM862.9 808.7h1.6v1.6h-1.6zM871.2 808.9h1.2v1.2h-1.2zM850.5 814.8h1.5v1.5h-1.5zM879.9 789.1h1.4v1.4h-1.4zM870.4 786.9h1.6v1.6h-1.6zM874.1 782.0h1.3v1.3h-1.3zM853.1 808.1h1.3v1.3h-1.3zM873.2 792.6h1.1v1.1h-1.1zM863.6 808.2h1.7v1.7h-1.7zM864.2 820.3h1.2v1.2h-1.2zM879.9 795.7h2.0v2.0h-2.0zM861.6 803.9h1.9v1.9h-1.9zM875.1 797.8h1.1v1.1h-1.1zM878.4 796.5h1.7v1.7h-1.7zM848.8 811.7h1.6v1.6h-1.6zM853.2 807.9h1.0v1.0h-1.0zM876.7 787.2h1.1v1.1h-1.1zM875.9 802.8h1.0v1.0h-1.0zM864.8 805.6h2.0v2.0h-2.0zM870.4 810.1h1.5v1.5h-1.5zM870.7 806.0h1.9v1.9h-1.9zM876.8 791.5h1.9v1.9h-1.9zM878.9 787.4h1.2v1.2h-1.2zM859.3 801.0h1.1v1.1h-1.1zM864.6 797.8h1.8v1.8h-1.8zM872.9 784.7h1.8v1.8h-1.8zM866.8 793.3h1.8v1.8h-1.8zM874.9 801.3h1.6v1.6h-1.6zM855.7 805.7h1.2v1.2h-1.2zM883.7 792.1h1.9v1.9h-1.9zM859.0 808.8h1.0v1.0h-1.0z" fill="#1b1b1b"/>
<path d="M541.5 420.1h0.9v0.9h-0.9zM529.7 405.1h0.9v0.9h-0.9zM503.3 444.7h1.2v1.2h-1.2zM552.7 379.7h1.7v1.7h-1.7zM559.5 377.3h1.4v1.4h-1.4zM569.9 436.0h1.0v1.0h-1.0zM523.9 411.4h1.5v1.5h-1.5zM561.3 395.7h1.4v1.4h-1.4zM583.2 406.6h1.3v1.3h-1.3zM544.3 407.5h1.2v1.2h-1.2zM610.2 451.7h1.7v1.7h-1.7zM565.8 444.0h1.4v1.4h-1.4zM621.6 438.6h1.2v1.2h-1.2zM619.7 452.0h1.2v1.2h-1.2zM556.1 375.1h1.2v1.2h-1.2zM609.0 423.0h1.2v1.2h-1.2zM536.7 427.4h1.6v1.6h-1.6zM572.6 387.4h1.0v1.0h-1.0zM557.1 416.7h1.4v1.4h-1.4zM585.5 448.9h1.5v1.5h-1.5zM540.7 381.1h1.1v1.1h-1.1zM563.6 438.4h1.0v1.0h-1.0zM522.8 404.1h1.8v1.8h-1.8zM566.9 454.0h1.8v1.8h-1.8zM533.2 396.3h1.5v1.5h-1.5zM620.6 459.2h1.3v1.3h-1.3zM568.7 429.5h1.7v1.7h-1.7zM616.5 445.3h1.5v1.5h-1.5zM606.7 452.2h1.7v1.7h-1.7zM618.0 454.4h1.5v1.5h-1.5zM527.2 423.7h1.7v1.7h-1.7zM584.7 421.0h1.6v1.6h-1.6z" fill="#33a62c"/>
</g>
<path d="M393.5 136.3 L392.1 167.2 L394.9 195.2 L396.3 217.6 L392.1 220.4 L390.7 234.4 L389.3 251.3 L383.7 270.9 L387.9 276.5 L389.3 293.3 L397.7 327.0 L397.7 338.2 M396.3 217.6 L413.1 217.6 L414.5 234.4 L418.7 251.3 L441.2 248.5 L488.0 244.3 M334.6 195.2 L347.2 221.8 L362.7 226.0 L376.7 234.4 L390.7 235.8 M441.2 248.5 L435.6 273.7 L432.8 293.3 L403.3 296.1 L400.5 279.3 L387.9 275.1 M448.2 245.7 L449.6 276.5 M397.7 327.0 L427.2 325.6 L445.4 322.8 M397.7 80.2 L449.6 99.9 L474.8 88.6 L488.0 85.8 M421.6 56.4 L474.8 71.8 L477.6 83.0 L488.0 111.1 M442.6 148.9 L452.4 164.3 L458.0 155.9 L448.2 147.5 M460.8 153.1 L474.8 181.2 L488.0 200.8 M427.2 325.6 L425.8 301.7 L430.0 293.3 M445.4 322.8 L449.6 307.3 L444.0 296.1 L439.8 307.3 L445.4 322.8 M449.6 308.7 L488.0 314.4 M448.2 322.8 L456.6 335.4 L455.2 343.8 M470.0 83.0 L523.3 81.6 L527.5 71.8 L537.3 56.4 M475.6 94.3 L491.0 119.5 L498.0 136.3 L485.4 150.3 L470.0 162.9 M540.1 147.5 L570.9 150.3 L569.5 172.8 M554.1 148.9 L551.3 206.4 M509.3 207.8 L593.4 206.4 L615.8 193.8 L652.2 191.0 M580.7 181.2 L582.2 164.3 L635.4 146.1 L649.4 144.7 M590.6 223.2 L641.0 223.2 M538.7 254.1 L582.2 252.7 L585.0 240.1 L590.6 223.2 M582.2 252.7 L593.4 265.3 L635.4 273.7 M593.4 265.3 L599.0 307.3 L601.8 322.8 M470.0 242.9 L486.8 242.9 L502.2 234.4 M635.4 265.3 L694.3 265.3 L698.5 273.7 M645.2 216.2 L663.5 217.6 L666.3 231.6 L677.5 234.4 L683.1 248.5 L694.3 256.9 L698.5 273.7 L677.5 279.3 L676.1 290.5 L655.1 296.1 L649.4 320.0 M722.3 56.4 L718.1 119.5 M746.2 56.4 L743.4 76.0 L722.3 77.4 M830.3 56.4 L831.7 66.2 L918.6 64.8 M688.7 161.5 L739.2 167.2 L735.0 186.8 L764.4 193.8 L772.8 200.8 L792.4 198.0 L806.5 203.6 L834.5 216.2 L842.9 217.6 M778.4 128.5 L764.4 167.2 L806.5 178.4 L882.2 192.4 M726.5 123.7 L727.9 144.7 L767.2 155.9 M688.7 125.1 L690.1 189.6 L684.5 195.2 L711.1 216.2 L750.4 223.2 L753.2 226.0 M789.6 214.8 L781.2 234.4 L774.2 237.2 L767.2 273.7 M792.4 276.5 L817.7 270.9 L837.3 251.3 L848.5 228.8 L840.1 217.6 M716.7 220.4 L712.5 245.7 L702.7 279.3 L713.9 301.7 L705.5 315.8 L713.9 318.6 M730.8 223.2 L730.8 273.7 L723.7 287.7 L719.5 301.7 L726.5 314.4 M770.0 69.0 L781.2 76.0 L781.2 87.2 L806.5 94.3 L826.1 99.9 L834.5 94.3 L848.5 102.7 L868.1 115.3 L876.6 126.5 L878.0 147.5 M858.3 66.2 L862.5 83.0 L887.8 102.7 L906.0 111.1 M911.6 130.7 L943.0 144.7 M649.4 320.0 L655.1 349.4 L663.5 374.9 M677.5 290.5 L702.7 279.3 M753.2 226.0 L756.0 234.4 L739.2 237.2 M758.8 298.9 L756.0 315.8 L744.8 324.2 L744.8 352.2 L733.6 357.8 M918.6 222.7 L943.0 224.6 M988.1 56.4 L975.5 127.9 L960.0 122.3 L954.4 144.7 M975.5 127.9 L1000.7 136.3 L1031.5 155.9 M967.1 213.4 L995.1 217.6 M967.1 213.4 L958.6 256.9 M1076.4 307.3 L1082.0 329.8 L1093.2 327.0 L1121.3 338.2 L1140.9 332.6 M1140.9 332.6 L1149.3 349.4 L1166.1 357.8 L1174.5 374.9 M1110.1 374.9 L1112.9 341.0 L1121.3 338.2 M925.0 220.4 L967.1 213.4 M334.6 410.5 L354.3 411.9 L376.7 389.4 L385.1 396.4 L392.1 413.3 L404.7 424.5 L415.9 421.7 M355.7 452.5 L376.7 423.1 L390.7 427.3 L407.5 441.3 L424.4 449.7 L435.6 432.9 L441.2 427.3 L460.8 432.9 M355.7 452.5 L385.1 455.3 L413.1 466.5 L444.0 479.2 L441.2 459.5 L460.8 456.7 M354.3 496.0 L387.9 491.8 L413.1 470.7 L435.6 444.1 M460.8 416.1 L463.6 500.2 L452.4 504.4 L453.8 519.8 L488.0 517.0 M453.8 519.8 L430.0 526.8 L427.2 533.8 L415.9 531.0 L413.1 553.5 L387.9 563.3 L365.5 542.2 L348.7 532.4 M333.2 567.5 L371.1 587.1 L382.3 606.7 L401.9 610.9 L435.6 617.9 L455.2 633.4 L474.8 668.4 M460.8 416.1 L472.0 413.3 L472.0 402.1 L488.0 402.1 M435.6 388.0 L430.0 407.7 L435.6 424.5 L444.0 416.1 L446.8 404.9 M607.4 361.4 L604.6 382.4 L613.0 390.8 L627.0 385.2 L638.2 396.4 L649.4 407.7 L655.1 396.4 L666.3 404.9 L677.5 404.9 M610.2 438.5 L607.4 480.6 L615.8 497.4 L622.8 500.2 L624.2 525.4 L622.8 556.3 L590.6 564.7 M622.8 556.3 L683.1 550.1 M503.6 444.1 L505.0 477.8 L519.1 480.6 L517.7 505.8 L542.9 505.8 L544.3 521.2 L568.1 522.6 M470.0 518.4 L512.1 515.6 L517.7 505.8 M510.7 543.6 L526.1 545.1 L554.1 543.6 L568.1 538.0 M510.7 543.6 L506.4 592.7 L520.5 626.4 L534.5 648.8 L545.7 664.2 M685.9 494.6 L716.7 505.8 L750.4 512.8 L760.2 507.2 L760.2 463.7 M750.4 512.8 L751.8 524.0 M775.6 538.0 L805.1 538.0 M758.8 427.3 L761.6 413.3 M730.8 578.7 L730.8 646.0 M767.2 578.7 L767.2 679.9 M730.8 615.1 L805.1 615.1 M688.7 646.0 L767.2 646.0 M767.2 653.0 L805.1 653.0 M627.0 664.2 L628.4 679.9 M551.3 665.6 L551.3 679.9 M692.9 661.4 L692.9 679.9 M652.2 361.4 L657.9 388.0 L663.5 404.9 M677.5 404.9 L678.9 444.1 L649.4 449.7 L638.2 444.1 L610.2 438.5 M1065.2 376.8 L1059.6 393.6 L1082.0 396.4 L1093.2 388.0 L1110.1 396.4 L1112.9 371.2 L1111.5 361.4 M1110.1 396.4 L1104.4 416.1 L1093.2 432.9 L1082.0 430.1 M1112.9 371.2 L1149.3 382.4 L1152.1 407.7 L1157.7 428.7 M1070.8 441.3 L1082.0 430.1 L1093.2 432.9 L1126.9 458.1 L1146.5 455.3 M1082.0 483.4 L1093.2 483.4 M1093.2 483.4 L1104.4 505.8 L1121.3 517.0 M1059.6 511.4 L1082.0 522.6 M324.8 691.6 L329.0 791.2 M355.7 732.3 L358.5 782.8 L355.7 796.8 L362.7 813.6 M285.6 794.0 L312.2 791.2 L329.0 791.2 L345.8 794.0 L357.1 802.4 L362.7 813.6 M362.7 813.6 L326.2 845.8 L309.4 841.6 L295.4 843.0 M362.7 813.6 L371.1 815.0 L488.0 810.8 M371.1 815.0 L379.5 838.8 L386.5 861.3 L387.9 869.7 L399.1 880.9 M303.8 866.9 L315.0 873.9 L326.2 869.7 L387.9 868.3 M399.1 880.9 L385.1 886.5 L362.7 908.9 L334.6 938.4 M399.1 880.9 L415.9 889.3 L444.0 869.7 L455.2 871.1 L474.8 883.7 L486.0 894.9 M415.9 889.3 L401.9 906.1 L418.7 924.4 L449.6 948.2 M418.7 924.4 L399.1 945.4 L392.1 941.2 L373.9 959.4 L390.7 976.2 L382.3 984.9 M341.6 931.4 L357.1 942.6 L379.5 951.0 M312.2 907.5 L323.4 914.5 L331.8 928.6 L334.6 938.4 M331.8 928.6 L324.8 934.2 L323.4 959.4 L326.2 967.8 L312.2 974.8 L295.4 974.8 L281.4 972.0 M479.0 735.1 L488.0 735.1 M551.3 666.4 L554.1 732.3 L558.3 806.6 L559.7 855.7 M627.0 665.0 L629.8 743.5 L632.6 802.4 M478.4 735.1 L554.1 732.3 L628.4 728.9 M629.8 743.5 L653.6 742.1 L751.8 744.1 M692.9 666.4 L691.5 743.5 M692.9 683.2 L767.2 682.4 L767.2 666.4 M729.4 683.2 L729.4 712.7 L751.8 721.1 L751.8 803.8 M767.2 682.4 L767.2 728.1 L803.7 728.9 M751.8 765.9 L803.7 765.9 M558.3 806.6 L653.6 803.8 L803.7 803.8 M653.6 803.8 L654.2 897.7 M729.4 803.8 L729.4 897.7 M729.4 849.5 L803.7 849.5 M684.5 899.1 L684.5 984.9 M592.0 880.9 L592.0 922.9 L597.6 924.4 L597.6 938.4 L542.9 956.6 L530.3 973.4 L523.3 984.9 M498.0 915.9 L512.1 920.1 L528.9 927.2 L554.1 922.9 L565.3 931.4 L592.0 922.9 M684.5 983.2 L803.7 983.2 M313.6 971.4 L317.8 992.4 L323.4 1003.6 L324.8 1019.1 L306.6 1021.9 L295.4 1020.5 L284.2 1019.1 L270.1 1021.9 M324.8 1019.1 L334.6 1031.7 L337.4 1045.7 L343.0 1054.1 M268.7 1055.5 L281.4 1056.9 L298.2 1065.3 L323.4 1065.3 M323.4 1003.6 L334.6 1003.6 L354.3 985.4 L365.5 995.2 L387.9 974.2 L404.7 992.4 M393.5 1000.8 L394.9 1063.9 L387.9 1082.2 L372.5 1097.6 L387.9 1104.6 L369.7 1129.8 L345.8 1131.2 L334.6 1141.0 L326.2 1135.4 L322.0 1143.8 L309.4 1143.8 M394.9 1063.9 L418.7 1047.1 L458.0 1041.5 L469.2 1016.3 L488.0 1010.7 M312.2 1107.4 L309.4 1127.0 L310.8 1166.3 L306.6 1170.5 L312.2 1180.3 M369.7 1129.8 L401.9 1135.4 L425.8 1173.3 L425.8 1276.5 M267.3 1227.9 L291.2 1226.5 L295.4 1236.4 L301.0 1237.8 L315.0 1256.0 L331.8 1261.6 L337.4 1254.6 L359.9 1253.2 L365.5 1236.4 L373.9 1230.8 L387.9 1233.6 L404.7 1230.8 L418.7 1235.0 L424.4 1242.0 M359.9 1253.2 L357.1 1261.6 L347.2 1267.2 L345.8 1276.5 M684.5 971.4 L684.5 985.4 L803.7 986.0 M514.9 986.8 L582.2 992.4 L649.4 991.9 L683.1 989.6 L684.5 985.4 M533.1 971.4 L514.9 986.8 L492.4 1009.3 L470.0 1014.9 M492.4 1009.3 L506.4 1016.3 L509.3 1170.5 M582.2 992.4 L585.0 1166.3 M649.4 991.9 L652.2 1099.0 L656.5 1166.3 M683.1 989.6 L687.3 995.2 L688.7 1033.1 L726.5 1034.5 L761.6 1034.5 L765.8 1038.7 L774.2 1030.3 L803.7 1030.3 M726.5 1034.5 L726.5 1065.3 M489.6 1173.3 L495.2 1246.2 L645.2 1237.8 L708.3 1235.0 M641.0 1167.7 L645.2 1237.8 M533.1 1244.8 L534.5 1276.5 M570.9 1243.4 L572.3 1276.5 M676.1 1237.8 L678.9 1276.5 M931.4 908.3 L953.8 911.1 M780.0 848.0 L803.8 848.0 M780.0 985.4 L803.8 985.4 M780.0 1030.3 L803.8 1030.3 M881.8 528.2 L877.7 548.6 M858.6 546.6 L860.0 545.2 L888.6 552.0 L883.2 556.8 L880.4 563.6 L887.3 570.4 L894.1 575.9 M858.6 546.6 L857.9 578.6 L862.0 583.4 L867.5 578.6 L881.8 591.6 L894.1 575.9 L902.3 569.1 L907.7 574.5 L923.4 559.5 L917.2 552.0 L920.0 549.3 L926.1 552.0 M913.2 527.5 L902.3 537.7 L913.2 547.9 L917.2 543.9 L926.1 552.0 L935.0 545.9 L941.8 551.4 L951.3 541.1 L946.6 535.0 L937.7 522.7 L930.9 520.0 M947.2 546.6 L958.8 559.5 L967.0 554.1 L977.2 564.3 L982.0 560.2 L988.8 567.7 L980.0 577.3 L986.1 584.1 L970.4 600.4 L966.3 596.3 L958.2 601.8 L950.0 594.3 L940.4 586.8 L960.9 567.0 L957.5 562.9 L958.8 559.5 M946.6 535.0 L955.4 530.9 L959.5 525.5 L967.0 520.0 M951.3 541.1 L947.2 546.6 M982.0 560.2 L995.0 540.5 L1001.8 532.3 L1000.4 525.5 L1001.8 520.0 M995.0 540.5 L988.1 549.3 L990.9 552.7 L984.1 559.5 M990.9 552.7 L997.7 562.3 L1007.2 568.4 L1004.5 577.3 L1010.0 585.4 L1015.4 593.6 L1013.4 597.7 L1023.6 605.9 L1030.0 600.4 M1007.2 568.4 L1014.0 562.9 L1022.2 565.0 L1030.0 556.8 M1018.1 571.1 L1030.0 585.4 M806.1 606.6 L808.2 601.8 L821.8 588.9 L834.8 603.8 L857.9 579.3 M838.9 600.4 L840.9 608.6 L856.6 624.3 L876.3 642.7 L905.7 620.2 L915.2 627.7 L950.0 594.3 M881.8 591.6 L905.7 620.2 M856.6 624.3 L817.7 663.2 L806.1 652.2 M817.7 663.2 L840.9 687.7 L847.7 695.9 L860.0 708.1 M876.3 642.7 L870.2 649.5 L894.1 674.7 L879.1 687.7 M894.1 674.7 L885.9 682.2 L895.4 689.1 L900.9 690.4 L903.6 685.0 L913.2 675.4 L922.7 671.3 L935.0 664.5 L939.1 667.9 L948.6 668.6 M895.4 689.1 L906.3 697.2 L915.9 706.8 L918.6 702.7 L937.7 683.6 L937.7 678.2 L965.0 654.3 M915.2 627.7 L920.0 624.3 L928.2 633.2 L927.5 635.9 L934.3 642.0 L924.1 650.2 L929.5 657.7 L936.3 664.5 M932.9 611.3 L950.0 627.7 L966.3 644.7 L960.2 648.2 L969.7 657.7 L1007.2 620.9 L978.6 592.9 M1001.8 614.8 L1015.4 601.8 M977.2 650.9 L989.5 661.8 L992.2 659.1 L1001.8 663.8 L1004.5 661.8 L1030.0 637.2 M1001.8 663.8 L988.1 676.8 L978.6 682.2 L977.2 690.4 L971.8 695.9 L973.1 701.3 L958.2 715.0 M988.1 676.8 L999.1 683.6 L1010.0 691.8 L1030.0 674.1 M973.1 701.3 L990.9 692.5 L1004.5 706.8 L1001.8 715.0 M915.9 706.8 L923.4 715.0 M1021.5 644.7 L1030.0 650.9 M834.1 682.9 L860.0 708.8 M813.0 710.9 L834.1 689.1 M1030.0 533.0 L1043.6 550.0 L1057.3 537.7 L1061.4 526.8 L1057.3 520.0 M1043.6 550.0 L1052.5 567.0 L1064.8 580.7 L1051.8 595.7 M1057.3 537.7 L1070.9 545.9 L1084.5 543.2 L1094.1 537.7 L1088.6 525.5 L1084.5 520.0 M1084.5 543.2 L1091.4 560.9 L1098.2 556.8 L1106.3 547.3 L1111.8 536.4 L1117.3 528.2 L1114.5 520.0 M1091.4 560.9 L1075.0 566.4 L1080.4 573.2 L1064.1 580.0 M1094.1 571.8 L1106.3 559.5 L1117.3 558.2 L1125.4 550.0 L1128.2 541.8 M1094.1 571.8 L1113.2 592.3 L1125.4 581.4 L1136.3 574.5 M1051.8 595.7 L1069.5 603.2 L1102.3 584.1 M1030.0 585.4 L1040.9 593.6 L1061.4 600.4 L1069.5 603.2 M1069.5 603.2 L1080.4 610.0 L1087.3 615.4 L1098.2 620.9 L1103.6 627.7 L1100.9 633.2 L1095.4 637.2 L1096.8 642.7 L1090.0 645.4 L1068.2 651.6 L1058.6 655.0 M1098.2 620.9 L1106.3 612.7 L1117.3 608.6 L1125.4 607.3 L1133.6 618.2 L1139.1 626.3 L1141.8 630.4 L1135.0 637.2 L1139.1 645.4 L1139.1 649.5 M1113.2 592.3 L1117.3 600.4 L1125.4 607.3 M1136.3 574.5 L1135.0 592.3 L1139.1 601.8 L1143.2 605.9 L1135.0 614.1 L1136.3 619.5 L1141.8 630.4 M1143.2 605.9 L1158.2 593.6 L1166.3 586.8 L1163.6 590.9 L1173.2 600.4 L1170.4 605.9 L1180.0 603.2 L1182.7 607.3 L1171.8 618.2 L1160.9 623.6 L1163.6 626.3 L1143.2 648.2 M1144.5 604.5 L1159.5 619.5 L1162.2 623.6 M1171.8 618.2 L1188.2 626.3 L1192.2 620.9 L1201.8 615.4 L1220.9 608.6 M1188.2 626.3 L1208.6 627.7 L1211.3 634.5 L1212.7 642.7 L1216.8 649.5 M1143.2 648.2 L1148.6 657.7 L1154.1 659.1 L1158.2 657.7 L1160.9 661.8 L1166.3 656.3 L1173.2 650.9 L1181.3 646.8 L1186.8 650.9 L1193.6 655.0 L1211.3 655.0 M1160.9 661.8 L1167.7 667.2 L1170.4 674.1 L1174.5 672.7 L1186.8 665.9 L1192.2 659.1 L1211.3 655.0 M1170.4 674.1 L1171.8 678.2 L1163.6 685.0 L1174.5 694.5 L1182.7 695.9 L1186.8 689.1 L1195.0 682.2 L1212.7 687.7 L1223.6 690.4 M1174.5 694.5 L1156.8 709.5 L1162.2 715.0 M1212.7 687.7 L1205.9 695.9 L1208.6 704.1 L1201.8 715.0 M1095.4 637.2 L1111.8 634.5 L1120.0 648.2 L1129.5 649.5 L1139.1 649.5 M1096.8 642.7 L1121.3 668.6 L1132.3 680.2 L1152.7 659.1 M1121.3 668.6 L1113.2 679.5 L1098.2 686.3 L1081.8 698.6 L1069.5 687.0 L1058.6 695.9 L1047.7 690.4 L1032.7 710.9 M1113.2 679.5 L1124.1 695.9 L1139.1 709.5 L1145.9 715.0 M1081.8 698.6 L1095.4 715.0 M1058.6 655.0 L1043.6 659.1 L1030.0 646.8 M1058.6 655.0 L1068.2 665.9 L1061.4 670.0 L1076.4 678.2 L1069.5 687.0 M1061.4 670.0 L1054.5 675.4 L1047.7 670.0 L1036.8 682.2 L1030.0 676.8 M1030.0 625.0 L1035.5 623.6 L1047.7 625.0 L1050.5 622.3 L1068.2 620.9 L1080.4 629.1 L1077.7 633.2 L1090.0 645.4 M1030.0 637.2 L1034.1 635.9 L1035.5 627.7 M1106.3 547.3 L1114.5 554.1 L1125.4 550.0 L1133.6 555.4 L1139.1 551.4 M1117.3 528.2 L1125.4 536.4 L1133.6 543.2 L1139.1 547.3 M1117.3 558.2 L1124.1 566.4 L1130.9 560.9 L1137.7 565.0 L1143.2 560.9 M1124.1 566.4 L1128.2 574.5 L1136.3 574.5 L1143.2 580.0 L1152.7 574.5 L1150.0 567.7 L1155.4 565.0 M1143.2 580.0 L1144.5 586.8 L1152.7 584.1 L1158.2 588.2 L1166.3 580.0 L1160.9 574.5 L1152.7 574.5 M813.6 715.0 L834.1 733.4 L851.8 715.0 M834.1 733.4 L857.3 754.5 L862.7 760.0 L861.4 766.8 L870.9 777.7 L881.8 791.3 L894.1 807.7 L892.7 815.9 L888.6 824.1 L873.6 840.4 L865.4 832.2 L860.0 835.0 L846.4 825.4 L842.3 828.2 L853.2 839.1 L847.7 845.9 L853.2 851.3 L836.8 867.7 L845.0 877.2 L851.8 873.2 L857.3 881.3 L865.4 886.8 M806.1 811.8 L842.3 777.0 M837.5 813.2 L870.9 777.7 L905.0 747.7 L909.1 749.8 L917.2 738.2 L937.7 735.5 L950.0 723.2 L960.9 715.0 M837.5 813.2 L860.0 835.0 M881.8 715.0 L888.6 719.1 L898.2 730.0 L899.5 736.8 L905.0 747.7 M922.7 715.0 L931.6 725.2 L942.5 717.0 L950.0 723.2 M937.7 735.5 L971.8 772.3 L965.0 779.1 L972.5 785.9 L924.7 832.2 L915.9 840.4 L911.8 843.2 M917.2 738.2 L922.7 746.4 L915.9 754.5 L917.9 761.4 L914.5 770.9 L928.2 787.3 L925.4 792.7 L930.9 798.2 L927.5 803.6 L934.3 809.1 L924.1 818.6 L928.2 824.1 M965.6 762.7 L977.2 751.8 L984.1 758.6 L1007.2 790.0 L1000.4 796.8 L1004.5 803.6 L974.5 825.4 L952.0 804.3 M984.1 758.6 L1001.8 779.1 L1018.1 764.1 L1030.0 776.4 M1018.1 764.1 L1025.0 755.9 L1030.0 742.3 M1007.2 715.0 L1012.7 719.1 L1023.6 723.2 L1030.0 720.5 M1001.8 802.3 L1007.2 810.4 L1012.7 809.1 L1023.6 820.0 L1030.0 821.3 M974.5 825.4 L981.3 837.7 L992.2 847.9 L1004.5 833.6 L1026.3 856.8 L1030.0 852.7 M981.3 837.7 L978.6 851.3 L980.0 859.5 L988.1 882.7 L992.2 905.9 M911.8 843.2 L915.9 852.7 L913.2 859.5 L913.2 878.6 L915.9 895.0 L922.7 903.1 L930.9 908.6 M913.2 859.5 L922.7 863.6 L936.3 862.2 L948.6 855.4 L960.9 856.8 L971.8 863.6 L978.6 859.5 M888.6 824.1 L892.7 828.2 L899.5 832.2 L906.3 835.0 L911.8 843.2 M913.2 882.7 L895.4 888.1 L887.3 893.6 L881.8 896.3 M806.1 897.7 L836.8 867.7 M855.9 877.2 L870.9 863.6 L877.7 865.0 L881.8 859.5 L887.3 863.6 M1030.0 724.5 L1038.2 716.4 L1035.5 715.0 M1087.3 715.0 L1083.2 723.2 L1080.4 732.7 L1075.7 739.5 L1072.3 747.7 L1057.3 761.4 L1046.4 770.2 L1040.9 779.1 L1034.1 785.9 L1030.0 783.2 M1075.7 739.5 L1094.1 756.6 L1125.4 785.9 L1135.0 796.1 L1140.4 791.3 L1145.9 796.1 L1153.4 788.6 L1158.8 792.0 L1184.1 817.3 L1190.9 829.5 M1094.1 756.6 L1096.8 750.4 L1109.1 740.9 L1122.7 731.4 L1120.0 728.6 L1133.6 715.0 M1046.4 770.2 L1081.8 805.0 L1084.5 803.6 L1086.6 810.4 L1088.6 818.6 L1083.9 826.8 L1095.4 845.9 L1103.6 860.9 L1109.1 873.2 L1110.4 880.0 L1117.3 882.7 M1081.8 805.0 L1051.1 833.6 L1030.0 815.9 M1051.1 833.6 L1052.5 836.3 L1077.7 847.2 L1070.9 858.2 L1072.3 866.3 L1066.8 874.5 L1069.5 882.7 L1064.1 885.4 L1069.5 895.0 M1051.1 833.6 L1042.3 845.9 L1043.6 850.0 L1030.0 862.2 M1043.6 850.0 L1047.7 892.2 L1051.8 897.7 M1088.6 818.6 L1110.4 802.3 L1125.4 785.9 M1110.4 802.3 L1128.2 821.3 L1122.7 826.8 L1143.8 849.3 L1158.8 836.3 L1180.0 816.6 M1158.8 792.0 L1180.7 769.5 L1188.2 773.6 L1216.8 802.3 M1180.7 769.5 L1166.3 754.5 L1174.5 743.6 L1188.2 734.1 L1192.2 732.7 L1203.1 723.2 L1207.2 724.5 L1214.1 717.7 M1145.9 715.0 L1158.2 730.0 L1148.6 745.0 L1165.0 762.7 L1169.1 758.6 M1188.2 773.6 L1199.1 765.4 L1200.4 760.0 L1211.3 758.6 L1212.7 751.8 L1219.5 750.4 L1220.2 742.3 L1234.5 751.8 L1235.9 755.9 L1242.7 761.4 M1203.1 723.2 L1226.3 745.0 L1234.5 751.8 M1212.7 730.0 L1223.6 719.1 L1227.7 715.0 M1180.0 715.0 L1181.3 721.8 L1190.9 732.7 M1158.8 836.3 L1166.3 843.2 L1171.8 844.5 L1174.5 858.2 M1139.1 845.9 L1137.7 859.5 L1141.8 873.2 M760.0 297.8 L767.1 296.0 L767.1 317.3 L783.1 328.0 L808.0 321.8 L825.8 324.5 L829.4 326.2 M818.7 280.0 L822.2 292.4 L831.1 304.9 L838.2 322.7 L843.6 328.0 L888.0 331.6 L891.6 333.3 M843.6 328.0 L840.0 354.7 L825.8 358.2 L822.2 368.9 L827.6 374.3 L825.8 393.8 L828.5 397.4 L818.7 427.6 L825.8 434.7 L816.9 477.4 M829.4 326.2 L824.0 326.2 L800.9 333.3 L808.0 338.7 L793.8 351.1 L792.0 388.5 L804.5 400.9 L808.0 399.1 L802.7 411.6 L799.1 418.7 L818.7 422.3 M760.0 386.7 L767.1 384.9 L783.1 386.7 L792.0 388.5 M880.9 336.9 L877.4 351.1 L886.3 354.7 L882.7 361.8 L877.4 363.6 L868.5 393.8 L864.9 415.2 L856.0 432.9 L859.6 436.5 L852.5 457.8 L845.4 484.5 M760.0 424.0 L768.9 425.8 L768.9 463.2 L760.0 463.2 M760.0 480.1 L816.9 479.2 L845.4 484.5 L863.1 489.0 M760.0 524.5 L774.2 525.4 L774.2 530.0 M895.2 296.0 L937.8 306.7 L941.4 294.2 L944.9 290.7 M937.8 306.7 L936.1 313.8 L950.3 315.6 L991.2 320.9 L996.5 324.5 M950.3 315.6 L946.7 345.8 L941.4 351.1 L944.9 361.8 L936.1 400.9 L927.2 402.7 L923.6 416.9 M905.8 354.7 L911.2 352.9 L944.9 360.0 L985.8 367.1 L989.4 368.9 M920.0 415.2 L923.6 418.7 L952.1 411.6 L960.9 404.5 L975.2 384.9 L987.6 381.4 L989.4 368.9 M960.9 404.5 L968.1 415.2 L966.3 424.0 L962.7 427.6 L966.3 443.6 L973.4 440.0 L975.2 431.2 L984.1 404.5 L991.2 399.1 L996.5 399.1 M895.2 445.4 L937.8 445.4 L941.4 448.9 L948.5 440.0 L959.2 453.4 L966.3 447.2 L973.4 447.2 M941.4 448.9 L962.7 480.9 M973.4 432.9 L991.2 440.0 L1005.4 441.8 L1012.5 434.7 M998.3 383.1 L1009.0 377.8 L1016.1 358.2 L1032.1 349.4 L1035.6 331.6 L1026.7 322.7 L1016.1 320.9 L1009.0 313.8 M1032.1 349.4 L1044.5 361.8 L1060.0 379.6 M1041.0 411.6 L1048.1 418.7 L1060.0 422.3 M1025.0 431.2 L1037.4 434.7 L1060.0 436.5 M978.7 457.8 L984.1 466.7 L977.0 475.6 L980.5 480.9 L996.5 498.7 L1007.2 511.2 L1017.9 500.5 L1026.7 480.9 L1037.4 475.6 M977.0 480.9 L962.7 502.3 L952.1 498.7 L948.5 500.5 L957.4 509.4 L966.3 502.3 L977.0 516.5 L966.3 527.2 M1007.2 511.2 L1003.6 530.0 M1026.7 480.9 L1025.0 493.4 L1026.7 507.6 L1037.4 516.5 L1051.6 507.6 L1060.0 504.1 M1037.4 516.5 L1041.0 530.0 M930.7 518.3 L937.8 523.6 L941.4 520.1 L946.7 530.0 M1072.0 56.8 L1075.6 65.7 L1057.8 69.2 L1054.2 83.5 L1047.1 85.2 L1052.4 104.8 L1048.9 110.1 L1047.1 126.1 L1059.6 149.3 L1063.1 152.8 L1054.2 161.7 M1048.9 110.1 L1072.0 113.7 L1077.3 120.8 L1083.6 119.0 M1040.0 216.8 L1072.0 222.2 M1123.6 65.7 L1132.5 67.4 L1153.8 85.2 L1160.9 88.8 M1114.7 87.0 L1132.5 88.8 L1146.7 94.1 L1141.4 103.0 L1136.9 122.6 L1134.3 124.4 M1160.9 88.8 L1148.5 97.7 L1139.6 113.7 L1134.3 124.4 L1123.6 129.7 L1118.2 140.4 L1102.2 147.5 L1084.5 154.6 M1134.3 124.4 L1146.7 131.5 L1148.5 138.6 L1144.9 154.6 L1160.9 158.1 L1164.5 168.8 L1166.3 177.7 L1157.4 183.0 M1148.5 138.6 L1139.6 140.4 L1125.4 154.6 L1121.8 175.9 L1118.2 184.8 M1160.9 88.8 L1171.6 76.3 L1178.7 72.8 L1187.6 63.9 L1196.5 60.3 L1205.4 56.8 M1160.9 88.8 L1175.2 104.8 L1185.8 117.2 L1203.6 127.9 L1214.3 143.9 L1223.2 149.3 L1230.3 145.7 L1233.8 135.0 L1237.4 122.6 L1235.6 106.6 L1240.9 103.0 L1260.5 108.3 L1285.4 106.6 L1287.2 122.6 L1285.4 129.7 M1223.2 149.3 L1221.4 161.7 L1224.9 172.4 L1230.3 174.1 L1226.7 186.6 M1194.7 158.1 L1203.6 154.6 L1210.7 165.3 L1224.9 172.4 M1194.7 158.1 L1196.5 170.6 L1192.9 190.2 L1191.2 200.8 M1240.9 103.0 L1244.5 95.9 L1253.4 87.0 L1267.6 72.8 L1265.8 56.8 M1303.2 56.8 L1301.4 76.3 L1306.7 85.2 L1308.5 99.5 M1164.5 56.8 L1164.5 63.9 L1175.2 69.2 L1178.7 72.8 M1321.0 65.7 L1328.1 72.8 L1340.0 72.8 M1118.2 184.8 L1125.4 195.5 L1123.6 202.6 L1127.1 213.3 L1132.5 222.2 L1146.7 225.7 L1155.6 222.2 L1162.7 215.0 L1168.0 199.0 L1175.2 195.5 M1127.1 213.3 L1114.7 223.9 L1098.7 232.8 L1102.2 247.1 L1096.9 250.6 L1102.2 259.5 L1102.2 273.7 L1114.7 286.2 L1125.4 268.4 L1139.6 273.7 L1150.3 275.5 L1162.7 270.2 L1155.6 264.8 L1152.0 255.9 L1162.7 250.6 L1164.5 238.2 L1157.4 227.5 L1155.6 222.2 M1164.5 238.2 L1175.2 239.9 L1176.9 255.9 L1191.2 263.1 L1196.5 272.0 M1144.9 275.5 L1150.3 286.2 L1160.9 288.0 L1164.5 300.4 L1171.6 305.0 M1160.9 275.5 L1164.5 284.4 M1102.2 273.7 L1057.8 280.8 L1052.4 268.4" fill="none" stroke="#787878" stroke-width="1.6" stroke-linejoin="round" stroke-linecap="round"/>
<path d="M805.1 938.4 L820.5 948.2 L834.5 953.8 L854.1 959.4 L865.3 970.6 L873.7 981.8 M805.2 940.6 L819.3 946.2 L824.9 953.2 L841.7 957.4 L855.7 960.2 L864.1 968.6 L869.7 977.0 L878.1 981.2" fill="none" stroke="#9a9a9a" stroke-width="1.8" stroke-linejoin="round" stroke-linecap="round"/>
<path d="M221.1 56.4 L222.5 66.2 L211.3 80.2 L208.5 91.4 L223.9 111.1 L222.5 139.1 L225.3 162.9 L229.5 167.2 L221.1 178.4 L223.9 189.6 L215.5 203.6 L205.7 202.2 L202.3 223.2 L207.1 251.3 L211.3 279.3 L218.3 307.3 L225.3 335.4 L226.7 357.8 L232.3 374.9 M225.3 361.4 L228.1 368.4 L236.5 379.6 L232.3 396.4 L233.7 407.7 L229.5 413.3 L230.9 424.5 L225.3 434.3 L216.9 441.3 L221.1 452.5 L223.9 466.5 L228.1 477.8 L223.9 491.8 L216.9 500.2 L211.3 517.0 L205.7 531.0 L207.9 545.1 L205.1 561.9 L205.7 578.7 L200.1 592.7 L197.2 612.3 L188.8 623.6 L183.2 637.6 L179.0 646.0 L172.0 654.4 L177.6 668.4 L176.2 679.9 M177.6 666.4 L176.2 673.4 L166.4 687.4 L163.6 707.1 L160.8 726.7 L155.2 740.7 L158.0 749.1 L146.8 750.5 L149.6 744.9 L144.0 757.5 L146.8 768.7 L145.4 785.6 L138.4 794.0 L130.0 796.8 L118.7 794.0 L117.3 808.0 L122.9 819.2 L120.1 830.4 L125.7 844.4 L134.2 858.5 L137.0 872.5 L135.6 889.3 L137.0 903.3 L144.0 922.9 L153.8 942.6 L162.2 962.2 L165.0 984.9 M122.9 777.2 L125.7 785.6 L130.0 784.2 L127.2 777.2 L122.9 777.2 M107.5 893.5 L110.3 900.5 L113.7 897.7 L111.7 892.1 L107.5 893.5 M165.0 971.4 L163.6 986.8 L155.2 1003.6 L156.6 1017.7 L146.8 1023.3 L139.8 1031.7 L139.8 1054.1 L141.2 1076.5 L137.0 1090.6 L135.6 1107.4 L132.8 1115.8 L137.0 1132.6 L141.2 1149.4 L146.8 1160.7 L152.4 1164.9 L160.8 1163.5 L166.4 1156.5 L160.8 1166.3 L155.2 1167.7 L153.8 1177.5 L166.4 1180.3 L172.0 1178.9 L191.6 1173.3 L194.4 1163.5 L191.6 1157.9 L200.1 1150.8 L208.5 1152.2 L216.9 1160.7 L221.1 1169.1 L236.5 1160.7 L239.3 1138.2 L240.7 1155.1 L237.9 1163.5 L222.5 1169.1 L208.5 1185.9 L216.9 1191.5 L228.1 1191.5 L232.3 1202.7 L236.5 1213.9 L239.3 1227.9 L230.9 1211.1 L222.5 1208.3 L215.5 1216.7 L222.5 1227.9 L233.7 1236.4 M137.8 1276.5 L135.6 1250.4 L132.8 1222.3 L134.2 1194.3 L135.6 1183.1 L139.8 1188.7 L160.8 1183.1 L166.4 1188.7 L172.0 1202.7 L177.6 1216.7 L179.0 1222.3 L167.8 1227.9 L160.8 1239.2 L166.4 1250.4 L174.8 1261.6 L177.6 1272.8 L172.0 1276.5 M216.9 1236.4 L218.3 1261.6 L225.3 1276.5 M194.4 1173.3 L197.2 1181.7 L200.1 1180.3 L195.8 1171.9 M191.6 1216.7 L195.8 1220.9 L198.6 1216.7 L194.4 1215.3 L191.6 1216.7 M228.1 1202.7 L232.3 1191.5 L235.1 1194.3 L232.3 1204.1 L228.1 1202.7 M155.2 1239.2 L158.0 1247.6 L163.6 1250.4 L160.8 1242.0 L155.2 1239.2 M184.6 1249.0 L191.6 1250.4 L192.2 1248.1 L185.5 1247.6 M205.7 1253.2 L211.3 1260.2 L214.1 1256.0 L208.5 1251.8" fill="none" stroke="#8e8e8e" stroke-width="2.2" stroke-linejoin="round" stroke-linecap="round"/>
<path d="M1227.6 192.4 L1240.2 195.2 L1252.8 196.6 L1262.6 184.0 L1273.8 182.6 L1285.1 184.0 L1299.1 198.0 L1313.1 214.8 L1329.9 231.6 L1339.7 248.5 L1338.3 269.5 L1346.7 270.9 L1357.9 262.5 L1366.4 251.3 L1380.4 265.3 L1388.8 282.1 L1402.8 294.7 L1407.0 290.5 L1416.8 301.7 L1436.5 308.7 L1444.9 324.2 L1467.3 349.4 L1472.9 348.0 L1486.9 360.6 L1495.3 374.9 M1157.7 517.0 L1171.7 525.4 L1185.8 536.6 L1205.4 539.4 L1233.4 542.2 L1247.4 553.5 L1261.5 561.9 L1286.7 575.9 M1285.1 581.5 L1296.3 587.1 L1304.7 591.3 L1324.3 581.5 L1341.1 580.1 L1357.9 584.3 L1366.4 592.7 L1380.4 594.1 L1386.0 601.1 L1402.8 594.1 L1422.4 587.1 L1433.7 581.5 L1432.2 573.1 L1436.5 571.7 L1439.3 580.1 L1453.3 573.1 L1472.9 560.5 L1478.5 545.1 L1492.5 528.2 L1503.7 508.6 L1495.3 503.0 L1496.7 472.2 L1500.9 452.5 L1515.0 444.1 L1520.6 432.9 L1533.2 425.9 L1526.2 416.1 L1512.2 407.7 L1498.1 388.0 L1495.3 368.4 L1486.9 361.4 M1503.7 508.6 L1520.6 494.6 L1540.2 480.6 L1561.2 463.7" fill="none" stroke="#8e8e8e" stroke-width="2.2" stroke-linejoin="round" stroke-linecap="round"/>
<path d="M338.8 56.4 L337.4 66.2 L334.6 80.2 L336.0 94.3 L319.2 111.1 L323.4 127.9 L329.0 150.3 L331.8 162.9 L326.8 177.0 L337.4 184.0 L333.2 202.2 L315.0 205.0 L312.2 217.6 L306.6 237.2 L305.2 251.3 L309.4 261.1 L296.8 270.9 L291.2 279.3 L293.1 293.3 L291.2 304.5 L298.2 324.2 L306.6 332.6 L317.8 339.6 L308.0 346.6 L313.6 360.6 L317.8 374.9 M373.9 56.4 L379.5 63.4 L397.7 73.2 L394.9 88.6 L399.1 94.3 L393.5 105.5 L396.3 119.5 L392.1 133.5 L396.3 137.7 L403.3 134.9 L430.0 136.3 L446.8 143.3 L456.6 146.1 L460.8 153.1 L474.8 167.2 L488.0 178.4 M355.7 374.9 L361.3 355.0 L371.1 346.6 L387.9 337.6 L397.7 338.2 L407.5 346.6 L413.1 346.6 L414.5 363.4 L432.8 362.0 L444.0 356.4 L445.4 346.6 L472.0 339.6 L488.0 348.0 M470.0 162.9 L481.2 172.8 L495.2 184.0 L500.8 195.2 L514.9 212.0 L526.1 226.0 L538.7 240.1 L537.3 256.9 L542.9 273.7 L551.3 293.3 L559.7 310.1 L568.1 320.0 L582.2 325.6 L593.4 328.4 L601.8 322.8 L610.2 324.2 L615.8 320.0 L635.4 318.6 L649.4 320.0 L663.5 325.6 L671.9 332.6 L676.1 352.2 L694.3 353.6 L698.5 374.9 M530.3 374.9 L526.1 352.2 L521.9 335.4 L520.5 320.0 L537.3 317.2 L554.1 320.0 L568.1 320.0 M470.0 339.6 L478.4 341.0 L486.8 349.4 L506.4 352.2 L520.5 355.0 L526.1 352.2 M583.6 56.4 L583.6 64.8 L601.8 70.4 L615.8 83.0 L632.6 99.9 L638.2 113.9 L649.4 144.7 L657.9 170.0 L677.5 162.9 L692.9 144.7 L691.5 125.1 L736.4 117.2 L761.6 120.9 L772.8 125.1 L778.4 128.5 L798.0 131.3 L802.2 137.7 L847.1 143.3 L851.3 154.5 L865.3 162.9 L866.7 178.4 L870.9 186.8 L896.2 189.0 M657.9 170.0 L652.2 195.2 L643.8 217.6 L634.0 248.5 L635.4 279.3 L635.4 318.6 M687.3 56.4 L695.7 63.4 L699.9 83.0 L701.3 95.7 L704.1 98.5 L699.9 104.1 L702.7 111.1 L699.9 122.3 L691.5 125.1 M921.4 56.4 L913.0 97.1 L904.6 147.5 L896.2 189.0 L897.6 198.0 L918.6 222.7 L910.2 245.7 L899.0 279.3 L890.6 298.9 L887.8 307.3 L890.6 324.2 L893.4 335.4 L903.2 352.2 L907.4 374.9 M992.3 374.9 L999.3 352.2 L997.9 335.4 L1000.7 324.2 L999.3 312.9 L1004.9 305.9 L1020.3 301.7 L1042.8 276.5 L1048.4 265.3 L1062.4 251.3 L1070.8 234.4 L1077.8 223.2 L1075.0 212.0 L1077.8 203.6 L1073.6 192.4 L1079.2 167.2 L1082.0 139.1 L1084.8 113.9 L1093.2 99.9 L1104.4 90.0 L1115.7 85.8 L1118.5 69.0 L1124.1 56.4 M1073.6 192.4 L1087.6 193.8 L1107.2 195.2 L1121.3 186.8 L1146.5 182.6 L1163.3 184.0 L1177.3 191.0 L1185.8 200.8 L1191.4 212.0 L1194.2 220.4 L1206.8 230.2 M1352.6 56.4 L1354.0 60.6 L1340.0 71.8 L1328.7 77.4 L1323.1 91.4 L1309.1 102.7 L1300.7 116.7 L1286.7 130.7 L1269.9 147.5 L1258.7 155.9 L1247.4 167.2 L1236.2 178.4 L1226.4 186.8 L1222.2 198.0 L1208.2 212.0 L1204.0 220.4 L1206.8 230.2 L1209.6 240.1 L1202.6 248.5 L1201.2 259.7 L1197.0 276.5 L1188.6 293.3 L1190.0 304.5 L1185.8 315.8 L1175.9 327.0 L1178.7 341.0 L1177.3 352.2 L1181.5 363.4 L1173.1 374.9 M313.6 361.4 L319.2 371.2 L323.4 382.4 L327.6 393.6 L333.2 409.1 L338.8 414.7 L337.4 425.9 L333.2 428.7 L336.0 441.3 L341.6 449.7 L347.2 445.5 L355.7 449.7 L355.7 460.9 L351.5 472.2 L352.9 486.2 L351.5 497.4 L355.7 508.6 L355.7 519.8 L359.9 526.8 L345.8 531.0 L344.4 542.2 L334.6 559.1 L331.8 570.3 L327.6 581.5 L324.8 598.3 L323.4 608.1 L312.2 613.7 L313.6 619.4 L322.0 623.6 L324.8 640.4 L327.6 651.6 L331.8 662.8 L327.6 668.4 L330.4 679.9 M327.6 393.6 L334.6 386.6 L348.7 386.6 L357.1 379.6 L355.7 368.4 L361.3 361.4 M470.6 679.9 L472.0 668.4 L488.0 667.0 M527.5 361.4 L533.1 376.8 L537.3 390.8 L534.5 407.7 L540.1 427.3 L544.3 449.7 L554.1 469.3 L562.5 480.6 L576.5 493.2 L573.7 511.4 L568.1 519.8 L570.9 533.8 L576.5 550.7 L585.0 564.7 L590.6 584.3 L593.4 601.1 L590.6 623.6 L586.4 640.4 L585.0 662.8 M698.5 361.4 L699.9 371.2 L694.3 390.8 L687.3 413.3 L683.1 435.7 L684.5 472.2 L685.9 528.2 L685.9 577.3 L687.3 612.3 L688.1 662.2 M685.9 577.3 L805.1 577.3 M805.1 526.8 L805.1 577.3 L805.9 679.9 M805.1 526.8 L840.1 526.0 L921.4 526.8 L943.0 505.8 M913.0 374.0 L911.6 382.4 L920.0 396.4 L918.6 410.5 L901.8 432.9 L876.6 472.2 L840.1 526.0 M470.0 668.4 L585.0 662.8 L688.1 662.2 M993.7 361.4 L992.3 376.8 L996.5 393.6 L1000.7 407.7 L1009.1 420.3 L1017.5 428.7 L1023.1 430.1 L1031.5 441.3 L1042.8 452.5 L1056.8 463.7 L1070.8 469.3 L1093.2 483.4 L1107.2 487.6 L1121.3 493.2 L1132.5 503.0 L1149.3 504.4 L1156.3 511.4 L1157.7 522.6 L1149.3 525.4 L1145.1 528.2 L1146.5 539.4 L1143.7 545.1 L1149.3 553.5 L1163.3 567.5 L1177.3 575.9 L1191.4 581.5 L1205.4 592.7 L1222.2 606.7 L1232.0 620.8 L1233.4 632.0 L1227.8 643.2 L1219.4 651.6 L1215.2 665.6 L1215.2 679.9 M1023.1 430.1 L1018.9 441.3 L1013.3 455.3 L1011.9 462.3 L995.1 463.7 L985.3 458.1 L979.7 462.3 L925.0 522.6 M1178.7 361.4 L1177.3 365.6 L1171.7 374.0 L1173.1 388.0 L1177.3 402.1 L1178.7 416.1 L1171.7 424.5 L1157.7 428.7 L1153.5 438.5 L1154.9 452.5 L1149.3 463.7 L1146.5 477.8 L1152.1 494.6 L1156.3 511.4 M327.6 666.4 L329.0 676.2 L326.2 690.2 L319.2 690.2 L308.0 701.4 L306.6 711.3 L298.2 712.7 L288.4 721.1 L289.8 735.1 L282.8 740.7 L281.4 754.7 L285.6 760.3 L280.0 764.5 L285.6 777.2 L281.4 788.4 L285.6 805.2 L284.2 822.0 L291.2 838.8 L298.2 855.7 L301.0 869.7 L306.6 886.5 L315.0 894.9 L312.2 908.9 L298.2 911.7 L287.0 920.1 L278.6 928.6 L280.0 945.4 L284.2 956.6 L280.0 970.6 L275.8 984.9 M327.6 690.2 L331.8 701.4 L341.6 707.1 L348.7 721.1 L359.9 735.1 L373.9 746.3 L376.7 760.3 L390.7 770.1 L410.3 770.1 L424.4 775.7 L428.6 784.2 L444.0 787.0 L455.2 791.2 L469.2 798.2 L488.0 801.0 M488.0 667.8 L470.6 667.8 L474.8 670.6 L474.8 681.8 L479.0 749.1 L483.2 833.2 L486.0 894.9 L488.0 896.3 M488.0 917.3 L474.8 922.9 L463.6 934.2 L455.2 948.2 L444.0 959.4 L432.8 967.8 L427.2 979.0 L421.6 984.9 M474.2 683.2 L481.2 802.4 L485.4 892.1 L493.8 900.5 L498.0 915.9 L481.2 918.7 L470.0 927.2 M470.0 801.0 L486.8 800.4 L506.4 802.4 L513.5 810.8 L514.9 822.0 L506.4 830.4 L507.9 837.4 L517.7 844.4 L526.1 852.9 L542.9 854.3 L552.7 851.5 L556.9 861.3 L568.1 868.3 L582.2 873.9 L593.4 880.9 L594.8 889.3 L610.2 893.5 L632.6 893.5 L652.2 899.1 L660.7 894.9 L674.7 900.5 L685.9 897.7 L699.9 896.3 L722.3 897.7 L739.2 900.5 L753.2 906.1 L767.2 917.3 L778.4 925.8 L792.4 934.2 L805.1 938.4 M805.1 666.4 L805.1 984.9 M1213.8 666.4 L1215.2 676.2 L1222.2 690.2 L1233.4 701.4 L1251.6 704.3 L1257.2 709.9 L1258.7 729.5 L1258.1 751.9 L1247.4 768.7 L1236.2 782.8 L1225.0 799.6 L1211.0 816.4 L1197.0 833.2 L1191.4 847.2 L1174.5 861.3 L1149.3 875.3 L1121.3 885.1 L1093.2 892.1 L1065.2 897.7 L1037.2 903.3 L1003.5 908.9 L969.9 913.1 L941.8 914.0 L925.0 911.7 M280.0 971.4 L278.6 981.2 L267.3 984.0 L265.9 992.4 L271.5 1012.1 L267.3 1026.1 L261.7 1028.9 L264.5 1040.1 L271.5 1045.7 L268.7 1052.7 L263.1 1056.9 L261.7 1070.9 L257.5 1082.2 L261.7 1093.4 L265.9 1104.6 L267.3 1127.0 L268.7 1143.8 L270.1 1155.1 L275.8 1166.3 L278.6 1185.9 L281.4 1194.3 L272.9 1199.9 L256.1 1202.7 L257.5 1213.9 L264.5 1225.1 L261.7 1242.0 L263.1 1261.6 L270.1 1272.8 L277.2 1276.5 M430.0 971.4 L418.7 981.2 L404.7 992.4 L387.9 1000.8 L379.5 1012.1 L380.9 1026.1 L373.9 1042.9 L368.3 1051.3 L354.3 1055.5 L343.0 1056.9 L329.0 1065.3 L317.8 1070.9 L312.2 1082.2 L317.8 1090.6 L316.4 1099.0 L310.8 1107.4 L301.0 1108.8 L284.2 1104.6 L267.3 1106.0 M280.0 1186.5 L488.0 1171.3 M470.0 1172.4 L582.2 1167.7 L697.1 1164.0 M876.6 981.2 L873.7 998.0 L868.1 1014.9 L862.5 1023.3 L868.1 1034.5 L879.4 1031.7 L882.2 1042.9 L876.6 1062.5 L862.5 1073.7 L842.9 1082.2 L823.3 1092.0 L800.8 1093.4 L775.6 1092.0 L761.6 1082.2 L747.6 1075.1 L733.6 1068.1 L716.7 1063.9 L705.5 1059.7 L695.7 1062.0 L691.5 1073.7 L691.5 1090.6 L694.3 1107.4 L701.3 1124.2 L702.7 1143.8 L698.5 1155.1 L698.5 1166.3 L704.1 1174.7 L713.9 1180.3 L725.1 1183.1 L739.2 1184.5 L758.8 1177.5 L772.8 1170.5 L781.2 1170.5 L786.8 1183.1 L791.0 1202.7 L789.6 1222.3 L781.2 1230.8 L758.8 1237.8 L750.4 1227.9 L747.6 1213.9 L736.4 1208.3 L722.3 1206.9 L708.3 1216.7 L701.3 1226.5 L708.3 1235.0 L725.1 1239.2 L746.2 1243.4 L739.2 1250.4 L722.3 1256.0 L711.1 1264.4 L698.5 1272.8 M739.2 1184.5 L730.8 1191.5 L726.5 1199.9 L739.2 1201.3 L756.0 1199.9 L763.0 1194.3 L760.2 1185.9 L742.0 1184.5 M805.1 971.4 L805.1 1055.5 L817.7 1058.3 L828.9 1063.9 L837.3 1073.7 L842.9 1082.2 M886.5 899.9 L892.2 906.9 L903.4 911.1 L920.2 913.9 L931.4 914.2 M872.5 901.3 L873.9 915.3 L872.5 932.2 L876.7 943.4 L892.2 949.0 L890.7 965.8 L886.5 981.2 L875.3 982.6" fill="none" stroke="#ffffff" stroke-width="2.7" stroke-linejoin="round" stroke-linecap="round"/>
<g fill="none" stroke="#ffffff" stroke-linecap="round">
<path d="M862 893L876 890.5" stroke-width="8"/>
<path d="M872.5 899L874 915L877 943" stroke-width="5"/>
<path d="M884 914L902 927" stroke-width="6.5"/>
<path d="M881 923L897 940" stroke-width="6"/>
<path d="M878 935L889 947" stroke-width="5"/>
<path d="M883.5 997L884.5 1001" stroke-width="3.2"/>
<path d="M886.5 1008L888 1017" stroke-width="3.5"/>
<path d="M870 1018L873 1026" stroke-width="4"/>
</g>
<path d="M888 918L897 924M885 927L893 936" stroke="#1b1b1b" stroke-width="1.6" fill="none" stroke-linecap="round"/>
<rect x="740.5" y="269.5" width="17" height="17" fill="none" stroke="#727272" stroke-width="1.5"/>
<rect x="413.5" y="407" width="8" height="7" fill="none" stroke="#727272" stroke-width="1.2"/>
<g fill="#ffffff">
<circle cx="551" cy="114.5" r="7"/>
<circle cx="437" cy="297" r="7"/>
<circle cx="749" cy="278" r="7"/>
<circle cx="998" cy="299" r="7"/>
<circle cx="1011" cy="308" r="7"/>
<circle cx="1197" cy="102" r="7"/>
<circle cx="421" cy="411" r="7"/>
<circle cx="599" cy="437" r="7"/>
<circle cx="1002" cy="489" r="7"/>
<circle cx="1147" cy="555" r="7"/>
<circle cx="1180" cy="582" r="7"/>
<circle cx="744" cy="713" r="7"/>
<circle cx="1189" cy="839" r="7"/>
<circle cx="877" cy="890" r="7"/>
<circle cx="498" cy="916" r="7"/>
<circle cx="696" cy="1062" r="7"/>
<circle cx="829" cy="1065" r="7"/>
<circle cx="698" cy="1273" r="7"/>
</g>
<g fill="#ffffff" stroke="#ffffff" stroke-width="0.35" font-family="'DejaVu Sans Mono','Liberation Mono',monospace" font-size="22">
<text x="559" y="106.5">LA RIOJA</text>
<text x="445" y="289">SAN JUAN</text>
<text x="757" y="270">CÓRDOBA</text>
<text x="997" y="289" text-anchor="end">SANTA FE</text>
<text x="1019" y="300">PARANÁ</text>
<text x="1205" y="92.7">MERCEDES</text>
<text x="429" y="403">MENDOZA</text>
<text x="607" y="429">SAN LUIS</text>
<text x="1010" y="481">PERGAMINO</text>
<text x="1155" y="546.2">C.A.B.A.</text>
<text x="1188" y="574">LA PLATA</text>
<text x="752" y="705">SANTA ROSA</text>
<text x="1197" y="831">MAR DEL PLATA</text>
<text x="885" y="882">BAHÍA BLANCA</text>
<text x="506" y="908">NEUQUÉN</text>
<text x="695" y="1057" text-anchor="end">LAS GRUTAS</text>
<text x="837" y="1057">VIEDMA</text>
<text x="706" y="1265">RAWSON</text>
</g>
<rect x="22" y="61" width="333" height="102" fill="#787878" fill-opacity="0.62"/>
<rect x="35.7" y="74.7" width="304.5" height="72.6" fill="none" stroke="#ffa500" stroke-width="5.5"/>
<g fill="#ffffff" font-family="'DejaVu Sans Mono','Liberation Mono',monospace" font-size="22.3"><text x="47" y="106">Avisos Meteorológicos</text><text x="47" y="132.5">a Muy Corto Plazo</text></g>
</g>
<rect x="1563" y="54.95" width="31" height="19.80" fill="#88dec0"/>
<rect x="1563" y="74.25" width="31" height="19.81" fill="#88dec0"/>
<rect x="1563" y="93.56" width="31" height="19.81" fill="#88dec0"/>
<rect x="1563" y="112.87" width="31" height="19.81" fill="#88dec0"/>
<rect x="1563" y="132.17" width="31" height="19.81" fill="#88dec0"/>
<rect x="1563" y="151.48" width="31" height="19.80" fill="#92e2c6"/>
<rect x="1563" y="170.78" width="31" height="19.80" fill="#92e2c6"/>
<rect x="1563" y="190.08" width="31" height="19.81" fill="#a4ebcf"/>
<rect x="1563" y="209.39" width="31" height="19.81" fill="#b2efd8"/>
<rect x="1563" y="228.69" width="31" height="19.81" fill="#c4f3e2"/>
<rect x="1563" y="248.00" width="31" height="19.81" fill="#dbf7ec"/>
<rect x="1563" y="267.31" width="31" height="19.81" fill="#ffffff"/>
<rect x="1563" y="286.61" width="31" height="19.81" fill="#990099"/>
<rect x="1563" y="305.92" width="31" height="19.80" fill="#b300b3"/>
<rect x="1563" y="325.22" width="31" height="19.81" fill="#cd00cd"/>
<rect x="1563" y="344.52" width="31" height="19.81" fill="#ee00ee"/>
<rect x="1563" y="363.83" width="31" height="19.81" fill="#dc0094"/>
<rect x="1563" y="383.13" width="31" height="19.81" fill="#c6005a"/>
<rect x="1563" y="402.44" width="31" height="19.81" fill="#990000"/>
<rect x="1563" y="421.75" width="31" height="19.81" fill="#ad0008"/>
<rect x="1563" y="441.05" width="31" height="19.80" fill="#c00012"/>
<rect x="1563" y="460.35" width="31" height="19.81" fill="#cb0020"/>
<rect x="1563" y="479.66" width="31" height="19.81" fill="#e8103a"/>
<rect x="1563" y="498.96" width="31" height="19.81" fill="#de8018"/>
<rect x="1563" y="518.27" width="31" height="19.81" fill="#da9a1e"/>
<rect x="1563" y="537.58" width="31" height="19.80" fill="#d2ae26"/>
<rect x="1563" y="556.88" width="31" height="19.81" fill="#c2c232"/>
<rect x="1563" y="576.19" width="31" height="19.80" fill="#cfd035"/>
<rect x="1563" y="595.49" width="31" height="19.81" fill="#d7da38"/>
<rect x="1563" y="614.80" width="31" height="19.80" fill="#e2e43c"/>
<rect x="1563" y="634.10" width="31" height="19.81" fill="#eef040"/>
<rect x="1563" y="653.41" width="31" height="19.80" fill="#206a1a"/>
<rect x="1563" y="672.71" width="31" height="19.80" fill="#27821e"/>
<rect x="1563" y="692.01" width="31" height="19.81" fill="#2c9626"/>
<rect x="1563" y="711.32" width="31" height="19.80" fill="#33a62c"/>
<rect x="1563" y="730.62" width="31" height="19.81" fill="#3cb82c"/>
<rect x="1563" y="749.93" width="31" height="19.80" fill="#42c832"/>
<rect x="1563" y="769.24" width="31" height="19.81" fill="#4ade36"/>
<rect x="1563" y="788.54" width="31" height="19.80" fill="#52f03c"/>
<rect x="1563" y="807.85" width="31" height="19.81" fill="#2aa8d8"/>
<rect x="1563" y="827.15" width="31" height="19.80" fill="#2a9fd0"/>
<rect x="1563" y="846.46" width="31" height="19.80" fill="#2b94c6"/>
<rect x="1563" y="865.76" width="31" height="19.81" fill="#2c92c4"/>
<rect x="1563" y="885.07" width="31" height="19.80" fill="#2e88ba"/>
<rect x="1563" y="904.37" width="31" height="19.81" fill="#2e88ba"/>
<rect x="1563" y="923.68" width="31" height="19.80" fill="#3579aa"/>
<rect x="1563" y="942.98" width="31" height="19.81" fill="#3579aa"/>
<rect x="1563" y="962.29" width="31" height="19.80" fill="#396d9f"/>
<rect x="1563" y="981.59" width="31" height="19.80" fill="#396d9f"/>
<rect x="1563" y="1000.89" width="31" height="19.81" fill="#396d9f"/>
<rect x="1563" y="1020.20" width="31" height="19.80" fill="#3a6194"/>
<rect x="1563" y="1039.50" width="31" height="19.81" fill="#3a6194"/>
<rect x="1563" y="1058.81" width="31" height="19.81" fill="#3a6194"/>
<rect x="1563" y="1078.12" width="31" height="19.81" fill="#3c5688"/>
<rect x="1563" y="1097.42" width="31" height="19.81" fill="#3c5688"/>
<rect x="1563" y="1116.73" width="31" height="19.80" fill="#3c5688"/>
<rect x="1563" y="1136.03" width="31" height="19.81" fill="#3d4b7a"/>
<rect x="1563" y="1155.34" width="31" height="19.81" fill="#3d4b7a"/>
<rect x="1563" y="1174.64" width="31" height="19.80" fill="#3d4b7a"/>
<rect x="1563" y="1193.94" width="31" height="19.81" fill="#3c3f6c"/>
<rect x="1563" y="1213.25" width="31" height="19.81" fill="#3c3f6c"/>
<rect x="1563" y="1232.56" width="31" height="19.81" fill="#3c3f6c"/>
<rect x="1563" y="1251.86" width="31" height="19.80" fill="#3c3f6c"/>
<rect x="1563" y="1271.16" width="31" height="6.13" fill="#3c3f6c"/>
<g fill="#000">
<rect x="14.8" y="54" width="1580.2" height="1.9"/>
<rect x="14.8" y="54" width="1.8" height="1222.8"/>
<rect x="1561.6" y="54" width="2.1" height="1222.8"/>
<rect x="1593.1" y="54" width="1.9" height="1222.8"/>
</g>
<rect x="14.8" y="1276.8" width="1657" height="1" fill="#efefef"/>
<g font-family="'DejaVu Sans','Liberation Sans',sans-serif" font-size="27.3" fill="#000">
<rect x="1595" y="1231.5" width="9" height="2.1" fill="#000"/>
<text x="1614" y="1242.6">−15</text>
<rect x="1595" y="1167.2" width="9" height="2.1" fill="#000"/>
<text x="1614" y="1178.3">−10</text>
<rect x="1595" y="1102.8" width="9" height="2.1" fill="#000"/>
<text x="1614" y="1113.9">−5</text>
<rect x="1595" y="1038.5" width="9" height="2.1" fill="#000"/>
<text x="1614" y="1049.6">0</text>
<rect x="1595" y="974.1" width="9" height="2.1" fill="#000"/>
<text x="1614" y="985.2">5</text>
<rect x="1595" y="909.8" width="9" height="2.1" fill="#000"/>
<text x="1614" y="920.9">10</text>
<rect x="1595" y="845.4" width="9" height="2.1" fill="#000"/>
<text x="1614" y="856.5">15</text>
<rect x="1595" y="781.1" width="9" height="2.1" fill="#000"/>
<text x="1614" y="792.2">20</text>
<rect x="1595" y="716.8" width="9" height="2.1" fill="#000"/>
<text x="1614" y="727.9">25</text>
<rect x="1595" y="652.4" width="9" height="2.1" fill="#000"/>
<text x="1614" y="663.5">30</text>
<rect x="1595" y="588.0" width="9" height="2.1" fill="#000"/>
<text x="1614" y="599.1">35</text>
<rect x="1595" y="523.7" width="9" height="2.1" fill="#000"/>
<text x="1614" y="534.8">40</text>
<rect x="1595" y="459.3" width="9" height="2.1" fill="#000"/>
<text x="1614" y="470.4">45</text>
<rect x="1595" y="395.0" width="9" height="2.1" fill="#000"/>
<text x="1614" y="406.1">50</text>
<rect x="1595" y="330.6" width="9" height="2.1" fill="#000"/>
<text x="1614" y="341.8">55</text>
<rect x="1595" y="266.3" width="9" height="2.1" fill="#000"/>
<text x="1614" y="277.4">60</text>
<rect x="1595" y="201.9" width="9" height="2.1" fill="#000"/>
<text x="1614" y="213.0">65</text>
<rect x="1595" y="137.6" width="9" height="2.1" fill="#000"/>
<text x="1614" y="148.7">70</text>
<rect x="1595" y="73.2" width="9" height="2.1" fill="#000"/>
<text x="1614" y="84.3">75</text>
</g>
<text x="787.5" y="38.8" text-anchor="middle" font-family="'DejaVu Sans Mono','Liberation Mono',monospace" font-size="30.6" fill="#000">Mosaico ZH MAX [dBZ] 13.09.2025 09:40HOA (12:40UTC)</text>
<g transform="translate(40,1280) scale(0.23711)">
<path d="M436.8 234.4A149 149 0 1 0 433.0 376.5" fill="none" stroke="#fdb515" stroke-width="75"/>
<path d="M280 240C340 215 400 215 450 235C490 250 520 245 547 225L547 288C520 305 480 305 440 290C390 272 340 275 280 300Z" fill="#0b93d5"/>
<path d="M280 320C340 295 400 295 450 315C490 330 520 325 547 305L547 368C520 385 480 385 440 370C390 352 340 355 280 380Z" fill="#0b93d5"/>
<g font-family="'Liberation Sans',Arial,sans-serif" fill="#222222" font-size="105">
<text x="596" y="195" textLength="446" lengthAdjust="spacingAndGlyphs">Servicio</text>
<text x="596" y="300" textLength="800" lengthAdjust="spacingAndGlyphs">Meteorológico</text>
<text x="596" y="405" textLength="478" lengthAdjust="spacingAndGlyphs">Nacional</text>
<text x="600" y="488" font-size="60" fill="#2a2a2a" stroke="#2a2a2a" stroke-width="2.4" textLength="370" lengthAdjust="spacingAndGlyphs">Argentina</text>
</g></g>
<g transform="translate(479.0,1295.0)" fill="none" stroke="#4a5474" stroke-linecap="round"><path d="M28.1 24.4L14.3 26.8M28.0 23.0L18.0 23.0M28.1 21.6L14.3 19.2M28.5 20.3L19.1 16.8M29.1 19.0L16.9 12.0M29.9 17.9L22.2 11.4M30.9 16.9L21.9 6.1M32.0 16.1L27.0 7.4M33.3 15.5L28.5 2.3M34.6 15.1L32.9 5.3M36.0 15.0L36.0 1.0M37.4 15.1L39.1 5.3M38.7 15.5L43.5 2.3M40.0 16.1L45.0 7.4M41.1 16.9L50.1 6.1M42.1 17.9L49.8 11.4M42.9 19.0L55.1 12.0M43.5 20.3L52.9 16.8M43.9 21.6L57.7 19.2M44.0 23.0L54.0 23.0M43.9 24.4L57.7 26.8" stroke-width="1.1"/><circle cx="36" cy="23" r="6.5" fill="#e6e6e6" stroke-width="1.2"/><path d="M33 22h2M37 22h2M34.5 25.5h3" stroke-width="0.9"/><ellipse cx="36" cy="66" rx="32.5" ry="42" stroke="#6b7592" stroke-width="4.2" stroke-dasharray="1.4 1.2" opacity="0.7"/><ellipse cx="36" cy="66" rx="32.5" ry="42" stroke-width="0.6"/><path d="M24 28 Q36 21 48 28 L48 32 Q36 26 24 32Z" fill="#e6e6e6" stroke="none"/><ellipse cx="36" cy="66" rx="26" ry="37.5" stroke-width="1.2" fill="#e6e6e6"/><path d="M21.4 36.0H50.6M17.9 40.6H54.1M15.4 45.2H56.6M13.6 49.8H58.4M12.3 54.4H59.7M11.5 59.0H60.5M11.1 63.6H60.9" stroke-width="0.8" opacity="0.8"/><path d="M10.2 66H61.8" stroke-width="0.8"/><path d="M36 48V100" stroke-width="1.6"/><path d="M29 50 Q27 40 35 37 Q44 36 44 44 Q46 50 41 52 Q36 49 29 50Z" fill="#e6e6e6" stroke-width="1.2"/><path d="M12 80 Q24 70 34 75 L38 75 Q48 70 60 80" stroke-width="1.1"/><path d="M28 76 Q36 70 44 76 Q36 82 28 76Z" fill="#e6e6e6" stroke-width="1.1"/><path d="M30 106h12v5h-12z" fill="#4a5474" stroke-width="1"/><path d="M31 111 L25 117 M33 111 L29 116 M41 111 L47 117 M39 111 L43 116" stroke-width="1.6"/></g>
<g font-family="'Liberation Serif','DejaVu Serif',serif" fill="#232d4f">
<text x="563" y="1345.2" font-size="25" font-weight="bold" textLength="123.5" lengthAdjust="spacingAndGlyphs">Ministerio</text>
<text x="563" y="1370.1" font-size="25" font-weight="bold" textLength="125" lengthAdjust="spacingAndGlyphs">de Defensa</text>
<text x="563" y="1389.5" font-size="15" fill="#3b4567" stroke="#3b4567" stroke-width="0.3" textLength="141" lengthAdjust="spacingAndGlyphs">República Argentina</text>
</g>
<g transform="translate(819.6,1295.0)" fill="none" stroke="#4a5474" stroke-linecap="round"><path d="M28.1 24.4L14.3 26.8M28.0 23.0L18.0 23.0M28.1 21.6L14.3 19.2M28.5 20.3L19.1 16.8M29.1 19.0L16.9 12.0M29.9 17.9L22.2 11.4M30.9 16.9L21.9 6.1M32.0 16.1L27.0 7.4M33.3 15.5L28.5 2.3M34.6 15.1L32.9 5.3M36.0 15.0L36.0 1.0M37.4 15.1L39.1 5.3M38.7 15.5L43.5 2.3M40.0 16.1L45.0 7.4M41.1 16.9L50.1 6.1M42.1 17.9L49.8 11.4M42.9 19.0L55.1 12.0M43.5 20.3L52.9 16.8M43.9 21.6L57.7 19.2M44.0 23.0L54.0 23.0M43.9 24.4L57.7 26.8" stroke-width="1.1"/><circle cx="36" cy="23" r="6.5" fill="#e6e6e6" stroke-width="1.2"/><path d="M33 22h2M37 22h2M34.5 25.5h3" stroke-width="0.9"/><ellipse cx="36" cy="66" rx="32.5" ry="42" stroke="#6b7592" stroke-width="4.2" stroke-dasharray="1.4 1.2" opacity="0.7"/><ellipse cx="36" cy="66" rx="32.5" ry="42" stroke-width="0.6"/><path d="M24 28 Q36 21 48 28 L48 32 Q36 26 24 32Z" fill="#e6e6e6" stroke="none"/><ellipse cx="36" cy="66" rx="26" ry="37.5" stroke-width="1.2" fill="#e6e6e6"/><path d="M21.4 36.0H50.6M17.9 40.6H54.1M15.4 45.2H56.6M13.6 49.8H58.4M12.3 54.4H59.7M11.5 59.0H60.5M11.1 63.6H60.9" stroke-width="0.8" opacity="0.8"/><path d="M10.2 66H61.8" stroke-width="0.8"/><path d="M36 48V100" stroke-width="1.6"/><path d="M29 50 Q27 40 35 37 Q44 36 44 44 Q46 50 41 52 Q36 49 29 50Z" fill="#e6e6e6" stroke-width="1.2"/><path d="M12 80 Q24 70 34 75 L38 75 Q48 70 60 80" stroke-width="1.1"/><path d="M28 76 Q36 70 44 76 Q36 82 28 76Z" fill="#e6e6e6" stroke-width="1.1"/><path d="M30 106h12v5h-12z" fill="#4a5474" stroke-width="1"/><path d="M31 111 L25 117 M33 111 L29 116 M41 111 L47 117 M39 111 L43 116" stroke-width="1.6"/></g>
<g font-family="'Liberation Serif','DejaVu Serif',serif" fill="#232d4f">
<text x="905" y="1345.2" font-size="25" font-weight="bold" textLength="127" lengthAdjust="spacingAndGlyphs">Ministerio</text>
<text x="905" y="1369.6" font-size="25" font-weight="bold" textLength="152.5" lengthAdjust="spacingAndGlyphs">de Economía</text>
<text x="905" y="1389.7" font-size="15" fill="#3b4567" stroke="#3b4567" stroke-width="0.3" textLength="143.5" lengthAdjust="spacingAndGlyphs">República Argentina</text>
</g>
<rect x="1154.8" y="1306.7" width="100.7" height="100.2" fill="#b9b5b3"/>
<rect x="1160" y="1312" width="90.5" height="78.3" fill="#ececec"/>
<text x="1167" y="1361" font-family="'Liberation Sans',Arial,sans-serif" font-weight="bold" font-size="62" fill="#e53232" stroke="#e53232" stroke-width="1.6" textLength="76" lengthAdjust="spacingAndGlyphs" transform="translate(0,0)">INTA</text>
<rect x="1165" y="1365.4" width="80" height="6.6" fill="#3a86ce"/>
<rect x="1165" y="1377.8" width="80" height="7.2" fill="#3a86ce"/>
</svg>
</body></html>
